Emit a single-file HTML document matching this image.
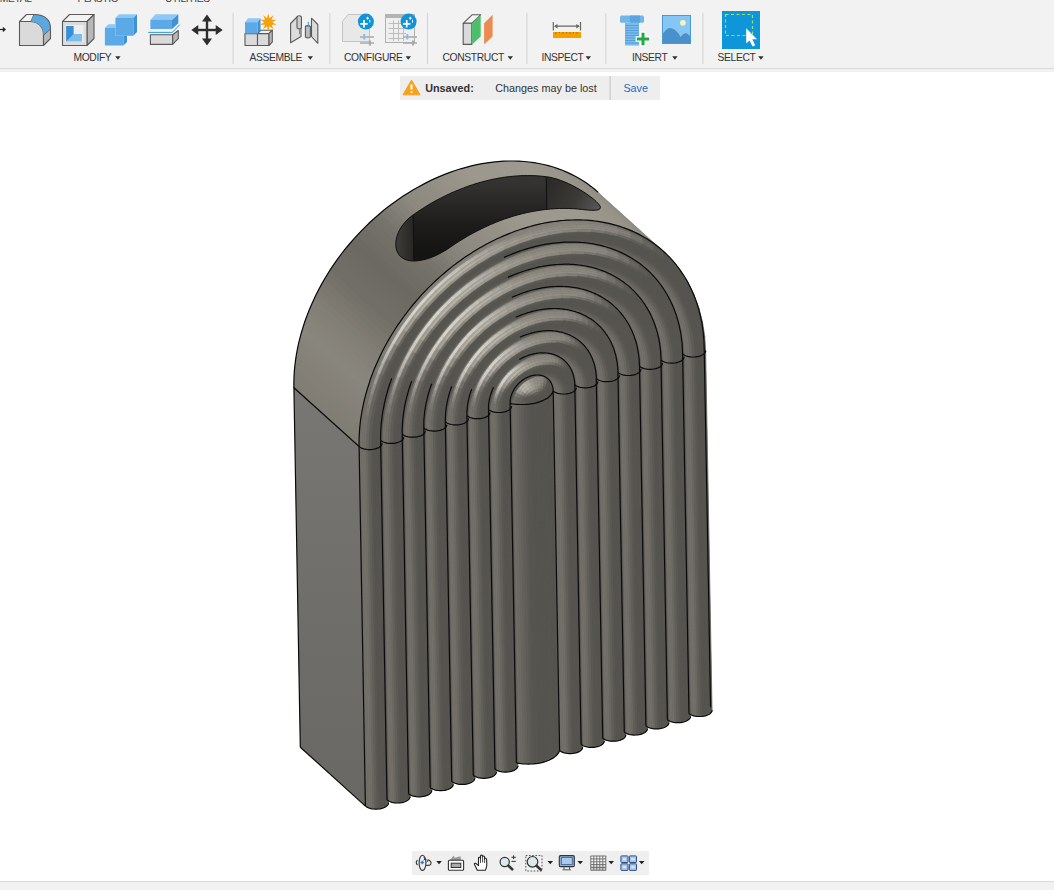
<!DOCTYPE html>
<html><head><meta charset="utf-8"><style>
html,body{margin:0;padding:0;width:1054px;height:890px;overflow:hidden;background:#fff;font-family:"Liberation Sans",sans-serif}
#tb{position:absolute;left:0;top:0;width:1054px;height:68px;background:#f2f2f2}
#tbl{position:absolute;left:0;top:68px;width:1054px;height:1px;background:#dadada}
#tbl2{position:absolute;left:0;top:69px;width:1054px;height:3px;background:#f1f1f1}
.lb{position:absolute;top:52.1px;font-size:10.3px;letter-spacing:-0.36px;color:#333;white-space:nowrap;line-height:12px}
.tl{position:absolute;top:-7.1px;font-size:10.3px;letter-spacing:-0.36px;color:#444;white-space:nowrap;line-height:12px}
#nb{position:absolute;left:400px;top:76px;width:260px;height:24px;background:#eeeeee}
.nt{position:absolute;top:81.6px;font-size:10.8px;line-height:13px;color:#333;white-space:nowrap}
#bb{position:absolute;left:412px;top:851px;width:237px;height:24px;background:#efefef}
#bl{position:absolute;left:0;top:881px;width:1054px;height:1px;background:#dadada}
#bg{position:absolute;left:0;top:882px;width:1054px;height:8px;background:#f1f1f1}
svg{position:absolute;left:0;top:0}
</style></head><body>
<div id="tb"></div><div id="tbl"></div><div id="tbl2"></div>
<div class="tl" style="left:-35px">SHEET METAL</div>
<div class="tl" style="left:77.4px">PLASTIC</div>
<div class="tl" style="left:165px">UTILITIES</div>
<div class="lb" style="left:73.5px">MODIFY</div>
<div class="lb" style="left:249.5px">ASSEMBLE</div>
<div class="lb" style="left:344px">CONFIGURE</div>
<div class="lb" style="left:442.5px">CONSTRUCT</div>
<div class="lb" style="left:541.4px">INSPECT</div>
<div class="lb" style="left:632px">INSERT</div>
<div class="lb" style="left:717.6px">SELECT</div>
<div id="nb"></div>
<div class="nt" style="left:425.2px;font-weight:bold">Unsaved:</div>
<div class="nt" style="left:495.3px">Changes may be lost</div>
<div class="nt" style="left:623.4px;color:#1a6fc0">Save</div>
<div id="bb"></div><div id="bl"></div><div id="bg"></div>
<svg width="1054" height="890" style="position:absolute;left:0;top:0"><defs><linearGradient id="lfg" gradientUnits="userSpaceOnUse" x1="0" y1="390" x2="0" y2="805"><stop offset="0" stop-color="#787773"/><stop offset="0.5" stop-color="#6f6e6a"/><stop offset="1" stop-color="#696864"/></linearGradient></defs><path d="M365.4 806.1l-6.3-359.6-65.2-58.8 6.4 359.5z" fill="url(#lfg)"/><path d="M293.9 387.7l0-4.8 .1-4.7 .2-4.8 .4-4.8 .5-4.8 .6-4.9 .8-4.9 .9-4.8 1-4.9 1.2-4.9 1.3-4.9 1.4-4.9 1.5-4.9 1.7-4.9 1.7-4.8 1.9-4.9 2.1-4.8 2.1-4.8 2.3-4.7 2.3-4.8 2.5-4.7 2.6-4.6 2.7-4.6 2.8-4.6 2.9-4.5 3.1-4.5 3.1-4.4 3.2-4.4 3.3-4.2 3.4-4.3 3.5-4.1 3.6-4.1 3.7-4 3.7-3.9 3.9-3.8 3.9-3.8 4-3.6 4-3.6 4.1-3.5 4.2-3.4 4.3-3.2 4.3-3.2 4.3-3.1 4.4-3 4.5-2.8 4.5-2.8 4.6-2.6 4.5-2.5 4.7-2.5 4.6-2.2 4.7-2.2 4.7-2.1 4.7-1.9 4.7-1.8 4.8-1.6 4.7-1.6 4.8-1.4 4.8-1.3 4.7-1.1 4.8-1.1 4.7-.9 4.8-.7 4.7-.6 4.7-.5 4.7-.4 4.6-.2 4.6-.1 4.6 .1 4.6 .1 4.5 .4 4.4 .4 4.4 .6 4.4 .7 4.3 .9 4.3 1 4.2 1.1 4.1 1.3 4 1.3 4 1.5 3.9 1.7 3.9 1.8 3.7 1.8 3.7 2.1 3.6 2.1 3.5 2.3 3.4 2.3 3.4 2.5 3.2 2.6 3.1 2.8 65.2 58.8-3.1-2.7-3.3-2.6-3.3-2.5-3.4-2.4-3.5-2.2-3.6-2.2-3.7-2-3.7-1.9-3.9-1.7-3.9-1.7-4-1.5-4-1.4-4.1-1.2-4.2-1.1-4.3-1-4.3-.9-4.4-.7-4.4-.6-4.4-.5-4.5-.3-4.6-.2-4.6 0-4.6 .1-4.6 .2-4.7 .4-4.7 .4-4.7 .7-4.8 .7-4.7 .9-4.8 1-4.7 1.2-4.8 1.3-4.8 1.4-4.7 1.5-4.8 1.7-4.7 1.8-4.7 1.9-4.7 2.1-4.7 2.1-4.6 2.3-4.7 2.4-4.5 2.6-4.6 2.6-4.5 2.7-4.5 2.9-4.4 3-4.3 3.1-4.3 3.1-4.3 3.3-4.2 3.4-4.1 3.5-4 3.5-4 3.7-3.9 3.8-3.9 3.8-3.7 3.9-3.7 4-3.6 4.1-3.5 4.1-3.4 4.2-3.3 4.3-3.2 4.4-3.1 4.4-3.1 4.5-2.9 4.5-2.8 4.5-2.7 4.7-2.6 4.6-2.5 4.7-2.3 4.7-2.3 4.8-2.1 4.8-2.1 4.8-1.9 4.9-1.7 4.8-1.7 4.9-1.5 4.9-1.4 4.9-1.3 4.9-1.2 4.9-1 4.8-.9 4.9-.8 4.9-.6 4.8-.5 4.9-.4 4.8-.2 4.8-.2 4.7 .1 4.7z" fill="#8e8b84"/><g fill="currentColor"><path d="M293.9 387.7l0-6.9 65.2 58.9 0 6.8z" color="#807d74"/><path d="M293.8 385.1l.3-9.1 65.2 58.9-.3 9.1z" color="#807d75"/><path d="M293.9 380.3l.5-9.1 65.2 58.9-.5 9.1z" color="#817e75"/><path d="M294.1 375.6l.7-9.2 65.2 58.9-.7 9.1z" color="#827e76"/><path d="M294.4 370.8l1-9.2 65.2 58.9-1 9.1z" color="#827f77"/><path d="M294.9 365.9l1.2-9.2 65.2 58.9-1.3 9.2z" color="#838077"/><path d="M295.4 361.1l1.5-9.2 65.2 58.8-1.5 9.3z" color="#848078"/><path d="M296.1 356.2l1.7-9.2 65.2 58.8-1.7 9.3z" color="#858179"/><path d="M297 351.4l1.9-9.3 65.2 58.9-1.9 9.2z" color="#86827a"/><path d="M297.9 346.5l2.2-9.3 65.2 58.9-2.2 9.3z" color="#87837a"/><path d="M299 341.6l2.5-9.3 65.2 58.9-2.5 9.3z" color="#87847b"/><path d="M300.3 336.7l2.6-9.3 65.2 58.9-2.6 9.3z" color="#88857c"/><path d="M301.6 331.8l2.9-9.3 65.2 58.9-2.9 9.3z" color="#89867d"/><path d="M303.1 326.9l3.1-9.2 65.2 58.8-3.1 9.3z" color="#88857c"/><path d="M304.7 322l3.4-9.2 65.2 58.9-3.4 9.2z" color="#87847b"/><path d="M306.4 317.2l3.6-9.2 65.2 58.9-3.6 9.2z" color="#86837a"/><path d="M308.3 312.3l3.8-9.1 65.2 58.8-3.8 9.2z" color="#858179"/><path d="M310.2 307.5l4.1-9.1 65.2 58.9-4.1 9.1z" color="#838077"/><path d="M312.3 302.7l4.3-9.1 65.2 58.9-4.3 9.1z" color="#827f76"/><path d="M314.5 297.9l4.5-9 65.2 58.9-4.5 9z" color="#807d75"/><path d="M316.8 293.2l4.8-9 65.2 58.9-4.8 8.9z" color="#7e7a72"/><path d="M319.3 288.4l4.9-8.8 65.2 58.9-4.9 8.8z" color="#7b7870"/><path d="M321.8 283.8l5.2-8.8 65.2 58.9-5.2 8.7z" color="#79766e"/><path d="M324.5 279.1l5.3-8.7 65.2 58.9-5.3 8.7z" color="#76736b"/><path d="M327.2 274.5l5.6-8.5 65.2 58.8-5.6 8.6z" color="#737169"/><path d="M330.1 270l5.8-8.5 65.1 58.9-5.7 8.5z" color="#716e67"/><path d="M333.1 265.5l5.9-8.4 65.2 58.9-5.9 8.4z" color="#706e66"/><path d="M336.2 261.1l6.1-8.3 65.2 58.9-6.1 8.3z" color="#6f6d65"/><path d="M339.3 256.7l6.3-8.1 65.2 58.8-6.3 8.2z" color="#6e6c64"/><path d="M342.6 252.4l6.5-8 65.2 58.9-6.5 8z" color="#6e6b64"/><path d="M346 248.1l6.6-7.8 65.2 58.8-6.6 7.9z" color="#6d6a63"/><path d="M349.4 244l6.8-7.8 65.2 58.9-6.8 7.7z" color="#6c6962"/><path d="M353 239.9l7-7.6 65.2 58.8-7 7.6z" color="#6d6a63"/><path d="M356.6 235.8l7.1-7.4 65.2 58.9-7.1 7.4z" color="#6e6c65"/><path d="M360.3 231.9l7.3-7.3 65.2 58.9-7.3 7.2z" color="#706d66"/><path d="M364.1 228l7.5-7.1 65.2 58.8-7.5 7.2z" color="#726f67"/><path d="M368 224.2l7.6-7 65.2 58.9-7.6 7z" color="#737069"/><path d="M372 220.5l7.7-6.8 65.2 58.9-7.7 6.8z" color="#75726a"/><path d="M376 216.9l7.8-6.6 65.2 58.9-7.8 6.6z" color="#77746d"/><path d="M380.1 213.4l7.9-6.5 65.2 58.9-7.9 6.5z" color="#7b7870"/><path d="M384.2 209.9l8.1-6.2 65.2 58.9-8.1 6.2z" color="#7e7b73"/><path d="M388.4 206.6l8.2-6 65.2 58.9-8.2 6z" color="#827f76"/><path d="M392.7 203.4l8.3-5.9 65.2 58.9-8.3 5.9z" color="#858279"/><path d="M397.1 200.3l8.3-5.7 65.2 58.9-8.3 5.6z" color="#89857d"/><path d="M401.5 197.3l8.4-5.5 65.2 58.9-8.4 5.4z" color="#8c887f"/><path d="M405.9 194.3l8.5-5.2 65.2 58.9-8.5 5.2z" color="#8d8a80"/><path d="M410.4 191.5l8.6-5 65.2 58.9-8.6 5z" color="#8e8b81"/><path d="M414.9 188.8l8.7-4.7 65.2 58.8-8.7 4.8z" color="#908c83"/><path d="M419.5 186.3l8.7-4.6 65.2 58.9-8.7 4.6z" color="#918d84"/><path d="M424.1 183.8l8.8-4.3 65.2 58.8-8.8 4.4z" color="#928e85"/><path d="M428.7 181.5l8.9-4.1 65.2 58.8-8.9 4.2z" color="#939086"/><path d="M433.4 179.2l8.9-3.8 65.2 58.8-8.9 3.9z" color="#959187"/><path d="M438.1 177.1l8.9-3.6 65.2 58.9-8.9 3.6z" color="#969288"/><path d="M442.8 175.2l9-3.4 65.2 58.8-9 3.5z" color="#97938a"/><path d="M447.5 173.3l9-3.2 65.2 58.9-9 3.2z" color="#98958b"/><path d="M452.2 171.6l9.1-2.9 65.2 58.8-9.1 3z" color="#9a968c"/><path d="M457 170l9-2.7 65.2 58.9-9 2.7z" color="#9b978d"/><path d="M461.8 168.5l9-2.4 65.2 58.9-9.1 2.4z" color="#9c988e"/><path d="M466.5 167.2l9.1-2.2 65.2 58.9-9.1 2.1z" color="#9c988e"/><path d="M471.3 166l9-2 65.2 58.9-9 1.9z" color="#9c988e"/><path d="M476 164.9l9.1-1.7 65.2 58.9-9.1 1.7z" color="#9c988e"/><path d="M480.8 163.9l9-1.4 65.2 58.9-9 1.4z" color="#9c988e"/><path d="M485.5 163.1l9-1.2 65.2 58.9-9 1.2z" color="#9c988e"/><path d="M490.3 162.4l8.9-.9 65.2 58.9-8.9 .9z" color="#9d998e"/><path d="M495 161.9l8.9-.7 65.2 58.9-8.9 .7z" color="#9d998f"/><path d="M499.7 161.5l8.8-.5 65.2 58.9-8.8 .4z" color="#9d998f"/><path d="M504.3 161.2l8.8-.2 65.2 58.9-8.8 .2z" color="#9d998f"/><path d="M509 161l8.7 .1 65.2 58.9-8.7-.1z" color="#9d998f"/><path d="M513.6 161l8.6 .4 65.2 58.9-8.6-.4z" color="#9d998f"/><path d="M518.1 161.1l8.6 .7 65.2 58.8-8.6-.6z" color="#9d9a8f"/><path d="M522.6 161.4l8.5 .9 65.2 58.9-8.5-.9z" color="#9d998f"/><path d="M527.1 161.8l8.4 1.1 65.2 58.9-8.4-1.1z" color="#9c988e"/><path d="M531.6 162.3l8.3 1.4 65.2 58.9-8.3-1.4z" color="#9c988e"/><path d="M536 163l8.1 1.6 65.2 58.9-8.2-1.6z" color="#9b978d"/><path d="M540.3 163.8l8.1 1.9 65.2 58.9-8.1-1.9z" color="#9a968c"/><path d="M544.6 164.7l7.9 2.2 65.2 58.8-7.9-2.1z" color="#9a968c"/><path d="M548.8 165.8l7.8 2.4 65.2 58.8-7.8-2.3z" color="#99958b"/><path d="M552.9 167l7.7 2.6 65.2 58.9-7.7-2.6z" color="#98958b"/><path d="M557 168.3l7.6 2.9 65.2 58.9-7.6-2.9z" color="#98948a"/><path d="M561 169.8l7.5 3.1 65.2 58.8-7.5-3.1z" color="#97938a"/><path d="M565 171.3l7.3 3.4 65.2 58.9-7.3-3.4z" color="#979389"/><path d="M568.9 173l7.1 3.6 65.2 58.9-7.1-3.6z" color="#969288"/><path d="M572.7 174.9l6.9 3.8 65.2 58.9-6.9-3.8z" color="#959188"/><path d="M576.4 176.8l6.8 4.1 65.2 58.9-6.8-4.1z" color="#949086"/><path d="M580 178.9l6.7 4.3 65.2 58.9-6.7-4.3z" color="#928f85"/><path d="M583.6 181.1l6.4 4.5 65.2 58.9-6.5-4.5z" color="#918d84"/><path d="M587 183.4l6.3 4.8 65.2 58.9-6.3-4.8z" color="#8f8c82"/><path d="M590.4 185.9l6.1 4.9 65.2 58.9-6.1-4.9z" color="#8e8a81"/><path d="M593.6 188.4l4.6 4 65.2 58.8-4.6-3.9z" color="#8c8980"/></g><defs><linearGradient id="bwg" gradientUnits="userSpaceOnUse" x1="0" y1="182.6" x2="0" y2="252.6"><stop offset="0" stop-color="#353331"/><stop offset="0.6" stop-color="#1d1c1b"/><stop offset="1" stop-color="#141413"/></linearGradient><linearGradient id="lcg" gradientUnits="userSpaceOnUse" x1="396" y1="0" x2="416" y2="0"><stop offset="0" stop-color="#3f3d3a"/><stop offset="1" stop-color="#242321"/></linearGradient><linearGradient id="rcg" gradientUnits="userSpaceOnUse" x1="548" y1="182" x2="598" y2="212"><stop offset="0" stop-color="#2b2a28"/><stop offset="0.55" stop-color="#3a3936"/><stop offset="1" stop-color="#5a5854"/></linearGradient></defs><clipPath id="slotclip"><path d="M413.1 214.9L417.7 211.7L422.2 208.8L426.8 205.9L431.3 203.2L435.9 200.6L440.5 198.2L445.1 195.9L449.6 193.7L454.2 191.7L458.8 189.8L463.4 188L467.9 186.3L472.5 184.7L477.1 183.3L481.7 182L486.3 180.8L490.9 179.7L495.5 178.7L500.1 177.9L504.7 177.2L509.3 176.6L513.9 176.2L518.5 175.8L523.1 175.6L527.7 175.6L532.3 175.6L536.9 175.8L541.6 176.2L546.2 176.7L546.2 176.7L549.7 177.2L553.3 178.1L557.1 179.1L560.9 180.5L564.8 182L568.7 183.7L572.6 185.6L576.3 187.6L579.9 189.7L583.4 191.8L586.6 193.9L589.5 196L592.2 198L594.5 199.9L596.4 201.7L598 203.3L599.2 204.8L600 206L600.4 207.2L600.3 208.1L599.9 208.8L599 209.4L597.7 209.9L596 210.1L593.9 210.3L591.5 210.3L588.8 210.1L585.8 209.9L582.6 209.5L582.6 209.5L577.9 209L573.3 208.7L568.7 208.5L564.1 208.4L559.5 208.5L554.9 208.7L550.3 209L545.7 209.5L541.1 210.1L536.5 210.8L531.9 211.6L527.3 212.5L522.7 213.6L518.1 214.8L513.5 216.1L508.9 217.6L504.3 219.1L499.7 220.8L495.2 222.6L490.6 224.5L486 226.6L481.4 228.8L476.9 231.1L472.3 233.5L467.7 236.1L463.2 238.8L458.6 241.6L454 244.6L449.5 247.7L449.5 247.7L446.1 250L442.5 252.1L438.8 254.1L434.9 255.9L431.1 257.5L427.3 258.8L423.5 259.8L419.8 260.5L416.2 260.9L412.8 261L409.6 260.7L406.7 260L404.1 259L401.8 257.5L399.8 255.8L398.2 253.6L397 251.2L396.2 248.5L395.8 245.6L395.8 242.5L396.2 239.3L397.1 236L398.3 232.6L399.9 229.3L401.9 226.1L404.3 223L406.9 220.1L409.9 217.3L413.1 214.9Z"/></clipPath><g clip-path="url(#slotclip)"><path d="M413.1 214.9L417.7 211.7L422.2 208.8L426.8 205.9L431.3 203.2L435.9 200.6L440.5 198.2L445.1 195.9L449.6 193.7L454.2 191.7L458.8 189.8L463.4 188L467.9 186.3L472.5 184.7L477.1 183.3L481.7 182L486.3 180.8L490.9 179.7L495.5 178.7L500.1 177.9L504.7 177.2L509.3 176.6L513.9 176.2L518.5 175.8L523.1 175.6L527.7 175.6L532.3 175.6L536.9 175.8L541.6 176.2L546.2 176.7L546.2 176.7L549.7 177.2L553.3 178.1L557.1 179.1L560.9 180.5L564.8 182L568.7 183.7L572.6 185.6L576.3 187.6L579.9 189.7L583.4 191.8L586.6 193.9L589.5 196L592.2 198L594.5 199.9L596.4 201.7L598 203.3L599.2 204.8L600 206L600.4 207.2L600.3 208.1L599.9 208.8L599 209.4L597.7 209.9L596 210.1L593.9 210.3L591.5 210.3L588.8 210.1L585.8 209.9L582.6 209.5L582.6 209.5L577.9 209L573.3 208.7L568.7 208.5L564.1 208.4L559.5 208.5L554.9 208.7L550.3 209L545.7 209.5L541.1 210.1L536.5 210.8L531.9 211.6L527.3 212.5L522.7 213.6L518.1 214.8L513.5 216.1L508.9 217.6L504.3 219.1L499.7 220.8L495.2 222.6L490.6 224.5L486 226.6L481.4 228.8L476.9 231.1L472.3 233.5L467.7 236.1L463.2 238.8L458.6 241.6L454 244.6L449.5 247.7L449.5 247.7L446.1 250L442.5 252.1L438.8 254.1L434.9 255.9L431.1 257.5L427.3 258.8L423.5 259.8L419.8 260.5L416.2 260.9L412.8 261L409.6 260.7L406.7 260L404.1 259L401.8 257.5L399.8 255.8L398.2 253.6L397 251.2L396.2 248.5L395.8 245.6L395.8 242.5L396.2 239.3L397.1 236L398.3 232.6L399.9 229.3L401.9 226.1L404.3 223L406.9 220.1L409.9 217.3L413.1 214.9Z" fill="#1f1e1c"/><path d="M398 253.4l-.5-1.1-.5-1.1-.4-1.1-.4-1.3-.2-1.2-.2-1.3-.1-1.4 0-1.3 .1-1.5 .2-1.4 .2-1.4 .3-1.5 .4-1.5 .5-1.5 .6-1.4 .6-1.5 .8-1.5 .7-1.5 .9-1.4 .9-1.4 1-1.4 1.1-1.4 1.1-1.3 1.2-1.3 1.3-1.3 1.3-1.2 1.3-1.1 1.5-1.2 1.4-1 3.8 212.8-1.5 1-1.4 1.1-1.3 1.2-1.3 1.2-1.3 1.3-1.2 1.3-1.1 1.3-1.1 1.4-1 1.4-.9 1.4-.9 1.4-.8 1.5-.7 1.5-.6 1.5-.6 1.4-.5 1.5-.4 1.5-.3 1.5-.3 1.4-.1 1.4-.1 1.4 0 1.4 .1 1.4 .2 1.3 .2 1.2 .3 1.2 .5 1.2 .4 1.1 .6 1.1z" fill="url(#lcg)"/><path d="M413.1 214.9L417.7 211.7L422.2 208.8L426.8 205.9L431.3 203.2L435.9 200.6L440.5 198.2L445.1 195.9L449.6 193.7L454.2 191.7L458.8 189.8L463.4 188L467.9 186.3L472.5 184.7L477.1 183.3L481.7 182L486.3 180.8L490.9 179.7L495.5 178.7L500.1 177.9L504.7 177.2L509.3 176.6L513.9 176.2L518.5 175.8L523.1 175.6L527.7 175.6L532.3 175.6L536.9 175.8L541.6 176.2L546.2 176.7L550 389.5L545.3 389L540.7 388.6L536.1 388.4L531.5 388.4L526.9 388.4L522.3 388.6L517.7 389L513.1 389.4L508.5 390L503.9 390.7L499.3 391.5L494.7 392.5L490.1 393.6L485.5 394.8L480.9 396.1L476.3 397.5L471.7 399.1L467.1 400.8L462.6 402.6L458 404.5L453.4 406.5L448.8 408.7L444.3 411L439.7 413.4L435.1 416L430.6 418.7L426 421.5L421.4 424.5L416.9 427.7Z" fill="url(#bwg)"/><path d="M546.2 176.7l2.3 .3 2.3 .5 2.5 .6 2.5 .7 2.5 .8 2.6 .9 2.6 1 2.6 1 2.6 1.2 2.6 1.2 2.5 1.3 2.5 1.4 2.4 1.4 2.4 1.4 2.3 1.4 2.1 1.4 2.1 1.4 1.9 1.4 1.8 1.3 1.7 1.3 1.5 1.3 1.3 1.2 1.2 1.1 1 1.1 .9 1 .6 .9 .5 .8 .3 .8 .1 .7 3.8 212.8-.1-.7-.3-.8-.5-.8-.6-.9-.9-1-1-1.1-1.2-1.1-1.3-1.2-1.6-1.3-1.6-1.3-1.8-1.3-1.9-1.4-2.1-1.4-2.2-1.4-2.2-1.4-2.4-1.4-2.4-1.4-2.5-1.4-2.5-1.3-2.6-1.2-2.6-1.2-2.6-1-2.6-1-2.6-.9-2.5-.8-2.5-.7-2.5-.6-2.3-.5-2.3-.3z" fill="url(#rcg)"/><path d="M413.1 214.9L416.9 427.7" stroke="#111" stroke-width="1" fill="none"/><path d="M546.2 176.7L550 389.5" stroke="#111" stroke-width="1" fill="none"/></g><path d="M413.1 214.9L417.7 211.7L422.2 208.8L426.8 205.9L431.3 203.2L435.9 200.6L440.5 198.2L445.1 195.9L449.6 193.7L454.2 191.7L458.8 189.8L463.4 188L467.9 186.3L472.5 184.7L477.1 183.3L481.7 182L486.3 180.8L490.9 179.7L495.5 178.7L500.1 177.9L504.7 177.2L509.3 176.6L513.9 176.2L518.5 175.8L523.1 175.6L527.7 175.6L532.3 175.6L536.9 175.8L541.6 176.2L546.2 176.7L546.2 176.7L549.7 177.2L553.3 178.1L557.1 179.1L560.9 180.5L564.8 182L568.7 183.7L572.6 185.6L576.3 187.6L579.9 189.7L583.4 191.8L586.6 193.9L589.5 196L592.2 198L594.5 199.9L596.4 201.7L598 203.3L599.2 204.8L600 206L600.4 207.2L600.3 208.1L599.9 208.8L599 209.4L597.7 209.9L596 210.1L593.9 210.3L591.5 210.3L588.8 210.1L585.8 209.9L582.6 209.5L582.6 209.5L577.9 209L573.3 208.7L568.7 208.5L564.1 208.4L559.5 208.5L554.9 208.7L550.3 209L545.7 209.5L541.1 210.1L536.5 210.8L531.9 211.6L527.3 212.5L522.7 213.6L518.1 214.8L513.5 216.1L508.9 217.6L504.3 219.1L499.7 220.8L495.2 222.6L490.6 224.5L486 226.6L481.4 228.8L476.9 231.1L472.3 233.5L467.7 236.1L463.2 238.8L458.6 241.6L454 244.6L449.5 247.7L449.5 247.7L446.1 250L442.5 252.1L438.8 254.1L434.9 255.9L431.1 257.5L427.3 258.8L423.5 259.8L419.8 260.5L416.2 260.9L412.8 261L409.6 260.7L406.7 260L404.1 259L401.8 257.5L399.8 255.8L398.2 253.6L397 251.2L396.2 248.5L395.8 245.6L395.8 242.5L396.2 239.3L397.1 236L398.3 232.6L399.9 229.3L401.9 226.1L404.3 223L406.9 220.1L409.9 217.3L413.1 214.9Z" fill="none" stroke="#111" stroke-width="1"/><path d="M359.1 446.5l0 0 .1-9.1 .5-9.2 1.1-9.4 1.5-9.4 2.1-9.4 2.5-9.4 2.9-9.4 3.4-9.4 3.9-9.3 4.3-9.2 4.8-9.1 5.1-8.9 5.6-8.8 5.9-8.5 6.3-8.4 6.6-8 7-7.9 7.3-7.5 7.5-7.2 7.9-6.8 8-6.5 8.3-6.2 8.5-5.7 8.7-5.4 8.8-4.9 9-4.5 9-4 9.1-3.6 9.2-3.1 9.2-2.6 9.2-2.2 9.1-1.6 9.1-1.2 9-.6 8.9-.2 8.8 .4 8.6 .8 8.5 1.4 8.2 1.8 8 2.3 7.7 2.9 7.5 3.2 7.2 3.8 6.8 4.2 6.6 4.7 6.1 5.1 5.8 5.5 5.5 5.9 5 6.3 4.6 6.6 4.1 7 3.7 7.4 3.3 7.6 2.8 7.9 2.3 8.2 1.9 8.4 1.4 8.6 .9 8.9 .4 9 0 0 6.4 359.5 1.1 2.3-.3 1-.5 .9-.6 .7-.8 .6-.8 .5-.9 .5-1 .4-1 .4-1 .3-1.1 .3-1.2 .2-1.2 .2-1.3 .2-1.3 .1-1.4 0-1.5-.1-1.6-.2-1.9-.5-3.3-1.6 1.1 2.3-.3 1-.5 .8-.6 .7-.8 .6-.8 .6-.9 .5-.9 .4-1 .4-1.1 .3-1.1 .3-1.1 .2-1.3 .2-1.2 .1-1.4 .1-1.4 0-1.5 0-1.6-.2-1.9-.5-3.3-1.6 1.1 2.2-.2 1.1-.5 .8-.7 .7-.7 .6-.9 .6-.9 .4-.9 .5-1 .3-1.1 .4-1.1 .2-1.1 .3-1.2 .2-1.3 .1-1.3 .1-1.4 0-1.5-.1-1.7-.2-1.9-.4-3.2-1.7 1.1 2.3-.3 1.1-.5 .8-.7 .7-.7 .6-.8 .5-.9 .5-1 .4-1 .4-1 .3-1.1 .3-1.2 .3-1.2 .2-1.3 .1-1.3 .1-1.4 0-1.5-.1-1.7-.2-1.9-.4-3.2-1.7 1.1 2.3-.3 1-.5 .9-.6 .7-.8 .6-.8 .5-.9 .5-.9 .4-1 .4-1.1 .3-1.1 .3-1.2 .2-1.2 .2-1.2 .2-1.4 0-1.4 .1-1.5-.1-1.6-.2-1.9-.5-3.3-1.6 1.1 2.3-.2 1-.5 .8-.7 .7-.7 .6-.9 .6-.9 .5-.9 .4-1 .4-1.1 .3-1.1 .3-1.1 .2-1.2 .2-1.3 .1-1.3 .1-1.4 0-1.5 0-1.7-.3-1.9-.4-3.3-1.6 1.1 2.2-.2 1.1-.5 .8-.7 .7-.7 .6-.8 .5-.9 .5-1 .5-1 .3-1 .4-1.1 .2-1.2 .3-1.2 .2-1.3 .1-1.3 .1-1.4 0-1.5-.1-1.7-.2-1.9-.4-3.2-1.7-.5 .9-.5 .8-.6 .8-.6 .7-.7 .6-.7 .7-.8 .6-.8 .5-.8 .6-.9 .5-.8 .5-.9 .5-.9 .4-1 .4-1 .4-.9 .4-1 .4-1.1 .4-1 .3-1.1 .3-1.1 .3-1.1 .3-1.1 .3-1.2 .2-1.1 .2-1.2 .2-1.2 .2-1.3 .2-1.2 .1-1.3 .2-1.3 .1-1.4 0-1.3 .1-1.4 0-1.5 0-1.4-.1-1.6 0-1.5-.2-1.7-.2-1.7-.2 1.1 2.3-.2 1-.5 .8-.7 .7-.7 .6-.9 .6-.8 .4-1 .5-1 .4-1 .3-1.2 .3-1.1 .2-1.2 .2-1.3 .1-1.3 .1-1.4 0-1.5 0-1.7-.3-1.9-.4-3.2-1.6 1.1 2.2-.3 1.1-.5 .8-.6 .7-.8 .6-.8 .5-.9 .5-1 .4-1 .4-1 .4-1.1 .2-1.2 .3-1.2 .2-1.2 .1-1.4 .1-1.4 0-1.5-.1-1.6-.2-1.9-.4-3.3-1.7 1.1 2.3-.3 1.1-.5 .8-.6 .7-.8 .6-.8 .5-.9 .5-.9 .4-1 .4-1.1 .3-1.1 .3-1.1 .3-1.3 .1-1.2 .2-1.3 .1-1.5 0-1.5-.1-1.6-.2-1.9-.4-3.3-1.7 1.1 2.3-.2 1-.5 .9-.7 .6-.7 .7-.9 .5-.9 .5-.9 .4-1 .4-1.1 .3-1.1 .3-1.1 .2-1.2 .2-1.3 .2-1.3 0-1.4 .1-1.5-.1-1.7-.2-1.9-.5-3.2-1.6 1.1 2.3-.3 1-.5 .8-.7 .7-.7 .6-.8 .6-.9 .4-1 .5-1 .3-1 .4-1.1 .3-1.2 .2-1.2 .2-1.3 .1-1.3 .1-1.4 0-1.5-.1-1.7-.2-1.9-.4-3.2-1.7 1.1 2.3-.3 1.1-.5 .8-.6 .7-.8 .6-.8 .5-.9 .5-.9 .4-1 .4-1.1 .4-1.1 .2-1.2 .3-1.2 .2-1.2 .1-1.4 .1-1.4 0-1.5-.1-1.6-.2-1.9-.4-3.3-1.7 1.1 2.3-.2 1-.5 .9-.7 .7-.7 .6-.9 .5-.9 .5-.9 .4-1 .4-1.1 .3-1.1 .3-1.1 .3-1.2 .1-1.3 .2-1.3 .1-1.4 0-1.5-.1-1.7-.2-1.9-.4-3.3-1.7z" fill="#5d5b56"/><g fill="currentColor" stroke="currentColor" stroke-width=".3"><path d="M712.1 710.1l-.1 .9-6.4-359.5 .1-1z" color="#686660"/><path d="M712 711l-.4 1-6.4-359.6 .4-.9z" color="#5f5d58"/><path d="M711.6 712l-.7 .9-6.4-359.6 .7-.9z" color="#585651"/><path d="M710.9 712.9l-1 .8-6.4-359.5 1-.9z" color="#56544f"/><path d="M690 714.3l-1-.8-6.4-359.6 1.1 .8z" color="#74716b"/><path d="M709.9 713.7l-1.2 .8-6.4-359.6 1.2-.7z" color="#56544f"/><path d="M691.3 715l-1.3-.7-6.3-359.6 1.3 .7z" color="#74716b"/><path d="M708.7 714.5l-1.4 .7-6.4-359.6 1.4-.7z" color="#56544f"/><path d="M692.8 715.6l-1.5-.6-6.3-359.6 1.5 .6z" color="#74716b"/><path d="M707.3 715.2l-1.6 .5-6.4-359.5 1.6-.6z" color="#56544f"/><path d="M694.5 716l-1.7-.4-6.3-359.6 1.6 .5z" color="#74716b"/><path d="M705.7 715.7l-1.8 .4-6.4-359.5 1.8-.4z" color="#56544f"/><path d="M696.3 716.3l-1.8-.3-6.4-359.5 1.8 .3z" color="#726f68"/><path d="M703.9 716.1l-1.9 .3-6.3-359.5 1.8-.3z" color="#56544f"/><path d="M698.2 716.5l-1.9-.2-6.4-359.5 1.9 .2z" color="#6b6862"/><path d="M702 716.4l-1.9 .1-6.4-359.5 2-.1z" color="#5a5853"/><path d="M700.1 716.5l-1.9 0-6.4-359.5 1.9 0z" color="#625f5a"/><path d="M690.5 716.2l-.1 1-6.4-359.6 .1-.9z" color="#686660"/><path d="M690.4 717.2l-.4 .9-6.4-359.5 .4-1z" color="#5f5d58"/><path d="M690 718.1l-.7 1-6.4-359.6 .7-.9z" color="#585651"/><path d="M689.3 719.1l-1 .8-6.3-359.5 .9-.9z" color="#56544f"/><path d="M668.5 720.5l-1.1-.8-6.4-359.6 1.1 .8z" color="#74716b"/><path d="M688.3 719.9l-1.2 .8-6.3-359.6 1.2-.7z" color="#56544f"/><path d="M669.8 721.1l-1.3-.6-6.4-359.6 1.3 .7z" color="#74716b"/><path d="M687.1 720.7l-1.4 .6-6.4-359.5 1.5-.7z" color="#56544f"/><path d="M671.3 721.7l-1.5-.6-6.4-359.5 1.5 .6z" color="#74716b"/><path d="M685.7 721.3l-1.6 .6-6.4-359.6 1.6-.5z" color="#56544f"/><path d="M672.9 722.2l-1.6-.5-6.4-359.5 1.7 .4z" color="#74716b"/><path d="M684.1 721.9l-1.8 .4-6.3-359.5 1.7-.5z" color="#56544f"/><path d="M674.7 722.5l-1.8-.3-6.3-359.6 1.8 .4z" color="#726f68"/><path d="M682.3 722.3l-1.8 .3-6.4-359.6 1.9-.2z" color="#56544f"/><path d="M676.6 722.7l-1.9-.2-6.3-359.5 1.9 .1z" color="#6b6862"/><path d="M680.5 722.6l-1.9 .1-6.4-359.5 1.9-.2z" color="#5a5853"/><path d="M678.6 722.7l-2 0-6.3-359.6 1.9 .1z" color="#625f5a"/><path d="M668.9 722.4l-.1 1-6.4-359.6 .1-.9z" color="#686660"/><path d="M668.8 723.4l-.4 .9-6.4-359.5 .4-1z" color="#5f5d58"/><path d="M668.4 724.3l-.7 .9-6.3-359.5 .6-.9z" color="#585651"/><path d="M667.7 725.2l-.9 .9-6.4-359.6 1-.8z" color="#56544f"/><path d="M646.9 726.6l-1-.8-6.4-359.5 1 .8z" color="#74716b"/><path d="M666.8 726.1l-1.2 .7-6.4-359.5 1.2-.8z" color="#56544f"/><path d="M648.2 727.3l-1.3-.7-6.4-359.5 1.3 .7z" color="#74716b"/><path d="M665.6 726.8l-1.5 .7-6.3-359.5 1.4-.7z" color="#56544f"/><path d="M649.7 727.9l-1.5-.6-6.4-359.5 1.5 .6z" color="#74716b"/><path d="M664.1 727.5l-1.6 .6-6.4-359.6 1.7-.5z" color="#56544f"/><path d="M651.4 728.4l-1.7-.5-6.4-359.5 1.7 .4z" color="#74716b"/><path d="M662.5 728.1l-1.7 .4-6.4-359.6 1.7-.4z" color="#56544f"/><path d="M653.2 728.7l-1.8-.3-6.4-359.6 1.8 .3z" color="#726f68"/><path d="M660.8 728.5l-1.9 .3-6.4-359.6 1.9-.3z" color="#56544f"/><path d="M655.1 728.9l-1.9-.2-6.4-359.6 1.9 .2z" color="#6b6862"/><path d="M658.9 728.8l-1.9 .1-6.4-359.6 1.9-.1z" color="#5a5853"/><path d="M657 728.9l-1.9 0-6.4-359.6 1.9 0z" color="#625f5a"/><path d="M647.3 728.6l0 .9-6.4-359.5 .1-1z" color="#686660"/><path d="M647.3 729.5l-.4 1-6.4-359.6 .4-.9z" color="#5f5d58"/><path d="M646.9 730.5l-.7 .9-6.4-359.5 .7-1z" color="#585651"/><path d="M646.2 731.4l-1 .9-6.4-359.6 1-.8z" color="#56544f"/><path d="M625.3 732.8l-1-.8-6.4-359.5 1.1 .7z" color="#74716b"/><path d="M645.2 732.3l-1.2 .7-6.4-359.5 1.2-.8z" color="#56544f"/><path d="M626.6 733.5l-1.3-.7-6.3-359.6 1.3 .7z" color="#74716b"/><path d="M644 733l-1.4 .7-6.4-359.6 1.4-.6z" color="#56544f"/><path d="M628.1 734.1l-1.5-.6-6.3-359.6 1.5 .6z" color="#74716b"/><path d="M642.6 733.7l-1.6 .5-6.4-359.5 1.6-.6z" color="#56544f"/><path d="M629.8 734.5l-1.7-.4-6.3-359.6 1.6 .5z" color="#74716b"/><path d="M641 734.2l-1.8 .5-6.4-359.6 1.8-.4z" color="#56544f"/><path d="M631.6 734.9l-1.8-.4-6.4-359.5 1.8 .3z" color="#726f68"/><path d="M639.2 734.7l-1.9 .2-6.3-359.5 1.8-.3z" color="#56544f"/><path d="M633.5 735l-1.9-.1-6.4-359.6 1.9 .2z" color="#6b6862"/><path d="M637.3 734.9l-1.9 .2-6.4-359.6 2-.1z" color="#5a5853"/><path d="M635.4 735.1l-1.9-.1-6.4-359.5 1.9 0z" color="#625f5a"/><path d="M625.8 734.8l-.1 .9-6.4-359.5 .1-1z" color="#686660"/><path d="M625.7 735.7l-.4 1-6.4-359.6 .4-.9z" color="#5f5d58"/><path d="M625.3 736.7l-.7 .9-6.4-359.6 .7-.9z" color="#585651"/><path d="M624.6 737.6l-1 .8-6.3-359.5 .9-.9z" color="#56544f"/><path d="M603.8 739l-1.1-.8-6.4-359.6 1.1 .8z" color="#74716b"/><path d="M623.6 738.4l-1.2 .8-6.4-359.6 1.3-.7z" color="#56544f"/><path d="M605.1 739.7l-1.3-.7-6.4-359.6 1.3 .7z" color="#74716b"/><path d="M622.4 739.2l-1.4 .7-6.4-359.6 1.4-.7z" color="#56544f"/><path d="M606.6 740.3l-1.5-.6-6.4-359.6 1.5 .6z" color="#74716b"/><path d="M621 739.9l-1.6 .5-6.4-359.5 1.6-.6z" color="#56544f"/><path d="M608.2 740.7l-1.6-.4-6.4-359.6 1.7 .5z" color="#74716b"/><path d="M619.4 740.4l-1.8 .4-6.4-359.5 1.8-.4z" color="#56544f"/><path d="M610 741l-1.8-.3-6.3-359.5 1.8 .3z" color="#726f68"/><path d="M617.6 740.8l-1.8 .3-6.4-359.6 1.8-.2z" color="#56544f"/><path d="M611.9 741.2l-1.9-.2-6.3-359.5 1.8 .2z" color="#6b6862"/><path d="M615.8 741.1l-2 .1-6.3-359.5 1.9-.2z" color="#5a5853"/><path d="M613.8 741.2l-1.9 0-6.4-359.5 2 0z" color="#625f5a"/><path d="M604.2 740.9l-.1 1-6.4-359.6 .1-.9z" color="#686660"/><path d="M604.1 741.9l-.4 .9-6.4-359.5 .4-1z" color="#5f5d58"/><path d="M603.7 742.8l-.7 1-6.3-359.6 .6-.9z" color="#585651"/><path d="M603 743.8l-.9 .8-6.4-359.6 1-.8z" color="#56544f"/><path d="M582.2 745.1l-1.1-.7-6.3-359.6 1 .8z" color="#74716b"/><path d="M602.1 744.6l-1.2 .8-6.4-359.6 1.2-.8z" color="#56544f"/><path d="M583.5 745.8l-1.3-.7-6.4-359.5 1.3 .7z" color="#74716b"/><path d="M600.9 745.4l-1.5 .6-6.4-359.5 1.5-.7z" color="#56544f"/><path d="M585 746.4l-1.5-.6-6.4-359.5 1.5 .6z" color="#74716b"/><path d="M599.4 746l-1.6 .6-6.4-359.6 1.6-.5z" color="#56544f"/><path d="M586.7 746.9l-1.7-.5-6.4-359.5 1.7 .4z" color="#74716b"/><path d="M597.8 746.6l-1.7 .4-6.4-359.6 1.7-.4z" color="#56544f"/><path d="M588.5 747.2l-1.8-.3-6.4-359.6 1.8 .4z" color="#726f68"/><path d="M596.1 747l-1.9 .3-6.4-359.6 1.9-.3z" color="#56544f"/><path d="M590.4 747.4l-1.9-.2-6.4-359.5 1.9 .1z" color="#6b6862"/><path d="M594.2 747.3l-1.9 .1-6.4-359.5 1.9-.2z" color="#5a5853"/><path d="M592.3 747.4l-1.9 0-6.4-359.6 1.9 .1z" color="#625f5a"/><path d="M582.6 747.1l-.1 1-6.3-359.6 .1-.9z" color="#686660"/><path d="M582.5 748.1l-.4 .9-6.3-359.5 .4-1z" color="#5f5d58"/><path d="M582.1 749l-.6 .9-6.4-359.5 .7-.9z" color="#585651"/><path d="M581.5 749.9l-1 .9-6.4-359.6 1-.8z" color="#56544f"/><path d="M560.6 751.3l-1-.8-6.4-359.5 1 .8z" color="#74716b"/><path d="M559.6 750.5l-.5 1.2-6.3-359.6 .4-1.1z" color="#615e59"/><path d="M580.5 750.8l-1.2 .7-6.4-359.5 1.2-.8z" color="#56544f"/><path d="M561.9 752l-1.3-.7-6.4-359.5 1.3 .7z" color="#74716b"/><path d="M579.3 751.5l-1.4 .7-6.4-359.5 1.4-.7z" color="#56544f"/><path d="M559.1 751.7l-.6 1.2-6.3-359.6 .6-1.2z" color="#5c5a55"/><path d="M563.4 752.6l-1.5-.6-6.4-359.5 1.5 .6z" color="#74716b"/><path d="M577.9 752.2l-1.7 .6-6.3-359.6 1.6-.5z" color="#56544f"/><path d="M565.1 753.1l-1.7-.5-6.4-359.5 1.7 .4z" color="#74716b"/><path d="M576.2 752.8l-1.7 .4-6.4-359.6 1.8-.4z" color="#56544f"/><path d="M566.9 753.4l-1.8-.3-6.4-359.6 1.8 .3z" color="#726f68"/><path d="M558.5 752.9l-.8 1.1-6.3-359.6 .8-1.1z" color="#595752"/><path d="M574.5 753.2l-1.9 .3-6.4-359.6 1.9-.3z" color="#56544f"/><path d="M568.8 753.6l-1.9-.2-6.4-359.6 1.9 .2z" color="#6b6862"/><path d="M572.6 753.5l-1.9 .1-6.4-359.6 1.9-.1z" color="#5a5853"/><path d="M570.7 753.6l-1.9 0-6.4-359.6 1.9 0z" color="#625f5a"/><path d="M557.7 754l-.9 1.1-6.4-359.6 1-1.1z" color="#575550"/><path d="M556.8 755.1l-1.1 1-6.4-359.5 1.1-1.1z" color="#56544f"/><path d="M555.7 756.1l-1.3 1.1-6.4-359.6 1.3-1z" color="#56544f"/><path d="M554.4 757.2l-1.4 .9-6.4-359.5 1.4-1z" color="#56544f"/><path d="M553 758.1l-1.6 .9-6.4-359.5 1.6-.9z" color="#56544f"/><path d="M551.4 759l-1.7 .9-6.4-359.6 1.7-.8z" color="#56544f"/><path d="M549.7 759.9l-1.8 .8-6.4-359.6 1.8-.8z" color="#56544f"/><path d="M547.9 760.7l-2 .7-6.4-359.6 2-.7z" color="#56544f"/><path d="M545.9 761.4l-2 .6-6.4-359.5 2-.7z" color="#56544f"/><path d="M543.9 762l-2.1 .6-6.4-359.6 2.1-.5z" color="#56544f"/><path d="M518.6 763.3l-2.2-.4-6.3-359.6 2.2 .4z" color="#726f69"/><path d="M541.8 762.6l-2.2 .4-6.4-359.5 2.2-.5z" color="#56544f"/><path d="M520.9 763.6l-2.3-.3-6.3-359.6 2.2 .4z" color="#706d67"/><path d="M539.6 763l-2.3 .4-6.4-359.5 2.3-.4z" color="#56544f"/><path d="M523.2 763.9l-2.3-.3-6.4-359.5 2.3 .2z" color="#6c6a64"/><path d="M537.3 763.4l-2.3 .3-6.4-359.5 2.3-.3z" color="#575550"/><path d="M525.5 764l-2.3-.1-6.4-359.6 2.4 .2z" color="#686560"/><path d="M535 763.7l-2.4 .2-6.3-359.5 2.3-.2z" color="#585651"/><path d="M527.9 764.1l-2.4-.1-6.3-359.5 2.3 0z" color="#64615c"/><path d="M532.6 763.9l-2.3 .2-6.4-359.6 2.4-.1z" color="#5b5954"/><path d="M530.3 764.1l-2.4 0-6.4-359.6 2.4 0z" color="#5f5d58"/><path d="M517.9 765.6l-.1 1-6.3-359.6 .1-.9z" color="#686660"/><path d="M517.8 766.6l-.4 .9-6.3-359.5 .4-1z" color="#5f5d58"/><path d="M517.4 767.5l-.6 .9-6.4-359.5 .7-.9z" color="#585651"/><path d="M516.8 768.4l-1 .9-6.4-359.6 1-.8z" color="#56544f"/><path d="M495.9 769.8l-1-.7-6.4-359.6 1 .8z" color="#74716b"/><path d="M515.8 769.3l-1.2 .8-6.4-359.6 1.2-.8z" color="#56544f"/><path d="M497.2 770.5l-1.3-.7-6.4-359.5 1.3 .7z" color="#74716b"/><path d="M514.6 770.1l-1.4 .6-6.4-359.5 1.4-.7z" color="#56544f"/><path d="M498.7 771.1l-1.5-.6-6.4-359.5 1.5 .6z" color="#74716b"/><path d="M513.2 770.7l-1.7 .6-6.3-359.6 1.6-.5z" color="#56544f"/><path d="M500.4 771.6l-1.7-.5-6.4-359.5 1.7 .4z" color="#74716b"/><path d="M511.5 771.3l-1.7 .4-6.4-359.6 1.8-.4z" color="#56544f"/><path d="M502.2 771.9l-1.8-.3-6.4-359.6 1.8 .4z" color="#726f68"/><path d="M509.8 771.7l-1.9 .3-6.4-359.6 1.9-.3z" color="#56544f"/><path d="M504.1 772.1l-1.9-.2-6.4-359.5 1.9 .1z" color="#6b6862"/><path d="M507.9 772l-1.9 .1-6.4-359.6 1.9-.1z" color="#5a5853"/><path d="M506 772.1l-1.9 0-6.4-359.6 1.9 0z" color="#625f5a"/><path d="M496.4 771.8l-.1 1-6.4-359.6 .1-1z" color="#686660"/><path d="M496.3 772.8l-.4 .9-6.4-359.5 .4-1z" color="#5f5d58"/><path d="M495.9 773.7l-.7 .9-6.4-359.5 .7-.9z" color="#585651"/><path d="M495.2 774.6l-1 .9-6.4-359.6 1-.8z" color="#56544f"/><path d="M474.3 776l-1-.8-6.4-359.5 1.1 .8z" color="#74716b"/><path d="M494.2 775.5l-1.2 .7-6.4-359.5 1.2-.8z" color="#56544f"/><path d="M475.6 776.7l-1.3-.7-6.3-359.5 1.3 .7z" color="#74716b"/><path d="M705.6 350l0 1.2-.9-14.5 0-1.3z" color="#6a6862"/><path d="M493 776.2l-1.4 .7-6.4-359.5 1.4-.7z" color="#56544f"/><path d="M477.1 777.3l-1.5-.6-6.3-359.5 1.5 .5z" color="#74716b"/><path d="M491.6 776.9l-1.6 .6-6.4-359.6 1.6-.5z" color="#56544f"/><path d="M478.8 777.8l-1.7-.5-6.3-359.6 1.6 .5z" color="#74716b"/><path d="M490 777.5l-1.8 .4-6.4-359.6 1.8-.4z" color="#56544f"/><path d="M480.6 778.1l-1.8-.3-6.4-359.6 1.8 .3z" color="#726f68"/><path d="M705.6 351.2l-.4 1.2-.9-14.4 .4-1.3z" color="#5f5d58"/><path d="M488.2 777.9l-1.9 .2-6.3-359.5 1.8-.3z" color="#56544f"/><path d="M482.5 778.3l-1.9-.2-6.4-359.6 1.9 .2z" color="#6b6862"/><path d="M486.3 778.1l-1.9 .2-6.4-359.6 2-.1z" color="#5a5853"/><path d="M484.4 778.3l-1.9 0-6.4-359.6 1.9 0z" color="#625f5a"/><path d="M474.8 778l-.1 .9-6.4-359.5 .1-1z" color="#686660"/><path d="M705.2 352.4l-.9 1.1-.9-14.2 .9-1.3z" color="#575550"/><path d="M474.7 778.9l-.4 1-6.4-359.6 .4-.9z" color="#5f5d58"/><path d="M684 354.9l-1.4-1-.8-12.8 1.4 1z" color="#74716b"/><path d="M704.3 353.5l-1.3 1.1-.9-14.1 1.3-1.2z" color="#56544f"/><path d="M474.3 779.9l-.7 .9-6.4-359.6 .7-.9z" color="#585651"/><path d="M685.7 355.7l-1.7-.8-.8-12.8 1.7 .7z" color="#74716b"/><path d="M703 354.6l-1.7 .9-.9-14 1.7-1z" color="#56544f"/><path d="M473.6 780.8l-.9 .8-6.4-359.5 .9-.9z" color="#56544f"/><path d="M452.8 782.2l-1.1-.8-6.4-359.6 1.1 .8z" color="#74716b"/><path d="M687.7 356.4l-2-.7-.8-12.9 2 .6z" color="#74716b"/><path d="M701.3 355.5l-2 .7-.9-13.8 2-.9z" color="#56544f"/><path d="M472.7 781.6l-1.3 .8-6.3-359.5 1.2-.8z" color="#56544f"/><path d="M704.7 335.4l0 1.3-2.2-14 0-1.3z" color="#68655f"/><path d="M454.1 782.9l-1.3-.7-6.4-359.6 1.3 .7z" color="#74716b"/><path d="M689.9 356.8l-2.2-.4-.8-13 2.2 .3z" color="#726f69"/><path d="M684 356.2l.1 1.2-.8-12.7-.1-1.2z" color="#6a6862"/><path d="M699.3 356.2l-2.2 .5-.9-13.6 2.2-.7z" color="#56544f"/><path d="M692.3 357l-2.4-.2-.8-13.1 2.4 .1z" color="#6a6761"/><path d="M471.4 782.4l-1.4 .7-6.4-359.6 1.5-.6z" color="#56544f"/><path d="M697.1 356.7l-2.4 .2-.8-13.3 2.3-.5z" color="#575550"/><path d="M694.7 356.9l-2.4 .1-.8-13.2 2.4-.2z" color="#5f5c57"/><path d="M455.6 783.5l-1.5-.6-6.4-359.6 1.5 .6z" color="#74716b"/><path d="M470 783.1l-1.6 .5-6.4-359.5 1.6-.6z" color="#56544f"/><path d="M704.7 336.7l-.4 1.3-2.2-13.9 .4-1.4z" color="#5d5b56"/><path d="M457.2 783.9l-1.6-.4-6.4-359.6 1.7 .5z" color="#74716b"/><path d="M684.1 357.4l-.5 1.2-.8-12.6 .5-1.3z" color="#5f5d58"/><path d="M468.4 783.6l-1.8 .4-6.3-359.5 1.7-.4z" color="#56544f"/><path d="M459 784.3l-1.8-.4-6.3-359.5 1.8 .3z" color="#726f68"/><path d="M466.6 784l-1.8 .3-6.4-359.5 1.9-.3z" color="#56544f"/><path d="M460.9 784.4l-1.9-.1-6.3-359.6 1.9 .2z" color="#6b6862"/><path d="M464.8 784.3l-1.9 .1-6.4-359.5 1.9-.1z" color="#5a5853"/><path d="M462.9 784.4l-2 0-6.3-359.5 1.9 0z" color="#625f5a"/><path d="M453.2 784.1l-.1 1-6.4-359.5 .1-1z" color="#686660"/><path d="M704.3 338l-.9 1.3-2.2-13.8 .9-1.4z" color="#575550"/><path d="M683.2 342.1l-1.4-1-1.9-12.4 1.3 1z" color="#74716b"/><path d="M683.6 358.6l-.9 1.1-.8-12.4 .9-1.3z" color="#575550"/><path d="M453.1 785.1l-.4 1-6.4-359.6 .4-.9z" color="#5f5d58"/><path d="M703.4 339.3l-1.3 1.2-2.2-13.6 1.3-1.4z" color="#56544f"/><path d="M662.4 361.1l-1.4-1-.6-11 1.3 1z" color="#74716b"/><path d="M684.9 342.8l-1.7-.7-2-12.4 1.7 .7z" color="#74716b"/><path d="M682.7 359.7l-1.3 1-.8-12.2 1.3-1.2z" color="#56544f"/><path d="M452.7 786.1l-.7 .9-6.3-359.6 .6-.9z" color="#585651"/><path d="M702.1 340.5l-1.7 1-2.1-13.4 1.6-1.2z" color="#56544f"/><path d="M686.9 343.4l-2-.6-2-12.4 2 .4z" color="#74716b"/><path d="M664.1 361.9l-1.7-.8-.7-11 1.7 .7z" color="#74716b"/><path d="M681.4 360.7l-1.7 .9-.8-12.1 1.7-1z" color="#56544f"/><path d="M700.4 341.5l-2 .9-2.1-13.3 2-1z" color="#56544f"/><path d="M683.2 343.5l.1 1.2-2-12.2 0-1.4z" color="#68655f"/><path d="M689.1 343.7l-2.2-.3-2-12.6 2.2 .2z" color="#726f69"/><path d="M452 787l-.9 .8-6.4-359.5 1-.9z" color="#56544f"/><path d="M666.1 362.5l-2-.6-.7-11.1 2 .6z" color="#74716b"/><path d="M431.2 788.4l-1-.8-6.4-359.6 1 .8z" color="#74716b"/><path d="M698.4 342.4l-2.2 .7-2-13.1 2.1-.9z" color="#56544f"/><path d="M679.7 361.6l-2 .7-.7-11.9 1.9-.9z" color="#56544f"/><path d="M691.5 343.8l-2.4-.1-2-12.7 2.4 0z" color="#6a6761"/><path d="M696.2 343.1l-2.3 .5-2.1-13 2.4-.6z" color="#575550"/><path d="M693.9 343.6l-2.4 .2-2-12.8 2.3-.4z" color="#5f5c57"/><path d="M702.5 321.4l0 1.3-3.5-13.4 0-1.5z" color="#65625d"/><path d="M668.4 363l-2.3-.5-.7-11.1 2.3 .3z" color="#726f69"/><path d="M451.1 787.8l-1.2 .8-6.4-359.6 1.2-.7z" color="#56544f"/><path d="M662.5 362.4l0 1.2-.7-10.9 0-1.2z" color="#6a6862"/><path d="M677.7 362.3l-2.2 .5-.7-11.7 2.2-.7z" color="#56544f"/><path d="M432.5 789.1l-1.3-.7-6.4-359.6 1.3 .7z" color="#74716b"/><path d="M683.3 344.7l-.5 1.3-1.9-12.1 .4-1.4z" color="#5d5b56"/><path d="M670.7 363.2l-2.3-.2-.7-11.3 2.3 .1z" color="#6a6761"/><path d="M675.5 362.8l-2.4 .3-.7-11.5 2.4-.5z" color="#575550"/><path d="M673.1 363.1l-2.4 .1-.7-11.4 2.4-.2z" color="#5f5c57"/><path d="M449.9 788.6l-1.5 .7-6.3-359.6 1.4-.7z" color="#56544f"/><path d="M434 789.6l-1.5-.5-6.4-359.6 1.5 .6z" color="#74716b"/><path d="M702.5 322.7l-.4 1.4-3.5-13.3 .4-1.5z" color="#5b5954"/><path d="M662.5 363.6l-.5 1.2-.6-10.8 .4-1.3z" color="#5f5d58"/><path d="M448.4 789.3l-1.6 .5-6.4-359.6 1.7-.5z" color="#56544f"/><path d="M682.8 346l-.9 1.3-1.9-12 .9-1.4z" color="#575550"/><path d="M435.7 790.1l-1.7-.5-6.4-359.5 1.7 .5z" color="#74716b"/><path d="M661.7 350.1l-1.3-1-1.7-10.6 1.3 .9z" color="#74716b"/><path d="M681.2 329.7l-1.3-1-3.1-11.9 1.3 1z" color="#74716b"/><path d="M446.8 789.8l-1.7 .4-6.4-359.5 1.7-.5z" color="#56544f"/><path d="M437.5 790.4l-1.8-.3-6.4-359.5 1.8 .3z" color="#726f68"/><path d="M702.1 324.1l-.9 1.4-3.4-13.2 .8-1.5z" color="#56544f"/><path d="M445.1 790.2l-1.9 .3-6.4-359.6 1.9-.2z" color="#56544f"/><path d="M439.4 790.6l-1.9-.2-6.4-359.5 1.9 .1z" color="#6b6862"/><path d="M443.2 790.5l-1.9 .1-6.4-359.5 1.9-.2z" color="#5a5853"/><path d="M441.3 790.6l-1.9 0-6.4-359.6 1.9 .1z" color="#625f5a"/><path d="M431.7 790.3l-.1 1-6.4-359.6 .1-.9z" color="#686660"/><path d="M662 364.8l-.9 1.1-.6-10.6 .9-1.3z" color="#575550"/><path d="M681.9 347.3l-1.3 1.2-1.8-11.9 1.2-1.3z" color="#56544f"/><path d="M663.4 350.8l-1.7-.7-1.7-10.7 1.7 .8z" color="#74716b"/><path d="M682.9 330.4l-1.7-.7-3.1-11.9 1.7 .6z" color="#74716b"/><path d="M701.2 325.5l-1.3 1.4-3.3-13.1 1.2-1.5z" color="#56544f"/><path d="M640.8 367.3l-1.3-1-.6-9.2 1.4 1z" color="#74716b"/><path d="M680.6 348.5l-1.7 1-1.8-11.6 1.7-1.3z" color="#56544f"/><path d="M431.6 791.3l-.4 .9-6.4-359.5 .4-1z" color="#5f5d58"/><path d="M665.4 351.4l-2-.6-1.7-10.6 2 .4z" color="#74716b"/><path d="M661.1 365.9l-1.3 1-.6-10.4 1.3-1.2z" color="#56544f"/><path d="M684.9 330.8l-2-.4-3.1-12 2 .4z" color="#74716b"/><path d="M699.9 326.9l-1.6 1.2-3.4-12.9 1.7-1.4z" color="#56544f"/><path d="M678.9 349.5l-1.9 .9-1.8-11.5 1.9-1z" color="#56544f"/><path d="M661.8 351.5l0 1.2-1.6-10.4-.1-1.4z" color="#68655f"/><path d="M681.3 331.1l0 1.4-3-11.7-.1-1.5z" color="#65625d"/><path d="M667.7 351.7l-2.3-.3-1.7-10.8 2.2 .2z" color="#726f69"/><path d="M642.5 368.1l-1.7-.8-.5-9.2 1.7 .8z" color="#74716b"/><path d="M431.2 792.2l-.7 .9-6.4-359.5 .7-.9z" color="#585651"/><path d="M687.1 331l-2.2-.2-3.1-12 2.2 .1z" color="#716e68"/><path d="M659.8 366.9l-1.7 .9-.6-10.2 1.7-1.1z" color="#56544f"/><path d="M698.3 328.1l-2 1-3.3-12.7 1.9-1.2z" color="#56544f"/><path d="M677 350.4l-2.2 .7-1.8-11.3 2.2-.9z" color="#56544f"/><path d="M670 351.8l-2.3-.1-1.8-10.9 2.4-.1z" color="#6a6761"/><path d="M674.8 351.1l-2.4 .5-1.7-11.2 2.3-.6z" color="#575550"/><path d="M689.5 331l-2.4 0-3.1-12.1 2.3-.2z" color="#696761"/><path d="M672.4 351.6l-2.4 .2-1.7-11.1 2.4-.3z" color="#5f5c57"/><path d="M696.3 329.1l-2.1 .9-3.3-12.6 2.1-1z" color="#56544f"/><path d="M644.6 368.7l-2.1-.6-.5-9.2 2 .5z" color="#74716b"/><path d="M691.8 330.6l-2.3 .4-3.2-12.3 2.3-.5z" color="#5f5d57"/><path d="M694.2 330l-2.4 .6-3.2-12.4 2.3-.8z" color="#575550"/><path d="M430.5 793.1l-1 .9-6.4-359.6 1-.8z" color="#56544f"/><path d="M658.1 367.8l-2 .7-.6-10.1 2-.8z" color="#56544f"/><path d="M681.3 332.5l-.4 1.4-3-11.6 .4-1.5z" color="#5b5954"/><path d="M661.8 352.7l-.4 1.3-1.7-10.3 .5-1.4z" color="#5d5b56"/><path d="M409.6 794.5l-1-.8-6.4-359.5 1.1 .8z" color="#74716b"/><path d="M646.8 369.1l-2.2-.4-.6-9.3 2.2 .3z" color="#726f69"/><path d="M640.9 368.5l0 1.3-.5-9-.1-1.3z" color="#6a6862"/><path d="M656.1 368.5l-2.2 .5-.6-9.9 2.2-.7z" color="#56544f"/><path d="M699 307.8l0 1.5-4.7-12.7-.1-1.6z" color="#62605a"/><path d="M429.5 794l-1.2 .8-6.4-359.6 1.2-.8z" color="#56544f"/><path d="M649.2 369.3l-2.4-.2-.6-9.4 2.4 .1z" color="#6a6761"/><path d="M660 339.4l-1.3-.9-2.7-10.2 1.4 .9z" color="#74716b"/><path d="M653.9 369l-2.3 .3-.6-9.7 2.3-.5z" color="#575550"/><path d="M651.6 369.3l-2.4 0-.6-9.5 2.4-.2z" color="#5f5c57"/><path d="M410.9 795.2l-1.3-.7-6.3-359.5 1.3 .7z" color="#74716b"/><path d="M680.9 333.9l-.9 1.4-2.9-11.5 .8-1.5z" color="#56544f"/><path d="M661.4 354l-.9 1.3-1.6-10.2 .8-1.4z" color="#575550"/><path d="M640.3 358.1l-1.4-1-1.4-8.8 1.4 .9z" color="#74716b"/><path d="M428.3 794.8l-1.4 .6-6.4-359.5 1.4-.7z" color="#56544f"/><path d="M412.4 795.8l-1.5-.6-6.3-359.5 1.5 .6z" color="#74716b"/><path d="M640.9 369.8l-.4 1.1-.6-8.8 .5-1.3z" color="#5f5d58"/><path d="M699 309.3l-.4 1.5-4.6-12.6 .3-1.6z" color="#595752"/><path d="M661.7 340.2l-1.7-.8-2.6-10.2 1.7 .7z" color="#74716b"/><path d="M678.1 317.8l-1.3-1-4.2-11.2 1.3 .9z" color="#74716b"/><path d="M680 335.3l-1.2 1.3-3-11.3 1.3-1.5z" color="#56544f"/><path d="M426.9 795.4l-1.6 .6-6.4-359.6 1.6-.5z" color="#56544f"/><path d="M660.5 355.3l-1.3 1.2-1.6-10.1 1.3-1.3z" color="#56544f"/><path d="M414.1 796.3l-1.7-.5-6.3-359.5 1.6 .4z" color="#74716b"/><path d="M642 358.9l-1.7-.8-1.4-8.9 1.7 .7z" color="#74716b"/><path d="M425.3 796l-1.8 .4-6.4-359.6 1.8-.4z" color="#56544f"/><path d="M663.7 340.6l-2-.4-2.6-10.3 2 .4z" color="#74716b"/><path d="M415.9 796.6l-1.8-.3-6.4-359.6 1.8 .3z" color="#726f68"/><path d="M698.6 310.8l-.8 1.5-4.6-12.5 .8-1.6z" color="#56544f"/><path d="M679.8 318.4l-1.7-.6-4.2-11.3 1.7 .6z" color="#74716b"/><path d="M640.5 370.9l-.9 1.2-.6-8.8 .9-1.2z" color="#575550"/><path d="M678.8 336.6l-1.7 1.3-2.9-11.2 1.6-1.4z" color="#56544f"/><path d="M423.5 796.4l-1.9 .3-6.3-359.6 1.8-.3z" color="#56544f"/><path d="M417.8 796.8l-1.9-.2-6.4-359.6 1.9 .2z" color="#6b6862"/><path d="M421.6 796.7l-1.9 .1-6.4-359.6 2-.1z" color="#5a5853"/><path d="M659.2 356.5l-1.7 1.1-1.6-10 1.7-1.2z" color="#56544f"/><path d="M419.7 796.8l-1.9 0-6.4-359.6 1.9 0z" color="#625f5a"/><path d="M410.1 796.5l-.1 1-6.4-359.6 .1-1z" color="#686660"/><path d="M660.1 340.9l.1 1.4-2.6-10.1-.1-1.4z" color="#65625d"/><path d="M644 359.4l-2-.5-1.4-9 2 .5z" color="#74716b"/><path d="M665.9 340.8l-2.2-.2-2.6-10.3 2.1 .1z" color="#716e68"/><path d="M677.1 337.9l-1.9 1-2.9-11 1.9-1.2z" color="#56544f"/><path d="M697.8 312.3l-1.2 1.5-4.6-12.3 1.2-1.7z" color="#56544f"/><path d="M619.3 373.4l-1.4-.9-.5-7.4 1.4 1z" color="#74716b"/><path d="M681.8 318.8l-2-.4-4.2-11.3 2 .3z" color="#74716a"/><path d="M657.5 357.6l-2 .8-1.5-9.7 1.9-1.1z" color="#56544f"/><path d="M668.3 340.7l-2.4 .1-2.7-10.4 2.3-.2z" color="#696761"/><path d="M640.3 359.5l.1 1.3-1.4-8.8 0-1.3z" color="#68655f"/><path d="M646.2 359.7l-2.2-.3-1.4-9 2.2 .2z" color="#726f69"/><path d="M675.2 338.9l-2.2 .9-2.8-10.9 2.1-1z" color="#56544f"/><path d="M639.6 372.1l-1.3 1-.6-8.6 1.3-1.2z" color="#56544f"/><path d="M670.7 340.4l-2.4 .3-2.8-10.5 2.4-.5z" color="#5f5d57"/><path d="M410 797.5l-.4 .9-6.4-359.5 .4-1z" color="#5f5d58"/><path d="M673 339.8l-2.3 .6-2.8-10.7 2.3-.8z" color="#575550"/><path d="M678.2 319.3l.1 1.5-4.1-11.2-.1-1.5z" color="#62605a"/><path d="M655.5 358.4l-2.2 .7-1.5-9.5 2.2-.9z" color="#56544f"/><path d="M660.2 342.3l-.5 1.4-2.5-9.9 .4-1.6z" color="#5b5954"/><path d="M648.6 359.8l-2.4-.1-1.4-9.1 2.3-.1z" color="#6a6761"/><path d="M696.6 313.8l-1.7 1.4-4.5-12.2 1.6-1.5z" color="#56544f"/><path d="M684 318.9l-2.2-.1-4.2-11.4 2.1 0z" color="#716e68"/><path d="M653.3 359.1l-2.3 .5-1.5-9.4 2.3-.6z" color="#575550"/><path d="M651 359.6l-2.4 .2-1.5-9.3 2.4-.3z" color="#5f5c57"/><path d="M621 374.3l-1.7-.9-.5-7.3 1.7 .8z" color="#74716b"/><path d="M638.3 373.1l-1.7 .9-.6-8.4 1.7-1.1z" color="#56544f"/><path d="M694.9 315.2l-1.9 1.2-4.4-12 1.8-1.4z" color="#56544f"/><path d="M686.3 318.7l-2.3 .2-4.3-11.5 2.3-.3z" color="#696661"/><path d="M640.4 360.8l-.5 1.3-1.3-8.6 .4-1.5z" color="#5d5b56"/><path d="M409.6 798.4l-.7 .9-6.4-359.5 .7-.9z" color="#585651"/><path d="M638.9 349.2l-1.4-.9-2.2-8.5 1.4 .9z" color="#74716b"/><path d="M678.3 320.8l-.4 1.5-4.1-11 .4-1.7z" color="#595752"/><path d="M693 316.4l-2.1 1-4.4-11.9 2.1-1.1z" color="#56544f"/><path d="M688.6 318.2l-2.3 .5-4.3-11.6 2.3-.6z" color="#5f5c57"/><path d="M657.4 329.2l-1.4-.9-3.5-9.6 1.3 .9z" color="#74716b"/><path d="M659.7 343.7l-.8 1.4-2.6-9.8 .9-1.5z" color="#56544f"/><path d="M690.9 317.4l-2.3 .8-4.3-11.7 2.2-1z" color="#585551"/><path d="M623 374.9l-2-.6-.5-7.4 2 .5z" color="#74716b"/><path d="M636.6 374l-2 .7-.5-8.3 1.9-.8z" color="#56544f"/><path d="M693.7 293.7l.5 1.3-5.9-12-.6-1.4z" color="#696661"/><path d="M408.9 799.3l-1 .9-6.3-359.6 .9-.8z" color="#56544f"/><path d="M640.6 349.9l-1.7-.7-2.2-8.5 1.7 .7z" color="#74716b"/><path d="M625.2 375.3l-2.2-.4-.5-7.5 2.2 .3z" color="#726f69"/><path d="M619.3 374.7l.1 1.2-.5-7.1 0-1.3z" color="#6a6862"/><path d="M388.1 800.7l-1.1-.8-6.4-359.5 1.1 .8z" color="#74716b"/><path d="M639.9 362.1l-.9 1.2-1.3-8.4 .9-1.4z" color="#575550"/><path d="M634.6 374.7l-2.2 .5-.5-8.1 2.2-.7z" color="#56544f"/><path d="M677.9 322.3l-.8 1.5-4.1-10.9 .8-1.6z" color="#56544f"/><path d="M658.9 345.1l-1.3 1.3-2.5-9.6 1.2-1.5z" color="#56544f"/><path d="M659.1 329.9l-1.7-.7-3.6-9.6 1.7 .6z" color="#74716b"/><path d="M618.8 366.1l-1.4-1-1.1-7.1 1.4 1z" color="#74716b"/><path d="M627.6 375.5l-2.4-.2-.5-7.6 2.4 .1z" color="#6a6761"/><path d="M632.4 375.2l-2.4 .3-.5-7.9 2.4-.5z" color="#575550"/><path d="M630 375.5l-2.4 0-.5-7.7 2.4-.2z" color="#5f5c57"/><path d="M407.9 800.2l-1.2 .7-6.3-359.5 1.2-.8z" color="#56544f"/><path d="M694.2 295l.1 1.6-5.9-12-.1-1.6z" color="#5f5d58"/><path d="M642.6 350.4l-2-.5-2.2-8.5 1.9 .4z" color="#74716b"/><path d="M389.4 801.4l-1.3-.7-6.4-359.5 1.3 .7z" color="#74716b"/><path d="M657.6 346.4l-1.7 1.2-2.4-9.4 1.6-1.4z" color="#56544f"/><path d="M677.1 323.8l-1.3 1.5-4-10.8 1.2-1.6z" color="#56544f"/><path d="M639 363.3l-1.3 1.2-1.3-8.3 1.3-1.3z" color="#56544f"/><path d="M661.1 330.3l-2-.4-3.6-9.7 1.9 .3z" color="#74716a"/><path d="M673.9 306.5l-1.3-.9-5.3-10.6 1.4 .9z" color="#73706a"/><path d="M619.4 375.9l-.5 1.2-.4-7 .4-1.3z" color="#5f5d58"/><path d="M620.5 366.9l-1.7-.8-1.1-7.1 1.7 .7z" color="#74716b"/><path d="M639 350.7l0 1.3-2.2-8.3 0-1.4z" color="#65625d"/><path d="M406.7 800.9l-1.4 .7-6.4-359.6 1.5-.6z" color="#56544f"/><path d="M644.8 350.6l-2.2-.2-2.3-8.6 2.2 .1z" color="#716e68"/><path d="M657.5 330.8l.1 1.4-3.6-9.5-.1-1.5z" color="#62605a"/><path d="M390.9 802l-1.5-.6-6.4-359.5 1.5 .5z" color="#74716b"/><path d="M655.9 347.6l-1.9 1.1-2.4-9.3 1.9-1.2z" color="#56544f"/><path d="M675.8 325.3l-1.6 1.4-3.9-10.6 1.5-1.6z" color="#56544f"/><path d="M694.3 296.6l-.3 1.6-5.9-11.9 .3-1.7z" color="#585651"/><path d="M663.2 330.4l-2.1-.1-3.7-9.8 2.2 0z" color="#716e68"/><path d="M637.7 364.5l-1.7 1.1-1.2-8.2 1.6-1.2z" color="#56544f"/><path d="M647.1 350.5l-2.3 .1-2.3-8.7 2.3-.2z" color="#696761"/><path d="M405.3 801.6l-1.6 .5-6.4-359.5 1.6-.6z" color="#56544f"/><path d="M654 348.7l-2.2 .9-2.4-9.2 2.2-1z" color="#56544f"/><path d="M392.5 802.5l-1.6-.5-6.4-359.6 1.7 .5z" color="#74716b"/><path d="M622.5 367.4l-2-.5-1.1-7.2 2 .5z" color="#74716b"/><path d="M675.6 307.1l-1.7-.6-5.2-10.6 1.6 .6z" color="#74716a"/><path d="M649.5 350.2l-2.4 .3-2.3-8.8 2.3-.5z" color="#5f5d57"/><path d="M651.8 349.6l-2.3 .6-2.4-9 2.3-.8z" color="#575550"/><path d="M674.2 326.7l-1.9 1.2-3.9-10.5 1.9-1.3z" color="#56544f"/><path d="M673.6 306.8l.5 1.3-5.2-10.5-.6-1.4z" color="#696661"/><path d="M665.5 330.2l-2.3 .2-3.6-9.9 2.2-.3z" color="#696661"/><path d="M618.9 377.1l-.9 1.1-.4-6.9 .9-1.2z" color="#575550"/><path d="M403.7 802.1l-1.8 .5-6.4-359.6 1.8-.4z" color="#56544f"/><path d="M639 352l-.4 1.5-2.2-8.3 .4-1.5z" color="#5b5954"/><path d="M394.3 802.8l-1.8-.3-6.3-359.6 1.8 .3z" color="#726f68"/><path d="M636 365.6l-1.9 .8-1.3-7.9 2-1.1z" color="#56544f"/><path d="M657.6 332.2l-.4 1.6-3.5-9.5 .3-1.6z" color="#595752"/><path d="M672.3 327.9l-2.1 1-3.9-10.3 2.1-1.2z" color="#56544f"/><path d="M667.9 329.7l-2.4 .5-3.7-10 2.3-.7z" color="#5f5c57"/><path d="M636.7 340.7l-1.4-.9-3-8.1 1.4 1z" color="#74716b"/><path d="M618.9 367.5l0 1.3-1.1-7 0-1.3z" color="#68655f"/><path d="M694 298.2l-.8 1.6-5.9-11.7 .8-1.8z" color="#56544f"/><path d="M624.7 367.7l-2.2-.3-1.1-7.2 2.2 .2z" color="#726f69"/><path d="M401.9 802.6l-1.8 .2-6.4-359.5 1.8-.3z" color="#56544f"/><path d="M670.2 328.9l-2.3 .8-3.8-10.2 2.2-.9z" color="#585551"/><path d="M396.2 802.9l-1.9-.1-6.3-359.6 1.8 .2z" color="#6b6862"/><path d="M400.1 802.8l-2 .2-6.3-359.6 1.9-.1z" color="#5a5853"/><path d="M398.1 803l-1.9-.1-6.4-359.5 2 0z" color="#625f5a"/><path d="M388.5 802.7l-.1 .9-6.4-359.5 .1-1z" color="#686660"/><path d="M634.1 366.4l-2.2 .7-1.3-7.8 2.2-.8z" color="#56544f"/><path d="M677.6 307.4l-2-.3-5.3-10.6 2 .3z" color="#73706a"/><path d="M627.1 367.8l-2.4-.1-1.1-7.3 2.3-.1z" color="#6a6761"/><path d="M617.7 359l-1.4-1-1.7-6.7 1.3 .9z" color="#74716b"/><path d="M597.7 379.6l-1.4-1-.3-5.5 1.3 1z" color="#74716b"/><path d="M631.9 367.1l-2.4 .5-1.2-7.7 2.3-.6z" color="#575550"/><path d="M629.5 367.6l-2.4 .2-1.2-7.5 2.4-.4z" color="#5f5c57"/><path d="M674.1 308.1l.1 1.5-5.2-10.4-.1-1.6z" color="#5f5d58"/><path d="M618 378.2l-1.3 1.1-.4-6.8 1.3-1.2z" color="#56544f"/><path d="M638.6 353.5l-.9 1.4-2.1-8.1 .8-1.6z" color="#56544f"/><path d="M693.2 299.8l-1.2 1.7-5.8-11.6 1.1-1.8z" color="#56544f"/><path d="M657.2 333.8l-.9 1.5-3.4-9.3 .8-1.7z" color="#56544f"/><path d="M638.4 341.4l-1.7-.7-3-8 1.6 .6z" color="#74716b"/><path d="M679.7 307.4l-2.1 0-5.3-10.6 2.1-.2z" color="#706d67"/><path d="M653.8 319.6l-1.3-.9-4.5-9.1 1.3 .9z" color="#73706a"/><path d="M618.9 368.8l-.4 1.3-1.1-6.9 .4-1.4z" color="#5d5b56"/><path d="M388.4 803.6l-.4 1-6.4-359.6 .4-.9z" color="#5f5d58"/><path d="M619.4 359.7l-1.7-.7-1.8-6.8 1.7 .7z" color="#74716b"/><path d="M599.4 380.4l-1.7-.8-.4-5.5 1.8 .8z" color="#74716b"/><path d="M692 301.5l-1.6 1.5-5.7-11.5 1.5-1.6z" color="#56544f"/><path d="M616.7 379.3l-1.7 .9-.4-6.6 1.7-1.1z" color="#56544f"/><path d="M682 307.1l-2.3 .3-5.3-10.8 2.2-.4z" color="#686660"/><path d="M637.7 354.9l-1.3 1.3-2.1-8 1.3-1.4z" color="#56544f"/><path d="M674.2 309.6l-.4 1.7-5.1-10.4 .3-1.7z" color="#585651"/><path d="M656.3 335.3l-1.2 1.5-3.4-9.2 1.2-1.6z" color="#56544f"/><path d="M640.3 341.8l-1.9-.4-3.1-8.1 2 .3z" color="#74716a"/><path d="M690.4 303l-1.8 1.4-5.7-11.4 1.8-1.5z" color="#56544f"/><path d="M684.3 306.5l-2.3 .6-5.4-10.9 2.2-.8z" color="#5f5c57"/><path d="M655.5 320.2l-1.7-.6-4.5-9.1 1.7 .6z" color="#74716a"/><path d="M388 804.6l-.7 .9-6.3-359.6 .6-.9z" color="#585651"/><path d="M688.6 304.4l-2.1 1.1-5.6-11.1 2-1.4z" color="#56544f"/><path d="M601.4 381.1l-2-.7-.3-5.5 2 .5z" color="#74716b"/><path d="M686.5 305.5l-2.2 1-5.5-11.1 2.1-1z" color="#585551"/><path d="M618.5 370.1l-.9 1.2-1.1-6.7 .9-1.4z" color="#575550"/><path d="M636.8 342.3l0 1.4-2.9-7.9-.1-1.5z" color="#62605a"/><path d="M653.4 319.8l.5 1.4-4.4-9-.6-1.4z" color="#696661"/><path d="M621.4 360.2l-2-.5-1.8-6.8 2 .4z" color="#74716b"/><path d="M615 380.2l-2 .7-.4-6.5 2-.8z" color="#56544f"/><path d="M655.1 336.8l-1.6 1.4-3.4-9.1 1.6-1.5z" color="#56544f"/><path d="M636.4 356.2l-1.6 1.2-2.1-7.8 1.6-1.4z" color="#56544f"/><path d="M597.3 374.1l-1.3-1-.8-5.3 1.3 1z" color="#74716b"/><path d="M642.5 341.9l-2.2-.1-3-8.2 2.1 0z" color="#716e68"/><path d="M673.8 311.3l-.8 1.6-5.1-10.2 .8-1.8z" color="#56544f"/><path d="M617.8 360.5l0 1.3-1.7-6.6-.1-1.5z" color="#65625d"/><path d="M603.7 381.5l-2.3-.4-.3-5.7 2.2 .3z" color="#726f69"/><path d="M597.8 380.9l0 1.2-.3-5.3-.1-1.3z" color="#6a6862"/><path d="M613 380.9l-2.2 .5-.4-6.3 2.2-.7z" color="#56544f"/><path d="M623.6 360.4l-2.2-.2-1.8-6.9 2.2 0z" color="#716e68"/><path d="M653.5 338.2l-1.9 1.2-3.3-8.9 1.8-1.4z" color="#56544f"/><path d="M657.4 320.5l-1.9-.3-4.5-9.1 1.9 .2z" color="#73706a"/><path d="M387.3 805.5l-.9 .8-6.4-359.5 1-.9z" color="#56544f"/><path d="M644.8 341.7l-2.3 .2-3.1-8.3 2.3-.3z" color="#696661"/><path d="M634.8 357.4l-2 1.1-2-7.7 1.9-1.2z" color="#56544f"/><path d="M687.7 281.6l.6 1.4-7.2-11.1-.6-1.5z" color="#66645e"/><path d="M606 381.7l-2.3-.2-.4-5.8 2.4 .1z" color="#6a6761"/><path d="M617.6 371.3l-1.3 1.2-1.1-6.5 1.3-1.4z" color="#56544f"/><path d="M366.5 806.9l-1.1-.8-6.3-359.6 1 .8z" color="#74716b"/><path d="M610.8 381.4l-2.4 .2-.4-6 2.4-.5z" color="#575550"/><path d="M636.8 343.7l-.4 1.5-2.9-7.8 .4-1.6z" color="#595752"/><path d="M608.4 381.6l-2.4 .1-.3-5.9 2.3-.2z" color="#5f5c57"/><path d="M651.6 339.4l-2.2 1-3.2-8.7 2.1-1.2z" color="#56544f"/><path d="M653.9 321.2l.1 1.5-4.4-8.9-.1-1.6z" color="#5f5d58"/><path d="M647.1 341.2l-2.3 .5-3.1-8.4 2.3-.7z" color="#5f5c57"/><path d="M625.9 360.3l-2.3 .1-1.8-7.1 2.3-.2z" color="#696761"/><path d="M615.9 352.2l-1.3-.9-2.4-6.5 1.3 .9z" color="#74716b"/><path d="M599.1 374.9l-1.8-.8-.8-5.3 1.7 .7z" color="#74716b"/><path d="M649.4 340.4l-2.3 .8-3.1-8.6 2.2-.9z" color="#585551"/><path d="M673 312.9l-1.2 1.6-5-10.1 1.1-1.7z" color="#56544f"/><path d="M632.8 358.5l-2.2 .8-1.9-7.4 2.1-1.1z" color="#56544f"/><path d="M628.3 359.9l-2.4 .4-1.8-7.2 2.3-.5z" color="#5f5d57"/><path d="M630.6 359.3l-2.3 .6-1.9-7.3 2.3-.7z" color="#575550"/><path d="M659.6 320.5l-2.2 0-4.5-9.2 2.1-.1z" color="#706d67"/><path d="M633.7 332.7l-1.4-1-3.7-7.5 1.3 .9z" color="#73706a"/><path d="M386.4 806.3l-1.2 .8-6.4-359.5 1.2-.8z" color="#56544f"/><path d="M617.8 361.8l-.4 1.4-1.7-6.5 .4-1.5z" color="#5b5954"/><path d="M668.7 295.9l-1.4-.9-6.2-9.8 1.3 .9z" color="#726f69"/><path d="M367.8 807.6l-1.3-.7-6.4-359.6 1.3 .7z" color="#74716b"/><path d="M616.3 372.5l-1.7 1.1-1-6.4 1.6-1.2z" color="#56544f"/><path d="M597.8 382.1l-.5 1.2-.3-5.2 .5-1.3z" color="#5f5d58"/><path d="M671.8 314.5l-1.5 1.6-5-10 1.5-1.7z" color="#56544f"/><path d="M688.3 283l.1 1.6-7.1-11-.2-1.7z" color="#5d5b56"/><path d="M601.1 375.4l-2-.5-.9-5.4 2 .5z" color="#74716b"/><path d="M636.4 345.2l-.8 1.6-2.9-7.7 .8-1.7z" color="#56544f"/><path d="M661.8 320.2l-2.2 .3-4.6-9.3 2.2-.4z" color="#686660"/><path d="M654 322.7l-.3 1.6-4.4-8.8 .3-1.7z" color="#585651"/><path d="M617.6 352.9l-1.7-.7-2.4-6.5 1.7 .7z" color="#74716b"/><path d="M385.2 807.1l-1.5 .7-6.3-359.6 1.4-.6z" color="#56544f"/><path d="M670.3 316.1l-1.9 1.3-4.9-9.8 1.8-1.5z" color="#56544f"/><path d="M596.5 368.8l-1.3-1-1.4-5.1 1.4 1z" color="#74716b"/><path d="M369.3 808.2l-1.5-.6-6.4-359.6 1.5 .6z" color="#74716b"/><path d="M664.1 319.5l-2.3 .7-4.6-9.4 2.2-.8z" color="#5f5c57"/><path d="M614.6 373.6l-2 .8-1-6.1 2-1.1z" color="#56544f"/><path d="M635.3 333.3l-1.6-.6-3.8-7.6 1.7 .6z" color="#74716a"/><path d="M668.4 317.4l-2.1 1.2-4.8-9.6 2-1.4z" color="#56544f"/><path d="M597.4 375.5l.1 1.3-.9-5.2 0-1.4z" color="#68655f"/><path d="M666.3 318.6l-2.2 .9-4.7-9.5 2.1-1z" color="#585551"/><path d="M603.3 375.7l-2.2-.3-.9-5.4 2.2 .1z" color="#726f69"/><path d="M633.3 332.9l.5 1.4-3.7-7.5-.6-1.4z" color="#696661"/><path d="M617.4 363.2l-.9 1.4-1.6-6.4 .8-1.5z" color="#56544f"/><path d="M670.3 296.5l-1.6-.6-6.3-9.8 1.6 .6z" color="#73706a"/><path d="M668.3 296.2l.6 1.4-6.3-9.7-.6-1.5z" color="#66645e"/><path d="M383.7 807.8l-1.6 .5-6.4-359.5 1.7-.6z" color="#56544f"/><path d="M635.6 346.8l-1.3 1.4-2.8-7.5 1.2-1.6z" color="#56544f"/><path d="M612.6 374.4l-2.2 .7-1-6 2.2-.8z" color="#56544f"/><path d="M597.3 383.3l-.9 1.1-.3-5.1 .9-1.2z" color="#575550"/><path d="M688.4 284.6l-.3 1.7-7.1-10.9 .3-1.8z" color="#575550"/><path d="M371 808.6l-1.7-.4-6.4-359.6 1.7 .5z" color="#74716b"/><path d="M619.6 353.3l-2-.4-2.4-6.5 2 .3z" color="#74716a"/><path d="M605.7 375.8l-2.4-.1-.9-5.6 2.4 0z" color="#6a6761"/><path d="M653.7 324.3l-.8 1.7-4.4-8.7 .8-1.8z" color="#56544f"/><path d="M610.4 375.1l-2.4 .5-.9-5.9 2.3-.6z" color="#575550"/><path d="M608 375.6l-2.3 .2-.9-5.7 2.3-.4z" color="#5f5c57"/><path d="M382.1 808.3l-1.7 .4-6.4-359.5 1.7-.4z" color="#56544f"/><path d="M598.2 369.5l-1.7-.7-1.3-5.1 1.7 .6z" color="#74716b"/><path d="M372.8 808.9l-1.8-.3-6.4-359.5 1.8 .3z" color="#726f68"/><path d="M616 353.7l.1 1.5-2.3-6.3-.1-1.5z" color="#62605a"/><path d="M637.3 333.6l-2-.3-3.7-7.6 1.9 .2z" color="#73706a"/><path d="M649.3 310.5l-1.3-.9-5.4-8.4 1.3 .9z" color="#726f69"/><path d="M616.5 364.6l-1.3 1.4-1.6-6.3 1.3-1.5z" color="#56544f"/><path d="M380.4 808.7l-1.9 .3-6.4-359.5 1.9-.3z" color="#56544f"/><path d="M672.3 296.8l-2-.3-6.3-9.8 1.9 .1z" color="#726f69"/><path d="M634.3 348.2l-1.6 1.4-2.7-7.4 1.5-1.5z" color="#56544f"/><path d="M374.7 809.1l-1.9-.2-6.4-359.5 1.9 .2z" color="#6b6862"/><path d="M621.8 353.3l-2.2 0-2.4-6.6 2.1 0z" color="#716e68"/><path d="M633.8 334.3l.1 1.5-3.7-7.4-.1-1.6z" color="#5f5d58"/><path d="M597.5 376.8l-.5 1.3-.8-5.1 .4-1.4z" color="#5d5b56"/><path d="M576.1 385.8l-1.3-1-.3-3.7 1.4 1z" color="#74716b"/><path d="M378.5 809l-1.9 .1-6.4-359.5 1.9-.1z" color="#5a5853"/><path d="M376.6 809.1l-1.9 0-6.4-359.5 1.9 0z" color="#625f5a"/><path d="M688.1 286.3l-.8 1.8-7-10.9 .7-1.8z" color="#56544f"/><path d="M668.9 297.6l.1 1.6-6.2-9.7-.2-1.6z" color="#5d5b56"/><path d="M652.9 326l-1.2 1.6-4.3-8.6 1.1-1.7z" color="#56544f"/><path d="M596.4 384.4l-1.3 1-.3-4.9 1.3-1.2z" color="#56544f"/><path d="M600.2 370l-2-.5-1.3-5.2 2 .4z" color="#74716b"/><path d="M639.4 333.6l-2.1 0-3.8-7.7 2.1-.1z" color="#706d67"/><path d="M632.7 349.6l-1.9 1.2-2.7-7.2 1.9-1.4z" color="#56544f"/><path d="M613.5 345.7l-1.3-.9-3-6 1.3 .9z" color="#73706a"/><path d="M624.1 353.1l-2.3 .2-2.5-6.6 2.3-.4z" color="#696661"/><path d="M615.2 366l-1.6 1.2-1.6-6.1 1.6-1.4z" color="#56544f"/><path d="M674.4 296.6l-2.1 .2-6.4-10 2-.1z" color="#6f6c66"/><path d="M616.1 355.2l-.4 1.5-2.3-6.2 .4-1.6z" color="#595752"/><path d="M630.8 350.8l-2.1 1.1-2.6-7.1 2-1.2z" color="#56544f"/><path d="M651.7 327.6l-1.6 1.5-4.2-8.4 1.5-1.7z" color="#56544f"/><path d="M626.4 352.6l-2.3 .5-2.5-6.8 2.2-.6z" color="#5f5c57"/><path d="M595.2 363.7l-1.4-1-1.8-4.8 1.4 .9z" color="#74716b"/><path d="M651 311.1l-1.7-.6-5.4-8.4 1.6 .6z" color="#73706a"/><path d="M687.3 288.1l-1.1 1.8-6.9-10.8 1-1.9z" color="#56544f"/><path d="M628.7 351.9l-2.3 .7-2.6-6.9 2.3-.9z" color="#585551"/><path d="M596.6 370.2l0 1.4-1.2-4.9-.1-1.5z" color="#65625d"/><path d="M648.9 310.8l.6 1.4-5.4-8.3-.6-1.5z" color="#66645e"/><path d="M577.8 386.6l-1.7-.8-.2-3.7 1.7 .8z" color="#74716b"/><path d="M641.7 333.3l-2.3 .3-3.8-7.8 2.2-.4z" color="#686660"/><path d="M633.9 335.8l-.4 1.6-3.6-7.3 .3-1.7z" color="#585651"/><path d="M602.4 370.1l-2.2-.1-1.3-5.3 2.1 .1z" color="#716e68"/><path d="M597 378.1l-.9 1.2-.8-4.9 .9-1.4z" color="#575550"/><path d="M669 299.2l-.3 1.7-6.2-9.6 .3-1.8z" color="#575550"/><path d="M595.1 385.4l-1.7 .9-.3-4.7 1.7-1.1z" color="#56544f"/><path d="M650.1 329.1l-1.8 1.4-4.1-8.3 1.7-1.5z" color="#56544f"/><path d="M613.6 367.2l-2 1.1-1.5-6 1.9-1.2z" color="#56544f"/><path d="M676.6 296.2l-2.2 .4-6.5-9.9 2.2-.6z" color="#68655f"/><path d="M575.9 382.1l-1.4-1-.5-3.5 1.3 .9z" color="#74716b"/><path d="M644 332.6l-2.3 .7-3.9-7.9 2.2-.8z" color="#5f5c57"/><path d="M686.2 289.9l-1.5 1.6-6.8-10.6 1.4-1.8z" color="#56544f"/><path d="M615.2 346.4l-1.7-.7-3-6 1.7 .6z" color="#74716a"/><path d="M648.3 330.5l-2.1 1.2-4.1-8.2 2.1-1.3z" color="#56544f"/><path d="M646.2 331.7l-2.2 .9-4-8 2.1-1.1z" color="#585551"/><path d="M604.8 370.1l-2.4 0-1.4-5.3 2.3-.2z" color="#696761"/><path d="M613.1 346l.6 1.4-3-6-.6-1.4z" color="#696661"/><path d="M611.6 368.3l-2.2 .8-1.4-5.8 2.1-1z" color="#56544f"/><path d="M629.9 325.1l-1.3-.9-4.5-7 1.3 .9z" color="#726f69"/><path d="M615.7 356.7l-.8 1.5-2.3-6 .8-1.7z" color="#56544f"/><path d="M678.8 295.4l-2.2 .8-6.5-10.1 2.1-.9z" color="#5f5c57"/><path d="M579.9 387.2l-2.1-.6-.2-3.7 2 .5z" color="#74716b"/><path d="M652.9 311.3l-1.9-.2-5.5-8.4 1.9 .1z" color="#726f69"/><path d="M607.1 369.7l-2.3 .4-1.5-5.5 2.4-.5z" color="#5f5d57"/><path d="M596.9 364.3l-1.7-.6-1.8-4.9 1.7 .6z" color="#74716b"/><path d="M684.7 291.5l-1.8 1.5-6.7-10.4 1.7-1.7z" color="#56544f"/><path d="M609.4 369.1l-2.3 .6-1.4-5.6 2.3-.8z" color="#575550"/><path d="M593.4 386.3l-2 .7-.3-4.5 2-.9z" color="#56544f"/><path d="M680.9 294.4l-2.1 1-6.6-10.2 2.1-1.2z" color="#585551"/><path d="M633.5 337.4l-.8 1.7-3.5-7.2 .7-1.8z" color="#56544f"/><path d="M668.7 300.9l-.8 1.8-6.1-9.5 .7-1.9z" color="#56544f"/><path d="M649.5 312.2l.1 1.6-5.3-8.3-.2-1.6z" color="#5d5b56"/><path d="M682.9 293l-2 1.4-6.6-10.4 1.9-1.4z" color="#56544f"/><path d="M596.6 371.6l-.4 1.4-1.2-4.8 .4-1.5z" color="#5b5954"/><path d="M596.1 379.3l-1.3 1.2-.7-4.7 1.2-1.4z" color="#56544f"/><path d="M577.6 382.9l-1.7-.8-.6-3.6 1.7 .8z" color="#74716b"/><path d="M582.1 387.7l-2.2-.5-.3-3.8 2.2 .3z" color="#726f69"/><path d="M617.2 346.7l-2-.3-3-6.1 1.9 .2z" color="#73706a"/><path d="M576.2 387.1l0 1.2-.2-3.5 0-1.3z" color="#6a6862"/><path d="M591.4 387l-2.2 .5-.3-4.4 2.2-.6z" color="#56544f"/><path d="M655 311.2l-2.1 .1-5.5-8.5 2-.2z" color="#6f6c66"/><path d="M614.9 358.2l-1.3 1.5-2.2-5.9 1.2-1.6z" color="#56544f"/><path d="M613.7 347.4l.1 1.5-3-5.9-.1-1.6z" color="#5f5d58"/><path d="M598.9 364.7l-2-.4-1.8-4.9 1.9 .4z" color="#74716a"/><path d="M584.5 387.8l-2.4-.1-.3-4 2.4 .1z" color="#6a6761"/><path d="M631.6 325.7l-1.7-.6-4.5-7 1.6 .5z" color="#73706a"/><path d="M667.9 302.7l-1.1 1.7-6-9.3 1-1.9z" color="#56544f"/><path d="M589.2 387.5l-2.3 .3-.3-4.2 2.3-.5z" color="#575550"/><path d="M575.3 378.5l-1.3-.9-.9-3.4 1.3 .9z" color="#74716b"/><path d="M632.7 339.1l-1.2 1.6-3.5-7.1 1.2-1.7z" color="#56544f"/><path d="M629.5 325.4l.6 1.4-4.5-6.9-.5-1.5z" color="#66645e"/><path d="M586.9 387.8l-2.4 0-.3-4 2.4-.2z" color="#5f5c57"/><path d="M594.8 380.5l-1.7 1.1-.7-4.6 1.7-1.2z" color="#56544f"/><path d="M649.6 313.8l-.3 1.7-5.3-8.2 .3-1.8z" color="#575550"/><path d="M596.2 373l-.9 1.4-1.2-4.7 .9-1.5z" color="#56544f"/><path d="M619.3 346.7l-2.1 0-3.1-6.2 2.1-.1z" color="#706d67"/><path d="M595.3 365.2l.1 1.5-1.8-4.7-.1-1.6z" color="#62605a"/><path d="M593.4 358.8l-1.4-.9-2.2-4.5 1.3 .9z" color="#73706a"/><path d="M579.6 383.4l-2-.5-.6-3.6 2 .4z" color="#74716b"/><path d="M657.2 310.8l-2.2 .4-5.6-8.6 2.2-.5z" color="#68655f"/><path d="M666.8 304.4l-1.5 1.7-5.9-9.2 1.4-1.8z" color="#56544f"/><path d="M613.6 359.7l-1.6 1.4-2.1-5.8 1.5-1.5z" color="#56544f"/><path d="M601 364.8l-2.1-.1-1.9-4.9 2.2 0z" color="#716e68"/><path d="M631.5 340.7l-1.5 1.5-3.5-6.9 1.5-1.7z" color="#56544f"/><path d="M680.5 270.4l.6 1.5-8.3-10.2-.6-1.5z" color="#64615c"/><path d="M662.4 286.1l-1.3-.9-7.3-8.9 1.3 .9z" color="#706d67"/><path d="M610.5 339.7l-1.3-.9-3.6-5.6 1.3 .9z" color="#726f69"/><path d="M593.1 381.6l-2 .9-.6-4.5 1.9-1z" color="#56544f"/><path d="M659.4 310l-2.2 .8-5.6-8.7 2.1-.9z" color="#5f5c57"/><path d="M576.2 388.3l-.4 1.2-.2-3.4 .4-1.3z" color="#5f5d58"/><path d="M633.5 325.9l-1.9-.2-4.6-7.1 1.9 .2z" color="#726f69"/><path d="M621.6 346.3l-2.3 .4-3.1-6.3 2.2-.4z" color="#686660"/><path d="M665.3 306.1l-1.8 1.5-5.8-9 1.7-1.7z" color="#56544f"/><path d="M613.8 348.9l-.4 1.6-2.9-5.8 .3-1.7z" color="#585651"/><path d="M576 383.5l0 1.3-.5-3.4-.1-1.4z" color="#68655f"/><path d="M577 379.3l-1.7-.8-.9-3.4 1.7 .7z" color="#74716b"/><path d="M581.8 383.7l-2.2-.3-.6-3.7 2.2 .2z" color="#726f69"/><path d="M661.5 309l-2.1 1-5.7-8.8 2.1-1.2z" color="#585551"/><path d="M612 361.1l-1.9 1.2-2.1-5.6 1.9-1.4z" color="#56544f"/><path d="M649.3 315.5l-.8 1.8-5.1-8.1 .6-1.9z" color="#56544f"/><path d="M630.1 326.8l.1 1.6-4.4-6.9-.2-1.6z" color="#5d5b56"/><path d="M663.5 307.6l-2 1.4-5.7-9 1.9-1.4z" color="#56544f"/><path d="M603.3 364.6l-2.3 .2-1.8-5 2.2-.4z" color="#696661"/><path d="M630 342.2l-1.9 1.4-3.3-6.8 1.7-1.5z" color="#56544f"/><path d="M595.3 374.4l-1.2 1.4-1.2-4.6 1.2-1.5z" color="#56544f"/><path d="M623.8 345.7l-2.2 .6-3.2-6.3 2.2-.8z" color="#5f5c57"/><path d="M591.1 382.5l-2.2 .6-.6-4.2 2.2-.9z" color="#56544f"/><path d="M595.1 359.4l-1.7-.6-2.3-4.5 1.7 .6z" color="#74716a"/><path d="M628.1 343.6l-2 1.2-3.3-6.7 2-1.3z" color="#56544f"/><path d="M595.4 366.7l-.4 1.5-1.7-4.6 .3-1.6z" color="#595752"/><path d="M584.2 383.8l-2.4-.1-.6-3.8 2.4-.1z" color="#6a6761"/><path d="M610.1 362.3l-2.1 1-2.1-5.4 2.1-1.2z" color="#56544f"/><path d="M626.1 344.8l-2.3 .9-3.2-6.5 2.2-1.1z" color="#585551"/><path d="M605.7 364.1l-2.4 .5-1.9-5.2 2.3-.6z" color="#5f5c57"/><path d="M593 359.1l.5 1.3-2.2-4.4-.5-1.4z" color="#696661"/><path d="M574.4 375.1l-1.3-.9-1.2-3.2 1.3 .9z" color="#74716b"/><path d="M608 363.3l-2.3 .8-2-5.3 2.2-.9z" color="#585551"/><path d="M588.9 383.1l-2.3 .5-.6-4.1 2.3-.6z" color="#575550"/><path d="M586.6 383.6l-2.4 .2-.6-4 2.4-.3z" color="#5f5c57"/><path d="M635.6 325.8l-2.1 .1-4.6-7.1 2.1-.2z" color="#6f6c66"/><path d="M681.1 271.9l.2 1.7-8.3-10.1-.2-1.8z" color="#5b5954"/><path d="M664 286.7l-1.6-.6-7.3-8.9 1.6 .5z" color="#726f69"/><path d="M579 379.7l-2-.4-.9-3.5 2 .4z" color="#74716b"/><path d="M612.2 340.3l-1.7-.6-3.6-5.6 1.6 .5z" color="#73706a"/><path d="M662 286.4l.6 1.5-7.2-8.9-.6-1.5z" color="#64615c"/><path d="M648.5 317.3l-1.1 1.7-5.1-7.9 1.1-1.9z" color="#56544f"/><path d="M643.9 302.1l-1.3-.9-6.3-7.6 1.4 .8z" color="#706d67"/><path d="M613.4 350.5l-.8 1.7-2.8-5.7 .7-1.8z" color="#56544f"/><path d="M610.1 340l.6 1.4-3.6-5.6-.5-1.4z" color="#66645e"/><path d="M575.8 389.5l-.9 1.1-.2-3.3 .9-1.2z" color="#575550"/><path d="M594.1 375.8l-1.7 1.2-1.1-4.4 1.6-1.4z" color="#56544f"/><path d="M630.2 328.4l-.3 1.7-4.4-6.8 .3-1.8z" color="#575550"/><path d="M576 384.8l-.4 1.3-.6-3.3 .5-1.4z" color="#5d5b56"/><path d="M597 359.8l-1.9-.4-2.3-4.5 1.9 .2z" color="#73706a"/><path d="M637.8 325.4l-2.2 .4-4.6-7.2 2.1-.5z" color="#68655f"/><path d="M575.4 380l.1 1.4-.9-3.3 0-1.4z" color="#65625d"/><path d="M595 368.2l-.9 1.5-1.6-4.5 .8-1.6z" color="#56544f"/><path d="M647.4 319l-1.5 1.7-5-7.8 1.4-1.8z" color="#56544f"/><path d="M576.1 375.8l-1.7-.7-1.2-3.2 1.7 .6z" color="#74716b"/><path d="M581.2 379.9l-2.2-.2-.9-3.5 2.2 .1z" color="#716e68"/><path d="M593.5 360.4l.1 1.6-2.2-4.4-.1-1.6z" color="#5f5d58"/><path d="M592.4 377l-1.9 1-1.1-4.2 1.9-1.2z" color="#56544f"/><path d="M612.6 352.2l-1.2 1.6-2.8-5.6 1.2-1.7z" color="#56544f"/><path d="M591.1 354.3l-1.3-.9-2.7-4.2 1.3 .9z" color="#726f69"/><path d="M640 324.6l-2.2 .8-4.7-7.3 2.1-.9z" color="#5f5c57"/><path d="M681.3 273.6l-.3 1.8-8.2-10.1 .2-1.8z" color="#56544f"/><path d="M665.9 286.8l-1.9-.1-7.3-9 1.8 .1z" color="#716e68"/><path d="M614.1 340.5l-1.9-.2-3.7-5.7 1.9 .2z" color="#726f69"/><path d="M554.6 392l-1.4-1-.1-1.9 1.3 1z" color="#74716b"/><path d="M645.9 320.7l-1.7 1.5-5-7.7 1.7-1.6z" color="#56544f"/><path d="M662.6 287.9l.2 1.6-7.2-8.8-.2-1.7z" color="#5b5954"/><path d="M645.5 302.7l-1.6-.6-6.2-7.7 1.6 .5z" color="#726f69"/><path d="M643.5 302.4l.6 1.5-6.2-7.6-.6-1.5z" color="#64615c"/><path d="M625.4 318.1l-1.3-.9-5.2-6.4 1.3 .9z" color="#706d67"/><path d="M583.6 379.8l-2.4 .1-.9-3.6 2.3-.2z" color="#696761"/><path d="M642.1 323.5l-2.1 1.1-4.8-7.4 2.1-1.2z" color="#585551"/><path d="M629.9 330.1l-.7 1.8-4.3-6.7 .6-1.9z" color="#56544f"/><path d="M599.2 359.8l-2.2 0-2.3-4.7 2.1-.1z" color="#706d67"/><path d="M610.7 341.4l.1 1.6-3.5-5.5-.2-1.7z" color="#5d5b56"/><path d="M644.2 322.2l-2.1 1.3-4.8-7.5 1.9-1.5z" color="#56544f"/><path d="M573.2 371.9l-1.3-.9-1.5-3 1.3 .9z" color="#73706a"/><path d="M574.9 390.6l-1.4 1-.2-3.1 1.4-1.2z" color="#56544f"/><path d="M590.5 378l-2.2 .9-1.1-4.1 2.2-1z" color="#56544f"/><path d="M575.6 386.1l-.9 1.2-.5-3.1 .8-1.4z" color="#575550"/><path d="M586 379.5l-2.4 .3-1-3.7 2.3-.5z" color="#5f5d57"/><path d="M588.3 378.9l-2.3 .6-1.1-3.9 2.3-.8z" color="#575550"/><path d="M594.1 369.7l-1.2 1.5-1.6-4.3 1.2-1.7z" color="#56544f"/><path d="M578.1 376.2l-2-.4-1.2-3.3 2 .3z" color="#74716a"/><path d="M611.4 353.8l-1.5 1.5-2.7-5.4 1.4-1.7z" color="#56544f"/><path d="M553.2 391l-.5 1.4-.5-3.8 .5-1.7z" color="#5e5b56"/><path d="M575.5 381.4l-.5 1.4-.8-3.2 .4-1.5z" color="#5b5954"/><path d="M554.4 390.1l-1.3-1-.3-1.7 1.4 .9z" color="#74716b"/><path d="M616.2 340.4l-2.1 .1-3.7-5.7 2.1-.2z" color="#6f6c66"/><path d="M601.4 359.4l-2.2 .4-2.4-4.8 2.2-.4z" color="#686660"/><path d="M681 275.4l-.7 1.8-8-9.9 .5-2z" color="#56544f"/><path d="M667.9 286.7l-2 .1-7.4-9 2-.3z" color="#6e6b65"/><path d="M593.6 362l-.3 1.6-2.2-4.3 .3-1.7z" color="#585651"/><path d="M592.8 354.9l-1.7-.6-2.7-4.2 1.7 .5z" color="#73706a"/><path d="M629.2 331.9l-1.2 1.7-4.2-6.5 1.1-1.9z" color="#56544f"/><path d="M556.3 392.8l-1.7-.8-.2-1.9 1.7 .8z" color="#74716b"/><path d="M574.6 376.7l0 1.4-1.1-3.1-.1-1.5z" color="#62605a"/><path d="M609.9 355.3l-1.9 1.4-2.6-5.3 1.8-1.5z" color="#56544f"/><path d="M590.8 354.6l.5 1.4-2.7-4.2-.5-1.4z" color="#66645e"/><path d="M662.8 289.5l-.3 1.8-7.1-8.7 .2-1.9z" color="#56544f"/><path d="M647.4 302.8l-1.9-.1-6.2-7.8 1.8 .2z" color="#716e68"/><path d="M603.7 358.8l-2.3 .6-2.4-4.8 2.2-.8z" color="#5f5c57"/><path d="M573.5 391.6l-1.6 .9-.2-2.9 1.6-1.1z" color="#56544f"/><path d="M644.1 303.9l.2 1.6-6.2-7.5-.2-1.7z" color="#5b5954"/><path d="M627 318.6l-1.6-.5-5.2-6.4 1.6 .5z" color="#726f69"/><path d="M610.8 343l-.3 1.7-3.5-5.4 .3-1.8z" color="#575550"/><path d="M592.9 371.2l-1.6 1.4-1.6-4.2 1.6-1.5z" color="#56544f"/><path d="M625.1 318.4l.5 1.5-5.1-6.4-.6-1.5z" color="#64615c"/><path d="M574.9 372.5l-1.7-.6-1.5-3 1.7 .6z" color="#74716a"/><path d="M606.9 334.1l-1.3-.9-4.2-5.1 1.4 .9z" color="#706d67"/><path d="M580.3 376.3l-2.2-.1-1.2-3.4 2.1 0z" color="#716e68"/><path d="M608 356.7l-2.1 1.2-2.5-5.2 2-1.3z" color="#56544f"/><path d="M605.9 357.9l-2.2 .9-2.5-5 2.2-1.1z" color="#585551"/><path d="M572.9 372.2l.5 1.3-1.5-2.9-.5-1.5z" color="#696661"/><path d="M618.4 340l-2.2 .4-3.7-5.8 2.1-.5z" color="#68655f"/><path d="M554.2 388.3l-1.4-.9-.4-1.7 1.3 .9z" color="#74716b"/><path d="M574.7 387.3l-1.4 1.2-.4-3 1.3-1.3z" color="#56544f"/><path d="M680.3 277.2l-1 1.9-8-9.8 1-2z" color="#56544f"/><path d="M670.1 286.1l-2.2 .6-7.4-9.2 2.1-.6z" color="#67645f"/><path d="M628 333.6l-1.5 1.7-4.1-6.4 1.4-1.8z" color="#56544f"/><path d="M556.1 390.9l-1.7-.8-.2-1.8 1.7 .7z" color="#74716b"/><path d="M575 382.8l-.8 1.4-.8-3 .8-1.6z" color="#56544f"/><path d="M591.3 372.6l-1.9 1.2-1.5-4 1.8-1.4z" color="#56544f"/><path d="M558.3 393.4l-2-.6-.2-1.9 2.1 .5z" color="#74716b"/><path d="M593.3 363.6l-.8 1.6-2.1-4.2 .7-1.7z" color="#56544f"/><path d="M582.6 376.1l-2.3 .2-1.3-3.5 2.3-.3z" color="#696661"/><path d="M571.7 368.9l-1.3-.9-1.8-2.8 1.3 .9z" color="#726f69"/><path d="M620.6 339.2l-2.2 .8-3.8-5.9 2.1-.9z" color="#5f5c57"/><path d="M594.7 355.1l-1.9-.2-2.7-4.3 1.8 .2z" color="#726f69"/><path d="M662.5 291.3l-.7 1.9-7-8.6 .6-2z" color="#56544f"/><path d="M649.4 302.6l-2 .2-6.3-7.7 2-.3z" color="#6e6b65"/><path d="M571.9 392.5l-2 .7-.2-2.7 2-.9z" color="#56544f"/><path d="M626.5 335.3l-1.7 1.5-4.1-6.3 1.7-1.6z" color="#56544f"/><path d="M552.7 392.4l-.8 1.4-.5-3.4 .8-1.8z" color="#5a5752"/><path d="M679.3 279.1l-1.4 1.8-7.9-9.7 1.3-1.9z" color="#56544f"/><path d="M672.2 285.2l-2.1 .9-7.5-9.2 2-1z" color="#5e5c57"/><path d="M574.6 378.1l-.4 1.5-1.1-2.9 .4-1.7z" color="#595752"/><path d="M622.8 338.1l-2.2 1.1-3.9-6 2.1-1.2z" color="#585551"/><path d="M589.4 373.8l-2.2 1-1.4-3.9 2.1-1.1z" color="#56544f"/><path d="M610.5 344.7l-.7 1.8-3.4-5.3 .6-1.9z" color="#56544f"/><path d="M591.3 356l.1 1.6-2.6-4.1-.2-1.7z" color="#5d5b56"/><path d="M584.9 375.6l-2.3 .5-1.3-3.6 2.3-.6z" color="#5f5c57"/><path d="M624.8 336.8l-2 1.3-4-6.1 1.9-1.5z" color="#56544f"/><path d="M576.9 372.8l-2-.3-1.5-3 1.9 .2z" color="#73706a"/><path d="M644.3 305.5l-.3 1.8-6.1-7.4 .2-1.9z" color="#56544f"/><path d="M628.9 318.8l-1.9-.2-5.2-6.4 1.8 .1z" color="#716e68"/><path d="M553.7 386.6l-1.3-.9-.6-1.6 1.3 .9z" color="#74716b"/><path d="M552.7 386.9l-.5 1.7-1.2-3.3 .4-2z" color="#595752"/><path d="M587.2 374.8l-2.3 .8-1.3-3.7 2.2-1z" color="#585551"/><path d="M573.3 388.5l-1.6 1.1-.5-2.9 1.7-1.2z" color="#56544f"/><path d="M625.6 319.9l.2 1.6-5.1-6.3-.2-1.7z" color="#5b5954"/><path d="M608.5 334.6l-1.6-.5-4.1-5.1 1.6 .5z" color="#726f69"/><path d="M677.9 280.9l-1.7 1.7-7.8-9.6 1.6-1.8z" color="#56544f"/><path d="M674.3 284l-2.1 1.2-7.6-9.3 2-1.3z" color="#585551"/><path d="M606.6 334.4l.5 1.4-4.1-5-.6-1.5z" color="#64615c"/><path d="M588.4 350.1l-1.3-.9-3.1-3.8 1.3 .8z" color="#706d67"/><path d="M560.5 393.8l-2.2-.4-.1-2 2.2 .3z" color="#726f69"/><path d="M555.9 389l-1.7-.7-.5-1.7 1.7 .7z" color="#74716b"/><path d="M676.2 282.6l-1.9 1.4-7.7-9.4 1.8-1.6z" color="#56544f"/><path d="M569.9 393.2l-2.3 .5-.1-2.6 2.2-.6z" color="#56544f"/><path d="M558.2 391.4l-2.1-.5-.2-1.9 2 .5z" color="#74716b"/><path d="M573.4 373.5l.1 1.5-1.5-2.8-.1-1.6z" color="#5f5d58"/><path d="M661.8 293.2l-1 1.9-7-8.6 1-1.9z" color="#56544f"/><path d="M651.6 302.1l-2.2 .5-6.3-7.8 2-.6z" color="#67645f"/><path d="M592.5 365.2l-1.2 1.7-2.1-4.1 1.2-1.8z" color="#56544f"/><path d="M574.2 384.2l-1.3 1.3-.8-2.8 1.3-1.5z" color="#56544f"/><path d="M596.8 355l-2.1 .1-2.8-4.3 2.1-.2z" color="#6f6c66"/><path d="M562.9 394l-2.4-.2-.1-2.1 2.3 .1z" color="#6a6761"/><path d="M567.6 393.7l-2.3 .3-.2-2.4 2.4-.5z" color="#575550"/><path d="M573.4 369.5l-1.7-.6-1.8-2.8 1.7 .5z" color="#73706a"/><path d="M609.8 346.5l-1.2 1.7-3.3-5.2 1.1-1.8z" color="#56544f"/><path d="M565.3 394l-2.4 0-.2-2.2 2.4-.2z" color="#5f5c57"/><path d="M579 372.8l-2.1 0-1.6-3.1 2.1-.1z" color="#706d67"/><path d="M553.1 385l-1.3-.9-.8-1.5 1.3 .9z" color="#73706a"/><path d="M571.4 369.1l.5 1.5-1.7-2.8-.6-1.4z" color="#66645e"/><path d="M571.7 389.6l-2 .9-.4-2.7 1.9-1.1z" color="#56544f"/><path d="M644 307.3l-.6 1.9-6-7.4 .5-1.9z" color="#56544f"/><path d="M631 318.6l-2.1 .2-5.3-6.5 2-.2z" color="#6e6b65"/><path d="M574.2 379.6l-.8 1.6-1.1-2.9 .8-1.6z" color="#56544f"/><path d="M660.8 295.1l-1.4 1.8-6.9-8.4 1.3-2z" color="#56544f"/><path d="M653.7 301.2l-2.1 .9-6.5-7.9 2.1-1z" color="#5e5c57"/><path d="M560.4 391.7l-2.2-.3-.3-1.9 2.2 .2z" color="#726f69"/><path d="M591.4 357.6l-.3 1.7-2.5-4 .2-1.8z" color="#575550"/><path d="M555.4 387.3l-1.7-.7-.6-1.6 1.7 .6z" color="#74716b"/><path d="M557.9 389.5l-2-.5-.5-1.7 2 .4z" color="#74716b"/><path d="M625.8 321.5l-.3 1.8-5-6.2 .2-1.9z" color="#56544f"/><path d="M610.4 334.8l-1.9-.2-4.1-5.1 1.8 .1z" color="#716e68"/><path d="M591.3 366.9l-1.6 1.5-1.9-3.9 1.4-1.7z" color="#56544f"/><path d="M551.9 393.8l-1.1 1.3-.4-3.1 1-1.6z" color="#575550"/><path d="M599 354.6l-2.2 .4-2.8-4.4 2.1-.5z" color="#68655f"/><path d="M607.1 335.8l.2 1.7-4.1-5-.2-1.7z" color="#5b5954"/><path d="M590.1 350.6l-1.7-.5-3.1-3.9 1.6 .5z" color="#726f69"/><path d="M671.2 259l1 1.2-9.3-9.1-1-1.2z" color="#696761"/><path d="M552.2 388.6l-.8 1.8-1-3.1 .6-2z" color="#575550"/><path d="M659.4 296.9l-1.7 1.7-6.7-8.3 1.5-1.8z" color="#56544f"/><path d="M655.8 300l-2.1 1.2-6.5-8 1.9-1.4z" color="#585551"/><path d="M588.1 350.4l.5 1.4-3-3.7-.6-1.5z" color="#64615c"/><path d="M569.9 366.1l-1.3-.9-2.1-2.6 1.3 .9z" color="#706d67"/><path d="M569.7 390.5l-2.2 .6-.4-2.4 2.2-.9z" color="#56544f"/><path d="M608.6 348.2l-1.4 1.7-3.3-5.1 1.4-1.8z" color="#56544f"/><path d="M572.9 385.5l-1.7 1.2-.7-2.7 1.6-1.3z" color="#56544f"/><path d="M581.3 372.5l-2.3 .3-1.6-3.2 2.2-.5z" color="#686660"/><path d="M657.7 298.6l-1.9 1.4-6.7-8.2 1.9-1.5z" color="#56544f"/><path d="M573.5 375l-.4 1.7-1.4-2.8 .3-1.7z" color="#585651"/><path d="M562.7 391.8l-2.3-.1-.3-2 2.3-.1z" color="#6a6761"/><path d="M655.1 277.2l-1.3-.9-8.2-8 1.3 .9z" color="#6e6c66"/><path d="M653.8 276.3l1 1.2-8.2-8-1-1.2z" color="#696761"/><path d="M643.4 309.2l-1.1 1.9-5.9-7.3 1-2z" color="#56544f"/><path d="M633.1 318.1l-2.1 .5-5.4-6.5 2.1-.7z" color="#67645f"/><path d="M567.5 391.1l-2.4 .5-.3-2.3 2.3-.6z" color="#575550"/><path d="M589.7 368.4l-1.8 1.4-1.9-3.8 1.8-1.5z" color="#56544f"/><path d="M552.3 383.5l-1.3-.9-.9-1.4 1.3 .8z" color="#726f69"/><path d="M565.1 391.6l-2.4 .2-.3-2.2 2.4-.3z" color="#5f5c57"/><path d="M601.2 353.8l-2.2 .8-2.9-4.5 2.1-.9z" color="#5f5c57"/><path d="M575.3 369.7l-1.9-.2-1.8-2.9 1.8 .2z" color="#726f69"/><path d="M607.2 349.9l-1.8 1.5-3.2-4.9 1.7-1.7z" color="#56544f"/><path d="M583.6 371.9l-2.3 .6-1.7-3.4 2.2-.7z" color="#5f5c57"/><path d="M551.4 383.3l-.4 2-1.9-2.9 .2-2.2z" color="#575550"/><path d="M560.1 389.7l-2.2-.2-.5-1.8 2.2 .1z" color="#716e68"/><path d="M554.8 385.6l-1.7-.6-.8-1.5 1.7 .5z" color="#74716a"/><path d="M637.7 294.4l-1.4-.8-7-6.9 1.3 .9z" color="#6e6c66"/><path d="M636.3 293.6l1 1.2-7-6.9-1-1.2z" color="#696761"/><path d="M573.4 381.2l-1.3 1.5-1-2.8 1.2-1.6z" color="#56544f"/><path d="M587.9 369.8l-2.1 1.1-1.8-3.6 2-1.3z" color="#56544f"/><path d="M603.4 352.7l-2.2 1.1-3-4.6 2.1-1.2z" color="#585551"/><path d="M591.1 359.3l-.7 1.7-2.5-3.8 .7-1.9z" color="#56544f"/><path d="M571.9 370.6l.1 1.6-1.7-2.7-.1-1.7z" color="#5d5b56"/><path d="M557.4 387.7l-2-.4-.6-1.7 1.9 .3z" color="#74716a"/><path d="M605.4 351.4l-2 1.3-3.1-4.7 1.9-1.5z" color="#56544f"/><path d="M585.8 370.9l-2.2 1-1.8-3.5 2.2-1.1z" color="#585551"/><path d="M571.2 386.7l-1.9 1.1-.7-2.5 1.9-1.3z" color="#56544f"/><path d="M625.5 323.3l-.6 1.9-5-6.1 .6-2z" color="#56544f"/><path d="M612.5 334.6l-2.1 .2-4.2-5.2 2-.3z" color="#6e6b65"/><path d="M642.3 311.1l-1.4 1.8-5.8-7.2 1.3-1.9z" color="#56544f"/><path d="M635.2 317.2l-2.1 .9-5.4-6.7 2-1z" color="#5e5c57"/><path d="M620.2 311.7l-1.3-.9-5.9-5.7 1.3 .9z" color="#6e6c66"/><path d="M618.9 310.8l1 1.2-5.9-5.7-1-1.2z" color="#696761"/><path d="M607.3 337.5l-.3 1.8-4-4.9 .2-1.9z" color="#56544f"/><path d="M591.9 350.8l-1.8-.2-3.2-3.9 1.8 .2z" color="#716e68"/><path d="M562.4 389.6l-2.3 .1-.5-1.9 2.3-.3z" color="#696761"/><path d="M672.2 260.2l.6 1.5-9.3-9.1-.6-1.5z" color="#615f59"/><path d="M573.1 376.7l-.8 1.6-1.3-2.7 .7-1.7z" color="#56544f"/><path d="M588.6 351.8l.2 1.7-3-3.7-.2-1.7z" color="#5b5954"/><path d="M569.3 387.8l-2.2 .9-.6-2.4 2.1-1z" color="#56544f"/><path d="M571.6 366.6l-1.7-.5-2.1-2.6 1.6 .5z" color="#726f69"/><path d="M640.9 312.9l-1.7 1.6-5.7-7 1.6-1.8z" color="#56544f"/><path d="M637.3 316l-2.1 1.2-5.5-6.8 2-1.3z" color="#585551"/><path d="M602.8 329l-1.4-.9-4.7-4.6 1.4 .9z" color="#6e6c66"/><path d="M601.4 328.1l1 1.2-4.7-4.6-1-1.2z" color="#696761"/><path d="M569.6 366.4l.6 1.4-2.1-2.5-.6-1.5z" color="#64615c"/><path d="M550.8 395.1l-1.3 1.3-.3-2.7 1.2-1.7z" color="#56544f"/><path d="M551.4 382l-1.3-.8-1-1.3 1.3 .9z" color="#706d67"/><path d="M551.4 390.4l-1 1.6-.9-2.7 .9-2z" color="#56544f"/><path d="M577.4 369.6l-2.1 .1-1.9-2.9 2.1-.2z" color="#6f6c66"/><path d="M639.2 314.5l-1.9 1.5-5.6-6.9 1.8-1.6z" color="#56544f"/><path d="M564.8 389.3l-2.4 .3-.5-2.1 2.3-.5z" color="#5f5d57"/><path d="M567.1 388.7l-2.3 .6-.6-2.3 2.3-.7z" color="#575550"/><path d="M572.1 382.7l-1.6 1.3-.9-2.5 1.5-1.6z" color="#56544f"/><path d="M656.7 277.7l-1.6-.5-8.2-8 1.6 .4z" color="#716e68"/><path d="M559.6 387.8l-2.2-.1-.7-1.8 2.2 0z" color="#716e68"/><path d="M654.8 277.5l.6 1.5-8.2-8-.6-1.5z" color="#615f59"/><path d="M554 384l-1.7-.5-.9-1.5 1.7 .6z" color="#73706a"/><path d="M590.4 361l-1.2 1.8-2.4-3.8 1.1-1.8z" color="#56544f"/><path d="M624.9 325.2l-1.1 1.9-4.9-6 1-2z" color="#56544f"/><path d="M614.6 334.1l-2.1 .5-4.3-5.3 2-.6z" color="#67645f"/><path d="M585.3 346.2l-1.3-.8-3.5-3.5 1.3 .9z" color="#6e6c66"/><path d="M584 345.4l1 1.2-3.5-3.5-1-1.2z" color="#696761"/><path d="M556.7 385.9l-1.9-.3-.8-1.6 1.9 .3z" color="#73706a"/><path d="M551 385.3l-.6 2-1.8-2.6 .5-2.3z" color="#56544f"/><path d="M639.3 294.9l-1.6-.5-7.1-6.8 1.6 .4z" color="#716e68"/><path d="M572 372.2l-.3 1.7-1.6-2.6 .2-1.8z" color="#575550"/><path d="M637.3 294.8l.6 1.5-7-6.9-.6-1.5z" color="#615f59"/><path d="M567.8 363.5l-1.3-.9-2.3-2.3 1.3 .9z" color="#6e6c66"/><path d="M566.5 362.6l1 1.2-2.3-2.3-1-1.2z" color="#696761"/><path d="M607 339.3l-.6 1.9-4-4.8 .6-2z" color="#56544f"/><path d="M594 350.6l-2.1 .2-3.2-3.9 2-.3z" color="#6e6b65"/><path d="M579.6 369.1l-2.2 .5-1.9-3 2.1-.6z" color="#68655f"/><path d="M570.5 384l-1.9 1.3-.9-2.5 1.9-1.3z" color="#56544f"/><path d="M561.9 387.5l-2.3 .3-.7-1.9 2.2-.3z" color="#696661"/><path d="M621.8 312.2l-1.6-.5-5.9-5.7 1.6 .4z" color="#716e68"/><path d="M623.8 327.1l-1.4 1.8-4.8-5.9 1.3-1.9z" color="#56544f"/><path d="M616.7 333.2l-2.1 .9-4.4-5.4 2.1-1z" color="#5e5c57"/><path d="M572.3 378.3l-1.2 1.6-1.2-2.5 1.1-1.8z" color="#56544f"/><path d="M619.9 312l.6 1.5-5.8-5.7-.7-1.5z" color="#615f59"/><path d="M589.2 362.8l-1.4 1.7-2.4-3.7 1.4-1.8z" color="#56544f"/><path d="M550.4 380.8l-1.3-.9-1.2-1.2 1.3 .9z" color="#6e6c66"/><path d="M588.8 353.5l-.2 1.8-3-3.7 .2-1.8z" color="#56544f"/><path d="M573.4 366.8l-1.8-.2-2.2-2.6 1.9 .1z" color="#716e68"/><path d="M672.8 261.7l.2 1.8-9.2-9.1-.3-1.8z" color="#595752"/><path d="M568.6 385.3l-2.1 1-.9-2.3 2.1-1.2z" color="#56544f"/><path d="M604.4 329.5l-1.6-.5-4.7-4.6 1.5 .5z" color="#716e68"/><path d="M570.2 367.8l.1 1.7-2-2.5-.2-1.7z" color="#5b5954"/><path d="M553.1 382.6l-1.7-.6-1-1.2 1.6 .5z" color="#726f69"/><path d="M564.2 387l-2.3 .5-.8-1.9 2.3-.7z" color="#5f5c57"/><path d="M602.4 329.3l.6 1.5-4.6-4.5-.7-1.6z" color="#615f59"/><path d="M558.9 385.9l-2.2 0-.8-1.6 2.1-.1z" color="#706d67"/><path d="M622.4 328.9l-1.7 1.6-4.7-5.7 1.6-1.8z" color="#56544f"/><path d="M618.8 332l-2.1 1.2-4.4-5.5 1.9-1.3z" color="#585551"/><path d="M549.3 380.2l-.2 2.2-2.5-2.3 0-2.4z" color="#595652"/><path d="M581.8 368.4l-2.2 .7-2-3.1 2.2-.8z" color="#5f5c57"/><path d="M550.4 392l-1.2 1.7-.8-2.4 1.1-2z" color="#56544f"/><path d="M555.9 384.3l-1.9-.3-.9-1.4 1.8 .2z" color="#726f69"/><path d="M566.5 386.3l-2.3 .7-.8-2.1 2.2-.9z" color="#585551"/><path d="M620.7 330.5l-1.9 1.5-4.6-5.6 1.8-1.6z" color="#56544f"/><path d="M658.5 277.8l-1.8-.1-8.2-8.1 1.7 .1z" color="#706d67"/><path d="M549.5 396.4l-1.5 1.2-.3-2.2 1.5-1.7z" color="#56544f"/><path d="M587.8 364.5l-1.8 1.5-2.3-3.5 1.7-1.7z" color="#56544f"/><path d="M655.4 279l.2 1.7-8.1-7.9-.3-1.8z" color="#595752"/><path d="M586.9 346.7l-1.6-.5-3.5-3.4 1.5 .5z" color="#716e68"/><path d="M585 346.6l.6 1.5-3.5-3.4-.6-1.6z" color="#615f59"/><path d="M606.4 341.2l-1.1 1.8-3.8-4.7 .9-1.9z" color="#56544f"/><path d="M596.1 350.1l-2.1 .5-3.3-4 2.1-.7z" color="#67645f"/><path d="M584 367.3l-2.2 1.1-2-3.2 2-1.2z" color="#585551"/><path d="M571.7 373.9l-.7 1.7-1.6-2.5 .7-1.8z" color="#56544f"/><path d="M586 366l-2 1.3-2.2-3.3 1.9-1.5z" color="#56544f"/><path d="M571.1 379.9l-1.5 1.6-1.2-2.4 1.5-1.7z" color="#56544f"/><path d="M550.4 387.3l-.9 2-1.6-2.4 .7-2.2z" color="#56544f"/><path d="M641.1 295.1l-1.8-.2-7.1-6.9 1.8 .1z" color="#706d67"/><path d="M637.9 296.3l.2 1.7-6.9-6.8-.3-1.8z" color="#595752"/><path d="M569.4 364l-1.6-.5-2.3-2.3 1.6 .5z" color="#716e68"/><path d="M567.5 363.8l.6 1.5-2.3-2.2-.6-1.6z" color="#615f59"/><path d="M561.1 385.6l-2.2 .3-.9-1.7 2.2-.5z" color="#686660"/><path d="M549.2 379.6l-1.3-.9-1.3-1 1.3 .9z" color="#6d6a64"/><path d="M623.6 312.3l-1.8-.1-5.9-5.8 1.8 .1z" color="#706d67"/><path d="M588.6 355.3l-.7 1.9-2.9-3.6 .6-2z" color="#56544f"/><path d="M575.5 366.6l-2.1 .2-2.1-2.7 1.9-.2z" color="#6e6b65"/><path d="M620.5 313.5l.2 1.7-5.8-5.6-.2-1.8z" color="#595752"/><path d="M673 263.5l-.2 1.8-9.2-9 .2-1.9z" color="#575550"/><path d="M605.3 343l-1.4 1.8-3.7-4.5 1.3-2z" color="#56544f"/><path d="M598.2 349.2l-2.1 .9-3.3-4.2 2-1z" color="#5e5c57"/><path d="M552 381.3l-1.6-.5-1.2-1.2 1.6 .5z" color="#716e68"/><path d="M569.6 381.5l-1.9 1.3-1.1-2.2 1.8-1.5z" color="#56544f"/><path d="M558 384.2l-2.1 .1-1-1.5 2.1-.2z" color="#6f6c66"/><path d="M570.3 369.5l-.2 1.8-2-2.4 .2-1.9z" color="#56544f"/><path d="M554.9 382.8l-1.8-.2-1.1-1.3 1.8 .1z" color="#716e68"/><path d="M563.4 384.9l-2.3 .7-.9-1.9 2.2-.7z" color="#5f5c57"/><path d="M606.2 329.6l-1.8-.1-4.8-4.6 1.8 0z" color="#706d67"/><path d="M549.1 382.4l-.5 2.3-2.3-2.1 .3-2.5z" color="#595752"/><path d="M603 330.8l.2 1.7-4.6-4.5-.2-1.7z" color="#595752"/><path d="M660.5 277.5l-2 .3-8.3-8.1 1.9-.3z" color="#6d6a64"/><path d="M655.6 280.7l-.2 1.9-8-7.9 .1-1.9z" color="#575550"/><path d="M571 375.6l-1.1 1.8-1.6-2.4 1.1-1.9z" color="#56544f"/><path d="M567.7 382.8l-2.1 1.2-1-2.1 2-1.3z" color="#56544f"/><path d="M603.9 344.8l-1.7 1.7-3.6-4.5 1.6-1.7z" color="#56544f"/><path d="M600.3 348l-2.1 1.2-3.4-4.3 2-1.3z" color="#585551"/><path d="M549.2 393.7l-1.5 1.7-.7-2.1 1.4-2z" color="#56544f"/><path d="M564.2 360.3l1 1.2-2.6-2-1-1.2z" color="#67645f"/><path d="M565.5 361.2l-1.3-.9-2.6-2 1.3 .9z" color="#6d6a64"/><path d="M565.6 384l-2.2 .9-1-1.9 2.2-1.1z" color="#585551"/><path d="M602.2 346.5l-1.9 1.5-3.5-4.4 1.8-1.6z" color="#56544f"/><path d="M548 397.6l-1.7 1.2-.2-1.9 1.6-1.5z" color="#56544f"/><path d="M588.7 346.9l-1.8-.2-3.6-3.4 1.8 0z" color="#706d67"/><path d="M585.6 348.1l.2 1.7-3.4-3.4-.3-1.7z" color="#595752"/><path d="M643.1 294.8l-2 .3-7.1-7 1.9-.3z" color="#6d6a64"/><path d="M549.5 389.3l-1.1 2-1.4-2 .9-2.4z" color="#56544f"/><path d="M638.1 298l-.2 1.9-6.8-6.7 .1-2z" color="#575550"/><path d="M587.9 357.2l-1.1 1.8-2.8-3.4 1-2z" color="#56544f"/><path d="M577.6 366l-2.1 .6-2.3-2.7 2.1-.7z" color="#67645f"/><path d="M560.2 383.7l-2.2 .5-1-1.6 2.1-.6z" color="#68655f"/><path d="M571.3 364.1l-1.9-.1-2.3-2.3 1.7 0z" color="#706d67"/><path d="M568.1 365.3l.2 1.7-2.2-2.2-.3-1.7z" color="#595752"/><path d="M625.6 312.1l-2 .2-5.9-5.8 1.9-.3z" color="#6d6a64"/><path d="M672.8 265.3l-.5 2-9.2-8.9 .5-2.1z" color="#575550"/><path d="M620.7 315.2l-.2 1.9-5.7-5.5 .1-2z" color="#575550"/><path d="M580.5 341.9l1 1.2-3.9-3-1-1.2z" color="#67645f"/><path d="M581.8 342.8l-1.3-.9-3.9-3 1.3 .9z" color="#6d6a64"/><path d="M550.8 380.1l-1.6-.5-1.3-1 1.5 .4z" color="#6f6c66"/><path d="M569.9 377.4l-1.5 1.7-1.5-2.3 1.4-1.8z" color="#56544f"/><path d="M662.6 276.9l-2.1 .6-8.4-8.1 2-.8z" color="#66645e"/><path d="M546.6 377.7l0 2.4-3.1-1.6-.2-2.5z" color="#73706a"/><path d="M570.1 371.3l-.7 1.8-1.9-2.2 .6-2z" color="#56544f"/><path d="M557 382.6l-2.1 .2-1.1-1.4 2-.3z" color="#6e6b65"/><path d="M553.8 381.4l-1.8-.1-1.2-1.2 1.7 0z" color="#706d67"/><path d="M548.6 384.7l-.7 2.2-2.1-1.8 .5-2.5z" color="#595752"/><path d="M608.2 329.3l-2 .3-4.8-4.7 1.9-.3z" color="#6d6a64"/><path d="M655.4 282.6l-.6 2-7.9-7.8 .5-2.1z" color="#575550"/><path d="M586.8 359l-1.4 1.8-2.7-3.3 1.3-1.9z" color="#56544f"/><path d="M579.8 365.2l-2.2 .8-2.3-2.8 2.1-1z" color="#5e5c57"/><path d="M603.2 332.5l-.2 1.9-4.5-4.4 .1-2z" color="#575550"/><path d="M562.4 383l-2.2 .7-1.1-1.7 2.2-.9z" color="#5f5c57"/><path d="M645.1 294.2l-2 .6-7.2-7 1.9-.8z" color="#66645e"/><path d="M568.4 379.1l-1.8 1.5-1.4-2.1 1.7-1.7z" color="#56544f"/><path d="M547.7 395.4l-1.6 1.5-.6-1.6 1.5-2z" color="#56544f"/><path d="M590.7 346.6l-2 .3-3.6-3.6 1.9-.3z" color="#6d6a64"/><path d="M637.9 299.9l-.5 1.9-6.8-6.6 .5-2z" color="#575550"/><path d="M565.2 361.5l.6 1.6-2.5-2-.7-1.6z" color="#5f5d58"/><path d="M548.4 391.3l-1.4 2-1.1-1.7 1.1-2.3z" color="#56544f"/><path d="M596.7 323.5l1 1.2-5.1-4-1-1.2z" color="#67645f"/><path d="M598.1 324.4l-1.4-.9-5.1-4 1.3 .8z" color="#6d6a64"/><path d="M567.1 361.7l-1.6-.5-2.6-2 1.5 .4z" color="#6f6c66"/><path d="M585.8 349.8l-.2 1.8-3.4-3.2 .2-2z" color="#575550"/><path d="M672.3 267.3l-1 2-9-8.8 .8-2.1z" color="#56544f"/><path d="M585.4 360.8l-1.7 1.7-2.6-3.2 1.6-1.8z" color="#56544f"/><path d="M581.8 364l-2 1.2-2.4-3 1.9-1.3z" color="#585551"/><path d="M564.6 381.9l-2.2 1.1-1.1-1.9 2-1.2z" color="#585551"/><path d="M566.6 380.6l-2 1.3-1.3-2 1.9-1.4z" color="#56544f"/><path d="M546.3 398.8l-2 1-.1-1.4 1.9-1.5z" color="#56544f"/><path d="M583.7 362.5l-1.9 1.5-2.5-3.1 1.8-1.6z" color="#56544f"/><path d="M627.7 311.4l-2.1 .7-6-5.9 1.9-.8z" color="#66645e"/><path d="M664.6 275.9l-2 1-8.5-8.3 2-1.1z" color="#5e5c56"/><path d="M573.2 363.9l-1.9 .2-2.5-2.4 1.9-.3z" color="#6d6a64"/><path d="M620.5 317.1l-.6 2-5.6-5.5 .5-2z" color="#575550"/><path d="M569.4 373.1l-1.1 1.9-1.7-2.1 .9-2z" color="#56544f"/><path d="M559.1 382l-2.1 .6-1.2-1.5 2-.6z" color="#67645f"/><path d="M568.3 367l-.2 1.9-2.1-2.1 .1-2z" color="#575550"/><path d="M654.8 284.6l-1 1.9-7.8-7.6 .9-2.1z" color="#56544f"/><path d="M549.4 379l-1.5-.4-1.4-.9 1.5 .4z" color="#6e6b65"/><path d="M546.6 380.1l-.3 2.5-2.8-1.5 0-2.6z" color="#73706a"/><path d="M610.2 328.7l-2 .6-4.9-4.7 2-.8z" color="#66645e"/><path d="M647.2 293.2l-2.1 1-7.3-7.2 2-1.1z" color="#5e5c56"/><path d="M547.9 386.9l-.9 2.4-1.8-1.7 .6-2.5z" color="#575550"/><path d="M671.3 269.3l-1.3 1.9-8.9-8.7 1.2-2z" color="#56544f"/><path d="M552.5 380.1l-1.7 0-1.4-1.1 1.7 .1z" color="#6f6c66"/><path d="M555.8 381.1l-2 .3-1.3-1.3 2-.3z" color="#6d6a64"/><path d="M603 334.4l-.6 2-4.4-4.4 .5-2z" color="#575550"/><path d="M581.5 343.1l.6 1.6-3.8-3-.7-1.6z" color="#5f5d58"/><path d="M666.6 274.6l-2 1.3-8.5-8.4 1.8-1.4z" color="#585551"/><path d="M613 305.1l1 1.2-6.4-5-1-1.2z" color="#67645f"/><path d="M614.3 306l-1.3-.9-6.4-5 1.2 .8z" color="#6d6a64"/><path d="M583.3 343.3l-1.5-.5-3.9-3 1.5 .4z" color="#6f6c66"/><path d="M561.6 358.3l1 1.2-2.8-1.7-1-1.2z" color="#65635d"/><path d="M637.4 301.8l-1 2-6.7-6.5 .9-2.1z" color="#56544f"/><path d="M670 271.2l-1.6 1.8-8.8-8.6 1.5-1.9z" color="#56544f"/><path d="M592.8 345.9l-2.1 .7-3.7-3.6 2-.7z" color="#66645e"/><path d="M629.7 310.4l-2 1-6.2-6 2-1.1z" color="#5e5c56"/><path d="M546.1 396.9l-1.9 1.5-.5-1.2 1.8-1.9z" color="#56544f"/><path d="M668.4 273l-1.8 1.6-8.7-8.5 1.7-1.7z" color="#56544f"/><path d="M653.8 286.5l-1.3 2-7.7-7.6 1.2-2z" color="#56544f"/><path d="M547 393.3l-1.5 2-1-1.4 1.4-2.3z" color="#56544f"/><path d="M585.6 351.6l-.6 2-3.3-3.2 .5-2z" color="#575550"/><path d="M568.3 375l-1.4 1.8-1.6-2 1.3-1.9z" color="#56544f"/><path d="M561.3 381.1l-2.2 .9-1.3-1.5 2.1-1z" color="#5e5c57"/><path d="M649.1 291.8l-1.9 1.4-7.4-7.3 1.8-1.4z" color="#585551"/><path d="M619.9 319.1l-1 2-5.5-5.4 .9-2.1z" color="#56544f"/><path d="M565.8 363.1l.3 1.7-2.5-1.9-.3-1.8z" color="#5a5853"/><path d="M652.5 288.5l-1.5 1.8-7.7-7.5 1.5-1.9z" color="#56544f"/><path d="M575.3 363.2l-2.1 .7-2.5-2.5 2-.7z" color="#66645e"/><path d="M612.3 327.7l-2.1 1-4.9-4.9 1.9-1.1z" color="#5e5c56"/><path d="M651 290.3l-1.9 1.5-7.5-7.3 1.7-1.7z" color="#56544f"/><path d="M544.3 399.8l-2.1 1-.1-.9 2.1-1.5z" color="#56544f"/><path d="M636.4 303.8l-1.3 1.9-6.6-6.4 1.2-2z" color="#56544f"/><path d="M568.8 361.7l-1.7 0-2.7-2.1 1.7 0z" color="#6f6c66"/><path d="M597.7 324.7l.7 1.6-5.2-4-.6-1.6z" color="#5f5d58"/><path d="M629.3 286.7l1 1.2-7.8-6-1-1.2z" color="#67645f"/><path d="M568.1 368.9l-.6 2-2-2.1 .5-2z" color="#575550"/><path d="M630.6 287.6l-1.3-.9-7.8-6 1.3 .8z" color="#6d6a64"/><path d="M599.6 324.9l-1.5-.5-5.2-4.1 1.5 .5z" color="#6f6c66"/><path d="M631.7 309.1l-2 1.3-6.2-6.1 1.9-1.4z" color="#585551"/><path d="M547 389.3l-1.1 2.3-1.6-1.4 .9-2.6z" color="#56544f"/><path d="M546.3 382.6l-.5 2.5-2.5-1.3 .2-2.7z" color="#6f6d66"/><path d="M566.9 376.8l-1.7 1.7-1.5-1.9 1.6-1.8z" color="#56544f"/><path d="M563.3 379.9l-2 1.2-1.4-1.6 2-1.3z" color="#585551"/><path d="M548 378.1l-1.5-.4-1.5-.7 1.4 .4z" color="#6d6a64"/><path d="M602.4 336.4l-.9 1.9-4.3-4.2 .8-2.1z" color="#56544f"/><path d="M565.2 378.5l-1.9 1.4-1.4-1.7 1.8-1.6z" color="#56544f"/><path d="M635.1 305.7l-1.6 1.8-6.4-6.3 1.4-1.9z" color="#56544f"/><path d="M557.8 380.5l-2 .6-1.3-1.3 1.9-.7z" color="#66645e"/><path d="M594.8 344.9l-2 1-3.8-3.6 1.9-1.1z" color="#5e5c56"/><path d="M543.3 376l.2 2.5-3.5-.8-.5-2.6z" color="#8b8780"/><path d="M633.5 307.5l-1.8 1.6-6.3-6.2 1.7-1.7z" color="#56544f"/><path d="M618.9 321.1l-1.3 1.9-5.4-5.3 1.2-2z" color="#56544f"/><path d="M551.1 379.1l-1.7-.1-1.4-.9 1.6 0z" color="#6e6b65"/><path d="M614.2 326.4l-1.9 1.3-5.1-5 1.9-1.4z" color="#585551"/><path d="M545.5 395.3l-1.8 1.9-.7-1.1 1.5-2.2z" color="#56544f"/><path d="M585 353.6l-1 2-3.1-3.1 .8-2.1z" color="#56544f"/><path d="M554.5 379.8l-2 .3-1.4-1 1.9-.4z" color="#6c6963"/><path d="M544.2 398.4l-2.1 1.5-.3-.9 1.9-1.8z" color="#56544f"/><path d="M582.1 344.7l.3 1.7-3.8-2.9-.3-1.8z" color="#5a5853"/><path d="M617.6 323l-1.6 1.8-5.2-5.2 1.4-1.9z" color="#56544f"/><path d="M577.4 362.2l-2.1 1-2.6-2.5 1.9-1.1z" color="#5e5c56"/><path d="M616 324.8l-1.8 1.6-5.1-5.1 1.7-1.7z" color="#56544f"/><path d="M585.1 343.3l-1.8 0-3.9-3.1 1.7 0z" color="#6f6c66"/><path d="M601.5 338.3l-1.3 2-4.2-4.2 1.2-2z" color="#56544f"/><path d="M562.6 359.5l.7 1.6-2.8-1.7-.7-1.6z" color="#5e5c57"/><path d="M614 306.3l.7 1.5-6.5-4.9-.6-1.6z" color="#5f5d58"/><path d="M645.6 268.3l1 1.2-9.1-7-1-1.2z" color="#67645f"/><path d="M646.9 269.2l-1.3-.9-9.1-7 1.3 .8z" color="#6d6a64"/><path d="M615.9 306.4l-1.6-.4-6.5-5.1 1.6 .5z" color="#6f6c66"/><path d="M564.4 359.6l-1.5-.4-2.8-1.7 1.4 .4z" color="#6e6b65"/><path d="M596.8 343.6l-2 1.3-3.9-3.7 1.9-1.5z" color="#585551"/><path d="M545.9 391.6l-1.4 2.3-1.2-1.1 1-2.6z" color="#56544f"/><path d="M567.5 370.9l-.9 2-2-2 .9-2.1z" color="#56544f"/><path d="M545.8 385.1l-.6 2.5-2.2-1.1 .3-2.7z" color="#696661"/><path d="M600.2 340.3l-1.6 1.7-4.1-4 1.5-1.9z" color="#56544f"/><path d="M542.2 400.8l-2.3 .9 0-.5 2.2-1.3z" color="#56544f"/><path d="M566.1 364.8l-.1 2-2.4-1.9 0-2z" color="#5e5b56"/><path d="M559.9 379.5l-2.1 1-1.4-1.4 2-1.1z" color="#5e5c56"/><path d="M598.6 342l-1.8 1.6-4-3.9 1.7-1.7z" color="#56544f"/><path d="M584 355.6l-1.3 1.9-3-3 1.2-2z" color="#56544f"/><path d="M576.6 338.9l1 1.2-4.2-2.5-1-1.3z" color="#65635d"/><path d="M546.4 377.4l-1.4-.4-1.7-.5 1.4 .3z" color="#6c6963"/><path d="M579.3 360.9l-1.9 1.3-2.8-2.6 1.9-1.5z" color="#585551"/><path d="M543.5 378.5l0 2.6-3.2-.7-.3-2.7z" color="#8b8780"/><path d="M570.7 361.4l-1.9 .3-2.7-2.1 1.9-.4z" color="#6c6963"/><path d="M543.7 397.2l-1.9 1.8-.5-.7 1.7-2.2z" color="#56544f"/><path d="M598.4 326.3l.2 1.7-5-3.9-.4-1.8z" color="#5a5853"/><path d="M582.7 357.5l-1.6 1.8-2.9-2.9 1.5-1.9z" color="#56544f"/><path d="M601.4 324.9l-1.8 0-5.2-4.1 1.7 0z" color="#6f6c66"/><path d="M542.1 399.9l-2.2 1.3-.2-.4 2.1-1.8z" color="#56544f"/><path d="M630.3 287.9l.6 1.5-7.7-6-.7-1.5z" color="#5f5d58"/><path d="M581.1 359.3l-1.8 1.6-2.8-2.8 1.7-1.7z" color="#56544f"/><path d="M544.5 393.9l-1.5 2.2-.9-.8 1.2-2.5z" color="#56544f"/><path d="M566.6 372.9l-1.3 1.9-1.9-1.8 1.2-2.1z" color="#56544f"/><path d="M661.9 249.9l1 1.2-10.4-8-1-1.3z" color="#67645f"/><path d="M632.2 288l-1.6-.4-7.8-6.1 1.6 .5z" color="#6f6c66"/><path d="M558.8 356.6l1 1.2-3-1.4-1-1.2z" color="#64615c"/><path d="M549.6 378.1l-1.6 0-1.6-.7 1.6 0z" color="#6d6a64"/><path d="M545.2 387.6l-.9 2.6-1.8-.9 .5-2.8z" color="#605e59"/><path d="M561.9 378.2l-2 1.3-1.5-1.5 1.8-1.5z" color="#585551"/><path d="M556.4 379.1l-1.9 .7-1.5-1.1 1.8-.9z" color="#66635d"/><path d="M553 378.7l-1.9 .4-1.5-1 1.8-.4z" color="#6b6862"/><path d="M582.4 346.4l-.2 2-3.7-2.9 .1-2z" color="#5e5b56"/><path d="M565.3 374.8l-1.6 1.8-1.8-1.7 1.5-1.9z" color="#56544f"/><path d="M563.7 376.6l-1.8 1.6-1.7-1.7 1.7-1.6z" color="#56544f"/><path d="M541.8 399l-2.1 1.8-.2-.4 1.8-2.1z" color="#56544f"/><path d="M543 396.1l-1.7 2.2-.6-.5 1.4-2.5z" color="#56544f"/><path d="M587 343l-1.9 .3-4-3.1 1.8-.4z" color="#6c6963"/><path d="M543.5 381.1l-.2 2.7-2.8-.7-.2-2.7z" color="#88857d"/><path d="M563.3 361.1l.3 1.8-2.7-1.6-.4-1.9z" color="#63605b"/><path d="M539.9 401.7l-2.4 .8 0 0 2.4-1.3z" color="#56544f"/><path d="M566 366.8l-.5 2-2.3-1.7 .4-2.2z" color="#5d5b56"/><path d="M614.7 307.8l.2 1.8-6.3-4.9-.4-1.8z" color="#5a5853"/><path d="M544.3 390.2l-1 2.6-1.5-.8 .7-2.7z" color="#595651"/><path d="M539.9 401.2l-2.4 1.3 0 0 2.2-1.7z" color="#56544f"/><path d="M617.7 306.5l-1.8-.1-6.5-5 1.7 0z" color="#6f6c66"/><path d="M646.6 269.5l.6 1.5-9-7-.7-1.5z" color="#5f5d58"/><path d="M648.5 269.6l-1.6-.4-9.1-7.1 1.5 .5z" color="#6f6c66"/><path d="M566.1 359.6l-1.7 0-2.9-1.7 1.7 0z" color="#6e6b65"/><path d="M541.3 398.3l-1.8 2.1-.3-.2 1.5-2.4z" color="#56544f"/><path d="M539.7 400.8l-2.2 1.7 0 0 2-2.1z" color="#56544f"/><path d="M572.7 360.7l-2 .7-2.7-2.2 1.8-.8z" color="#66635d"/><path d="M539.5 375.1l.5 2.6-3.8 0-.7-2.6z" color="#8c8981"/><path d="M539.5 400.4l-2 2.1 0 0 1.7-2.3z" color="#56544f"/><path d="M543.3 392.8l-1.2 2.5-1.1-.6 .8-2.7z" color="#56544f"/><path d="M558.4 378l-2 1.1-1.6-1.3 1.9-1.1z" color="#5e5b56"/><path d="M598.6 328l-.1 2-5-3.9 .1-2z" color="#5e5b56"/><path d="M577.6 340.1l.7 1.6-4.2-2.6-.7-1.5z" color="#5e5c57"/><path d="M539.2 400.2l-1.7 2.3 0 0 1.3-2.5z" color="#56544f"/><path d="M543.3 383.8l-.3 2.7-2.5-.6 0-2.8z" color="#817e76"/><path d="M579.4 340.2l-1.5-.4-4.3-2.6 1.5 .4z" color="#6e6b65"/><path d="M542.1 395.3l-1.4 2.5-.8-.4 1.1-2.7z" color="#56544f"/><path d="M603.3 324.6l-1.9 .3-5.3-4.1 1.8-.4z" color="#6c6963"/><path d="M540.7 397.8l-1.5 2.4-.4-.2 1.1-2.6z" color="#56544f"/><path d="M548 377.4l-1.6 0-1.7-.6 1.5 0z" color="#6c6963"/><path d="M538.8 400l-1.3 2.5 0 0 .9-2.6z" color="#56544f"/><path d="M582.2 348.4l-.5 2-3.6-2.8 .4-2.1z" color="#5d5b56"/><path d="M630.9 289.4l.3 1.8-7.7-5.9-.3-1.9z" color="#5a5853"/><path d="M565.5 368.8l-.9 2.1-2.2-1.7 .8-2.1z" color="#575550"/><path d="M538.4 399.9l-.9 2.6 0 0 .4-2.6z" color="#56544f"/><path d="M634 288.1l-1.8-.1-7.8-6 1.7 0z" color="#6f6c66"/><path d="M559.8 357.8l.7 1.6-3-1.4-.7-1.6z" color="#64615c"/><path d="M554.8 377.8l-1.8 .9-1.6-1 1.7-.9z" color="#65625d"/><path d="M662.9 251.1l.6 1.5-10.3-8-.7-1.5z" color="#5f5d58"/><path d="M535 402.6l2.5-.1 0 0-2.5 .6z" color="#56544f"/><path d="M537.9 399.9l-.4 2.6 0 0-.1-2.6z" color="#56544f"/><path d="M551.4 377.7l-1.8 .4-1.6-.7 1.6-.5z" color="#6a6762"/><path d="M591.6 319.5l1 1.2-5.7-3.4-1-1.2z" color="#65635d"/><path d="M561.5 357.9l-1.4-.4-3.1-1.5 1.5 .4z" color="#6d6a64"/><path d="M543 386.5l-.5 2.8-2.1-.5 .1-2.9z" color="#74716a"/><path d="M535.1 402.1l2.4 .4 0 0-2.5 .1z" color="#56544f"/><path d="M537.4 399.9l.1 2.6 0 0-.6-2.4z" color="#56544f"/><path d="M589 342.3l-2 .7-4.1-3.2 1.9-.8z" color="#66635d"/><path d="M560.2 376.5l-1.8 1.5-1.7-1.3 1.7-1.6z" color="#585551"/><path d="M535.3 401.6l2.2 .9 0 0-2.4-.4z" color="#56544f"/><path d="M536.9 400.1l.6 2.4 0 0-1-2.1z" color="#56544f"/><path d="M539.9 397.4l-1.1 2.6-.4-.1 .7-2.7z" color="#56544f"/><path d="M563.6 362.9l0 2-2.7-1.6 0-2z" color="#6a6762"/><path d="M535.7 401.2l1.8 1.3 0 0-2.2-.9z" color="#56544f"/><path d="M536.5 400.4l1 2.1 0 0-1.5-1.7z" color="#56544f"/><path d="M540 377.7l.3 2.7-3.4-.1-.7-2.6z" color="#8e8a82"/><path d="M536 400.8l1.5 1.7 0 0-1.8-1.3z" color="#56544f"/><path d="M574.6 359.6l-1.9 1.1-2.9-2.3 1.9-1.2z" color="#5e5b56"/><path d="M614.9 309.6l-.1 2-6.3-4.9 .1-2z" color="#5e5b56"/><path d="M542.5 389.3l-.7 2.7-1.7-.4 .3-2.8z" color="#64615c"/><path d="M564.6 370.9l-1.2 2.1-2.1-1.7 1.1-2.1z" color="#56544f"/><path d="M541 394.7l-1.1 2.7-.8-.2 .6-2.8z" color="#56544f"/><path d="M541.8 392l-.8 2.7-1.3-.3 .4-2.8z" color="#575550"/><path d="M619.6 306.2l-1.9 .3-6.6-5.1 1.8-.4z" color="#6c6963"/><path d="M561.9 374.9l-1.7 1.6-1.8-1.4 1.6-1.8z" color="#56544f"/><path d="M539.1 397.2l-.7 2.7-.5 0 .2-2.8z" color="#56544f"/><path d="M598.5 330l-.5 2-4.9-3.8 .4-2.1z" color="#5d5b56"/><path d="M647.2 271l.3 1.8-9-7-.3-1.8z" color="#5a5853"/><path d="M563.4 373l-1.5 1.9-1.9-1.6 1.3-2z" color="#56544f"/><path d="M581.7 350.4l-.8 2.1-3.5-2.7 .7-2.2z" color="#575550"/><path d="M568 359.2l-1.9 .4-2.9-1.7 1.7-.5z" color="#6b6862"/><path d="M650.2 269.7l-1.7-.1-9.2-7 1.8 0z" color="#6f6c66"/><path d="M555.8 355.2l1 1.2-3.2-1-1.1-1.3z" color="#64625c"/><path d="M540.3 380.4l.2 2.7-3.1 0-.5-2.8z" color="#8f8c84"/><path d="M605.3 323.8l-2 .8-5.4-4.2 1.9-.8z" color="#66635d"/><path d="M546.2 376.8l-1.5 0-1.7-.3 1.4-.1z" color="#6b6963"/><path d="M532.4 402.7l2.6-.1 0 .5-2.7 .6z" color="#56544f"/><path d="M538.1 397.1l-.2 2.8-.5 0-.2-2.6z" color="#56544f"/><path d="M576.5 358.1l-1.9 1.5-2.9-2.4 1.7-1.5z" color="#585551"/><path d="M578.3 341.7l.3 1.8-4.1-2.5-.4-1.9z" color="#63605b"/><path d="M556.7 376.7l-1.9 1.1-1.7-1 1.7-1.3z" color="#5d5b56"/><path d="M590.9 341.2l-1.9 1.1-4.2-3.3 1.8-1.2z" color="#5e5b56"/><path d="M539.7 394.4l-.6 2.8-1-.1 .2-2.7z" color="#56544f"/><path d="M631.2 291.2l-.1 2-7.6-5.9 0-2z" color="#5e5b56"/><path d="M580.9 352.5l-1.2 2-3.4-2.6 1.1-2.1z" color="#56544f"/><path d="M563.6 364.9l-.4 2.2-2.5-1.6 .2-2.2z" color="#67655f"/><path d="M581.1 340.2l-1.7 0-4.3-2.6 1.7 0z" color="#6e6b65"/><path d="M532.6 401.7l2.5 .4-.1 .5-2.6 .1z" color="#56544f"/><path d="M537.2 397.3l.2 2.6-.5 .2-.7-2.4z" color="#56544f"/><path d="M560.5 359.4l.4 1.9-2.9-1.4-.5-1.9z" color="#716e68"/><path d="M540.5 383.1l0 2.8-2.7 0-.4-2.8z" color="#8f8c84"/><path d="M635.9 287.8l-1.9 .3-7.9-6.1 1.8-.4z" color="#6c6963"/><path d="M549.6 376.9l-1.6 .5-1.8-.6 1.6-.6z" color="#696761"/><path d="M578.2 356.4l-1.7 1.7-3.1-2.4 1.6-1.8z" color="#56544f"/><path d="M553.1 376.8l-1.7 .9-1.8-.8 1.7-1z" color="#64625c"/><path d="M510.4 399.1l2.6 .8-.3 3.9-2.6-.5z" color="#726f69"/><path d="M614.8 311.6l-.5 2-6.2-4.8 .4-2.1z" color="#5d5b56"/><path d="M663.5 252.6l.3 1.8-10.3-8-.3-1.8z" color="#5a5853"/><path d="M579.7 354.5l-1.5 1.9-3.2-2.5 1.3-2z" color="#56544f"/><path d="M535.5 375.1l.7 2.6-3.9 .7-1.1-2.5z" color="#8e8b83"/><path d="M598 332l-.8 2.1-4.8-3.7 .7-2.2z" color="#575550"/><path d="M540.1 391.6l-.4 2.8-1.4 0-.1-2.8z" color="#5c5a55"/><path d="M533.1 400.7l2.2 .9-.2 .5-2.5-.4z" color="#56544f"/><path d="M536.2 397.7l.7 2.4-.4 .3-1.2-2.2z" color="#56544f"/><path d="M540.5 385.9l-.1 2.9-2.3-.1-.3-2.8z" color="#85827a"/><path d="M592.6 320.7l.6 1.6-5.5-3.4-.8-1.6z" color="#5e5c57"/><path d="M540.4 388.8l-.3 2.8-1.9 0-.1-2.9z" color="#716e68"/><path d="M533.7 399.8l2 1.4-.4 .4-2.2-.9z" color="#56544f"/><path d="M535.3 398.2l1.2 2.2-.5 .4-1.6-1.9z" color="#56544f"/><path d="M572.4 336.3l1 1.3-4.6-2.1-1-1.3z" color="#64615c"/><path d="M534.4 398.9l1.6 1.9-.3 .4-2-1.4z" color="#56544f"/><path d="M594.4 320.8l-1.5-.5-5.7-3.4 1.5 .4z" color="#6e6b65"/><path d="M563.2 357.9l-1.7 0-3-1.5 1.5 0z" color="#6d6a64"/><path d="M621.5 305.4l-1.9 .8-6.7-5.2 1.9-.8z" color="#66635d"/><path d="M529.7 402.6l2.7 .1-.1 1-2.8 .4z" color="#56544f"/><path d="M538.3 394.4l-.2 2.7-.9 .2-.4-2.7z" color="#56544f"/><path d="M592.8 339.7l-1.9 1.5-4.3-3.4 1.8-1.5z" color="#585551"/><path d="M558.4 375.1l-1.7 1.6-1.9-1.2 1.6-1.6z" color="#575550"/><path d="M607.2 322.7l-1.9 1.1-5.5-4.2 1.8-1.2z" color="#5e5b56"/><path d="M647.5 272.8l-.1 1.9-8.9-6.8 0-2.1z" color="#5e5b56"/><path d="M563.2 367.1l-.8 2.1-2.4-1.4 .7-2.3z" color="#5b5954"/><path d="M569.8 358.4l-1.8 .8-3.1-1.8 1.8-.9z" color="#65625d"/><path d="M597.2 334.1l-1.2 2-4.7-3.6 1.1-2.1z" color="#56544f"/><path d="M513 399.9l2.7 .7-.3 3.6-2.7-.4z" color="#6f6c66"/><path d="M606.6 300.1l1 1.2-7.1-4.3-1-1.2z" color="#65635d"/><path d="M536.2 377.7l.7 2.6-3.6 .7-1-2.6z" color="#918d85"/><path d="M544.4 376.4l-1.4 .1-1.8-.3 1.3-.1z" color="#6b6863"/><path d="M652.1 269.4l-1.9 .3-9.1-7.1 1.8-.4z" color="#6c6963"/><path d="M594.5 338l-1.7 1.7-4.4-3.4 1.6-1.8z" color="#56544f"/><path d="M530.1 401.1l2.5 .6-.2 1-2.7-.1z" color="#56544f"/><path d="M631.1 293.2l-.5 2-7.5-5.8 .4-2.1z" color="#5d5b56"/><path d="M536.8 394.6l.4 2.7-1 .4-.8-2.5z" color="#56544f"/><path d="M578.6 343.5l-.1 2-4-2.4 0-2.1z" color="#6a6762"/><path d="M596 336.1l-1.5 1.9-4.5-3.5 1.3-2z" color="#56544f"/><path d="M614.3 313.6l-.9 2.1-6-4.7 .7-2.2z" color="#575550"/><path d="M556.8 356.4l.7 1.6-3.1-1-.8-1.6z" color="#706d67"/><path d="M526.9 402.4l2.8 .2-.2 1.5-2.8 .3z" color="#585551"/><path d="M538.2 391.6l.1 2.8-1.5 .2-.5-2.7z" color="#625f5a"/><path d="M560 373.3l-1.6 1.8-2-1.2 1.5-1.8z" color="#56544f"/><path d="M562.4 369.2l-1.1 2.1-2.2-1.3 .9-2.2z" color="#56544f"/><path d="M558.5 356.4l-1.5-.4-3.2-1.1 1.4 .4z" color="#6c6963"/><path d="M560.9 361.3l0 2-2.8-1.3-.1-2.1z" color="#78756f"/><path d="M515.7 400.6l2.8 .6-.3 3.2-2.8-.2z" color="#6a6762"/><path d="M637.8 287l-1.9 .8-8-6.2 1.9-.8z" color="#66635d"/><path d="M561.3 371.3l-1.3 2-2.1-1.2 1.2-2.1z" color="#56544f"/><path d="M554.8 375.5l-1.7 1.3-1.8-.9 1.5-1.3z" color="#5d5b56"/><path d="M536.9 380.3l.5 2.8-3.2 .6-.9-2.7z" color="#938f87"/><path d="M609.1 321.3l-1.9 1.4-5.6-4.3 1.8-1.5z" color="#585551"/><path d="M547.8 376.2l-1.6 .6-1.8-.4 1.4-.6z" color="#696660"/><path d="M530.7 399.7l2.4 1-.5 1-2.5-.6z" color="#56544f"/><path d="M535.4 395.2l.8 2.5-.9 .5-1.3-2.2z" color="#56544f"/><path d="M524.1 402.1l2.8 .3-.2 2-2.8 .1z" color="#5b5853"/><path d="M623.5 304.3l-2 1.1-6.7-5.2 1.8-1.2z" color="#5e5b56"/><path d="M538.1 388.7l.1 2.9-1.9 .3-.6-2.7z" color="#7c7972"/><path d="M582.9 339.8l-1.8 .4-4.3-2.6 1.7-.5z" color="#6b6862"/><path d="M663.8 254.4l-.2 1.9-10.1-7.9 0-2z" color="#5e5b56"/><path d="M551.3 375.9l-1.7 1-1.8-.7 1.5-.9z" color="#64615c"/><path d="M518.5 401.2l2.8 .5-.2 2.8-2.9-.1z" color="#65625d"/><path d="M613.4 315.7l-1.2 2-5.9-4.6 1.1-2.1z" color="#56544f"/><path d="M537.4 383.1l.4 2.8-2.8 .5-.8-2.7z" color="#959189"/><path d="M521.3 401.7l2.8 .4-.2 2.4-2.8 0z" color="#5f5d58"/><path d="M531.6 398.3l2.1 1.5-.6 .9-2.4-1z" color="#56544f"/><path d="M534 396l1.3 2.2-.9 .7-1.7-1.8z" color="#56544f"/><path d="M537.8 385.9l.3 2.8-2.4 .5-.7-2.8z" color="#918d85"/><path d="M532.7 397.1l1.7 1.8-.7 .9-2.1-1.5z" color="#56544f"/><path d="M610.8 319.6l-1.7 1.7-5.7-4.4 1.5-1.8z" color="#56544f"/><path d="M527.4 400.5l2.7 .6-.4 1.5-2.8-.2z" color="#575550"/><path d="M536.3 391.9l.5 2.7-1.4 .6-1-2.6z" color="#64625c"/><path d="M593.2 322.3l.4 1.8-5.5-3.4-.4-1.8z" color="#63605b"/><path d="M647.4 274.7l-.5 2.1-8.8-6.8 .4-2.1z" color="#5d5b56"/><path d="M571.7 357.2l-1.9 1.2-3.1-1.9 1.7-1.2z" color="#5d5b56"/><path d="M552.5 354.1l1.1 1.3-3.4-.8-1-1.2z" color="#6b6862"/><path d="M612.2 317.7l-1.4 1.9-5.9-4.5 1.4-2z" color="#56544f"/><path d="M630.6 295.2l-.9 2.1-7.4-5.7 .8-2.2z" color="#575550"/><path d="M511.6 394.7l2.5 1.1-1.1 4.1-2.6-.8z" color="#726f69"/><path d="M531.2 375.9l1.1 2.5-3.9 1.5-1.4-2.4z" color="#959189"/><path d="M573.4 337.6l.7 1.5-4.5-2-.8-1.6z" color="#64615c"/><path d="M564.9 357.4l-1.7 .5-3.2-1.5 1.7-.5z" color="#6a6762"/><path d="M542.5 376.1l-1.3 .1-1.9 0 1.3-.1z" color="#6b6863"/><path d="M578.5 345.5l-.4 2.1-3.9-2.3 .3-2.2z" color="#67655f"/><path d="M596.1 320.8l-1.7 0-5.7-3.5 1.6 0z" color="#6e6b65"/><path d="M575.1 337.6l-1.5-.4-4.5-2.1 1.4 .4z" color="#6d6a64"/><path d="M654.1 268.6l-2 .8-9.2-7.2 1.8-.8z" color="#66635d"/><path d="M625.4 302.9l-1.9 1.4-6.9-5.3 1.8-1.5z" color="#585551"/><path d="M560.9 363.3l-.2 2.2-2.7-1.2 .1-2.3z" color="#74716a"/><path d="M556.4 373.9l-1.6 1.6-2-.9 1.5-1.7z" color="#575550"/><path d="M639.8 285.9l-2 1.1-8-6.2 1.8-1.2z" color="#5e5b56"/><path d="M528.3 398.5l2.4 1.2-.6 1.4-2.7-.6z" color="#565450"/><path d="M534.4 392.6l1 2.6-1.4 .8-1.4-2.3z" color="#63615b"/><path d="M524.7 399.7l2.7 .8-.5 1.9-2.8-.3z" color="#5a5752"/><path d="M535.7 389.2l.6 2.7-1.9 .7-1-2.5z" color="#827f78"/><path d="M557.5 358l.5 1.9-3.1-1-.5-1.9z" color="#7f7c75"/><path d="M514.1 395.8l2.6 1.1-1 3.7-2.7-.7z" color="#6e6b65"/><path d="M629.7 297.3l-1.2 2-7.2-5.6 1-2.1z" color="#56544f"/><path d="M607.6 301.3l.6 1.6-7-4.3-.7-1.6z" color="#5e5c57"/><path d="M532.3 378.4l1 2.6-3.5 1.4-1.4-2.5z" color="#9a968d"/><path d="M609.4 301.4l-1.6-.5-7-4.3 1.5 .5z" color="#6e6b65"/><path d="M627.1 301.2l-1.7 1.7-7-5.4 1.5-1.8z" color="#56544f"/><path d="M529.5 396.7l2.1 1.6-.9 1.4-2.4-1.2z" color="#56544f"/><path d="M545.8 375.8l-1.4 .6-1.9-.3 1.3-.5z" color="#686660"/><path d="M532.6 393.7l1.4 2.3-1.3 1.1-1.8-2z" color="#5e5c57"/><path d="M663.6 256.3l-.5 2.1-10-7.8 .4-2.2z" color="#5d5b56"/><path d="M573.4 355.7l-1.7 1.5-3.3-1.9 1.6-1.6z" color="#575550"/><path d="M628.5 299.3l-1.4 1.9-7.2-5.5 1.4-2z" color="#56544f"/><path d="M646.9 276.8l-.9 2.1-8.7-6.7 .8-2.2z" color="#575550"/><path d="M522 398.8l2.7 .9-.6 2.4-2.8-.4z" color="#5e5b56"/><path d="M535 386.4l.7 2.8-2.3 .9-1.1-2.6z" color="#9a968e"/><path d="M516.7 396.9l2.7 1-.9 3.3-2.8-.6z" color="#696660"/><path d="M530.9 395.1l1.8 2-1.1 1.2-2.1-1.6z" color="#585651"/><path d="M533.3 381l.9 2.7-3.1 1.2-1.3-2.5z" color="#9d9990"/><path d="M578.1 347.6l-.7 2.2-3.8-2.3 .6-2.2z" color="#5b5954"/><path d="M584.8 339l-1.9 .8-4.4-2.7 1.8-.8z" color="#65625d"/><path d="M519.4 397.9l2.6 .9-.7 2.9-2.8-.5z" color="#63615b"/><path d="M552.8 374.6l-1.5 1.3-2-.6 1.4-1.4z" color="#5d5a55"/><path d="M534.2 383.7l.8 2.7-2.7 1.1-1.2-2.6z" color="#9d9a91"/><path d="M560.7 365.5l-.7 2.3-2.5-1.2 .5-2.3z" color="#615f59"/><path d="M557.9 372.1l-1.5 1.8-2.1-1 1.3-1.9z" color="#56544f"/><path d="M621.5 280.7l1 1.2-8.4-5.1-1-1.3z" color="#65635d"/><path d="M549.3 375.3l-1.5 .9-2-.4 1.4-1z" color="#63615b"/><path d="M560 356.4l-1.5 0-3.3-1.1 1.5 0z" color="#6c6963"/><path d="M641.6 284.5l-1.8 1.4-8.2-6.3 1.7-1.5z" color="#585551"/><path d="M525.8 397.3l2.5 1.2-.9 2-2.7-.8z" color="#585651"/><path d="M533.4 390.1l1 2.5-1.8 1.1-1.5-2.3z" color="#848079"/><path d="M593.6 324.1l-.1 2-5.4-3.3 0-2.1z" color="#6a6762"/><path d="M540.6 376.1l-1.3 .1-1.9 .1 1.2-.1z" color="#6b6963"/><path d="M656.1 267.5l-2 1.1-9.4-7.2 1.9-1.2z" color="#5e5b56"/><path d="M513.5 390.5l2.4 1.4-1.8 3.9-2.5-1.1z" color="#838078"/><path d="M575 353.9l-1.6 1.8-3.4-2 1.4-1.9z" color="#56544f"/><path d="M527 377.5l1.4 2.4-3.7 2.2-1.7-2.2z" color="#a19d94"/><path d="M560 367.8l-.9 2.2-2.4-1.1 .8-2.3z" color="#56544f"/><path d="M559.1 370l-1.2 2.1-2.3-1.1 1.1-2.1z" color="#56544f"/><path d="M646 278.9l-1.2 2-8.5-6.6 1-2.1z" color="#56544f"/><path d="M577.4 349.8l-1.1 2.1-3.6-2.2 .9-2.2z" color="#56544f"/><path d="M553.6 355.4l.8 1.6-3.3-.8-.9-1.6z" color="#7d7a73"/><path d="M574.1 339.1l.4 1.9-4.4-2-.5-1.9z" color="#716e68"/><path d="M576.3 351.9l-1.3 2-3.6-2.1 1.3-2.1z" color="#56544f"/><path d="M643.3 282.8l-1.7 1.7-8.3-6.4 1.6-1.8z" color="#56544f"/><path d="M566.7 356.5l-1.8 .9-3.2-1.5 1.6-.9z" color="#64625c"/><path d="M527.3 395.1l2.2 1.6-1.2 1.8-2.5-1.2z" color="#5c5a55"/><path d="M531.1 391.4l1.5 2.3-1.7 1.4-1.8-2z" color="#7c7972"/><path d="M644.8 280.9l-1.5 1.9-8.4-6.5 1.4-2z" color="#56544f"/><path d="M663.1 258.4l-.8 2.1-10-7.8 .8-2.1z" color="#575550"/><path d="M523.3 396l2.5 1.3-1.1 2.4-2.7-.9z" color="#5d5b55"/><path d="M532.3 387.5l1.1 2.6-2.3 1.3-1.5-2.4z" color="#a29e95"/><path d="M558 359.9l.1 2.1-2.9-1-.3-2.1z" color="#85817a"/><path d="M597.9 320.4l-1.8 .4-5.8-3.5 1.8-.4z" color="#6b6862"/><path d="M529.1 393.1l1.8 2-1.4 1.6-2.2-1.6z" color="#6c6a64"/><path d="M515.9 391.9l2.4 1.4-1.6 3.6-2.6-1.1z" color="#7e7b74"/><path d="M528.4 379.9l1.4 2.5-3.4 2-1.7-2.3z" color="#a9a59b"/><path d="M585.9 316.1l1 1.2-6-2.8-1-1.2z" color="#64615c"/><path d="M520.8 394.7l2.5 1.3-1.3 2.8-2.6-.9z" color="#68655f"/><path d="M576.8 337.6l-1.7 0-4.6-2.1 1.6-.1z" color="#6d6a64"/><path d="M531.1 384.9l1.2 2.6-2.7 1.5-1.6-2.3z" color="#aaa69c"/><path d="M518.3 393.3l2.5 1.4-1.4 3.2-2.7-1z" color="#74716b"/><path d="M529.8 382.4l1.3 2.5-3.1 1.8-1.6-2.3z" color="#aca89f"/><path d="M657.9 266.1l-1.8 1.4-9.5-7.3 1.7-1.5z" color="#585551"/><path d="M543.8 375.6l-1.3 .5-1.9 0 1.2-.6z" color="#686660"/><path d="M608.2 302.9l.4 1.8-7-4.2-.4-1.9z" color="#63605b"/><path d="M554.3 372.9l-1.5 1.7-2.1-.7 1.4-1.7z" color="#575550"/><path d="M586.6 337.8l-1.8 1.2-4.5-2.7 1.7-1.3z" color="#5d5b56"/><path d="M516.1 386.5l2.2 1.7-2.4 3.7-2.4-1.4z" color="#9e9a91"/><path d="M523 379.9l1.7 2.2-3.4 2.8-2-2z" color="#aca79e"/><path d="M567.8 334.2l1 1.3-4.8-1.7-1-1.2z" color="#64625c"/><path d="M525 393.4l2.3 1.7-1.5 2.2-2.5-1.3z" color="#706d67"/><path d="M529.6 389l1.5 2.4-2 1.7-1.9-2.1z" color="#a19d94"/><path d="M662.3 260.5l-1.2 2-9.9-7.6 1.1-2.2z" color="#56544f"/><path d="M549.2 353.4l1 1.2-3.4-.4-1.1-1.3z" color="#75726b"/><path d="M593.5 326.1l-.4 2.1-5.3-3.2 .3-2.2z" color="#67655f"/><path d="M611.1 301.4l-1.7 0-7.1-4.3 1.6-.1z" color="#6e6b65"/><path d="M527.2 391l1.9 2.1-1.8 2-2.3-1.7z" color="#8e8b83"/><path d="M519.3 382.9l2 2-3 3.3-2.2-1.7z" color="#aaa69c"/><path d="M659.6 264.4l-1.7 1.7-9.6-7.4 1.6-1.8z" color="#56544f"/><path d="M547.2 374.8l-1.4 1-2-.2 1.3-1.1z" color="#63605b"/><path d="M661.1 262.5l-1.5 1.9-9.7-7.5 1.3-2z" color="#56544f"/><path d="M518.3 388.2l2.2 1.8-2.2 3.3-2.4-1.4z" color="#a39f96"/><path d="M550.7 373.9l-1.4 1.4-2.1-.5 1.3-1.4z" color="#5c5a55"/><path d="M524.7 382.1l1.7 2.3-3.1 2.5-2-2z" color="#b5b1a7"/><path d="M522.8 391.7l2.2 1.7-1.7 2.6-2.5-1.3z" color="#8a867f"/><path d="M528 386.7l1.6 2.3-2.4 2-2-2z" color="#b3afa5"/><path d="M558.1 362l-.1 2.3-2.9-1 .1-2.3z" color="#7f7c75"/><path d="M520.5 390l2.3 1.7-2 3-2.5-1.4z" color="#9d9990"/><path d="M526.4 384.4l1.6 2.3-2.8 2.3-1.9-2.1z" color="#b8b4a9"/><path d="M622.5 281.9l.7 1.5-8.4-5.1-.7-1.5z" color="#5e5c57"/><path d="M525.2 389l2 2-2.2 2.4-2.2-1.7z" color="#ada99f"/><path d="M521.3 384.9l2 2-2.8 3.1-2.2-1.8z" color="#b3afa5"/><path d="M574.5 341l0 2.1-4.3-2-.1-2.1z" color="#78756f"/><path d="M561.7 355.9l-1.7 .5-3.3-1.1 1.5-.6z" color="#696761"/><path d="M624.4 282l-1.6-.5-8.4-5.1 1.4 .4z" color="#6e6b65"/><path d="M568.4 355.3l-1.7 1.2-3.4-1.5 1.6-1.4z" color="#5d5b56"/><path d="M555.6 371l-1.3 1.9-2.2-.7 1.1-2z" color="#56544f"/><path d="M554.4 357l.5 1.9-3.2-.7-.6-2z" color="#87847c"/><path d="M523.3 386.9l1.9 2.1-2.4 2.7-2.3-1.7z" color="#b6b2a8"/><path d="M588.4 336.3l-1.8 1.5-4.6-2.8 1.6-1.6z" color="#575550"/><path d="M593.1 328.2l-.7 2.2-5.2-3.2 .6-2.2z" color="#5b5954"/><path d="M599.8 319.6l-1.9 .8-5.8-3.5 1.7-.9z" color="#65625d"/><path d="M558 364.3l-.5 2.3-2.7-.9 .3-2.4z" color="#696661"/><path d="M541.8 375.5l-1.2 .6-2 .1 1.1-.5z" color="#686660"/><path d="M636.5 261.3l1 1.2-9.8-6-1-1.2z" color="#65635d"/><path d="M556.7 368.9l-1.1 2.1-2.4-.8 .9-2.2z" color="#56544f"/><path d="M608.6 304.7l-.1 2-6.8-4.2-.1-2z" color="#6a6762"/><path d="M557.5 366.6l-.8 2.3-2.6-.9 .7-2.3z" color="#56544f"/><path d="M590 334.5l-1.6 1.8-4.8-2.9 1.4-1.9z" color="#56544f"/><path d="M586.9 317.3l.8 1.6-6-2.8-.8-1.6z" color="#64615c"/><path d="M592.4 330.4l-1.1 2.1-5.1-3.1 1-2.2z" color="#56544f"/><path d="M578.5 337.1l-1.7 .5-4.7-2.2 1.6-.5z" color="#6a6762"/><path d="M556.7 355.3l-1.5 0-3.4-.7 1.4-.1z" color="#6b6963"/><path d="M588.7 317.3l-1.5-.4-6.1-2.8 1.5 .4z" color="#6d6a64"/><path d="M591.3 332.5l-1.3 2-5-3 1.2-2.1z" color="#56544f"/><path d="M552.1 372.2l-1.4 1.7-2.2-.5 1.2-1.7z" color="#575550"/><path d="M574.5 343.1l-.3 2.2-4.2-2 .2-2.2z" color="#74716a"/><path d="M568.8 335.5l.8 1.6-4.7-1.6-.9-1.7z" color="#706d67"/><path d="M570 353.7l-1.6 1.6-3.5-1.7 1.5-1.6z" color="#575550"/><path d="M545.1 374.5l-1.3 1.1-2-.1 1.1-1z" color="#63605b"/><path d="M550.2 354.6l.9 1.6-3.4-.4-.9-1.6z" color="#85817a"/><path d="M612.9 301l-1.8 .4-7.2-4.4 1.8-.4z" color="#6b6862"/><path d="M511.1 405.8l.5-1-.1 2-.4 1.2z" color="#615f5a"/><path d="M554.9 358.9l.3 2.1-3.2-.7-.3-2.1z" color="#8b8780"/><path d="M548.5 373.4l-1.3 1.4-2.1-.3 1.2-1.4z" color="#5c5a55"/><path d="M570.5 335.5l-1.4-.4-4.9-1.7 1.4 .4z" color="#6c6963"/><path d="M623.2 283.4l.3 1.9-8.3-5.1-.4-1.9z" color="#63605b"/><path d="M601.6 318.4l-1.8 1.2-6-3.6 1.8-1.3z" color="#5d5b56"/><path d="M539.7 375.7l-1.1 .5-2.1 .3 1-.5z" color="#686660"/><path d="M563.3 355l-1.6 .9-3.5-1.2 1.6-.9z" color="#64615c"/><path d="M574.2 345.3l-.6 2.2-4.1-1.9 .5-2.3z" color="#615f59"/><path d="M608.5 306.7l-.4 2.1-6.7-4.1 .3-2.2z" color="#67655f"/><path d="M571.4 351.8l-1.4 1.9-3.6-1.7 1.3-2z" color="#56544f"/><path d="M626.1 282l-1.7 0-8.6-5.2 1.7 0z" color="#6e6b65"/><path d="M545.7 352.9l1.1 1.3-3.6-.1-1.1-1.3z" color="#7e7b74"/><path d="M553.2 370.2l-1.1 2-2.4-.5 1-2.1z" color="#56544f"/><path d="M573.6 347.5l-.9 2.2-4-1.8 .8-2.3z" color="#56544f"/><path d="M572.7 349.7l-1.3 2.1-3.7-1.8 1-2.1z" color="#56544f"/><path d="M555.2 361l-.1 2.3-3-.7-.1-2.3z" color="#89857e"/><path d="M637.5 262.5l.7 1.5-9.8-5.9-.7-1.6z" color="#5e5c57"/><path d="M639.3 262.6l-1.5-.5-9.9-6 1.5 .4z" color="#6e6b65"/><path d="M587.7 318.9l.4 1.8-6-2.7-.4-1.9z" color="#716e68"/><path d="M511.4 403.6l.4-.9-.2 2.1-.5 1z" color="#63615b"/><path d="M580.3 336.3l-1.8 .8-4.8-2.2 1.7-.9z" color="#64625c"/><path d="M542.9 374.5l-1.1 1-2.1 .2 .9-1.1z" color="#62605a"/><path d="M603.4 316.9l-1.8 1.5-6-3.7 1.6-1.6z" color="#575550"/><path d="M551.1 356.2l.6 2-3.4-.5-.6-1.9z" color="#88857d"/><path d="M554.1 368l-.9 2.2-2.5-.6 .7-2.2z" color="#56544f"/><path d="M569.6 337.1l.5 1.9-4.7-1.6-.5-1.9z" color="#7f7c75"/><path d="M608.1 308.8l-.7 2.2-6.6-4 .6-2.3z" color="#5b5954"/><path d="M614.8 300.2l-1.9 .8-7.2-4.4 1.7-.9z" color="#65625d"/><path d="M599.5 295.8l1 1.2-7.5-3.5-1.1-1.2z" color="#64615c"/><path d="M555.1 363.3l-.3 2.4-2.9-.7 .2-2.4z" color="#716f68"/><path d="M549.7 371.7l-1.2 1.7-2.2-.3 .9-1.7z" color="#575550"/><path d="M537.5 376l-1 .5-2 .5 .9-.5z" color="#696660"/><path d="M651.5 241.8l1 1.3-11.3-6.9-1-1.2z" color="#65635d"/><path d="M558.2 354.7l-1.5 .6-3.5-.8 1.4-.6z" color="#696660"/><path d="M590.3 317.3l-1.6 0-6.1-2.8 1.6-.1z" color="#6d6a64"/><path d="M554.8 365.7l-.7 2.3-2.7-.6 .5-2.4z" color="#56544f"/><path d="M546.3 373.1l-1.2 1.4-2.2 0 1-1.4z" color="#5c5a55"/><path d="M623.5 285.3l0 2-8.2-5-.1-2.1z" color="#6a6762"/><path d="M604.9 315.1l-1.5 1.8-6.2-3.8 1.4-1.8z" color="#56544f"/><path d="M564.9 353.6l-1.6 1.4-3.5-1.2 1.4-1.4z" color="#5d5a55"/><path d="M607.4 311l-1.1 2.1-6.5-3.9 1-2.2z" color="#56544f"/><path d="M572.1 335.4l-1.6 .1-4.9-1.7 1.5-.1z" color="#6c6963"/><path d="M563 332.6l1 1.2-5-1.1-1.1-1.2z" color="#6b6862"/><path d="M606.3 313.1l-1.4 2-6.3-3.8 1.2-2.1z" color="#56544f"/><path d="M510.2 406.8l.9-1 0 2.2-.9 1.1z" color="#585651"/><path d="M511.8 401.4l.4-.8-.4 2.1-.4 .9z" color="#65635d"/><path d="M553.2 354.5l-1.4 .1-3.6-.5 1.3-.1z" color="#6b6863"/><path d="M627.9 281.6l-1.8 .4-8.6-5.2 1.7-.5z" color="#6b6862"/><path d="M546.8 354.2l.9 1.6-3.6-.1-.9-1.6z" color="#86827b"/><path d="M588.1 320.7l0 2.1-5.8-2.7-.2-2.1z" color="#78756f"/><path d="M551.7 358.2l.3 2.1-3.2-.4-.5-2.2z" color="#8c8880"/><path d="M540.6 374.6l-.9 1.1-2.2 .3 .9-1z" color="#62605a"/><path d="M535.4 376.5l-.9 .5-2.1 .7 .8-.5z" color="#696661"/><path d="M582 335l-1.7 1.3-4.9-2.3 1.6-1.3z" color="#5d5b56"/><path d="M550.7 369.6l-1 2.1-2.5-.3 .8-2.1z" color="#56544f"/><path d="M638.2 264l.3 1.8-9.7-5.9-.4-1.8z" color="#63605b"/><path d="M616.6 299l-1.8 1.2-7.4-4.5 1.7-1.2z" color="#5d5b56"/><path d="M570.1 339l.1 2.1-4.6-1.6-.2-2.1z" color="#85817a"/><path d="M623.5 287.3l-.4 2.1-8.1-4.9 .3-2.2z" color="#67655f"/><path d="M542.1 352.8l1.1 1.3-3.7 .2-1.1-1.2z" color="#838079"/><path d="M641.1 262.6l-1.8 0-9.9-6.1 1.7 0z" color="#6e6b65"/><path d="M566.4 352l-1.5 1.6-3.7-1.2 1.3-1.7z" color="#575550"/><path d="M543.9 373.1l-1 1.4-2.3 .1 .9-1.4z" color="#5c5954"/><path d="M512.4 399.2l.4-.7-.6 2.1-.4 .8z" color="#67655f"/><path d="M547.2 371.4l-.9 1.7-2.4 0 .8-1.8z" color="#575550"/><path d="M579.9 313.3l1 1.2-6.4-2.2-1-1.2z" color="#64625c"/><path d="M600.5 297l.7 1.6-7.5-3.5-.7-1.6z" color="#64615c"/><path d="M552 360.3l.1 2.3-3.1-.3-.2-2.4z" color="#8e8b83"/><path d="M510.5 404.5l.9-.9-.3 2.2-.9 1z" color="#595752"/><path d="M559.8 353.8l-1.6 .9-3.6-.8 1.4-1z" color="#63615b"/><path d="M592.1 316.9l-1.8 .4-6.1-2.9 1.6-.5z" color="#6a6762"/><path d="M652.5 243.1l.7 1.5-11.2-6.8-.8-1.6z" color="#5e5c57"/><path d="M551.4 367.4l-.7 2.2-2.7-.3 .6-2.3z" color="#56544f"/><path d="M533.2 377.2l-.8 .5-2 .8 .7-.4z" color="#6a6761"/><path d="M602.3 297.1l-1.5-.5-7.6-3.5 1.4 .4z" color="#6d6a64"/><path d="M588.1 322.8l-.3 2.2-5.7-2.7 .2-2.2z" color="#74716a"/><path d="M583.6 333.4l-1.6 1.6-5-2.3 1.4-1.7z" color="#575550"/><path d="M618.4 297.5l-1.8 1.5-7.5-4.5 1.6-1.6z" color="#575550"/><path d="M570.2 341.1l-.2 2.2-4.4-1.5 0-2.3z" color="#7f7c75"/><path d="M538.4 375l-.9 1-2.1 .5 .7-.9z" color="#62605a"/><path d="M552.1 362.6l-.2 2.4-3-.3 .1-2.4z" color="#797670"/><path d="M547.7 355.8l.6 1.9-3.4 0-.8-2z" color="#89857e"/><path d="M551.9 365l-.5 2.4-2.8-.4 .3-2.3z" color="#575550"/><path d="M623.1 289.4l-.8 2.2-8-4.9 .7-2.2z" color="#5b5954"/><path d="M629.8 280.8l-1.9 .8-8.7-5.3 1.8-.9z" color="#65625d"/><path d="M564 333.8l.9 1.7-5-1.2-.9-1.6z" color="#7d7a73"/><path d="M573.7 334.9l-1.6 .5-5-1.7 1.6-.5z" color="#696761"/><path d="M567.7 350l-1.3 2-3.9-1.3 1.2-2z" color="#56544f"/><path d="M513.2 397l.3-.6-.7 2.1-.4 .7z" color="#696660"/><path d="M508.9 407.7l1.3-.9 0 2.3-1.4 1z" color="#56544f"/><path d="M638.5 265.8l0 2.1-9.7-5.9 0-2.1z" color="#6a6762"/><path d="M531.1 378.1l-.7 .4-2 1 .6-.3z" color="#6a6762"/><path d="M619.9 295.7l-1.5 1.8-7.7-4.6 1.5-1.9z" color="#56544f"/><path d="M554.6 353.9l-1.4 .6-3.7-.5 1.4-.5z" color="#686660"/><path d="M622.3 291.6l-1 2.1-7.9-4.8 .9-2.2z" color="#56544f"/><path d="M570 343.3l-.5 2.3-4.3-1.4 .4-2.4z" color="#696661"/><path d="M587.8 325l-.6 2.2-5.6-2.6 .5-2.3z" color="#615f59"/><path d="M585 331.5l-1.4 1.9-5.2-2.4 1.3-1.9z" color="#56544f"/><path d="M548 369.3l-.8 2.1-2.5-.1 .6-2.1z" color="#56544f"/><path d="M510.9 402.1l.9-.7-.4 2.2-.9 .9z" color="#5b5853"/><path d="M488.6 405.7l1.3 1-.1 3.8-1.3-1z" color="#74716b"/><path d="M621.3 293.7l-1.4 2-7.7-4.7 1.2-2.1z" color="#56544f"/><path d="M568.7 347.9l-1 2.1-4-1.3 .9-2.2z" color="#56544f"/><path d="M541.5 373.2l-.9 1.4-2.2 .4 .6-1.4z" color="#5b5954"/><path d="M569.5 345.6l-.8 2.3-4.1-1.4 .6-2.3z" color="#56544f"/><path d="M543.2 354.1l.9 1.6-3.6 .3-1-1.7z" color="#86837b"/><path d="M514.2 394.8l.2-.4-.9 2-.3 .6z" color="#6a6761"/><path d="M642.9 262.2l-1.8 .4-10-6.1 1.7-.4z" color="#6b6862"/><path d="M587.2 327.2l-1 2.2-5.4-2.5 .8-2.3z" color="#56544f"/><path d="M586.2 329.4l-1.2 2.1-5.3-2.4 1.1-2.2z" color="#56544f"/><path d="M544.7 371.3l-.8 1.8-2.4 .1 .6-1.7z" color="#575550"/><path d="M536.1 375.6l-.7 .9-2.2 .7 .6-.9z" color="#62605a"/><path d="M548.3 357.7l.5 2.2-3.3-.1-.6-2.1z" color="#8c8981"/><path d="M549.5 354l-1.3 .1-3.7-.1 1.3-.1z" color="#6b6863"/><path d="M529 379.2l-.6 .3-1.9 1.2 .4-.3z" color="#6b6862"/><path d="M601.2 298.6l.4 1.9-7.4-3.5-.5-1.9z" color="#716e68"/><path d="M561.2 352.4l-1.4 1.4-3.8-.9 1.3-1.4z" color="#5c5a55"/><path d="M593.8 316l-1.7 .9-6.3-3 1.6-.9z" color="#64625c"/><path d="M580.9 314.5l.8 1.6-6.4-2.2-.8-1.6z" color="#706d67"/><path d="M653.2 244.6l.3 1.8-11.1-6.7-.4-1.9z" color="#63605b"/><path d="M631.6 279.6l-1.8 1.2-8.8-5.4 1.7-1.2z" color="#5d5b56"/><path d="M538.4 353.1l1.1 1.2-3.7 .6-1.2-1.2z" color="#838079"/><path d="M515.3 392.7l.2-.3-1.1 2-.2 .4z" color="#6b6862"/><path d="M582.6 314.5l-1.5-.4-6.4-2.2 1.4 .4z" color="#6c6963"/><path d="M613.1 275.5l1 1.3-9.1-4.2-1-1.3z" color="#64615c"/><path d="M548.6 367l-.6 2.3-2.7-.1 .4-2.2z" color="#56544f"/><path d="M638.5 267.9l-.4 2.1-9.6-5.8 .3-2.2z" color="#67655f"/><path d="M564.9 335.5l.5 1.9-4.9-1.1-.6-2z" color="#87847c"/><path d="M603.9 297l-1.6 .1-7.7-3.6 1.6 0z" color="#6d6a64"/><path d="M509.2 405.2l1.3-.7-.3 2.3-1.3 .9z" color="#56544f"/><path d="M526.9 380.4l-.4 .3-1.9 1.3 .3-.2z" color="#6b6963"/><path d="M511.6 399.8l.8-.6-.6 2.2-.9 .7z" color="#5c5a55"/><path d="M548.8 359.9l.2 2.4-3.2-.1-.3-2.4z" color="#8f8c84"/><path d="M575.4 334l-1.7 .9-5-1.7 1.5-1z" color="#64615c"/><path d="M533.8 376.3l-.6 .9-2.1 .9 .4-.8z" color="#62605a"/><path d="M539 373.6l-.6 1.4-2.3 .6 .5-1.4z" color="#5b5954"/><path d="M507.2 408.4l1.7-.7-.1 2.4-1.7 .9z" color="#56544f"/><path d="M548.9 364.7l-.3 2.3-2.9 0 .2-2.4z" color="#585651"/><path d="M549 362.3l-.1 2.4-3-.1-.1-2.4z" color="#817d76"/><path d="M557.9 331.5l1.1 1.2-5.2-.6-1.1-1.3z" color="#75726b"/><path d="M544.1 355.7l.8 2-3.5 .2-.9-1.9z" color="#89867e"/><path d="M633.3 278.1l-1.7 1.5-8.9-5.4 1.6-1.6z" color="#575550"/><path d="M545.3 369.2l-.6 2.1-2.6 .2 .5-2.1z" color="#56544f"/><path d="M489.9 406.7l1.8 .9-.1 3.7-1.8-.8z" color="#74716b"/><path d="M567.1 333.7l-1.5 .1-5.1-1.1 1.5-.1z" color="#6b6963"/><path d="M638.1 270l-.8 2.2-9.4-5.8 .6-2.2z" color="#5b5954"/><path d="M644.7 261.4l-1.8 .8-10.1-6.1 1.8-.9z" color="#65625d"/><path d="M556 352.9l-1.4 1-3.7-.4 1.2-1.1z" color="#63605b"/><path d="M542.1 371.5l-.6 1.7-2.5 .4 .5-1.7z" color="#575550"/><path d="M562.5 350.7l-1.3 1.7-3.9-.9 1.2-1.7z" color="#575550"/><path d="M601.6 300.5l.1 2-7.4-3.4-.1-2.1z" color="#78756f"/><path d="M512.4 397.4l.8-.4-.8 2.2-.8 .6z" color="#5d5b56"/><path d="M595.6 314.7l-1.8 1.3-6.4-3 1.6-1.3z" color="#5d5b56"/><path d="M653.5 246.4l0 2-11.1-6.7 0-2z" color="#6a6762"/><path d="M489 401.9l1.4 1-.5 3.8-1.3-1z" color="#74716b"/><path d="M509.7 402.7l1.2-.6-.4 2.4-1.3 .7z" color="#56544f"/><path d="M581.7 316.1l.4 1.9-6.3-2.1-.5-2z" color="#7f7c75"/><path d="M531.5 377.3l-.4 .8-2.1 1.1 .2-.8z" color="#62605a"/><path d="M565.4 337.4l.2 2.1-4.8-1.1-.3-2.1z" color="#8b8780"/><path d="M634.9 276.3l-1.6 1.8-9-5.5 1.5-1.9z" color="#56544f"/><path d="M637.3 272.2l-1 2.1-9.3-5.7 .9-2.2z" color="#56544f"/><path d="M539.5 354.3l1 1.7-3.7 .5-1-1.6z" color="#86837b"/><path d="M636.3 274.3l-1.4 2-9.1-5.6 1.2-2.1z" color="#56544f"/><path d="M536.6 374.2l-.5 1.4-2.3 .7 .3-1.3z" color="#5b5954"/><path d="M550.9 353.5l-1.4 .5-3.7-.1 1.2-.5z" color="#686660"/><path d="M544.9 357.7l.6 2.1-3.5 .3-.6-2.2z" color="#8d8981"/><path d="M513.5 395.1l.7-.3-1 2.2-.8 .4z" color="#5e5c57"/><path d="M614.1 276.8l.7 1.5-9-4.2-.8-1.5z" color="#64615c"/><path d="M577 332.7l-1.6 1.3-5.2-1.8 1.5-1.3z" color="#5d5a55"/><path d="M545.7 367l-.4 2.2-2.7 .2 .2-2.2z" color="#56544f"/><path d="M534.6 353.7l1.2 1.2-3.8 .9-1.1-1.2z" color="#838079"/><path d="M605.7 296.6l-1.8 .4-7.7-3.5 1.7-.5z" color="#6a6762"/><path d="M507.5 405.7l1.7-.5-.3 2.5-1.7 .7z" color="#56544f"/><path d="M584.2 314.4l-1.6 .1-6.5-2.2 1.5-.1z" color="#6c6963"/><path d="M505.2 408.9l2-.5-.1 2.6-1.9 .7z" color="#56544f"/><path d="M545.8 353.9l-1.3 .1-3.7 .3 1.1-.1z" color="#6b6963"/><path d="M615.8 276.8l-1.4-.4-9.1-4.3 1.4 .4z" color="#6d6a64"/><path d="M563.7 348.7l-1.2 2-4-.9 .9-2.1z" color="#56544f"/><path d="M529.2 378.4l-.2 .8-2.1 1.2 .2-.7z" color="#62605a"/><path d="M601.7 302.5l-.3 2.2-7.2-3.3 .1-2.3z" color="#74716a"/><path d="M597.2 313.1l-1.6 1.6-6.6-3 1.5-1.7z" color="#575550"/><path d="M646.6 260.2l-1.9 1.2-10.1-6.2 1.7-1.3z" color="#5d5b56"/><path d="M491.7 407.6l2 .7-.1 3.6-2-.6z" color="#74716b"/><path d="M565.6 339.5l0 2.3-4.7-1.1-.1-2.3z" color="#89857e"/><path d="M539.5 371.9l-.5 1.7-2.4 .6 .3-1.7z" color="#575550"/><path d="M510.4 400.1l1.2-.3-.7 2.3-1.2 .6z" color="#56544f"/><path d="M514.7 392.8l.6-.1-1.1 2.1-.7 .3z" color="#5f5d58"/><path d="M545.5 359.8l.3 2.4-3.3 .2-.5-2.3z" color="#908d85"/><path d="M653.5 248.4l-.4 2.2-11-6.7 .3-2.2z" color="#67655f"/><path d="M559 332.7l.9 1.6-5.2-.6-.9-1.6z" color="#85817a"/><path d="M542.6 369.4l-.5 2.1-2.6 .4 .3-2z" color="#56544f"/><path d="M545.9 364.6l-.2 2.4-2.9 .2 0-2.4z" color="#595752"/><path d="M527.1 379.7l-.2 .7-2 1.4 .1-.6z" color="#62605a"/><path d="M582.1 318l.2 2.1-6.2-2.1-.3-2.1z" color="#85817a"/><path d="M557.3 351.5l-1.3 1.4-3.9-.5 1.2-1.4z" color="#5c5a55"/><path d="M564.6 346.5l-.9 2.2-4.3-1 .8-2.2z" color="#56544f"/><path d="M545.8 362.2l.1 2.4-3.1 .2-.3-2.4z" color="#87837c"/><path d="M534.1 375l-.3 1.3-2.3 1 .2-1.3z" color="#5b5954"/><path d="M565.6 341.8l-.4 2.4-4.5-1.1 .2-2.4z" color="#716f68"/><path d="M568.7 333.2l-1.6 .5-5.1-1.1 1.4-.6z" color="#696660"/><path d="M540.5 356l.9 1.9-3.6 .6-1-2z" color="#89867e"/><path d="M601.4 304.7l-.6 2.3-7.1-3.3 .5-2.3z" color="#615f59"/><path d="M516 390.6l.6 0-1.3 2.1-.6 .1z" color="#605e58"/><path d="M598.6 311.3l-1.4 1.8-6.7-3.1 1.3-1.9z" color="#56544f"/><path d="M565.2 344.2l-.6 2.3-4.4-1 .5-2.4z" color="#56544f"/><path d="M490.4 402.9l1.7 1-.4 3.7-1.8-.9z" color="#74716b"/><path d="M525 381.2l-.1 .6-1.9 1.5-.1-.5z" color="#62605a"/><path d="M578.4 331l-1.4 1.7-5.3-1.8 1.3-1.7z" color="#575550"/><path d="M503 409.2l2.2-.3 0 2.8-2.3 .5z" color="#56544f"/><path d="M648.3 258.7l-1.7 1.5-10.3-6.3 1.6-1.6z" color="#575550"/><path d="M489.8 398.1l1.3 1-.7 3.8-1.4-1z" color="#74716b"/><path d="M591.9 292.3l1.1 1.2-8-2.7-1.1-1.2z" color="#64625c"/><path d="M517.6 388.5l.4 .2-1.4 1.9-.6 0z" color="#615e59"/><path d="M493.7 408.3l2.2 .6-.1 3.5-2.2-.5z" color="#726f69"/><path d="M508 403l1.7-.3-.5 2.5-1.7 .5z" color="#56544f"/><path d="M600.8 307l-1 2.2-6.9-3.3 .8-2.2z" color="#56544f"/><path d="M599.8 309.2l-1.2 2.1-6.8-3.2 1.1-2.2z" color="#56544f"/><path d="M522.9 382.8l.1 .5-1.8 1.7-.2-.4z" color="#62605a"/><path d="M653.1 250.6l-.8 2.1-10.8-6.5 .6-2.3z" color="#5b5954"/><path d="M511.3 397.6l1.1-.2-.8 2.4-1.2 .3z" color="#575550"/><path d="M573.5 311.1l1 1.2-6.7-1.5-1.1-1.2z" color="#6b6862"/><path d="M519.2 386.5l.4 .3-1.6 1.9-.4-.2z" color="#615f5a"/><path d="M521 384.6l.2 .4-1.6 1.8-.4-.3z" color="#625f5a"/><path d="M614.8 278.3l.4 1.9-8.9-4.2-.5-1.9z" color="#716e68"/><path d="M505.5 406l2-.3-.3 2.7-2 .5z" color="#56544f"/><path d="M535.8 354.9l1 1.6-3.7 .9-1.1-1.6z" color="#86837c"/><path d="M607.4 295.7l-1.7 .9-7.8-3.6 1.6-1z" color="#64625c"/><path d="M542.8 367.2l-.2 2.2-2.8 .5 0-2.3z" color="#56544f"/><path d="M531.7 376l-.2 1.3-2.3 1.1 .1-1.1z" color="#5b5853"/><path d="M536.9 372.5l-.3 1.7-2.5 .8 .1-1.6z" color="#575450"/><path d="M582.3 320.1l-.2 2.2-6.1-2 .1-2.3z" color="#7f7c75"/><path d="M552.1 352.4l-1.2 1.1-3.9-.1 1.1-1.1z" color="#63605b"/><path d="M530.9 354.6l1.1 1.2-3.7 1.3-1.2-1.3z" color="#848079"/><path d="M500.7 409.3l2.3-.1-.1 3-2.3 .3z" color="#575550"/><path d="M649.9 256.9l-1.6 1.8-10.4-6.4 1.4-1.9z" color="#56544f"/><path d="M495.9 408.9l2.4 .3-.1 3.3-2.4-.1z" color="#6a6761"/><path d="M626.7 255.3l1 1.2-10.6-4.9-1-1.3z" color="#64615c"/><path d="M585.8 313.9l-1.6 .5-6.6-2.2 1.5-.5z" color="#696761"/><path d="M652.3 252.7l-1.1 2.2-10.7-6.5 1-2.2z" color="#56544f"/><path d="M541.4 357.9l.6 2.2-3.4 .5-.8-2.1z" color="#8e8a82"/><path d="M579.7 329.1l-1.3 1.9-5.4-1.8 1.1-2z" color="#56544f"/><path d="M539.8 369.9l-.3 2-2.6 .6 0-2z" color="#56544f"/><path d="M617.5 276.8l-1.7 0-9.1-4.3 1.6 0z" color="#6d6a64"/><path d="M559.9 334.3l.6 2-5.1-.7-.7-1.9z" color="#88857d"/><path d="M651.2 254.9l-1.3 2-10.6-6.5 1.2-2z" color="#56544f"/><path d="M498.3 409.2l2.4 .1-.1 3.2-2.4 0z" color="#5e5c57"/><path d="M558.5 349.8l-1.2 1.7-4-.5 1-1.8z" color="#575550"/><path d="M512.4 395.1l1.1 0-1.1 2.3-1.1 .2z" color="#575550"/><path d="M547 353.4l-1.2 .5-3.9 .3 1.1-.6z" color="#686660"/><path d="M492.1 403.9l2 .8-.4 3.6-2-.7z" color="#74716b"/><path d="M582.1 322.3l-.5 2.3-5.9-2 .3-2.3z" color="#696661"/><path d="M542.8 364.8l0 2.4-3 .4-.2-2.3z" color="#5b5954"/><path d="M529.3 377.3l-.1 1.1-2.1 1.3-.2-1z" color="#5a5853"/><path d="M508.8 400.3l1.6-.2-.7 2.6-1.7 .3z" color="#56544f"/><path d="M580.8 326.9l-1.1 2.2-5.6-1.9 .9-2.2z" color="#56544f"/><path d="M542 360.1l.5 2.3-3.3 .5-.6-2.3z" color="#928f87"/><path d="M552.7 330.8l1.1 1.3-5.4-.2-1.1-1.2z" color="#7e7b74"/><path d="M581.6 324.6l-.8 2.3-5.8-1.9 .7-2.4z" color="#56544f"/><path d="M542.5 362.4l.3 2.4-3.2 .5-.4-2.4z" color="#8c8981"/><path d="M570.2 332.2l-1.5 1-5.3-1.2 1.4-1z" color="#63615b"/><path d="M503.4 406.2l2.1-.2-.3 2.9-2.2 .3z" color="#56544f"/><path d="M534.2 373.4l-.1 1.6-2.4 1-.1-1.5z" color="#575450"/><path d="M513.7 392.7l1 .1-1.2 2.3-1.1 0z" color="#575550"/><path d="M491.1 399.1l1.7 1-.7 3.8-1.7-1z" color="#74716b"/><path d="M536.8 356.5l1 2-3.6 .8-1.1-1.9z" color="#8a867f"/><path d="M615.2 280.2l.1 2.1-8.9-4.2-.1-2.1z" color="#78756f"/><path d="M490.8 394.2l1.4 1-1.1 3.9-1.3-1z" color="#74716b"/><path d="M506.1 403.1l1.9-.1-.5 2.7-2 .3z" color="#56544f"/><path d="M562 332.6l-1.5 .1-5.3-.7 1.4-.1z" color="#6b6863"/><path d="M609.1 294.5l-1.7 1.2-7.9-3.7 1.6-1.3z" color="#5d5b56"/><path d="M526.9 378.7l.2 1-2.1 1.5-.3-1z" color="#5a5853"/><path d="M593 293.5l.7 1.6-7.9-2.7-.8-1.6z" color="#706d67"/><path d="M560.5 336.3l.3 2.1-5-.6-.4-2.2z" color="#8c8880"/><path d="M574.5 312.3l.8 1.6-6.7-1.5-.8-1.6z" color="#7d7a73"/><path d="M539.8 367.6l0 2.3-2.9 .6-.1-2.1z" color="#56544f"/><path d="M494.1 404.7l2.2 .6-.4 3.6-2.2-.6z" color="#726f69"/><path d="M594.6 293.5l-1.4-.4-8-2.7 1.4 .4z" color="#6c6963"/><path d="M559.4 347.7l-.9 2.1-4.2-.6 .8-2z" color="#56544f"/><path d="M536.9 370.5l0 2-2.7 .9-.1-1.9z" color="#56544f"/><path d="M515.1 390.3l.9 .3-1.3 2.2-1-.1z" color="#585651"/><path d="M527.1 355.8l1.2 1.3-3.7 1.5-1.2-1.2z" color="#848079"/><path d="M532 355.8l1.1 1.6-3.6 1.2-1.2-1.5z" color="#87837c"/><path d="M509.8 397.6l1.5 0-.9 2.5-1.6 .2z" color="#56544f"/><path d="M524.7 380.2l.3 1-2.1 1.6-.4-.8z" color="#5a5853"/><path d="M501 406.1l2.4 .1-.4 3-2.3 .1z" color="#575550"/><path d="M553.3 351l-1.2 1.4-4-.1 1-1.4z" color="#5c5a55"/><path d="M587.4 313l-1.6 .9-6.7-2.2 1.6-1z" color="#64615c"/><path d="M516.8 388.1l.8 .4-1.6 2.1-.9-.3z" color="#585651"/><path d="M627.7 256.5l.7 1.6-10.5-4.9-.8-1.6z" color="#64615c"/><path d="M531.6 374.5l.1 1.5-2.4 1.3-.2-1.5z" color="#56544f"/><path d="M522.5 382l.4 .8-1.9 1.8-.5-.7z" color="#5a5752"/><path d="M496.3 405.3l2.3 .5-.3 3.4-2.4-.3z" color="#696761"/><path d="M619.2 276.3l-1.7 .5-9.2-4.3 1.6-.5z" color="#6a6762"/><path d="M537.8 358.5l.8 2.1-3.5 .9-.9-2.2z" color="#8f8c84"/><path d="M489.6 410.1l.4-1-.1 3.9-.4 1.2z" color="#615f5a"/><path d="M498.6 405.8l2.4 .3-.3 3.2-2.4-.1z" color="#5e5c56"/><path d="M518.5 385.9l.7 .6-1.6 2-.8-.4z" color="#595752"/><path d="M629.4 256.5l-1.5-.4-10.6-4.9 1.5 .4z" color="#6d6a64"/><path d="M520.5 383.9l.5 .7-1.8 1.9-.7-.6z" color="#595752"/><path d="M560.8 338.4l.1 2.3-4.9-.5-.2-2.4z" color="#8e8b83"/><path d="M539.6 365.3l.2 2.3-3 .8-.4-2.3z" color="#5c5a55"/><path d="M615.3 282.3l-.3 2.2-8.8-4.1 .2-2.3z" color="#74716a"/><path d="M560.2 345.5l-.8 2.2-4.3-.5 .5-2.3z" color="#56544f"/><path d="M610.7 292.9l-1.6 1.6-8-3.8 1.5-1.6z" color="#575550"/><path d="M506.9 400.2l1.9 .1-.8 2.7-1.9 .1z" color="#56544f"/><path d="M492.8 400.1l2 .9-.7 3.7-2-.8z" color="#74716b"/><path d="M504 403.1l2.1 0-.6 2.9-2.1 .2z" color="#56544f"/><path d="M553.8 332.1l.9 1.6-5.4-.1-.9-1.7z" color="#86827b"/><path d="M548.1 352.3l-1.1 1.1-4 .2 1-1z" color="#62605a"/><path d="M510.9 394.9l1.5 .2-1.1 2.5-1.5 0z" color="#56544f"/><path d="M571.7 330.9l-1.5 1.3-5.4-1.2 1.3-1.4z" color="#5c5a55"/><path d="M538.6 360.6l.6 2.3-3.4 .8-.7-2.2z" color="#959289"/><path d="M539.2 362.9l.4 2.4-3.2 .8-.6-2.4z" color="#918d85"/><path d="M492.2 390.4l1.3 1-1.3 3.8-1.4-1z" color="#75726c"/><path d="M560.9 340.7l-.2 2.4-4.7-.5 0-2.4z" color="#797670"/><path d="M560.7 343.1l-.5 2.4-4.6-.6 .4-2.3z" color="#575550"/><path d="M534.1 371.5l.1 1.9-2.6 1.1-.3-1.9z" color="#56544f"/><path d="M492.2 395.2l1.7 1.1-1.1 3.8-1.7-1z" color="#74716b"/><path d="M529.1 375.8l.2 1.5-2.4 1.4-.3-1.4z" color="#56544f"/><path d="M543 353.6l-1.1 .6-3.9 .6 1-.5z" color="#686660"/><path d="M593.7 295.1l.5 1.9-7.9-2.7-.5-1.9z" color="#7f7c75"/><path d="M536.8 368.4l.1 2.1-2.8 1-.3-2.1z" color="#56544f"/><path d="M533.1 357.4l1.1 1.9-3.6 1.2-1.1-1.9z" color="#8b877f"/><path d="M575.3 313.9l.5 2-6.6-1.5-.6-2z" color="#87847c"/><path d="M615 284.5l-.7 2.2-8.6-4 .5-2.3z" color="#615f59"/><path d="M612.2 291l-1.5 1.9-8.1-3.8 1.3-2z" color="#56544f"/><path d="M523.4 357.4l1.2 1.2-3.7 1.9-1.2-1.3z" color="#848079"/><path d="M563.4 332l-1.4 .6-5.4-.7 1.3-.6z" color="#686660"/><path d="M512.3 392.3l1.4 .4-1.3 2.4-1.5-.2z" color="#56544f"/><path d="M528.3 357.1l1.2 1.5-3.7 1.6-1.2-1.6z" color="#87837c"/><path d="M494.8 401l2.2 .8-.7 3.5-2.2-.6z" color="#726f69"/><path d="M501.7 402.8l2.3 .3-.6 3.1-2.4-.1z" color="#575550"/><path d="M554.3 349.2l-1 1.8-4.2-.1 .8-1.8z" color="#575550"/><path d="M589 311.7l-1.6 1.3-6.7-2.3 1.4-1.3z" color="#5d5a55"/><path d="M614.3 286.7l-.9 2.2-8.5-3.9 .8-2.3z" color="#56544f"/><path d="M613.4 288.9l-1.2 2.1-8.3-3.9 1-2.1z" color="#56544f"/><path d="M526.6 377.3l.3 1.4-2.2 1.5-.6-1.2z" color="#56544f"/><path d="M507.9 397.4l1.9 .2-1 2.7-1.9-.1z" color="#56544f"/><path d="M596.2 293.5l-1.6 0-8-2.7 1.5-.1z" color="#6c6963"/><path d="M628.4 258.1l.4 1.8-10.5-4.8-.4-1.9z" color="#716e68"/><path d="M621 275.4l-1.8 .9-9.3-4.3 1.7-.9z" color="#64625c"/><path d="M497 401.8l2.3 .6-.7 3.4-2.3-.5z" color="#696661"/><path d="M504.8 400l2.1 .2-.8 2.9-2.1 0z" color="#56544f"/><path d="M499.3 402.4l2.4 .4-.7 3.3-2.4-.3z" color="#5d5b56"/><path d="M536.4 366.1l.4 2.3-3 1-.6-2.3z" color="#5d5a55"/><path d="M531.3 372.6l.3 1.9-2.5 1.3-.5-1.8z" color="#56544f"/><path d="M577.6 312.2l-1.5 .1-6.8-1.5 1.4-.1z" color="#6b6963"/><path d="M513.9 389.8l1.2 .5-1.4 2.4-1.4-.4z" color="#56544f"/><path d="M534.2 359.3l.9 2.2-3.5 1.1-1-2.1z" color="#928e86"/><path d="M573 329.2l-1.3 1.7-5.6-1.3 1.1-1.7z" color="#575550"/><path d="M554.7 333.7l.7 1.9-5.3-.1-.8-1.9z" color="#89857e"/><path d="M493.9 386.6l1.3 1.1-1.7 3.7-1.3-1z" color="#79766f"/><path d="M524.1 379l.6 1.2-2.2 1.8-.7-1.2z" color="#56544f"/><path d="M640.2 235l1 1.2-12-5.6-1.1-1.2z" color="#64615c"/><path d="M493.9 396.3l1.9 1-1 3.7-2-.9z" color="#74716b"/><path d="M631.1 256.5l-1.7 0-10.6-4.9 1.5-.1z" color="#6d6a64"/><path d="M533.8 369.4l.3 2.1-2.8 1.1-.5-2z" color="#56544f"/><path d="M515.6 387.4l1.2 .7-1.7 2.2-1.2-.5z" color="#56544f"/><path d="M594.2 297l.1 2.1-7.8-2.6-.2-2.2z" color="#85817a"/><path d="M575.8 315.9l.3 2.1-6.5-1.5-.4-2.1z" color="#8b8780"/><path d="M488.7 411.1l.9-1-.1 4.1-.9 1.1z" color="#585651"/><path d="M535.8 363.7l.6 2.4-3.2 1-.7-2.3z" color="#959189"/><path d="M521.8 380.8l.7 1.2-2 1.9-.9-1z" color="#56544f"/><path d="M535.1 361.5l.7 2.2-3.3 1.1-.9-2.2z" color="#9a968d"/><path d="M519.7 359.2l1.2 1.3-3.5 2.1-1.2-1.2z" color="#848079"/><path d="M493.5 391.4l1.7 1.1-1.3 3.8-1.7-1.1z" color="#78756e"/><path d="M547.3 330.7l1.1 1.2-5.5 .4-1.2-1.2z" color="#838079"/><path d="M490.1 406l.4-.9-.5 4-.4 1z" color="#63615b"/><path d="M517.5 385.1l1 .8-1.7 2.2-1.2-.7z" color="#56544f"/><path d="M519.6 382.9l.9 1-2 2-1-.8z" color="#56544f"/><path d="M509.2 394.5l1.7 .4-1.1 2.7-1.9-.2z" color="#56544f"/><path d="M549.1 350.9l-1 1.4-4.1 .3 .9-1.4z" color="#5c5954"/><path d="M529.5 358.6l1.1 1.9-3.6 1.5-1.2-1.8z" color="#8c8880"/><path d="M590.5 310l-1.5 1.7-6.9-2.3 1.3-1.8z" color="#575550"/><path d="M555.1 347.2l-.8 2-4.4-.1 .7-2z" color="#56544f"/><path d="M528.6 374l.5 1.8-2.5 1.5-.7-1.7z" color="#56544f"/><path d="M524.6 358.6l1.2 1.6-3.6 1.8-1.3-1.5z" color="#87847c"/><path d="M604 271.3l1 1.3-9.6-3.3-1-1.2z" color="#64625c"/><path d="M502.6 399.6l2.2 .4-.8 3.1-2.3-.3z" color="#575450"/><path d="M495.8 397.3l2.2 .9-1 3.6-2.2-.8z" color="#726f69"/><path d="M505.9 396.9l2 .5-1 2.8-2.1-.2z" color="#56544f"/><path d="M566.7 309.6l1.1 1.2-7-.8-1.1-1.3z" color="#75726b"/><path d="M574.1 327.2l-1.1 2-5.8-1.3 1-2.1z" color="#56544f"/><path d="M495.9 382.9l1.3 1.1-2 3.7-1.3-1.1z" color="#7e7b74"/><path d="M539 354.3l-1 .5-3.9 .9 .9-.5z" color="#696660"/><path d="M544 352.6l-1 1-4 .7 .9-1z" color="#62605a"/><path d="M628.8 259.9l0 2.1-10.3-4.8-.2-2.1z" color="#78756f"/><path d="M555.4 335.6l.4 2.2-5.1-.1-.6-2.2z" color="#8c8981"/><path d="M556.6 331.9l-1.4 .1-5.5-.1 1.3-.1z" color="#6b6863"/><path d="M622.7 274.2l-1.7 1.2-9.4-4.3 1.6-1.3z" color="#5d5b56"/><path d="M533.2 367.1l.6 2.3-3 1.2-.7-2.2z" color="#5d5b55"/><path d="M576.1 318l-.1 2.3-6.3-1.4-.1-2.4z" color="#89857e"/><path d="M564.8 331l-1.4 1-5.5-.7 1.2-1z" color="#63605b"/><path d="M510.7 391.7l1.6 .6-1.4 2.6-1.7-.4z" color="#56544f"/><path d="M594.3 299.1l-.1 2.3-7.7-2.6 0-2.3z" color="#7f7c75"/><path d="M516.2 361.4l1.2 1.2-3.5 2.4-1.2-1.2z" color="#848079"/><path d="M500.3 398.9l2.3 .7-.9 3.2-2.4-.4z" color="#5d5a55"/><path d="M530.8 370.6l.5 2-2.7 1.4-.7-1.9z" color="#56544f"/><path d="M498 398.2l2.3 .7-1 3.5-2.3-.6z" color="#686660"/><path d="M525.9 375.6l.7 1.7-2.5 1.7-.8-1.6z" color="#56544f"/><path d="M530.6 360.5l1 2.1-3.4 1.5-1.2-2.1z" color="#96928a"/><path d="M597.9 293l-1.7 .5-8.1-2.8 1.5-.5z" color="#696761"/><path d="M591.8 308.1l-1.3 1.9-7.1-2.4 1.2-2z" color="#56544f"/><path d="M555.6 344.9l-.5 2.3-4.5-.1 .4-2.3z" color="#56544f"/><path d="M495.2 392.5l1.9 1.1-1.3 3.7-1.9-1z" color="#7a7770"/><path d="M495.2 387.7l1.7 1.1-1.7 3.7-1.7-1.1z" color="#7f7b74"/><path d="M575 325l-.9 2.2-5.9-1.4 .8-2.2z" color="#56544f"/><path d="M532.5 364.8l.7 2.3-3.1 1.3-.9-2.2z" color="#98948c"/><path d="M576 320.3l-.3 2.3-6.3-1.4 .3-2.3z" color="#716f68"/><path d="M512.4 389l1.5 .8-1.6 2.5-1.6-.6z" color="#56544f"/><path d="M498.1 379.3l1.3 1.1-2.2 3.6-1.3-1.1z" color="#827f78"/><path d="M531.6 362.6l.9 2.2-3.3 1.4-1-2.1z" color="#9f9b93"/><path d="M579.1 311.7l-1.5 .5-6.9-1.5 1.5-.6z" color="#696660"/><path d="M555.8 337.8l.2 2.4-5-.2-.3-2.3z" color="#8f8c84"/><path d="M641.2 236.2l.8 1.6-12.1-5.6-.7-1.6z" color="#64615c"/><path d="M575.7 322.6l-.7 2.4-6-1.4 .4-2.4z" color="#56544f"/><path d="M594.2 301.4l-.5 2.3-7.6-2.6 .4-2.3z" color="#696661"/><path d="M520.9 360.5l1.3 1.5-3.5 2.1-1.3-1.5z" color="#87847c"/><path d="M523.3 377.4l.8 1.6-2.3 1.8-1-1.3z" color="#56544f"/><path d="M632.8 256.1l-1.7 .4-10.8-5 1.7-.5z" color="#6a6762"/><path d="M507.3 393.9l1.9 .6-1.3 2.9-2-.5z" color="#56544f"/><path d="M525.8 360.2l1.2 1.8-3.5 1.8-1.3-1.8z" color="#8d8a82"/><path d="M512.7 363.8l1.2 1.2-3.2 2.6-1.3-1.1z" color="#848079"/><path d="M503.7 396.3l2.2 .6-1.1 3.1-2.2-.4z" color="#56544f"/><path d="M592.9 305.9l-1.1 2.2-7.2-2.5 .9-2.2z" color="#56544f"/><path d="M548.4 331.9l.9 1.7-5.4 .3-1-1.6z" color="#86837b"/><path d="M556 342.6l-.4 2.3-4.6-.1 .1-2.4z" color="#585651"/><path d="M556 340.2l0 2.4-4.9-.2-.1-2.4z" color="#817d76"/><path d="M593.7 303.7l-.8 2.2-7.4-2.5 .6-2.3z" color="#56544f"/><path d="M628.8 262l-.3 2.2-10.2-4.8 .2-2.2z" color="#74716a"/><path d="M514.2 386.4l1.4 1-1.7 2.4-1.5-.8z" color="#56544f"/><path d="M549.9 349.1l-.8 1.8-4.2 .3 .6-1.8z" color="#575550"/><path d="M624.3 272.6l-1.6 1.6-9.5-4.4 1.4-1.7z" color="#575550"/><path d="M527.9 372.1l.7 1.9-2.7 1.6-.9-1.8z" color="#56544f"/><path d="M487.4 412l1.3-.9-.1 4.2-1.3 1z" color="#56544f"/><path d="M520.8 379.5l1 1.3-2.2 2.1-1.1-1.3z" color="#56544f"/><path d="M583.9 289.6l1.1 1.2-8.4-1.9-1.1-1.2z" color="#6b6862"/><path d="M500.6 375.8l1.3 1.1-2.5 3.5-1.3-1.1z" color="#848079"/><path d="M530.1 368.4l.7 2.2-2.9 1.5-.9-2.1z" color="#5d5a55"/><path d="M497.1 393.6l2.2 1-1.3 3.6-2.2-.9z" color="#77746d"/><path d="M490.9 401.9l.4-.8-.8 4-.4 .9z" color="#65635d"/><path d="M516.3 384l1.2 1.1-1.9 2.3-1.4-1z" color="#56544f"/><path d="M518.5 381.6l1.1 1.3-2.1 2.2-1.2-1.1z" color="#56544f"/><path d="M509.4 366.5l1.3 1.1-3.2 2.9-1.2-1.1z" color="#848079"/><path d="M605 272.6l.8 1.5-9.6-3.2-.8-1.6z" color="#706d67"/><path d="M489.2 406.9l.9-.9-.5 4.1-.9 1z" color="#595752"/><path d="M501.5 395.5l2.2 .8-1.1 3.3-2.3-.7z" color="#5c5a55"/><path d="M497.2 384l1.6 1.2-1.9 3.6-1.7-1.1z" color="#85817a"/><path d="M503.3 372.5l1.3 1.1-2.7 3.3-1.3-1.1z" color="#848079"/><path d="M467.1 410l1.3 1-.1 5.6-1.4-.9z" color="#74716b"/><path d="M506.3 369.4l1.2 1.1-2.9 3.1-1.3-1.1z" color="#848079"/><path d="M499.3 394.6l2.2 .9-1.2 3.4-2.3-.7z" color="#696661"/><path d="M567.8 310.8l.8 1.6-6.9-.8-.9-1.6z" color="#85817a"/><path d="M508.8 390.9l1.9 .8-1.5 2.8-1.9-.6z" color="#56544f"/><path d="M527 362l1.2 2.1-3.4 1.7-1.3-2z" color="#9b988f"/><path d="M496.9 388.8l1.8 1.2-1.6 3.6-1.9-1.1z" color="#827f78"/><path d="M606.7 272.5l-1.4-.4-9.7-3.2 1.4 .4z" color="#6c6963"/><path d="M517.4 362.6l1.3 1.5-3.4 2.4-1.4-1.5z" color="#87847c"/><path d="M628.5 264.2l-.6 2.2-10.1-4.7 .5-2.3z" color="#615f59"/><path d="M566.1 329.6l-1.3 1.4-5.7-.7 1.2-1.4z" color="#5c5a55"/><path d="M625.8 270.7l-1.5 1.9-9.7-4.5 1.3-2z" color="#56544f"/><path d="M529.2 366.2l.9 2.2-3.1 1.6-1.1-2.1z" color="#9b978f"/><path d="M535 355.2l-.9 .5-3.9 1.3 .7-.4z" color="#696661"/><path d="M525 373.8l.9 1.8-2.6 1.8-1-1.7z" color="#56544f"/><path d="M544.9 351.2l-.9 1.4-4.1 .7 .6-1.4z" color="#5b5954"/><path d="M505.1 393.1l2.2 .8-1.4 3-2.2-.6z" color="#56544f"/><path d="M528.2 364.1l1 2.1-3.3 1.7-1.1-2.1z" color="#a6a299"/><path d="M522.2 362l1.3 1.8-3.4 2-1.4-1.7z" color="#8f8b84"/><path d="M599.5 292l-1.6 1-8.3-2.8 1.5-1z" color="#64615c"/><path d="M557.9 331.3l-1.3 .6-5.6-.1 1.2-.6z" color="#686660"/><path d="M539.9 353.3l-.9 1-4 .9 .7-.9z" color="#62605a"/><path d="M627.9 266.4l-.9 2.2-10-4.6 .8-2.3z" color="#56544f"/><path d="M627 268.6l-1.2 2.1-9.9-4.6 1.1-2.1z" color="#56544f"/><path d="M527 370l.9 2.1-2.9 1.7-1-2z" color="#5c5954"/><path d="M510.6 388.1l1.8 .9-1.7 2.7-1.9-.8z" color="#56544f"/><path d="M499.4 380.4l1.6 1.2-2.2 3.6-1.6-1.2z" color="#87847c"/><path d="M549.3 333.6l.8 1.9-5.4 .4-.8-2z" color="#89867e"/><path d="M642 237.8l.4 1.9-12-5.6-.5-1.9z" color="#716e68"/><path d="M522.3 375.7l1 1.7-2.5 2.1-1.2-1.6z" color="#56544f"/><path d="M550.6 347.1l-.7 2-4.4 .3 .4-2z" color="#56544f"/><path d="M498.7 390l2.1 1.1-1.5 3.5-2.2-1z" color="#817e77"/><path d="M634.6 255.2l-1.8 .9-10.8-5.1 1.6-.9z" color="#64625c"/><path d="M513.9 365l1.4 1.5-3.2 2.6-1.4-1.5z" color="#87847d"/><path d="M580.7 310.7l-1.6 1-6.9-1.6 1.4-1z" color="#63615b"/><path d="M541.7 331.1l1.2 1.2-5.6 .9-1.2-1.3z" color="#838079"/><path d="M503 392.2l2.1 .9-1.4 3.2-2.2-.8z" color="#5b5954"/><path d="M498.8 385.2l1.8 1.2-1.9 3.6-1.8-1.2z" color="#8a877f"/><path d="M512.6 385.3l1.6 1.1-1.8 2.6-1.8-.9z" color="#56544f"/><path d="M500.8 391.1l2.2 1.1-1.5 3.3-2.2-.9z" color="#716f68"/><path d="M519.6 377.9l1.2 1.6-2.3 2.1-1.4-1.4z" color="#56544f"/><path d="M523.5 363.8l1.3 2-3.3 2-1.4-2z" color="#a19d95"/><path d="M506.8 390l2 .9-1.5 3-2.2-.8z" color="#56544f"/><path d="M501.9 376.9l1.5 1.3-2.4 3.4-1.6-1.2z" color="#87847c"/><path d="M525.9 367.9l1.1 2.1-3 1.8-1.2-2z" color="#9d9991"/><path d="M485.7 412.7l1.7-.7-.1 4.3-1.7 .9z" color="#56544f"/><path d="M514.8 382.7l1.5 1.3-2.1 2.4-1.6-1.1z" color="#56544f"/><path d="M510.7 367.6l1.4 1.5-3.1 2.8-1.5-1.4z" color="#88847d"/><path d="M517.1 380.2l1.4 1.4-2.2 2.4-1.5-1.3z" color="#56544f"/><path d="M518.7 364.1l1.4 1.7-3.3 2.4-1.5-1.7z" color="#918d85"/><path d="M585 290.8l.8 1.6-8.4-1.9-.8-1.6z" color="#7d7a73"/><path d="M524 371.8l1 2-2.7 1.9-1.2-1.8z" color="#5a5853"/><path d="M605.8 274.1l.5 1.9-9.5-3.2-.6-1.9z" color="#7f7c75"/><path d="M492 397.7l.4-.7-1.1 4.1-.4 .8z" color="#67655f"/><path d="M524.8 365.8l1.1 2.1-3.1 1.9-1.3-2z" color="#ada99f"/><path d="M568.6 312.4l.6 2-6.8-.9-.7-1.9z" color="#88857d"/><path d="M504.6 373.6l1.5 1.4-2.7 3.2-1.5-1.3z" color="#87847d"/><path d="M507.5 370.5l1.5 1.4-2.9 3.1-1.5-1.4z" color="#88847d"/><path d="M468.4 411l1.7 .9-.1 5.6-1.7-.9z" color="#74716b"/><path d="M567.2 327.9l-1.1 1.7-5.8-.7 1-1.8z" color="#575550"/><path d="M550.1 335.5l.6 2.2-5.3 .3-.7-2.1z" color="#8d8981"/><path d="M500.6 386.4l2 1.3-1.8 3.4-2.1-1.1z" color="#8f8b84"/><path d="M508.7 386.9l1.9 1.2-1.8 2.8-2-.9z" color="#56544f"/><path d="M501 381.6l1.8 1.4-2.2 3.4-1.8-1.2z" color="#8d8a82"/><path d="M551 344.8l-.4 2.3-4.7 .3 .3-2.3z" color="#56544f"/><path d="M504.7 388.9l2.1 1.1-1.7 3.1-2.1-.9z" color="#5f5c57"/><path d="M487.9 407.6l1.3-.7-.5 4.2-1.3 .9z" color="#56544f"/><path d="M490 402.6l.9-.7-.8 4.1-.9 .9z" color="#5b5853"/><path d="M601.1 290.7l-1.6 1.3-8.4-2.8 1.5-1.4z" color="#5d5a55"/><path d="M530.9 356.6l-.7 .4-3.9 1.7 .6-.5z" color="#6a6761"/><path d="M521.1 373.9l1.2 1.8-2.7 2.2-1.3-1.8z" color="#595752"/><path d="M551 331.8l-1.3 .1-5.6 .4 1.2-.1z" color="#6b6963"/><path d="M515.3 366.5l1.5 1.7-3.2 2.5-1.5-1.6z" color="#928f87"/><path d="M520.1 365.8l1.4 2-3.2 2.2-1.5-1.8z" color="#a7a39a"/><path d="M545.5 349.4l-.6 1.8-4.4 .7 .5-1.8z" color="#575550"/><path d="M608.3 272.5l-1.6 0-9.7-3.2 1.5-.1z" color="#6c6963"/><path d="M502.6 387.7l2.1 1.2-1.7 3.3-2.2-1.1z" color="#817e77"/><path d="M522.8 369.8l1.2 2-2.9 2.1-1.4-2z" color="#9d9991"/><path d="M642.4 239.7l0 2-11.9-5.5-.1-2.1z" color="#78756f"/><path d="M636.3 253.9l-1.7 1.3-11-5.1 1.6-1.3z" color="#5d5b56"/><path d="M510.8 384l1.8 1.3-2 2.8-1.9-1.2z" color="#56544f"/><path d="M521.5 367.8l1.3 2-3.1 2.1-1.4-1.9z" color="#b3afa5"/><path d="M503.4 378.2l1.8 1.4-2.4 3.4-1.8-1.4z" color="#8f8c84"/><path d="M518.3 376.1l1.3 1.8-2.5 2.3-1.5-1.6z" color="#575550"/><path d="M550.7 337.7l.3 2.3-5.1 .4-.5-2.4z" color="#908d85"/><path d="M570.7 310.7l-1.4 .1-7.1-.9 1.4-.1z" color="#6b6863"/><path d="M551.1 342.4l-.1 2.4-4.8 .3-.1-2.3z" color="#595752"/><path d="M559.1 330.3l-1.2 1-5.7-.1 1.1-1z" color="#63605b"/><path d="M512.1 369.1l1.5 1.6-3 2.8-1.6-1.6z" color="#938f87"/><path d="M582.1 309.4l-1.4 1.3-7.1-1.6 1.3-1.4z" color="#5c5a55"/><path d="M513.1 381.2l1.7 1.5-2.2 2.6-1.8-1.3z" color="#56544f"/><path d="M535.7 354.3l-.7 .9-4.1 1.4 .6-.9z" color="#62605a"/><path d="M515.6 378.6l1.5 1.6-2.3 2.5-1.7-1.5z" color="#56544f"/><path d="M506.7 385.7l2 1.2-1.9 3.1-2.1-1.1z" color="#67655f"/><path d="M502.8 383l1.9 1.3-2.1 3.4-2-1.3z" color="#9b978f"/><path d="M540.5 351.9l-.6 1.4-4.2 1 .5-1.4z" color="#5b5954"/><path d="M542.9 332.3l1 1.6-5.6 .9-1-1.6z" color="#86837b"/><path d="M506.1 375l1.7 1.5-2.6 3.1-1.8-1.4z" color="#918d85"/><path d="M551 340l.1 2.4-5 .4-.2-2.4z" color="#87837c"/><path d="M569.2 314.4l.4 2.1-6.8-.8-.4-2.2z" color="#8c8880"/><path d="M509 371.9l1.6 1.6-2.8 3-1.7-1.5z" color="#928f87"/><path d="M483.7 413.2l2-.5-.1 4.5-2 .7z" color="#56544f"/><path d="M519.7 371.9l1.4 2-2.8 2.2-1.5-1.8z" color="#9a978e"/><path d="M516.8 368.2l1.5 1.8-3.1 2.5-1.6-1.8z" color="#aba79d"/><path d="M606.3 276l.1 2.1-9.4-3.1-.2-2.2z" color="#85817a"/><path d="M568.2 325.8l-1 2.1-5.9-.8 .8-2z" color="#56544f"/><path d="M504.7 384.3l2 1.4-2 3.2-2.1-1.2z" color="#949188"/><path d="M585.8 292.4l.5 1.9-8.3-1.8-.6-2z" color="#87847c"/><path d="M518.3 370l1.4 1.9-2.9 2.4-1.6-1.8z" color="#b8b3a9"/><path d="M470.1 411.9l2 .7-.1 5.5-2-.6z" color="#74716b"/><path d="M508.9 382.6l1.9 1.4-2.1 2.9-2-1.2z" color="#73706a"/><path d="M493.5 393.6l.3-.6-1.4 4-.4 .7z" color="#696660"/><path d="M467.7 404.3l1.4 1-.7 5.7-1.3-1z" color="#74716b"/><path d="M505.2 379.6l1.8 1.5-2.3 3.2-1.9-1.3z" color="#a19d95"/><path d="M516.8 374.3l1.5 1.8-2.7 2.5-1.6-1.7z" color="#949189"/><path d="M602.6 289.1l-1.5 1.6-8.5-2.9 1.3-1.7z" color="#575550"/><path d="M513.6 370.7l1.6 1.8-2.9 2.7-1.7-1.7z" color="#aca89f"/><path d="M559.7 308.7l1.1 1.3-7.2-.2-1.1-1.3z" color="#7e7b74"/><path d="M642.4 241.7l-.3 2.2-11.8-5.5 .2-2.2z" color="#74716a"/><path d="M511.4 379.6l1.7 1.6-2.3 2.8-1.9-1.4z" color="#7f7c75"/><path d="M616.1 250.3l1 1.3-11.2-3.8-1.1-1.3z" color="#64625c"/><path d="M507 381.1l1.9 1.5-2.2 3.1-2-1.4z" color="#a7a39a"/><path d="M637.9 252.3l-1.6 1.6-11.1-5.1 1.5-1.7z" color="#575550"/><path d="M514 376.9l1.6 1.7-2.5 2.6-1.7-1.6z" color="#8b8880"/><path d="M507.8 376.5l1.8 1.5-2.6 3.1-1.8-1.5z" color="#a7a39a"/><path d="M510.6 373.5l1.7 1.7-2.7 2.8-1.8-1.5z" color="#aba79d"/><path d="M515.2 372.5l1.6 1.8-2.8 2.6-1.7-1.7z" color="#b9b4aa"/><path d="M526.9 358.2l-.6 .5-3.8 1.9 .5-.4z" color="#6a6762"/><path d="M569.6 316.5l.1 2.4-6.7-.9-.2-2.3z" color="#8e8b83"/><path d="M545.9 347.4l-.4 2-4.5 .7 .3-2z" color="#56544f"/><path d="M569 323.6l-.8 2.2-6.1-.7 .6-2.3z" color="#56544f"/><path d="M509.6 378l1.8 1.6-2.5 3-1.9-1.5z" color="#b3afa5"/><path d="M512.3 375.2l1.7 1.7-2.6 2.7-1.8-1.6z" color="#b8b3a9"/><path d="M588.1 290.7l-1.5 .1-8.5-1.9 1.4-.1z" color="#6b6963"/><path d="M486.2 408.1l1.7-.5-.5 4.4-1.7 .7z" color="#56544f"/><path d="M606.4 278.1l-.2 2.3-9.3-3.1 .1-2.3z" color="#7f7c75"/><path d="M491.2 398.3l.8-.6-1.1 4.2-.9 .7z" color="#5c5a55"/><path d="M481.5 413.5l2.2-.3-.1 4.7-2.2 .5z" color="#56544f"/><path d="M583.4 307.6l-1.3 1.8-7.2-1.7 1.1-1.7z" color="#575550"/><path d="M569.7 318.9l-.3 2.3-6.4-.7 0-2.5z" color="#797670"/><path d="M569.4 321.2l-.4 2.4-6.3-.8 .3-2.3z" color="#575550"/><path d="M609.9 272l-1.6 .5-9.8-3.3 1.6-.5z" color="#696761"/><path d="M543.9 333.9l.8 2-5.4 .8-1-1.9z" color="#89867e"/><path d="M536.1 331.9l1.2 1.3-5.7 1.4-1.1-1.3z" color="#838079"/><path d="M472.1 412.6l2.3 .6-.2 5.3-2.2-.4z" color="#726f69"/><path d="M603.9 287.1l-1.3 2-8.7-3 1.1-2z" color="#56544f"/><path d="M642.1 243.9l-.6 2.3-11.7-5.4 .5-2.4z" color="#615f59"/><path d="M639.3 250.4l-1.4 1.9-11.2-5.2 1.3-1.9z" color="#56544f"/><path d="M488.7 403.1l1.3-.5-.8 4.3-1.3 .7z" color="#56544f"/><path d="M552.2 331.2l-1.2 .6-5.7 .4 1.1-.6z" color="#686660"/><path d="M586.3 294.3l.2 2.2-8.1-1.9-.4-2.1z" color="#8b8780"/><path d="M560.3 328.9l-1.2 1.4-5.8-.1 1-1.4z" color="#5c5a55"/><path d="M531.5 355.7l-.6 .9-4 1.6 .5-.8z" color="#62605a"/><path d="M495.3 389.5l.3-.4-1.8 3.9-.3 .6z" color="#6a6761"/><path d="M606.2 280.4l-.5 2.3-9.1-3.1 .3-2.3z" color="#696661"/><path d="M641.5 246.2l-1 2.2-11.5-5.4 .8-2.2z" color="#56544f"/><path d="M640.5 248.4l-1.2 2-11.3-5.2 1-2.2z" color="#56544f"/><path d="M541 350.1l-.5 1.8-4.3 1 .3-1.7z" color="#575550"/><path d="M572.2 310.1l-1.5 .6-7.1-.9 1.3-.6z" color="#686660"/><path d="M479.1 413.6l2.4-.1-.1 4.9-2.4 .3z" color="#575550"/><path d="M604.9 285l-1 2.1-8.9-3 .9-2.2z" color="#56544f"/><path d="M474.4 413.2l2.3 .3-.1 5.2-2.4-.2z" color="#6a6761"/><path d="M546.2 345.1l-.3 2.3-4.6 .7 0-2.2z" color="#56544f"/><path d="M605.7 282.7l-.8 2.3-9-3.1 .7-2.3z" color="#56544f"/><path d="M536.2 352.9l-.5 1.4-4.2 1.4 .4-1.3z" color="#5b5954"/><path d="M469.1 405.3l1.7 .9-.7 5.7-1.7-.9z" color="#74716b"/><path d="M523 360.2l-.5 .4-3.7 2.2 .4-.3z" color="#6b6862"/><path d="M476.7 413.5l2.4 .1-.1 5.1-2.4 0z" color="#5e5c57"/><path d="M584.6 305.6l-1.2 2-7.4-1.6 1-2.1z" color="#56544f"/><path d="M544.7 335.9l.7 2.1-5.3 .9-.8-2.2z" color="#8e8a82"/><path d="M560.8 310l.9 1.6-7.1-.2-1-1.6z" color="#86827b"/><path d="M586.5 296.5l0 2.3-8.1-1.8 0-2.4z" color="#89857e"/><path d="M617.1 251.6l.8 1.6-11.2-3.8-.8-1.6z" color="#706d67"/><path d="M484.2 408.4l2-.3-.5 4.6-2 .5z" color="#56544f"/><path d="M618.8 251.6l-1.5-.4-11.2-3.8 1.4 .4z" color="#6c6963"/><path d="M546.1 342.8l.1 2.3-4.9 .8-.2-2.3z" color="#5b5954"/><path d="M492.7 394l.8-.4-1.5 4.1-.8 .6z" color="#5d5b56"/><path d="M497.4 385.6l.2-.4-2 3.9-.3 .4z" color="#6b6862"/><path d="M585.5 303.4l-.9 2.2-7.6-1.7 .7-2.2z" color="#56544f"/><path d="M545.4 338l.5 2.4-5.2 .8-.6-2.3z" color="#928f87"/><path d="M586.5 298.8l-.4 2.3-7.9-1.8 .2-2.3z" color="#716f68"/><path d="M537.3 333.2l1 1.6-5.5 1.4-1.2-1.6z" color="#86837c"/><path d="M545.9 340.4l.2 2.4-5 .8-.4-2.4z" color="#8c8981"/><path d="M611.6 271.1l-1.7 .9-9.8-3.3 1.5-1z" color="#64615c"/><path d="M589.6 290.2l-1.5 .5-8.6-1.9 1.4-.6z" color="#696660"/><path d="M586.1 301.1l-.6 2.3-7.8-1.7 .5-2.4z" color="#56544f"/><path d="M519.2 362.5l-.4 .3-3.6 2.5 .3-.2z" color="#6b6963"/><path d="M561.3 327.1l-1 1.8-6-.1 .9-1.8z" color="#575550"/><path d="M527.4 357.4l-.5 .8-3.9 2 .3-.8z" color="#62605a"/><path d="M468.8 398.5l1.4 1-1.1 5.8-1.4-1z" color="#74716b"/><path d="M487.1 403.5l1.6-.4-.8 4.5-1.7 .5z" color="#56544f"/><path d="M490 398.7l1.2-.4-1.2 4.3-1.3 .5z" color="#56544f"/><path d="M541.3 348.1l-.3 2-4.5 1.1 .1-1.9z" color="#56544f"/><path d="M470.8 406.2l2 .9-.7 5.5-2-.7z" color="#74716b"/><path d="M575.5 287.7l1.1 1.2-8.8-1-1.1-1.3z" color="#75726b"/><path d="M594.4 268.1l1 1.2-10.1-2.3-1-1.2z" color="#6b6862"/><path d="M553.3 330.2l-1.1 1-5.8 .4 1-1z" color="#62605a"/><path d="M573.6 309.1l-1.4 1-7.3-.9 1.3-1z" color="#63605b"/><path d="M561.7 311.6l.7 1.9-7.1-.1-.7-2z" color="#89857e"/><path d="M482.1 408.6l2.1-.2-.5 4.8-2.2 .3z" color="#56544f"/><path d="M531.9 354.4l-.4 1.3-4.1 1.7 .2-1.2z" color="#5b5954"/><path d="M468.1 414.4l.4-1-.1 5.7-.5 1.2z" color="#615f5a"/><path d="M536.5 351.2l-.3 1.7-4.3 1.5 .1-1.7z" color="#575450"/><path d="M617.9 253.2l.4 1.9-11.1-3.8-.5-1.9z" color="#7f7c75"/><path d="M530.5 333.3l1.1 1.3-5.6 1.8-1.1-1.2z" color="#848079"/><path d="M494.6 389.8l.7-.3-1.8 4.1-.8 .4z" color="#5e5c57"/><path d="M538.3 334.8l1 1.9-5.5 1.4-1-1.9z" color="#8a867f"/><path d="M472.8 407.1l2.2 .6-.6 5.5-2.3-.6z" color="#726f69"/><path d="M562.1 325.1l-.8 2-6.1-.1 .6-2.1z" color="#56544f"/><path d="M523.3 359.4l-.3 .8-3.8 2.3 .1-.7z" color="#62605a"/><path d="M613.2 269.8l-1.6 1.3-10-3.4 1.4-1.4z" color="#5d5a55"/><path d="M541.3 345.9l0 2.2-4.7 1.2-.2-2.2z" color="#56544f"/><path d="M479.7 408.5l2.4 .1-.6 4.9-2.4 .1z" color="#575550"/><path d="M620.3 251.5l-1.5 .1-11.3-3.8 1.5-.1z" color="#6c6963"/><path d="M591.1 289.2l-1.5 1-8.7-2 1.4-1z" color="#63615b"/><path d="M475 407.7l2.3 .5-.6 5.3-2.3-.3z" color="#696761"/><path d="M562.4 313.5l.4 2.2-6.9-.2-.6-2.1z" color="#8c8981"/><path d="M563.6 309.8l-1.4 .1-7.3-.2 1.3-.1z" color="#6b6863"/><path d="M470.2 399.5l1.7 1-1.1 5.7-1.7-.9z" color="#74716b"/><path d="M546.4 331.6l-1.1 .6-5.8 .9 1-.6z" color="#686660"/><path d="M477.3 408.2l2.4 .3-.6 5.1-2.4-.1z" color="#5e5c56"/><path d="M485.2 403.6l1.9-.1-.9 4.6-2 .3z" color="#56544f"/><path d="M491.6 394.2l1.1-.2-1.5 4.3-1.2 .4z" color="#575550"/><path d="M539.3 336.7l.8 2.2-5.4 1.3-.9-2.1z" color="#8f8c84"/><path d="M576.6 288.9l.8 1.6-8.7-1-.9-1.6z" color="#85817a"/><path d="M496.8 385.7l.6-.1-2.1 3.9-.7 .3z" color="#5f5d58"/><path d="M552.5 308.5l1.1 1.3-7.4 .5-1.1-1.3z" color="#838079"/><path d="M595.4 269.3l.8 1.6-10-2.3-.9-1.6z" color="#7d7a73"/><path d="M618.3 255.1l.2 2.1-11-3.8-.3-2.1z" color="#85817a"/><path d="M488.4 398.8l1.6-.1-1.3 4.4-1.6 .4z" color="#56544f"/><path d="M562.7 322.8l-.6 2.3-6.3-.2 .4-2.2z" color="#56544f"/><path d="M541.1 343.6l.2 2.3-4.9 1.2-.4-2.3z" color="#5c5a55"/><path d="M574.9 307.7l-1.3 1.4-7.4-.9 1.1-1.4z" color="#5c5a55"/><path d="M554.3 328.8l-1 1.4-5.9 .4 .8-1.4z" color="#5c5954"/><path d="M527.6 356.2l-.2 1.2-4.1 2 0-1.1z" color="#5b5853"/><path d="M519.3 361.8l-.1 .7-3.7 2.6 0-.6z" color="#62605a"/><path d="M562.8 315.7l.2 2.3-6.8-.1-.3-2.4z" color="#8f8c84"/><path d="M536.6 349.3l-.1 1.9-4.5 1.5-.1-1.9z" color="#56544f"/><path d="M531.6 334.6l1.2 1.6-5.6 1.8-1.2-1.6z" color="#87837c"/><path d="M540.1 338.9l.6 2.3-5.2 1.3-.8-2.3z" color="#959289"/><path d="M614.6 268.1l-1.4 1.7-10.2-3.5 1.4-1.7z" color="#575550"/><path d="M540.7 341.2l.4 2.4-5.1 1.2-.5-2.3z" color="#918d85"/><path d="M470.4 392.7l1.4 1.1-1.6 5.7-1.4-1z" color="#74716b"/><path d="M563 320.5l-.3 2.3-6.5-.1 .1-2.4z" color="#585651"/><path d="M628.1 229.4l1.1 1.2-12.9-4.3-1-1.3z" color="#64625c"/><path d="M532 352.7l-.1 1.7-4.3 1.8-.1-1.6z" color="#575450"/><path d="M563 318l0 2.5-6.7-.2-.1-2.4z" color="#817d76"/><path d="M467.2 415.4l.9-1-.2 5.9-.9 1.2z" color="#585651"/><path d="M499.3 381.7l.5 0-2.4 3.9-.6 .1z" color="#605e58"/><path d="M471.9 400.5l2 .9-1.1 5.7-2-.9z" color="#74716b"/><path d="M483 403.5l2.2 .1-1 4.8-2.1 .2z" color="#56544f"/><path d="M618.5 257.2l-.2 2.2-10.9-3.7 .1-2.3z" color="#7f7c75"/><path d="M515.5 364.5l0 .6-3.6 2.9-.1-.5z" color="#62605a"/><path d="M592.6 287.8l-1.5 1.4-8.8-2 1.3-1.4z" color="#5c5a55"/><path d="M493.5 389.8l1.1 0-1.9 4.2-1.1 .2z" color="#575550"/><path d="M524.9 335.2l1.1 1.2-5.5 2.3-1.2-1.2z" color="#848079"/><path d="M622 251l-1.7 .5-11.3-3.8 1.5-.6z" color="#696761"/><path d="M615.9 266.1l-1.3 2-10.2-3.5 1.1-2z" color="#56544f"/><path d="M502 377.8l.5 .2-2.7 3.7-.5 0z" color="#615e59"/><path d="M577.4 290.5l.6 2-8.6-1.1-.7-1.9z" color="#88857d"/><path d="M523.3 358.3l0 1.1-4 2.4-.1-1z" color="#5a5853"/><path d="M596.2 270.9l.6 1.9-10-2.2-.6-2z" color="#87847c"/><path d="M511.8 367.5l.1 .5-3.3 3.1-.3-.4z" color="#62605a"/><path d="M576 306l-1.1 1.7-7.6-.9 1-1.8z" color="#575550"/><path d="M536.4 347.1l.2 2.2-4.7 1.5-.4-2.1z" color="#56544f"/><path d="M564.9 309.2l-1.3 .6-7.4-.2 1.2-.5z" color="#686660"/><path d="M618.3 259.4l-.5 2.3-10.8-3.6 .4-2.4z" color="#696661"/><path d="M532.8 336.2l1 1.9-5.5 1.8-1.1-1.9z" color="#8b877f"/><path d="M553.6 309.8l1 1.6-7.4 .5-1-1.6z" color="#86837b"/><path d="M486.5 398.8l1.9 0-1.3 4.7-1.9 .1z" color="#56544f"/><path d="M505.1 374.2l.3 .2-2.9 3.6-.5-.2z" color="#615f5a"/><path d="M473.9 401.4l2.2 .8-1.1 5.5-2.2-.6z" color="#726f69"/><path d="M490 394.2l1.6 0-1.6 4.5-1.6 .1z" color="#56544f"/><path d="M547.4 330.6l-1 1-5.9 .9 .9-1z" color="#62605a"/><path d="M508.3 370.7l.3 .4-3.2 3.3-.3-.2z" color="#625f5a"/><path d="M480.7 403.3l2.3 .2-.9 5.1-2.4-.1z" color="#575550"/><path d="M617 264l-1.1 2.1-10.4-3.5 .9-2.2z" color="#56544f"/><path d="M468.7 408.4l.5-.9-.7 5.9-.4 1z" color="#63615b"/><path d="M555.2 327l-.9 1.8-6.1 .4 .7-1.8z" color="#575550"/><path d="M617.8 261.7l-.8 2.3-10.6-3.6 .6-2.3z" color="#56544f"/><path d="M471.8 393.8l1.7 1-1.6 5.7-1.7-1z" color="#74716b"/><path d="M476.1 402.2l2.3 .6-1.1 5.4-2.3-.5z" color="#696661"/><path d="M478.4 402.8l2.3 .5-1 5.2-2.4-.3z" color="#5d5b56"/><path d="M527.5 354.6l.1 1.6-4.3 2.1-.2-1.5z" color="#56544f"/><path d="M495.8 385.6l1 .1-2.2 4.1-1.1 0z" color="#575550"/><path d="M531.9 350.8l.1 1.9-4.5 1.9-.3-1.8z" color="#56544f"/><path d="M629.2 230.6l.7 1.6-12.8-4.3-.8-1.6z" color="#706d67"/><path d="M598.5 269.2l-1.5 .1-10.1-2.3 1.4-.1z" color="#6b6963"/><path d="M579.5 288.8l-1.4 .1-8.8-1.1 1.3-.1z" color="#6b6863"/><path d="M593.9 286.1l-1.3 1.7-9-2 1.2-1.7z" color="#575550"/><path d="M536 344.8l.4 2.3-4.9 1.6-.5-2.2z" color="#5d5a55"/><path d="M533.8 338.1l.9 2.1-5.4 1.8-1-2.1z" color="#928e86"/><path d="M578 292.5l.4 2.1-8.5-1-.5-2.2z" color="#8c8880"/><path d="M519.2 360.8l.1 1-3.8 2.7-.3-.9z" color="#5a5853"/><path d="M465.9 416.3l1.3-.9-.2 6.1-1.3 1z" color="#56544f"/><path d="M577 303.9l-1 2.1-7.7-1 .8-2z" color="#56544f"/><path d="M472.5 387l1.3 1-2 5.8-1.4-1.1z" color="#75726c"/><path d="M540.5 332.5l-1 .6-5.8 1.4 .9-.5z" color="#696660"/><path d="M596.8 272.8l.2 2.2-9.9-2.3-.3-2.1z" color="#8b8780"/><path d="M526 336.4l1.2 1.6-5.5 2.3-1.2-1.6z" color="#87837c"/><path d="M623.6 250.1l-1.6 .9-11.5-3.9 1.5-.9z" color="#64615c"/><path d="M535.5 342.5l.5 2.3-5 1.7-.7-2.3z" color="#959189"/><path d="M534.7 340.2l.8 2.3-5.2 1.7-1-2.2z" color="#9a968d"/><path d="M445.5 414.3l1.4 1-.2 7.5-1.4-1z" color="#74716b"/><path d="M484.4 398.5l2.1 .3-1.3 4.8-2.2-.1z" color="#56544f"/><path d="M554.6 311.4l.7 2-7.2 .4-.9-1.9z" color="#89867e"/><path d="M555.8 324.9l-.6 2.1-6.3 .4 .4-2z" color="#56544f"/><path d="M498.4 381.4l.9 .3-2.5 4-1-.1z" color="#585651"/><path d="M492.1 389.6l1.4 .2-1.9 4.4-1.6 0z" color="#56544f"/><path d="M519.3 337.5l1.2 1.2-5.5 2.8-1.2-1.2z" color="#848079"/><path d="M473.5 394.8l1.9 1-1.5 5.6-2-.9z" color="#74716b"/><path d="M578.4 294.6l0 2.4-8.3-1.1-.2-2.3z" color="#8e8b83"/><path d="M515.2 363.6l.3 .9-3.7 3-.4-.9z" color="#5a5853"/><path d="M595 284.1l-1.1 2-9.1-2 1-2.1z" color="#56544f"/><path d="M577.7 301.7l-.7 2.2-7.9-.9 .6-2.3z" color="#56544f"/><path d="M488.2 394l1.8 .2-1.6 4.6-1.9 0z" color="#56544f"/><path d="M566.2 308.2l-1.3 1-7.5-.1 1.2-1.1z" color="#63605b"/><path d="M523.1 356.8l.2 1.5-4.1 2.5-.4-1.4z" color="#56544f"/><path d="M597 275l-.1 2.3-9.7-2.2-.1-2.4z" color="#89857e"/><path d="M531.5 348.7l.4 2.1-4.7 2-.5-2.1z" color="#56544f"/><path d="M548.2 329.2l-.8 1.4-6 .9 .6-1.4z" color="#5b5954"/><path d="M501.2 377.4l.8 .4-2.7 3.9-.9-.3z" color="#585651"/><path d="M578.4 297l-.2 2.3-8.2-1 .1-2.4z" color="#797670"/><path d="M578.2 299.3l-.5 2.4-8-1 .3-2.4z" color="#575550"/><path d="M629.9 232.2l.5 1.9-12.7-4.3-.6-1.9z" color="#7f7c75"/><path d="M511.4 366.6l.4 .9-3.5 3.2-.5-.7z" color="#5a5752"/><path d="M467.9 409.3l.8-.9-.6 6-.9 1z" color="#595752"/><path d="M482.2 398.1l2.2 .4-1.4 5-2.3-.2z" color="#575450"/><path d="M527.2 352.8l.3 1.8-4.4 2.2-.5-1.7z" color="#56544f"/><path d="M527.2 338l1.1 1.9-5.4 2.2-1.2-1.8z" color="#8c8880"/><path d="M595.9 281.9l-.9 2.2-9.2-2.1 .7-2.2z" color="#56544f"/><path d="M555.3 313.4l.6 2.1-7.1 .5-.7-2.2z" color="#8d8981"/><path d="M504.4 373.6l.7 .6-3.1 3.6-.8-.4z" color="#595752"/><path d="M507.8 370l.5 .7-3.2 3.5-.7-.6z" color="#595752"/><path d="M556.2 322.7l-.4 2.2-6.5 .5 .2-2.3z" color="#56544f"/><path d="M475.4 395.8l2.2 .9-1.5 5.5-2.2-.8z" color="#726f69"/><path d="M596.9 277.3l-.3 2.3-9.6-2.2 .2-2.3z" color="#716f68"/><path d="M600.1 268.7l-1.6 .5-10.2-2.3 1.4-.6z" color="#696660"/><path d="M473.8 388l1.7 1.1-2 5.7-1.7-1z" color="#78756e"/><path d="M556.2 309.6l-1.3 .1-7.4 .5 1.2-.1z" color="#6b6963"/><path d="M596.6 279.6l-.7 2.3-9.4-2.1 .5-2.4z" color="#56544f"/><path d="M545.1 309l1.1 1.3-7.4 1.1-1.2-1.2z" color="#838079"/><path d="M464.2 417l1.7-.7-.2 6.2-1.7 .9z" color="#56544f"/><path d="M580.9 288.2l-1.4 .6-8.9-1.1 1.3-.6z" color="#686660"/><path d="M625.2 248.8l-1.6 1.3-11.6-3.9 1.5-1.4z" color="#5d5a55"/><path d="M566.7 286.6l1.1 1.3-9-.3-1.1-1.2z" color="#7e7b74"/><path d="M494.4 385.2l1.4 .4-2.3 4.2-1.4-.2z" color="#56544f"/><path d="M479.9 397.5l2.3 .6-1.5 5.2-2.3-.5z" color="#5d5a55"/><path d="M475 381.3l1.3 1.1-2.5 5.6-1.3-1z" color="#79766f"/><path d="M477.6 396.7l2.3 .8-1.5 5.3-2.3-.6z" color="#686660"/><path d="M531 346.5l.5 2.2-4.8 2-.7-2.2z" color="#5d5b55"/><path d="M446.9 415.3l1.7 .9-.2 7.4-1.7-.8z" color="#74716b"/><path d="M555.9 315.5l.3 2.4-6.9 .4-.5-2.3z" color="#908d85"/><path d="M469.9 402.3l.4-.8-1.1 6-.5 .9z" color="#65635d"/><path d="M518.8 359.4l.4 1.4-4 2.8-.5-1.3z" color="#56544f"/><path d="M556.3 320.3l-.1 2.4-6.7 .4 0-2.4z" color="#595752"/><path d="M604.8 246.5l1.1 1.3-11.8-2.7-1.1-1.2z" color="#6b6862"/><path d="M528.3 339.9l1 2.1-5.3 2.2-1.1-2.1z" color="#96928a"/><path d="M520.5 338.7l1.2 1.6-5.4 2.7-1.3-1.5z" color="#87847c"/><path d="M486.2 393.5l2 .5-1.7 4.8-2.1-.3z" color="#56544f"/><path d="M541.4 331.5l-.9 1-5.9 1.5 .7-1z" color="#62605a"/><path d="M556.2 317.9l.1 2.4-6.8 .4-.2-2.4z" color="#87837c"/><path d="M490.3 389.2l1.8 .4-2.1 4.6-1.8-.2z" color="#56544f"/><path d="M513.8 340.3l1.2 1.2-5.3 3.2-1.3-1.2z" color="#848079"/><path d="M530.3 344.2l.7 2.3-5 2-.9-2.2z" color="#98948c"/><path d="M630.4 234.1l.1 2.1-12.6-4.3-.2-2.1z" color="#85817a"/><path d="M529.3 342l1 2.2-5.2 2.1-1.1-2.1z" color="#9f9b93"/><path d="M497.1 380.9l1.3 .5-2.6 4.2-1.4-.4z" color="#56544f"/><path d="M567.3 306.8l-1.1 1.4-7.6-.2 .9-1.4z" color="#5c5a55"/><path d="M526.7 350.7l.5 2.1-4.6 2.3-.7-2z" color="#56544f"/><path d="M522.6 355.1l.5 1.7-4.3 2.6-.6-1.6z" color="#56544f"/><path d="M548.9 327.4l-.7 1.8-6.2 .9 .5-1.7z" color="#575550"/><path d="M475.5 389.1l1.9 1.1-2 5.6-1.9-1z" color="#7a7770"/><path d="M514.7 362.3l.5 1.3-3.8 3-.7-1.1z" color="#56544f"/><path d="M534.6 334l-.9 .5-5.8 1.9 .8-.5z" color="#696661"/><path d="M626.7 247.1l-1.5 1.7-11.7-4 1.3-1.7z" color="#575550"/><path d="M462.2 417.5l2-.5-.2 6.4-2 .7z" color="#56544f"/><path d="M484 392.9l2.2 .6-1.8 5-2.2-.4z" color="#56544f"/><path d="M500.1 376.7l1.1 .7-2.8 4-1.3-.5z" color="#56544f"/><path d="M546.2 310.3l1 1.6-7.4 1.2-1-1.7z" color="#86837b"/><path d="M466.6 410l1.3-.7-.7 6.1-1.3 .9z" color="#56544f"/><path d="M584.3 265.8l1 1.2-10.5-1.2-1-1.3z" color="#75726b"/><path d="M448.6 416.2l2 .7-.2 7.4-2-.7z" color="#74716b"/><path d="M601.6 267.7l-1.5 1-10.4-2.4 1.4-1z" color="#63615b"/><path d="M567.8 287.9l.9 1.6-8.9-.2-1-1.7z" color="#86827b"/><path d="M478 375.7l1.3 1.1-3 5.6-1.3-1.1z" color="#7e7b74"/><path d="M521.7 340.3l1.2 1.8-5.3 2.7-1.3-1.8z" color="#8d8a82"/><path d="M510.7 365.5l.7 1.1-3.6 3.4-.9-1z" color="#56544f"/><path d="M476.3 382.4l1.7 1.1-2.5 5.6-1.7-1.1z" color="#7f7b74"/><path d="M630.5 236.2l-.2 2.2-12.4-4.2 0-2.3z" color="#7f7c75"/><path d="M582.3 287.2l-1.4 1-9-1.1 1.3-1z" color="#63605b"/><path d="M492.8 384.6l1.6 .6-2.3 4.4-1.8-.4z" color="#56544f"/><path d="M477.4 390.2l2.1 1-1.9 5.5-2.2-.9z" color="#77746d"/><path d="M503.4 372.7l1 .9-3.2 3.8-1.1-.7z" color="#56544f"/><path d="M506.9 369l.9 1-3.4 3.6-1-.9z" color="#56544f"/><path d="M557.4 309.1l-1.2 .5-7.5 .5 1.1-.5z" color="#686660"/><path d="M628 245.2l-1.3 1.9-11.9-4 1.1-2z" color="#56544f"/><path d="M526 348.5l.7 2.2-4.8 2.4-.8-2.1z" color="#5d5a55"/><path d="M508.4 343.5l1.3 1.2-5.2 3.6-1.2-1.2z" color="#848079"/><path d="M488.4 388.6l1.9 .6-2.1 4.8-2-.5z" color="#56544f"/><path d="M481.8 392.1l2.2 .8-1.8 5.2-2.3-.6z" color="#5c5a55"/><path d="M605.9 247.8l.8 1.6-11.7-2.6-.9-1.7z" color="#7d7a73"/><path d="M518.2 357.8l.6 1.6-4.1 2.9-.8-1.5z" color="#56544f"/><path d="M479.5 391.2l2.3 .9-1.9 5.4-2.3-.8z" color="#696661"/><path d="M515 341.5l1.3 1.5-5.3 3.2-1.3-1.5z" color="#87847c"/><path d="M630.3 238.4l-.5 2.4-12.3-4.2 .4-2.4z" color="#696661"/><path d="M460 417.8l2.2-.3-.2 6.6-2.2 .5z" color="#56544f"/><path d="M522.9 342.1l1.1 2.1-5.2 2.6-1.2-2z" color="#9b988f"/><path d="M549.3 325.4l-.4 2-6.4 1 .3-2z" color="#56544f"/><path d="M568.3 305l-1 1.8-7.8-.2 .9-1.8z" color="#575550"/><path d="M629 243l-1 2.2-12.1-4.1 1-2.2z" color="#56544f"/><path d="M521.9 353.1l.7 2-4.4 2.7-.9-1.9z" color="#56544f"/><path d="M469.1 403l.8-.7-1.2 6.1-.8 .9z" color="#5b5853"/><path d="M542 330.1l-.6 1.4-6.1 1.5 .5-1.3z" color="#5b5954"/><path d="M450.6 416.9l2.3 .6-.2 7.2-2.3-.4z" color="#726f69"/><path d="M629.8 240.8l-.8 2.2-12.1-4.1 .6-2.3z" color="#56544f"/><path d="M525.1 346.3l.9 2.2-4.9 2.5-1.1-2.1z" color="#9b978f"/><path d="M446.4 406.7l1.3 1-.8 7.6-1.4-1z" color="#74716b"/><path d="M524 344.2l1.1 2.1-5.1 2.6-1.2-2.1z" color="#a6a299"/><path d="M495.6 380.1l1.5 .8-2.7 4.3-1.6-.6z" color="#56544f"/><path d="M481.3 370.3l1.3 1.1-3.3 5.4-1.3-1.1z" color="#827f78"/><path d="M478 383.5l1.9 1.2-2.5 5.5-1.9-1.1z" color="#827f78"/><path d="M547.2 311.9l.9 1.9-7.3 1.2-1-1.9z" color="#89867e"/><path d="M471.6 396.3l.4-.8-1.7 6-.4 .8z" color="#67655f"/><path d="M513.9 360.8l.8 1.5-4 3.2-1-1.4z" color="#56544f"/><path d="M568.7 289.5l.7 1.9-8.9-.2-.7-1.9z" color="#89857e"/><path d="M457.6 417.9l2.4-.1-.2 6.8-2.4 .3z" color="#575550"/><path d="M503.3 347.1l1.2 1.2-5 4-1.2-1.2z" color="#848079"/><path d="M486.3 387.8l2.1 .8-2.2 4.9-2.2-.6z" color="#56544f"/><path d="M452.9 417.5l2.3 .3-.2 7.1-2.3-.2z" color="#6a6761"/><path d="M603 266.3l-1.4 1.4-10.5-2.4 1.3-1.4z" color="#5c5a55"/><path d="M479.3 376.8l1.6 1.2-2.9 5.5-1.7-1.1z" color="#85817a"/><path d="M585.3 267l.9 1.6-10.5-1.2-.9-1.6z" color="#85817a"/><path d="M455.2 417.8l2.4 .1-.2 7-2.4 0z" color="#5e5c57"/><path d="M490.9 383.8l1.9 .8-2.5 4.6-1.9-.6z" color="#56544f"/><path d="M464.9 410.5l1.7-.5-.7 6.3-1.7 .7z" color="#56544f"/><path d="M516.3 343l1.3 1.8-5.2 3.2-1.4-1.8z" color="#8f8b84"/><path d="M535.3 333l-.7 1-5.9 1.9 .5-.9z" color="#62605a"/><path d="M498.7 375.8l1.4 .9-3 4.2-1.5-.8z" color="#56544f"/><path d="M583.6 285.8l-1.3 1.4-9.1-1.1 1.1-1.4z" color="#5c5a55"/><path d="M549.5 323.1l-.2 2.3-6.5 1 0-2.2z" color="#56544f"/><path d="M606.7 249.4l.5 1.9-11.6-2.6-.6-1.9z" color="#87847c"/><path d="M521.1 351l.8 2.1-4.6 2.8-1-2z" color="#5c5954"/><path d="M509.7 364.1l1 1.4-3.8 3.5-1.1-1.3z" color="#56544f"/><path d="M509.7 344.7l1.3 1.5-5.1 3.6-1.4-1.5z" color="#87847c"/><path d="M485.1 365.1l1.3 1.1-3.8 5.2-1.3-1.1z" color="#848079"/><path d="M479.9 384.7l2 1.1-2.4 5.4-2.1-1z" color="#817e77"/><path d="M528.7 335.9l-.8 .5-5.7 2.4 .6-.5z" color="#6a6761"/><path d="M517.3 355.9l.9 1.9-4.3 3-1.1-1.8z" color="#56544f"/><path d="M569.1 303l-.8 2-7.9-.2 .6-2z" color="#56544f"/><path d="M484.1 386.9l2.2 .9-2.3 5.1-2.2-.8z" color="#5b5954"/><path d="M498.3 351.1l1.2 1.2-4.6 4.3-1.3-1.1z" color="#848079"/><path d="M502.1 371.6l1.3 1.1-3.3 4-1.4-.9z" color="#56544f"/><path d="M505.8 367.7l1.1 1.3-3.5 3.7-1.3-1.1z" color="#56544f"/><path d="M548.1 313.8l.7 2.2-7.2 1.1-.8-2.1z" color="#8e8a82"/><path d="M537.6 310.2l1.2 1.2-7.5 1.9-1.2-1.3z" color="#838079"/><path d="M481.9 385.8l2.2 1.1-2.3 5.2-2.3-.9z" color="#716f68"/><path d="M558.6 308l-1.2 1.1-7.6 .5 1-1z" color="#62605a"/><path d="M489.2 360.2l1.2 1.1-4 4.9-1.3-1.1z" color="#848079"/><path d="M493.6 355.5l1.3 1.1-4.5 4.7-1.2-1.1z" color="#848079"/><path d="M517.6 344.8l1.2 2-5.1 3.1-1.3-1.9z" color="#a19d95"/><path d="M569.4 291.4l.5 2.2-8.8-.2-.6-2.2z" color="#8c8981"/><path d="M570.6 287.7l-1.3 .1-9.1-.2 1.2-.1z" color="#6b6863"/><path d="M520 348.9l1.1 2.1-4.8 2.9-1.3-2z" color="#9d9991"/><path d="M549.5 320.7l0 2.4-6.7 1.1-.2-2.4z" color="#5b5954"/><path d="M447.7 407.7l1.8 .9-.9 7.6-1.7-.9z" color="#74716b"/><path d="M493.8 379.1l1.8 1-2.8 4.5-1.9-.8z" color="#56544f"/><path d="M482.6 371.4l1.6 1.3-3.3 5.3-1.6-1.2z" color="#87847c"/><path d="M480.9 378l1.8 1.3-2.8 5.4-1.9-1.2z" color="#8a877f"/><path d="M609 247.7l-1.5 .1-11.9-2.7 1.4-.1z" color="#6b6963"/><path d="M542.5 328.4l-.5 1.7-6.2 1.6 .3-1.7z" color="#575550"/><path d="M518.8 346.8l1.2 2.1-5 3-1.3-2z" color="#ada99f"/><path d="M548.8 316l.5 2.3-7.1 1.2-.6-2.4z" color="#928f87"/><path d="M488.9 382.8l2 1-2.5 4.8-2.1-.8z" color="#56544f"/><path d="M604.4 264.6l-1.4 1.7-10.6-2.4 1.2-1.7z" color="#575550"/><path d="M549.3 318.3l.2 2.4-6.9 1.1-.4-2.3z" color="#8c8981"/><path d="M512.8 359l1.1 1.8-4.2 3.3-1.2-1.6z" color="#56544f"/><path d="M569.7 300.7l-.6 2.3-8.1-.2 .4-2.3z" color="#56544f"/><path d="M467.8 403.6l1.3-.6-1.2 6.3-1.3 .7z" color="#56544f"/><path d="M504.5 348.3l1.4 1.5-4.9 3.9-1.5-1.4z" color="#87847d"/><path d="M586.2 268.6l.6 2-10.4-1.3-.7-1.9z" color="#88857d"/><path d="M511 346.2l1.4 1.8-5.1 3.5-1.4-1.7z" color="#918d85"/><path d="M607.2 251.3l.3 2.1-11.6-2.6-.3-2.1z" color="#8b8780"/><path d="M516.3 353.9l1 2-4.5 3.1-1.2-1.8z" color="#5a5853"/><path d="M569.9 293.6l.2 2.3-8.7-.2-.3-2.3z" color="#8f8c84"/><path d="M462.9 410.8l2-.3-.7 6.5-2 .5z" color="#56544f"/><path d="M584.8 284.1l-1.2 1.7-9.3-1.1 1-1.8z" color="#575550"/><path d="M497.1 374.6l1.6 1.2-3.1 4.3-1.8-1z" color="#56544f"/><path d="M570 298.3l-.3 2.4-8.3-.2 .1-2.4z" color="#585651"/><path d="M446.6 418.7l.4-1.1-.2 7.7-.5 1.2z" color="#615f5a"/><path d="M482.7 379.3l2 1.2-2.8 5.3-2-1.1z" color="#8f8b84"/><path d="M486.4 366.2l1.5 1.3-3.7 5.2-1.6-1.3z" color="#87847c"/><path d="M486.8 381.7l2.1 1.1-2.6 5-2.2-.9z" color="#5f5c57"/><path d="M473.8 390.2l.3-.6-2.1 5.9-.4 .8z" color="#696660"/><path d="M470.8 396.8l.8-.5-1.7 6-.8 .7z" color="#5c5a55"/><path d="M570.1 295.9l-.1 2.4-8.5-.2-.1-2.4z" color="#817d76"/><path d="M508.5 362.5l1.2 1.6-3.9 3.6-1.3-1.4z" color="#56544f"/><path d="M499.5 352.3l1.5 1.4-4.7 4.3-1.4-1.4z" color="#88847d"/><path d="M484.7 380.5l2.1 1.2-2.7 5.2-2.2-1.1z" color="#817e77"/><path d="M500.6 370.3l1.5 1.3-3.4 4.2-1.6-1.2z" color="#56544f"/><path d="M504.5 366.3l1.3 1.4-3.7 3.9-1.5-1.3z" color="#56544f"/><path d="M605.5 262.6l-1.1 2-10.8-2.4 .9-2.1z" color="#56544f"/><path d="M512.4 348l1.3 1.9-4.9 3.4-1.5-1.8z" color="#a7a39a"/><path d="M535.8 331.7l-.5 1.3-6.1 2 .4-1.3z" color="#5b5954"/><path d="M491.9 378l1.9 1.1-2.9 4.7-2-1z" color="#56544f"/><path d="M484.2 372.7l1.8 1.3-3.3 5.3-1.8-1.3z" color="#8d8a82"/><path d="M515 351.9l1.3 2-4.7 3.3-1.4-2z" color="#9d9991"/><path d="M538.8 311.4l1 1.7-7.4 1.8-1.1-1.6z" color="#86837c"/><path d="M490.4 361.3l1.6 1.4-4.1 4.8-1.5-1.3z" color="#87847d"/><path d="M449.5 408.6l2 .8-.9 7.5-2-.7z" color="#74716b"/><path d="M494.9 356.6l1.4 1.4-4.3 4.7-1.6-1.4z" color="#88847d"/><path d="M607.5 253.4l-.1 2.3-11.4-2.5-.1-2.4z" color="#89857e"/><path d="M588.3 266.9l-1.4 .1-10.6-1.3 1.3-.1z" color="#6b6863"/><path d="M557.7 286.4l1.1 1.2-9.2 .7-1.1-1.3z" color="#838079"/><path d="M513.7 349.9l1.3 2-4.8 3.3-1.4-1.9z" color="#b3afa5"/><path d="M511.6 357.2l1.2 1.8-4.3 3.5-1.3-1.7z" color="#595752"/><path d="M505.9 349.8l1.4 1.7-4.8 3.9-1.5-1.7z" color="#928f87"/><path d="M522.8 338.3l-.6 .5-5.6 2.8 .5-.3z" color="#6a6762"/><path d="M586.8 270.6l.3 2.1-10.2-1.2-.5-2.2z" color="#8c8880"/><path d="M559.5 306.6l-.9 1.4-7.8 .6 .8-1.5z" color="#5c5954"/><path d="M542.8 326.4l-.3 2-6.4 1.6 .1-2z" color="#56544f"/><path d="M529.2 335l-.5 .9-5.9 2.4 .5-.8z" color="#62605a"/><path d="M585.8 282l-1 2.1-9.5-1.2 .8-2z" color="#56544f"/><path d="M460.7 410.9l2.2-.1-.7 6.7-2.2 .3z" color="#56544f"/><path d="M606.4 260.4l-.9 2.2-11-2.5 .8-2.2z" color="#56544f"/><path d="M571.9 287.1l-1.3 .6-9.2-.2 1.2-.6z" color="#686660"/><path d="M495.3 373.3l1.8 1.3-3.3 4.5-1.9-1.1z" color="#56544f"/><path d="M489.9 376.7l2 1.3-3 4.8-2.1-1.1z" color="#67655f"/><path d="M607.4 255.7l-.4 2.4-11.2-2.5 .2-2.4z" color="#716f68"/><path d="M486 374l1.9 1.4-3.2 5.1-2-1.2z" color="#9b978f"/><path d="M610.5 247.1l-1.5 .6-12-2.7 1.5-.6z" color="#696660"/><path d="M487.9 367.5l1.7 1.5-3.6 5-1.8-1.3z" color="#8f8c84"/><path d="M607 258.1l-.6 2.3-11.1-2.5 .5-2.3z" color="#56544f"/><path d="M507.2 360.8l1.3 1.7-4 3.8-1.6-1.6z" color="#575550"/><path d="M447.9 399l1.3 1-1.5 7.7-1.3-1z" color="#74716b"/><path d="M549.8 309.6l-1.1 .5-7.7 1.2 1-.5z" color="#686660"/><path d="M487.9 375.4l2 1.3-3.1 5-2.1-1.2z" color="#949188"/><path d="M501 353.7l1.5 1.7-4.6 4.2-1.6-1.6z" color="#938f87"/><path d="M510.2 355.2l1.4 2-4.4 3.6-1.5-1.8z" color="#9a978e"/><path d="M466.2 403.9l1.6-.3-1.2 6.4-1.7 .5z" color="#56544f"/><path d="M507.3 351.5l1.5 1.8-4.7 3.8-1.6-1.7z" color="#aba79d"/><path d="M451.5 409.4l2.2 .7-.8 7.4-2.3-.6z" color="#726f69"/><path d="M499 368.9l1.6 1.4-3.5 4.3-1.8-1.3z" color="#56544f"/><path d="M502.9 364.7l1.6 1.6-3.9 4-1.6-1.4z" color="#56544f"/><path d="M587.1 272.7l.1 2.4-10.1-1.3-.2-2.3z" color="#8e8b83"/><path d="M492 362.7l1.6 1.4-4 4.9-1.7-1.5z" color="#918d85"/><path d="M508.8 353.3l1.4 1.9-4.5 3.8-1.6-1.9z" color="#b8b3a9"/><path d="M496.3 358l1.6 1.6-4.3 4.5-1.6-1.4z" color="#928f87"/><path d="M586.5 279.8l-.7 2.2-9.7-1.1 .6-2.3z" color="#56544f"/><path d="M458.4 410.9l2.3 0-.7 6.9-2.4 .1z" color="#575550"/><path d="M615.3 225l1 1.3-13.4-3.1-1.1-1.2z" color="#6b6862"/><path d="M539.8 313.1l1 1.9-7.4 1.8-1-1.9z" color="#8a867f"/><path d="M493.4 371.9l1.9 1.4-3.4 4.7-2-1.3z" color="#73706a"/><path d="M489.6 369l1.9 1.4-3.6 5-1.9-1.4z" color="#a19d95"/><path d="M453.7 410.1l2.3 .5-.8 7.2-2.3-.3z" color="#696761"/><path d="M542.8 324.2l0 2.2-6.6 1.6-.2-2.2z" color="#56544f"/><path d="M505.7 359l1.5 1.8-4.3 3.9-1.6-1.7z" color="#949189"/><path d="M476.4 384.3l.3-.5-2.6 5.8-.3 .6z" color="#6a6761"/><path d="M587.2 275.1l-.2 2.3-10-1.2 .1-2.4z" color="#797670"/><path d="M587 277.4l-.5 2.4-9.8-1.2 .3-2.4z" color="#575550"/><path d="M456 410.6l2.4 .3-.8 7-2.4-.1z" color="#5e5c56"/><path d="M502.5 355.4l1.6 1.7-4.5 4.2-1.7-1.7z" color="#aca89f"/><path d="M445.7 419.7l.9-1-.3 7.8-.9 1.1z" color="#585651"/><path d="M491.5 370.4l1.9 1.5-3.5 4.8-2-1.3z" color="#a7a39a"/><path d="M469.6 397.2l1.2-.4-1.7 6.2-1.3 .6z" color="#56544f"/><path d="M497.2 367.3l1.8 1.6-3.7 4.4-1.9-1.4z" color="#7f7c75"/><path d="M504.1 357.1l1.6 1.9-4.4 4-1.7-1.7z" color="#b9b4aa"/><path d="M501.3 363l1.6 1.7-3.9 4.2-1.8-1.6z" color="#8b8880"/><path d="M536.1 330l-.3 1.7-6.2 2 .1-1.6z" color="#575450"/><path d="M558.8 287.6l1 1.7-9.2 .6-1-1.6z" color="#86837b"/><path d="M493.6 364.1l1.8 1.6-3.9 4.7-1.9-1.4z" color="#a7a39a"/><path d="M497.9 359.6l1.7 1.7-4.2 4.4-1.8-1.6z" color="#aba79d"/><path d="M473 390.6l.8-.4-2.2 6.1-.8 .5z" color="#5d5b56"/><path d="M530.1 312l1.2 1.3-7.5 2.4-1.2-1.2z" color="#848079"/><path d="M560.4 304.8l-.9 1.8-7.9 .5 .7-1.7z" color="#575550"/><path d="M495.4 365.7l1.8 1.6-3.8 4.6-1.9-1.5z" color="#b3afa5"/><path d="M517.1 341.3l-.5 .3-5.6 3.3 .5-.3z" color="#6b6862"/><path d="M499.6 361.3l1.7 1.7-4.1 4.3-1.8-1.6z" color="#b8b3a9"/><path d="M589.7 266.3l-1.4 .6-10.7-1.3 1.4-.6z" color="#686660"/><path d="M540.8 315l.8 2.1-7.3 1.8-.9-2.1z" color="#8f8c84"/><path d="M542.6 321.8l.2 2.4-6.8 1.6-.3-2.3z" color="#5c5a55"/><path d="M449.2 400l1.7 1-1.4 7.6-1.8-.9z" color="#74716b"/><path d="M612 246.2l-1.5 .9-12-2.7 1.4-1z" color="#63615b"/><path d="M464.2 404.1l2-.2-1.3 6.6-2 .3z" color="#56544f"/><path d="M529.6 333.7l-.4 1.3-5.9 2.5 .1-1.2z" color="#5b5954"/><path d="M523.3 337.5l-.5 .8-5.7 3 .3-.8z" color="#62605a"/><path d="M573.2 286.1l-1.3 1-9.3-.2 1.2-1z" color="#63605b"/><path d="M541.6 317.1l.6 2.4-7.1 1.7-.8-2.3z" color="#959289"/><path d="M542.2 319.5l.4 2.3-6.9 1.7-.6-2.3z" color="#918d85"/><path d="M616.3 226.3l.8 1.6-13.4-3-.8-1.7z" color="#7d7a73"/><path d="M550.8 308.6l-1 1-7.8 1.2 .9-1z" color="#62605a"/><path d="M479.5 378.4l.2-.3-3 5.7-.3 .5z" color="#6b6862"/><path d="M559.8 289.3l.7 1.9-9 .6-.9-1.9z" color="#89867e"/><path d="M561 302.8l-.6 2-8.1 .6 .4-2.1z" color="#56544f"/><path d="M573.8 264.5l1 1.3-10.8-.3-1.1-1.3z" color="#7e7b74"/><path d="M536.2 328l-.1 2-6.4 2.1-.1-1.9z" color="#56544f"/><path d="M511.5 344.6l-.5 .3-5.3 3.8 .3-.3z" color="#6b6963"/><path d="M531.3 313.3l1.1 1.6-7.5 2.4-1.1-1.6z" color="#87837c"/><path d="M444.3 420.6l1.4-.9-.3 7.9-1.3 1.1z" color="#56544f"/><path d="M468 397.3l1.6-.1-1.8 6.4-1.6 .3z" color="#56544f"/><path d="M450.9 401l2 .9-1.4 7.5-2-.8z" color="#74716b"/><path d="M447.4 410.8l.5-1-.9 7.8-.4 1.1z" color="#63615b"/><path d="M593 243.9l1.1 1.2-12.2-1.5-1.1-1.2z" color="#75726b"/><path d="M462.1 404l2.1 .1-1.3 6.7-2.2 .1z" color="#56544f"/><path d="M475.7 384.5l.7-.2-2.6 5.9-.8 .4z" color="#5e5c57"/><path d="M424 418.6l1.4 1-.3 9.4-1.3-1z" color="#74716b"/><path d="M591.1 265.3l-1.4 1-10.7-1.3 1.2-1z" color="#63605b"/><path d="M613.5 244.8l-1.5 1.4-12.1-2.8 1.3-1.4z" color="#5c5a55"/><path d="M471.9 390.8l1.1-.2-2.2 6.2-1.2 .4z" color="#575550"/><path d="M450 391.2l1.4 1.1-2.2 7.7-1.3-1z" color="#74716b"/><path d="M560.5 291.2l.6 2.2-8.9 .6-.7-2.2z" color="#8d8981"/><path d="M561.4 300.5l-.4 2.3-8.3 .5 .2-2.2z" color="#56544f"/><path d="M574.3 284.7l-1.1 1.4-9.4-.2 1-1.4z" color="#5c5a55"/><path d="M561.4 287.5l-1.2 .1-9.3 .6 1.1-.1z" color="#6b6963"/><path d="M517.4 340.5l-.3 .8-5.6 3.3 .1-.7z" color="#62605a"/><path d="M617.1 227.9l.6 1.9-13.4-3-.6-1.9z" color="#87847c"/><path d="M529.7 332.1l-.1 1.6-6.2 2.6 0-1.6z" color="#575450"/><path d="M452.9 401.9l2.2 .8-1.4 7.4-2.2-.7z" color="#726f69"/><path d="M459.8 403.7l2.3 .3-1.4 6.9-2.3 0z" color="#575550"/><path d="M536 325.8l.2 2.2-6.6 2.2-.3-2.2z" color="#56544f"/><path d="M532.4 314.9l1 1.9-7.3 2.4-1.2-1.9z" color="#8b877f"/><path d="M523.4 336.3l-.1 1.2-5.9 3 0-1.2z" color="#5b5853"/><path d="M561.1 293.4l.3 2.3-8.8 .6-.4-2.3z" color="#908d85"/><path d="M561.5 298.1l-.1 2.4-8.5 .6 0-2.4z" color="#595752"/><path d="M551.6 307.1l-.8 1.5-7.9 1.2 .6-1.4z" color="#5b5954"/><path d="M542 310.8l-1 .5-7.6 1.9 .8-.5z" color="#696660"/><path d="M574.8 265.8l.9 1.6-10.7-.3-1-1.6z" color="#86827b"/><path d="M455.1 402.7l2.3 .6-1.4 7.3-2.3-.5z" color="#696661"/><path d="M457.4 403.3l2.4 .4-1.4 7.2-2.4-.3z" color="#5d5b56"/><path d="M561.4 295.7l.1 2.4-8.6 .6-.3-2.4z" color="#87837c"/><path d="M522.6 314.5l1.2 1.2-7.5 3.1-1.1-1.2z" color="#848079"/><path d="M442.7 421.3l1.6-.7-.2 8.1-1.7 .8z" color="#56544f"/><path d="M614.8 243.1l-1.3 1.7-12.3-2.8 1.1-1.7z" color="#575550"/><path d="M466.1 397.3l1.9 0-1.8 6.6-2 .2z" color="#56544f"/><path d="M594.1 245.1l.9 1.7-12.2-1.5-.9-1.7z" color="#85817a"/><path d="M478.9 378.5l.6-.1-3.1 5.9-.7 .2z" color="#5f5d58"/><path d="M548.5 287l1.1 1.3-9.3 1.4-1.2-1.2z" color="#838079"/><path d="M425.4 419.6l1.7 .9-.3 9.3-1.7-.8z" color="#74716b"/><path d="M535.7 323.5l.3 2.3-6.7 2.2-.6-2.2z" color="#5d5a55"/><path d="M533.4 316.8l.9 2.1-7.2 2.4-1-2.1z" color="#928e86"/><path d="M592.4 263.9l-1.3 1.4-10.9-1.3 1.2-1.4z" color="#5c5a55"/><path d="M617.7 229.8l.2 2.1-13.2-2.9-.4-2.2z" color="#8b8780"/><path d="M451.4 392.3l1.7 1-2.2 7.7-1.7-1z" color="#74716b"/><path d="M446.6 411.6l.8-.8-.8 7.9-.9 1z" color="#595752"/><path d="M575.3 282.9l-1 1.8-9.5-.2 .8-1.8z" color="#575550"/><path d="M511.6 343.9l-.1 .7-5.5 3.8 0-.6z" color="#62605a"/><path d="M535.1 321.2l.6 2.3-7 2.3-.7-2.3z" color="#959189"/><path d="M534.3 318.9l.8 2.3-7.1 2.3-.9-2.2z" color="#9a968d"/><path d="M470.3 390.8l1.6 0-2.3 6.4-1.6 .1z" color="#56544f"/><path d="M474.6 384.5l1.1 0-2.7 6.1-1.1 .2z" color="#575550"/><path d="M529.6 330.2l.1 1.9-6.3 2.6-.3-1.8z" color="#56544f"/><path d="M615.9 241.1l-1.1 2-12.5-2.8 1-2z" color="#56544f"/><path d="M575.7 267.4l.7 1.9-10.6-.2-.8-2z" color="#89857e"/><path d="M562.6 286.9l-1.2 .6-9.4 .6 1.1-.6z" color="#686660"/><path d="M617.9 231.9l0 2.3-13.1-2.9-.1-2.3z" color="#89857e"/><path d="M440.7 421.8l2-.5-.3 8.2-2 .7z" color="#56544f"/><path d="M552.3 305.4l-.7 1.7-8.1 1.3 .5-1.7z" color="#575550"/><path d="M523.8 315.7l1.1 1.6-7.3 3.1-1.3-1.6z" color="#87837c"/><path d="M464 397.1l2.1 .2-1.9 6.8-2.1-.1z" color="#56544f"/><path d="M517.4 339.3l0 1.2-5.8 3.4-.1-1z" color="#5a5853"/><path d="M482.5 372.7l.5 .1-3.5 5.6-.6 .1z" color="#605e58"/><path d="M523.4 334.7l0 1.6-6 3-.2-1.4z" color="#56544f"/><path d="M427.1 420.5l2 .7-.2 9.3-2.1-.7z" color="#74716b"/><path d="M595 246.8l.6 1.9-12.1-1.5-.7-1.9z" color="#88857d"/><path d="M616.9 238.9l-1 2.2-12.6-2.8 .8-2.3z" color="#56544f"/><path d="M453.1 393.3l1.9 1-2.1 7.6-2-.9z" color="#74716b"/><path d="M506 347.8l0 .6-5.2 4.2-.1-.5z" color="#62605a"/><path d="M593.6 262.2l-1.2 1.7-11-1.3 1-1.8z" color="#575550"/><path d="M452.8 383.6l1.3 1-2.7 7.7-1.4-1.1z" color="#75726c"/><path d="M617.9 234.2l-.4 2.4-13-2.9 .3-2.4z" color="#716f68"/><path d="M576.1 280.9l-.8 2-9.7-.2 .6-2.1z" color="#56544f"/><path d="M542.9 309.8l-.9 1-7.8 1.9 .7-1z" color="#62605a"/><path d="M549.6 288.3l1 1.6-9.3 1.4-1-1.6z" color="#86837b"/><path d="M617.5 236.6l-.6 2.3-12.8-2.9 .4-2.3z" color="#56544f"/><path d="M576.4 269.3l.5 2.2-10.6-.3-.5-2.1z" color="#8c8981"/><path d="M577.6 265.6l-1.3 .1-10.9-.3 1.2-.1z" color="#6b6863"/><path d="M449 402.8l.4-.8-1.5 7.8-.5 1z" color="#65635d"/><path d="M529.3 328l.3 2.2-6.5 2.7-.5-2.1z" color="#56544f"/><path d="M486.5 367.2l.5 .1-4 5.5-.5-.1z" color="#615e59"/><path d="M461.8 396.6l2.2 .5-1.9 6.9-2.3-.3z" color="#575450"/><path d="M438.5 422.1l2.2-.3-.3 8.4-2.2 .5z" color="#56544f"/><path d="M500.7 352.1l.1 .5-4.9 4.6-.2-.4z" color="#62605a"/><path d="M477.9 378.4l1 .1-3.2 6-1.1 0z" color="#575550"/><path d="M455 394.3l2.2 .9-2.1 7.5-2.2-.8z" color="#726f69"/><path d="M597 245l-1.4 .1-12.3-1.5 1.3-.1z" color="#6b6863"/><path d="M429.1 421.2l2.2 .6-.2 9.1-2.2-.4z" color="#726f69"/><path d="M445.3 412.3l1.3-.7-.9 8.1-1.4 .9z" color="#56544f"/><path d="M468.5 390.6l1.8 .2-2.3 6.5-1.9 0z" color="#56544f"/><path d="M515.2 317.6l1.1 1.2-7.3 3.7-1.2-1.2z" color="#848079"/><path d="M524.9 317.3l1.2 1.9-7.3 3-1.2-1.8z" color="#8c8880"/><path d="M576.7 278.6l-.6 2.3-9.9-.3 .4-2.2z" color="#56544f"/><path d="M490.9 361.8l.4 .3-4.3 5.2-.5-.1z" color="#615f5a"/><path d="M595.6 248.7l.3 2.1-12-1.4-.4-2.2z" color="#8c8880"/><path d="M552.7 303.3l-.4 2.1-8.3 1.3 .3-2.1z" color="#56544f"/><path d="M495.7 356.8l.2 .4-4.6 4.9-.4-.3z" color="#625f5a"/><path d="M459.5 396l2.3 .6-2 7.1-2.4-.4z" color="#5d5a55"/><path d="M594.5 260.1l-.9 2.1-11.2-1.4 .8-2z" color="#56544f"/><path d="M457.2 395.2l2.3 .8-2.1 7.3-2.3-.6z" color="#686660"/><path d="M473.2 384.4l1.4 .1-2.7 6.3-1.6 0z" color="#56544f"/><path d="M576.9 271.5l.2 2.3-10.4-.2-.4-2.4z" color="#8f8c84"/><path d="M511.5 342.9l.1 1-5.6 3.9-.2-.9z" color="#5a5853"/><path d="M436.1 422.2l2.4-.1-.3 8.6-2.3 .3z" color="#575550"/><path d="M431.3 421.8l2.4 .3-.2 9-2.4-.2z" color="#6a6761"/><path d="M577 276.2l-.3 2.4-10.1-.2 .2-2.4z" color="#585651"/><path d="M550.6 289.9l.9 1.9-9.2 1.4-1-1.9z" color="#89867e"/><path d="M528.7 325.8l.6 2.2-6.7 2.8-.7-2.1z" color="#5d5b55"/><path d="M577.1 273.8l-.1 2.4-10.2-.2-.1-2.4z" color="#817d76"/><path d="M563.8 285.9l-1.2 1-9.5 .6 1-1z" color="#62605a"/><path d="M523.1 332.9l.3 1.8-6.2 3.2-.5-1.8z" color="#56544f"/><path d="M433.7 422.1l2.4 .1-.2 8.8-2.4 .1z" color="#5e5c57"/><path d="M534.2 312.7l-.8 .5-7.7 2.5 .7-.5z" color="#696661"/><path d="M454.1 384.6l1.7 1.1-2.7 7.6-1.7-1z" color="#78756e"/><path d="M526.1 319.2l1 2.1-7.2 3-1.1-2.1z" color="#96928a"/><path d="M517.2 337.9l.2 1.4-5.9 3.6-.4-1.4z" color="#56544f"/><path d="M595.9 250.8l.1 2.4-11.9-1.5-.2-2.3z" color="#8e8b83"/><path d="M595.3 257.9l-.8 2.2-11.3-1.3 .5-2.3z" color="#56544f"/><path d="M425.1 409.1l1.3 1-1 9.5-1.4-1z" color="#74716b"/><path d="M528 323.5l.7 2.3-6.8 2.9-.9-2.2z" color="#98948c"/><path d="M481.6 372.5l.9 .2-3.6 5.8-1-.1z" color="#585651"/><path d="M527.1 321.3l.9 2.2-7 3-1.1-2.2z" color="#9f9b93"/><path d="M543.5 308.4l-.6 1.4-8 1.9 .5-1.3z" color="#5b5954"/><path d="M552.9 301.1l-.2 2.2-8.4 1.3 0-2.2z" color="#56544f"/><path d="M596 253.2l-.2 2.4-11.7-1.5 0-2.4z" color="#797670"/><path d="M466.5 390.1l2 .5-2.4 6.7-2.1-.2z" color="#56544f"/><path d="M595.8 255.6l-.5 2.3-11.6-1.4 .4-2.4z" color="#575550"/><path d="M505.8 346.9l.2 .9-5.3 4.3-.4-.8z" color="#5a5853"/><path d="M551.5 291.8l.7 2.2-9.1 1.4-.8-2.2z" color="#8e8a82"/><path d="M516.3 318.8l1.3 1.6-7.3 3.7-1.3-1.6z" color="#87847c"/><path d="M456.2 376l1.3 1.1-3.4 7.5-1.3-1z" color="#79766f"/><path d="M579 265l-1.4 .6-11-.3 1.3-.6z" color="#686660"/><path d="M443.6 412.9l1.7-.6-1 8.3-1.6 .7z" color="#56544f"/><path d="M448.1 403.5l.9-.7-1.6 8-.8 .8z" color="#5b5853"/><path d="M598.5 244.4l-1.5 .6-12.4-1.5 1.4-.6z" color="#686660"/><path d="M455.8 385.7l1.9 1.1-2.7 7.5-1.9-1z" color="#7a7770"/><path d="M552.9 298.7l0 2.4-8.6 1.3-.2-2.3z" color="#5b5954"/><path d="M476.5 378l1.4 .4-3.3 6.1-1.4-.1z" color="#56544f"/><path d="M485.7 366.7l.8 .5-4 5.5-.9-.2z" color="#585651"/><path d="M522.6 330.8l.5 2.1-6.4 3.2-.7-1.9z" color="#56544f"/><path d="M471.5 383.9l1.7 .5-2.9 6.4-1.8-.2z" color="#56544f"/><path d="M552.2 294l.4 2.3-8.9 1.4-.6-2.3z" color="#928f87"/><path d="M500.3 351.3l.4 .8-5 4.7-.6-.7z" color="#5a5752"/><path d="M552.6 296.3l.3 2.4-8.8 1.4-.4-2.4z" color="#8c8981"/><path d="M507.8 321.3l1.2 1.2-7.1 4.3-1.2-1.2z" color="#848079"/><path d="M562.9 264.2l1.1 1.3-11 .7-1.1-1.2z" color="#838079"/><path d="M464.3 389.5l2.2 .6-2.5 7-2.2-.5z" color="#56544f"/><path d="M511.1 341.5l.4 1.4-5.7 4-.6-1.3z" color="#56544f"/><path d="M425 423l.5-1.1-.3 9.6-.4 1.2z" color="#615f5a"/><path d="M490.2 361.3l.7 .5-4.4 5.4-.8-.5z" color="#595752"/><path d="M564.8 284.5l-1 1.4-9.7 .6 .9-1.4z" color="#5c5954"/><path d="M495.1 356.1l.6 .7-4.8 5-.7-.5z" color="#595752"/><path d="M539.1 288.5l1.2 1.2-9.4 2.3-1.2-1.2z" color="#838079"/><path d="M516.7 336.1l.5 1.8-6.1 3.6-.7-1.6z" color="#56544f"/><path d="M426.4 410.1l1.8 .9-1.1 9.5-1.7-.9z" color="#74716b"/><path d="M457.7 386.8l2.1 1-2.6 7.4-2.2-.9z" color="#77746d"/><path d="M517.6 320.4l1.2 1.8-7.2 3.7-1.3-1.8z" color="#8d8a82"/><path d="M462.1 388.7l2.2 .8-2.5 7.1-2.3-.6z" color="#5c5a55"/><path d="M534.9 311.7l-.7 1-7.8 2.5 .6-.9z" color="#62605a"/><path d="M451.2 394.8l.4-.7-2.2 7.9-.4 .8z" color="#67655f"/><path d="M544 306.7l-.5 1.7-8.1 2 .3-1.7z" color="#575550"/><path d="M459.8 387.8l2.3 .9-2.6 7.3-2.3-.8z" color="#696661"/><path d="M521.9 328.7l.7 2.1-6.6 3.4-.9-2.1z" color="#5d5a55"/><path d="M457.5 377.1l1.6 1.1-3.3 7.5-1.7-1.1z" color="#7f7b74"/><path d="M441.6 413.2l2-.3-.9 8.4-2 .5z" color="#56544f"/><path d="M480.4 371.9l1.2 .6-3.7 5.9-1.4-.4z" color="#56544f"/><path d="M518.8 322.2l1.1 2.1-7 3.6-1.3-2z" color="#9b988f"/><path d="M601.8 222l1.1 1.2-14-1.7-1.1-1.2z" color="#75726b"/><path d="M469.5 383.3l2 .6-3 6.7-2-.5z" color="#56544f"/><path d="M580.2 264l-1.2 1-11.1-.3 1.1-1z" color="#63605b"/><path d="M505.2 345.6l.6 1.3-5.5 4.4-.7-1.1z" color="#56544f"/><path d="M460.1 368.6l1.3 1.1-3.9 7.4-1.3-1.1z" color="#7e7b74"/><path d="M521 326.5l.9 2.2-6.8 3.4-1-2.1z" color="#9b978f"/><path d="M599.9 243.4l-1.4 1-12.5-1.5 1.2-1z" color="#63605b"/><path d="M474.9 377.4l1.6 .6-3.3 6.4-1.7-.5z" color="#56544f"/><path d="M519.9 324.3l1.1 2.2-6.9 3.5-1.2-2.1z" color="#a6a299"/><path d="M509 322.5l1.3 1.6-7.1 4.2-1.3-1.5z" color="#87847c"/><path d="M446.9 404l1.2-.5-1.5 8.1-1.3 .7z" color="#56544f"/><path d="M564 265.5l1 1.6-11 .8-1-1.7z" color="#86837b"/><path d="M428.2 411l2 .8-1.1 9.4-2-.7z" color="#74716b"/><path d="M526.4 315.2l-.7 .5-7.6 3.2 .6-.4z" color="#6a6761"/><path d="M553.1 287.5l-1.1 .6-9.5 1.5 1-.6z" color="#686660"/><path d="M565.6 282.7l-.8 1.8-9.8 .6 .6-1.7z" color="#575550"/><path d="M516 334.2l.7 1.9-6.3 3.8-.8-1.9z" color="#56544f"/><path d="M500.7 325.6l1.2 1.2-6.9 4.8-1.2-1.2z" color="#848079"/><path d="M484.6 366l1.1 .7-4.1 5.8-1.2-.6z" color="#56544f"/><path d="M540.3 289.7l1 1.6-9.3 2.3-1.1-1.6z" color="#86837c"/><path d="M510.4 339.9l.7 1.6-5.9 4.1-.8-1.5z" color="#56544f"/><path d="M459.1 378.2l1.9 1.2-3.3 7.4-1.9-1.1z" color="#827f78"/><path d="M580.8 242.4l1.1 1.2-12.7-.3-1-1.2z" color="#7e7b74"/><path d="M499.6 350.2l.7 1.1-5.2 4.8-.8-1z" color="#56544f"/><path d="M439.4 413.3l2.2-.1-.9 8.6-2.2 .3z" color="#56544f"/><path d="M424.1 424l.9-1-.2 9.7-.9 1.1z" color="#585651"/><path d="M544.3 304.6l-.3 2.1-8.3 2 .1-2z" color="#56544f"/><path d="M467.4 382.5l2.1 .8-3 6.8-2.2-.6z" color="#56544f"/><path d="M489.2 360.4l1 .9-4.5 5.4-1.1-.7z" color="#56544f"/><path d="M494.3 355.1l.8 1-4.9 5.2-1-.9z" color="#56544f"/><path d="M430.2 411.8l2.2 .7-1.1 9.3-2.2-.6z" color="#726f69"/><path d="M510.3 324.1l1.3 1.8-7 4.2-1.4-1.8z" color="#8f8b84"/><path d="M535.4 310.4l-.5 1.3-7.9 2.6 .3-1.3z" color="#5b5954"/><path d="M461 379.4l2.1 1.1-3.3 7.3-2.1-1z" color="#817e77"/><path d="M437.1 413.2l2.3 .1-.9 8.8-2.4 .1z" color="#575550"/><path d="M478.8 371.1l1.6 .8-3.9 6.1-1.6-.6z" color="#56544f"/><path d="M464.6 361.4l1.3 1.1-4.5 7.2-1.3-1.1z" color="#827f78"/><path d="M461.4 369.7l1.6 1.2-3.9 7.3-1.6-1.1z" color="#85817a"/><path d="M515.1 332.1l.9 2.1-6.4 3.8-1.1-2z" color="#5c5954"/><path d="M602.9 223.2l.8 1.7-13.9-1.7-.9-1.7z" color="#85817a"/><path d="M465.2 381.6l2.2 .9-3.1 7-2.2-.8z" color="#5b5954"/><path d="M450.4 395.3l.8-.5-2.2 8-.9 .7z" color="#5c5a55"/><path d="M473.1 376.6l1.8 .8-3.4 6.5-2-.6z" color="#56544f"/><path d="M565 267.1l.8 2-10.9 .7-.9-1.9z" color="#89867e"/><path d="M581.4 262.6l-1.2 1.4-11.2-.3 1-1.4z" color="#5c5a55"/><path d="M463.1 380.5l2.1 1.1-3.1 7.1-2.3-.9z" color="#716f68"/><path d="M432.4 412.5l2.3 .5-1 9.1-2.4-.3z" color="#696761"/><path d="M601.2 242l-1.3 1.4-12.7-1.5 1.2-1.4z" color="#5c5a55"/><path d="M566.2 280.6l-.6 2.1-10 .7 .5-2.1z" color="#56544f"/><path d="M541.3 291.3l1 1.9-9.3 2.3-1-1.9z" color="#8a867f"/><path d="M504.4 344.1l.8 1.5-5.6 4.6-1-1.4z" color="#56544f"/><path d="M434.7 413l2.4 .2-1 9-2.4-.1z" color="#5e5c56"/><path d="M493.8 330.4l1.2 1.2-6.6 5.4-1.2-1.2z" color="#848079"/><path d="M427 399.4l1.3 1.1-1.9 9.6-1.3-1z" color="#74716b"/><path d="M501.9 326.8l1.3 1.5-6.8 4.8-1.4-1.5z" color="#87847c"/><path d="M544.3 302.4l0 2.2-8.5 2.1-.1-2.2z" color="#56544f"/><path d="M511.6 325.9l1.3 2-6.9 4.1-1.4-1.9z" color="#a19d95"/><path d="M445.2 404.4l1.7-.4-1.6 8.3-1.7 .6z" color="#56544f"/><path d="M509.6 338l.8 1.9-6 4.2-1-1.7z" color="#56544f"/><path d="M514.1 330l1 2.1-6.6 3.9-1.2-2z" color="#9d9991"/><path d="M454.1 386.8l.3-.6-2.8 7.9-.4 .7z" color="#696660"/><path d="M581.9 243.6l.9 1.7-12.6-.3-1-1.7z" color="#86827b"/><path d="M512.9 327.9l1.2 2.1-6.8 4-1.3-2z" color="#ada99f"/><path d="M483.2 365.1l1.4 .9-4.2 5.9-1.6-.8z" color="#56544f"/><path d="M554.1 286.5l-1 1-9.6 1.5 .9-.9z" color="#62605a"/><path d="M469.5 354.4l1.3 1.2-4.9 6.9-1.3-1.1z" color="#848079"/><path d="M498.6 348.8l1 1.4-5.3 4.9-1.2-1.3z" color="#56544f"/><path d="M527 314.3l-.6 .9-7.7 3.3 .4-.9z" color="#62605a"/><path d="M463 370.9l1.9 1.2-3.9 7.3-1.9-1.2z" color="#8a877f"/><path d="M565.8 269.1l.5 2.1-10.8 .8-.6-2.2z" color="#8d8981"/><path d="M542.3 293.2l.8 2.2-9.1 2.2-1-2.1z" color="#8f8c84"/><path d="M422.8 424.9l1.3-.9-.2 9.8-1.3 1z" color="#56544f"/><path d="M566.6 278.4l-.4 2.2-10.1 .7 .2-2.2z" color="#56544f"/><path d="M471 375.7l2.1 .9-3.6 6.7-2.1-.8z" color="#56544f"/><path d="M487.2 335.8l1.2 1.2-6.2 5.8-1.3-1.2z" color="#848079"/><path d="M544.1 300.1l.2 2.3-8.6 2.1-.4-2.3z" color="#5c5a55"/><path d="M488 359.3l1.2 1.1-4.6 5.6-1.4-.9z" color="#56544f"/><path d="M566.6 265.3l-1.2 .1-11.2 .8 1.2-.1z" color="#6b6963"/><path d="M493.1 353.8l1.2 1.3-5.1 5.3-1.2-1.1z" color="#56544f"/><path d="M603.7 224.9l.6 1.9-13.8-1.7-.7-1.9z" color="#88857d"/><path d="M477.1 370.2l1.7 .9-3.9 6.3-1.8-.8z" color="#56544f"/><path d="M465.9 362.5l1.6 1.2-4.5 7.2-1.6-1.2z" color="#87847c"/><path d="M475 347.8l1.3 1.2-5.5 6.6-1.3-1.2z" color="#848079"/><path d="M402.5 422.9l1.4 1-.3 11.3-1.4-1z" color="#74716b"/><path d="M602.3 240.3l-1.1 1.7-12.8-1.5 1-1.8z" color="#575550"/><path d="M518.7 318.5l-.6 .4-7.5 3.8 .5-.4z" color="#6a6762"/><path d="M543.1 295.4l.6 2.3-9 2.2-.7-2.3z" color="#959289"/><path d="M503.2 328.3l1.4 1.8-6.7 4.7-1.5-1.7z" color="#918d85"/><path d="M480.9 341.6l1.3 1.2-5.9 6.2-1.3-1.2z" color="#848079"/><path d="M582.4 260.8l-1 1.8-11.4-.3 .8-1.8z" color="#575550"/><path d="M543.7 297.7l.4 2.4-8.8 2.1-.6-2.3z" color="#918d85"/><path d="M508.5 336l1.1 2-6.2 4.4-1.2-1.9z" color="#5a5853"/><path d="M535.7 308.7l-.3 1.7-8.1 2.6 .2-1.6z" color="#575450"/><path d="M566.3 271.2l.4 2.4-10.7 .7-.5-2.3z" color="#908d85"/><path d="M566.8 276l-.2 2.4-10.3 .7 0-2.4z" color="#595752"/><path d="M503.4 342.4l1 1.7-5.8 4.7-1.2-1.6z" color="#56544f"/><path d="M529.7 290.8l1.2 1.2-9.4 3.1-1.2-1.3z" color="#848079"/><path d="M464.9 372.1l2 1.3-3.8 7.1-2.1-1.1z" color="#8f8b84"/><path d="M495 331.6l1.4 1.5-6.5 5.3-1.5-1.4z" color="#87847d"/><path d="M469 374.6l2 1.1-3.6 6.8-2.2-.9z" color="#5f5c57"/><path d="M566.7 273.6l.1 2.4-10.5 .7-.3-2.4z" color="#87837c"/><path d="M428.3 400.5l1.7 .9-1.8 9.6-1.8-.9z" color="#74716b"/><path d="M466.9 373.4l2.1 1.2-3.8 7-2.1-1.1z" color="#817e77"/><path d="M443.3 404.5l1.9-.1-1.6 8.5-2 .3z" color="#56544f"/><path d="M582.8 245.3l.7 1.9-12.5-.3-.8-1.9z" color="#89857e"/><path d="M449.2 395.7l1.2-.4-2.3 8.2-1.2 .5z" color="#56544f"/><path d="M504.6 330.1l1.4 1.9-6.7 4.6-1.4-1.8z" color="#a7a39a"/><path d="M507.3 334l1.2 2-6.3 4.5-1.4-1.9z" color="#9d9991"/><path d="M426.1 413.2l.5-1-1.1 9.7-.5 1.1z" color="#63615b"/><path d="M481.6 363.9l1.6 1.2-4.4 6-1.7-.9z" color="#56544f"/><path d="M470.8 355.6l1.6 1.3-4.9 6.8-1.6-1.2z" color="#87847c"/><path d="M604.3 226.8l.4 2.2-13.8-1.7-.4-2.2z" color="#8c8880"/><path d="M506 332l1.3 2-6.5 4.6-1.5-2z" color="#b3afa5"/><path d="M497.4 347.2l1.2 1.6-5.5 5-1.3-1.4z" color="#56544f"/><path d="M475.2 369l1.9 1.2-4 6.4-2.1-.9z" color="#56544f"/><path d="M467.5 363.7l1.7 1.4-4.3 7-1.9-1.2z" color="#8d8a82"/><path d="M603.3 238.3l-1 2-12.9-1.6 .8-2z" color="#56544f"/><path d="M488.4 337l1.5 1.4-6.3 5.8-1.4-1.4z" color="#88847d"/><path d="M583.2 258.8l-.8 2-11.6-.3 .6-2z" color="#56544f"/><path d="M421.1 425.6l1.7-.7-.2 9.9-1.7 .9z" color="#56544f"/><path d="M486.5 358l1.5 1.3-4.8 5.8-1.6-1.2z" color="#56544f"/><path d="M555 285.1l-.9 1.4-9.7 1.6 .6-1.4z" color="#5b5954"/><path d="M502.2 340.5l1.2 1.9-6 4.8-1.4-1.8z" color="#595752"/><path d="M491.8 352.4l1.3 1.4-5.1 5.5-1.5-1.3z" color="#56544f"/><path d="M496.4 333.1l1.5 1.7-6.5 5.2-1.5-1.6z" color="#928f87"/><path d="M453.3 387.2l.8-.4-2.9 8-.8 .5z" color="#5d5b56"/><path d="M476.3 349l1.5 1.3-5.4 6.6-1.6-1.3z" color="#87847d"/><path d="M482.2 342.8l1.4 1.4-5.8 6.1-1.5-1.3z" color="#88847d"/><path d="M527.3 313l-.3 1.3-7.9 3.3 .2-1.2z" color="#5b5954"/><path d="M403.9 423.9l1.7 .9-.3 11.2-1.7-.8z" color="#74716b"/><path d="M583.5 247.2l.4 2.2-12.4-.3-.5-2.2z" color="#8c8981"/><path d="M584.6 243.5l-1.3 .1-12.7-.3 1.3-.1z" color="#6b6863"/><path d="M457.5 379l.3-.5-3.4 7.7-.3 .6z" color="#6a6761"/><path d="M535.8 306.7l-.1 2-8.2 2.7-.1-1.9z" color="#56544f"/><path d="M473.2 367.8l2 1.2-4.2 6.7-2-1.1z" color="#67655f"/><path d="M469.2 365.1l2 1.3-4.3 7-2-1.3z" color="#9b978f"/><path d="M430 401.4l2 .9-1.8 9.5-2-.8z" color="#74716b"/><path d="M441.2 404.5l2.1 0-1.7 8.7-2.2 .1z" color="#56544f"/><path d="M604.7 229l.1 2.3-13.7-1.7-.2-2.3z" color="#8e8b83"/><path d="M530.9 292l1.1 1.6-9.3 3.1-1.2-1.6z" color="#87837c"/><path d="M567.9 264.7l-1.3 .6-11.2 .8 1.1-.6z" color="#686660"/><path d="M604.1 236l-.8 2.3-13.1-1.6 .6-2.3z" color="#56544f"/><path d="M551.9 265l1.1 1.2-11.2 1.8-1.2-1.3z" color="#838079"/><path d="M471.2 366.4l2 1.4-4.2 6.8-2.1-1.2z" color="#949188"/><path d="M479.8 362.6l1.8 1.3-4.5 6.3-1.9-1.2z" color="#56544f"/><path d="M472.4 356.9l1.7 1.4-4.9 6.8-1.7-1.4z" color="#8f8c84"/><path d="M500.8 338.6l1.4 1.9-6.2 4.9-1.5-1.8z" color="#9a978e"/><path d="M497.9 334.8l1.4 1.8-6.3 5.2-1.6-1.8z" color="#aba79d"/><path d="M583.7 256.5l-.5 2.3-11.8-.3 .4-2.3z" color="#56544f"/><path d="M496 345.4l1.4 1.8-5.6 5.2-1.5-1.6z" color="#575550"/><path d="M604.8 231.3l-.3 2.4-13.4-1.7 0-2.4z" color="#797670"/><path d="M604.5 233.7l-.4 2.3-13.3-1.6 .3-2.4z" color="#575550"/><path d="M489.9 338.4l1.5 1.6-6.2 5.7-1.6-1.5z" color="#938f87"/><path d="M499.3 336.6l1.5 2-6.3 5-1.5-1.8z" color="#b8b3a9"/><path d="M543.5 289l-1 .6-9.5 2.3 .8-.5z" color="#696660"/><path d="M519.1 317.6l-.4 .9-7.6 3.8 .3-.8z" color="#62605a"/><path d="M583.9 249.4l.2 2.3-12.2-.3-.4-2.3z" color="#8f8c84"/><path d="M511.1 322.3l-.5 .4-7.3 4.4 .4-.4z" color="#6b6862"/><path d="M484.8 356.5l1.7 1.5-4.9 5.9-1.8-1.3z" color="#56544f"/><path d="M447.6 395.9l1.6-.2-2.3 8.3-1.7 .4z" color="#56544f"/><path d="M490.3 350.8l1.5 1.6-5.3 5.6-1.7-1.5z" color="#56544f"/><path d="M432 402.3l2.2 .8-1.8 9.4-2.2-.7z" color="#726f69"/><path d="M438.9 404.2l2.3 .3-1.8 8.8-2.3-.1z" color="#575550"/><path d="M584.1 254.1l-.4 2.4-11.9-.3 .2-2.4z" color="#585651"/><path d="M477.8 350.3l1.7 1.5-5.4 6.5-1.7-1.4z" color="#918d85"/><path d="M419.1 426.1l2-.5-.2 10.1-2 .7z" color="#56544f"/><path d="M483.6 344.2l1.6 1.5-5.7 6.1-1.7-1.5z" color="#928f87"/><path d="M584.1 251.7l0 2.4-12.1-.3-.1-2.4z" color="#817d76"/><path d="M477.9 361.2l1.9 1.4-4.6 6.4-2-1.2z" color="#73706a"/><path d="M474.1 358.3l1.9 1.4-4.8 6.7-2-1.3z" color="#a19d95"/><path d="M494.5 343.6l1.5 1.8-5.7 5.4-1.7-1.7z" color="#949189"/><path d="M425.2 414l.9-.8-1.1 9.8-.9 1z" color="#595752"/><path d="M405.6 424.8l2 .7-.3 11.1-2-.6z" color="#74716b"/><path d="M476 359.7l1.9 1.5-4.7 6.6-2-1.4z" color="#a7a39a"/><path d="M491.4 340l1.6 1.8-6.1 5.6-1.7-1.7z" color="#aca89f"/><path d="M535.7 304.5l.1 2.2-8.4 2.8-.4-2.1z" color="#56544f"/><path d="M429.6 389.8l1.4 1-2.7 9.7-1.3-1.1z" color="#74716b"/><path d="M555.6 283.4l-.6 1.7-10 1.6 .5-1.8z" color="#575550"/><path d="M434.2 403.1l2.3 .6-1.8 9.3-2.3-.5z" color="#696661"/><path d="M436.5 403.7l2.4 .5-1.8 9-2.4-.2z" color="#5d5b56"/><path d="M532 293.6l1 1.9-9.2 3-1.1-1.8z" color="#8b877f"/><path d="M493 341.8l1.5 1.8-5.9 5.5-1.7-1.7z" color="#b9b4aa"/><path d="M483 355l1.8 1.5-5 6.1-1.9-1.4z" color="#7f7c75"/><path d="M479.5 351.8l1.7 1.6-5.2 6.3-1.9-1.4z" color="#a7a39a"/><path d="M488.6 349.1l1.7 1.7-5.5 5.7-1.8-1.5z" color="#8b8880"/><path d="M485.2 345.7l1.7 1.7-5.7 6-1.7-1.6z" color="#aba79d"/><path d="M481.2 353.4l1.8 1.6-5.1 6.2-1.9-1.5z" color="#b3afa5"/><path d="M553 266.2l1 1.7-11.2 1.7-1-1.6z" color="#86837b"/><path d="M527.5 311.4l-.2 1.6-8 3.4 0-1.6z" color="#575450"/><path d="M486.9 347.4l1.7 1.7-5.6 5.9-1.8-1.6z" color="#b8b3a9"/><path d="M452.1 387.4l1.2-.2-2.9 8.1-1.2 .4z" color="#575550"/><path d="M586 242.9l-1.4 .6-12.7-.3 1.2-.6z" color="#686660"/><path d="M416.9 426.4l2.2-.3-.2 10.3-2.2 .5z" color="#56544f"/><path d="M461.6 371.3l.2-.4-4 7.6-.3 .5z" color="#6b6862"/><path d="M569 263.7l-1.1 1-11.4 .8 1-1z" color="#62605a"/><path d="M535.3 302.2l.4 2.3-8.7 2.9-.5-2.3z" color="#5d5a55"/><path d="M533 295.5l1 2.1-9.2 3-1-2.1z" color="#928e86"/><path d="M407.6 425.5l2.2 .6-.3 10.9-2.2-.4z" color="#726f69"/><path d="M456.9 379.2l.6-.2-3.4 7.8-.8 .4z" color="#5e5c57"/><path d="M520.3 293.8l1.2 1.3-9.3 3.9-1.2-1.3z" color="#848079"/><path d="M445.7 395.8l1.9 .1-2.4 8.5-1.9 .1z" color="#56544f"/><path d="M534.7 299.9l.6 2.3-8.8 2.9-.8-2.2z" color="#959189"/><path d="M503.7 326.7l-.4 .4-7 4.9 .3-.2z" color="#6b6963"/><path d="M534 297.6l.7 2.3-9 3-.9-2.3z" color="#9a968d"/><path d="M414.6 426.5l2.3-.1-.2 10.5-2.4 .3z" color="#575550"/><path d="M556.1 281.3l-.5 2.1-10.1 1.5 .3-2z" color="#56544f"/><path d="M544.4 288.1l-.9 .9-9.7 2.4 .7-1z" color="#62605a"/><path d="M409.8 426.1l2.4 .3-.3 10.8-2.4-.2z" color="#6a6761"/><path d="M519.3 316.4l-.2 1.2-7.7 3.9 0-1.1z" color="#5b5853"/><path d="M431 390.8l1.7 1.1-2.7 9.5-1.7-.9z" color="#74716b"/><path d="M412.2 426.4l2.4 .1-.3 10.7-2.4 0z" color="#5e5c57"/><path d="M511.4 321.5l-.3 .8-7.4 4.4 .2-.6z" color="#62605a"/><path d="M554 267.9l.9 1.9-11.1 1.7-1-1.9z" color="#89867e"/><path d="M423.9 414.7l1.3-.7-1.1 10-1.3 .9z" color="#56544f"/><path d="M527.4 309.5l.1 1.9-8.2 3.4-.3-1.8z" color="#56544f"/><path d="M443.6 395.6l2.1 .2-2.4 8.7-2.1 0z" color="#56544f"/><path d="M428.1 403.3l.4-.9-1.9 9.8-.5 1z" color="#65635d"/><path d="M556.3 279.1l-.2 2.2-10.3 1.6 0-2.2z" color="#56544f"/><path d="M568.2 242.1l1 1.2-12.8 .9-1.2-1.3z" color="#838079"/><path d="M587.2 241.9l-1.2 1-12.9-.3 1.1-1z" color="#63605b"/><path d="M450.6 387.4l1.5 0-2.9 8.3-1.6 .2z" color="#56544f"/><path d="M570 262.3l-1 1.4-11.5 .8 .8-1.4z" color="#5c5954"/><path d="M521.5 295.1l1.2 1.6-9.3 3.8-1.2-1.5z" color="#87837c"/><path d="M432.7 391.9l1.9 .9-2.6 9.5-2-.9z" color="#74716b"/><path d="M554.9 269.8l.6 2.2-10.9 1.7-.8-2.2z" color="#8e8a82"/><path d="M403.8 411.5l1.3 1-1.2 11.4-1.4-1z" color="#74716b"/><path d="M461 371.4l.6-.1-4.1 7.7-.6 .2z" color="#5f5d58"/><path d="M556.3 276.7l0 2.4-10.5 1.6-.2-2.4z" color="#5b5954"/><path d="M455.8 379.3l1.1-.1-3.6 8-1.2 .2z" color="#575550"/><path d="M555.5 272l.5 2.3-10.8 1.7-.6-2.3z" color="#928f87"/><path d="M403.5 427.3l.5-1.1-.3 11.5-.5 1.2z" color="#615f5a"/><path d="M587.8 220.3l1.1 1.2-14.4-.3-1.1-1.3z" color="#7e7b74"/><path d="M441.4 395.1l2.2 .5-2.4 8.9-2.3-.3z" color="#575450"/><path d="M545 286.7l-.6 1.4-9.9 2.3 .6-1.3z" color="#5b5954"/><path d="M556 274.3l.3 2.4-10.7 1.6-.4-2.3z" color="#8c8981"/><path d="M519.3 314.8l0 1.6-7.9 4-.2-1.5z" color="#56544f"/><path d="M527 307.4l.4 2.1-8.4 3.5-.5-2.1z" color="#56544f"/><path d="M433.1 380.2l1.3 1-3.4 9.6-1.4-1z" color="#75726c"/><path d="M434.6 392.8l2.2 .9-2.6 9.4-2.2-.8z" color="#726f69"/><path d="M422.3 415.2l1.6-.5-1.1 10.2-1.7 .7z" color="#56544f"/><path d="M503.9 326.1l-.2 .6-7.1 5.1 0-.6z" color="#62605a"/><path d="M533.8 291.4l-.8 .5-9.6 3.2 .8-.5z" color="#696661"/><path d="M439.1 394.5l2.3 .6-2.5 9.1-2.4-.5z" color="#5d5a55"/><path d="M522.7 296.7l1.1 1.8-9.1 3.9-1.3-1.9z" color="#8c8880"/><path d="M436.8 393.7l2.3 .8-2.6 9.2-2.3-.6z" color="#686660"/><path d="M511.4 320.4l0 1.1-7.5 4.6-.2-1.1z" color="#5a5853"/><path d="M569.2 243.3l1 1.7-12.8 .8-1-1.6z" color="#86837b"/><path d="M570.8 260.5l-.8 1.8-11.7 .8 .7-1.8z" color="#575550"/><path d="M588.4 240.5l-1.2 1.4-13-.3 1-1.4z" color="#5c5a55"/><path d="M448.8 387.2l1.8 .2-3 8.5-1.9-.1z" color="#56544f"/><path d="M526.5 305.1l.5 2.3-8.5 3.5-.8-2.1z" color="#5d5b55"/><path d="M511 297.7l1.2 1.3-9.1 4.6-1.2-1.2z" color="#848079"/><path d="M405.1 412.5l1.7 .9-1.2 11.4-1.7-.9z" color="#74716b"/><path d="M427.2 404l.9-.7-2 9.9-.9 .8z" color="#5b5853"/><path d="M465.7 363.8l.6 0-4.7 7.5-.6 .1z" color="#605e58"/><path d="M523.8 298.5l1 2.1-9 3.8-1.1-2z" color="#96928a"/><path d="M540.6 266.7l1.2 1.3-11.3 2.7-1.1-1.2z" color="#838079"/><path d="M525.7 302.9l.8 2.2-8.8 3.7-.9-2.2z" color="#98948c"/><path d="M588.9 221.5l.9 1.7-14.4-.4-.9-1.6z" color="#86827b"/><path d="M524.8 300.6l.9 2.3-8.9 3.7-1-2.2z" color="#9f9b93"/><path d="M496.6 331.2l0 .6-6.9 5.5-.1-.5z" color="#62605a"/><path d="M434.4 381.2l1.7 1.1-3.4 9.6-1.7-1.1z" color="#78756e"/><path d="M420.3 415.6l2-.4-1.2 10.4-2 .5z" color="#56544f"/><path d="M545.5 284.9l-.5 1.8-9.9 2.4 .3-1.7z" color="#575550"/><path d="M519 313l.3 1.8-8.1 4.1-.5-1.7z" color="#56544f"/><path d="M454.3 379.1l1.5 .2-3.7 8.1-1.5 0z" color="#56544f"/><path d="M556.5 265.5l-1.1 .6-11.4 1.7 1-.5z" color="#686660"/><path d="M460 371.3l1 .1-4.1 7.8-1.1 .1z" color="#575550"/><path d="M402.6 428.3l.9-1-.3 11.6-.9 1.1z" color="#585651"/><path d="M570.2 245l.8 1.9-12.8 .9-.8-2z" color="#89867e"/><path d="M571.4 258.5l-.6 2-11.8 .8 .4-2z" color="#56544f"/><path d="M446.8 386.7l2 .5-3.1 8.6-2.1-.2z" color="#56544f"/><path d="M471 356.5l.4 .1-5.1 7.2-.6 0z" color="#615e59"/><path d="M589.4 238.7l-1 1.8-13.2-.3 .8-1.8z" color="#575550"/><path d="M406.8 413.4l2 .8-1.2 11.3-2-.7z" color="#74716b"/><path d="M503.7 325l.2 1.1-7.3 5.1-.3-1z" color="#5a5853"/><path d="M511.2 318.9l.2 1.5-7.7 4.6-.3-1.4z" color="#56544f"/><path d="M534.5 290.4l-.7 1-9.6 3.2 .5-.9z" color="#62605a"/><path d="M489.6 336.8l.1 .5-6.5 6-.2-.4z" color="#62605a"/><path d="M512.2 299l1.2 1.5-9 4.6-1.3-1.5z" color="#87847c"/><path d="M418.1 415.7l2.2-.1-1.2 10.5-2.2 .3z" color="#56544f"/><path d="M436.1 382.3l1.9 1.1-3.4 9.4-1.9-.9z" color="#7a7770"/><path d="M541.8 268l1 1.6-11.2 2.7-1.1-1.6z" color="#86837c"/><path d="M476.8 349.5l.3 .3-5.7 6.8-.4-.1z" color="#615f5a"/><path d="M589.8 223.2l.7 1.9-14.3-.4-.8-1.9z" color="#89857e"/><path d="M483 342.9l.2 .4-6.1 6.5-.3-.3z" color="#625f5a"/><path d="M571 246.9l.5 2.2-12.6 .8-.7-2.1z" color="#8d8981"/><path d="M571.8 256.2l-.4 2.3-12 .8 .3-2.3z" color="#56544f"/><path d="M437.3 370.7l1.3 1.1-4.2 9.4-1.3-1z" color="#79766f"/><path d="M518.5 310.9l.5 2.1-8.3 4.2-.6-2z" color="#56544f"/><path d="M430.8 393.3l.4-.7-2.7 9.8-.4 .9z" color="#67655f"/><path d="M571.9 243.2l-1.3 .1-13 .8 1.2-.1z" color="#6b6963"/><path d="M425.9 404.5l1.3-.5-2 10-1.3 .7z" color="#56544f"/><path d="M444.6 386.1l2.2 .6-3.2 8.9-2.2-.5z" color="#56544f"/><path d="M545.8 282.9l-.3 2-10.1 2.5 0-2z" color="#56544f"/><path d="M408.8 414.2l2.3 .7-1.3 11.2-2.2-.6z" color="#726f69"/><path d="M464.8 363.5l.9 .3-4.7 7.6-1-.1z" color="#585651"/><path d="M415.8 415.6l2.3 .1-1.2 10.7-2.3 .1z" color="#575550"/><path d="M590.2 236.7l-.8 2-13.4-.3 .6-2.1z" color="#56544f"/><path d="M452.6 378.6l1.7 .5-3.7 8.3-1.8-.2z" color="#56544f"/><path d="M438 383.4l2.1 1-3.3 9.3-2.2-.9z" color="#77746d"/><path d="M571.5 249.1l.4 2.3-12.5 .9-.5-2.4z" color="#908d85"/><path d="M572 253.8l-.2 2.4-12.1 .8-.1-2.3z" color="#595752"/><path d="M513.4 300.5l1.3 1.9-9 4.5-1.3-1.8z" color="#8d8a82"/><path d="M442.4 385.3l2.2 .8-3.2 9-2.3-.6z" color="#5c5a55"/><path d="M401.3 429.2l1.3-.9-.3 11.7-1.3 1z" color="#56544f"/><path d="M411.1 414.9l2.3 .4-1.2 11.1-2.4-.3z" color="#696761"/><path d="M571.9 251.4l.1 2.4-12.4 .9-.2-2.4z" color="#87837c"/><path d="M413.4 415.3l2.4 .3-1.2 10.9-2.4-.1z" color="#5e5c56"/><path d="M557.5 264.5l-1 1-11.5 1.8 .9-1z" color="#62605a"/><path d="M496.3 330.2l.3 1-7 5.6-.4-.8z" color="#5a5853"/><path d="M440.1 384.4l2.3 .9-3.3 9.2-2.3-.8z" color="#696661"/><path d="M501.9 302.4l1.2 1.2-8.9 5.3-1.2-1.2z" color="#848079"/><path d="M458.7 370.9l1.3 .4-4.2 8-1.5-.2z" color="#56544f"/><path d="M590.5 225.1l.4 2.2-14.1-.4-.6-2.2z" color="#8c8981"/><path d="M542.8 269.6l1 1.9-11.1 2.7-1.1-1.9z" color="#8a867f"/><path d="M517.7 308.8l.8 2.1-8.4 4.3-.9-2.1z" color="#5d5a55"/><path d="M381 427.2l1.3 1-.3 13.1-1.4-.9z" color="#74716b"/><path d="M510.7 317.2l.5 1.7-7.8 4.7-.7-1.6z" color="#56544f"/><path d="M524.2 294.6l-.8 .5-9.4 3.9 .6-.4z" color="#6a6761"/><path d="M545.8 280.7l0 2.2-10.4 2.5-.1-2.2z" color="#56544f"/><path d="M590.8 234.4l-.6 2.3-13.6-.4 .4-2.2z" color="#56544f"/><path d="M503.4 323.6l.3 1.4-7.4 5.2-.5-1.3z" color="#56544f"/><path d="M514.7 302.4l1.1 2-8.9 4.5-1.2-2z" color="#9b988f"/><path d="M535.1 289.1l-.6 1.3-9.8 3.3 .4-1.3z" color="#5b5954"/><path d="M470.2 356l.8 .5-5.3 7.3-.9-.3z" color="#585651"/><path d="M438.6 371.8l1.7 1.1-4.2 9.4-1.7-1.1z" color="#7f7b74"/><path d="M590.9 227.3l.2 2.3-14-.3-.3-2.4z" color="#8f8c84"/><path d="M516.8 306.6l.9 2.2-8.5 4.3-1.1-2.1z" color="#9b978f"/><path d="M489.2 336l.4 .8-6.6 6.1-.6-.7z" color="#5a5752"/><path d="M515.8 304.4l1 2.2-8.7 4.4-1.2-2.1z" color="#a6a299"/><path d="M591.1 232l-.3 2.4-13.8-.3 .2-2.4z" color="#585651"/><path d="M591.1 229.6l0 2.4-13.9-.3-.1-2.4z" color="#817d76"/><path d="M406 399.9l1.4 1-2.3 11.6-1.3-1z" color="#74716b"/><path d="M450.6 378l2 .6-3.8 8.6-2-.5z" color="#56544f"/><path d="M543.8 271.5l.8 2.2-11 2.6-.9-2.1z" color="#8f8c84"/><path d="M424.3 404.8l1.6-.3-2 10.2-1.6 .5z" color="#56544f"/><path d="M545.6 278.3l.2 2.4-10.5 2.5-.4-2.2z" color="#5c5a55"/><path d="M476.1 348.9l.7 .6-5.8 7-.8-.5z" color="#595752"/><path d="M573.1 242.6l-1.2 .6-13.1 .8 1.1-.5z" color="#686660"/><path d="M482.4 342.2l.6 .7-6.2 6.6-.7-.6z" color="#595752"/><path d="M430 393.9l.8-.6-2.7 10-.9 .7z" color="#5c5a55"/><path d="M399.6 429.9l1.7-.7-.3 11.8-1.7 .9z" color="#56544f"/><path d="M503.1 303.6l1.3 1.5-8.9 5.3-1.3-1.5z" color="#87847c"/><path d="M544.6 273.7l.6 2.3-10.9 2.6-.7-2.3z" color="#959289"/><path d="M545.2 276l.4 2.3-10.7 2.7-.6-2.4z" color="#918d85"/><path d="M442.2 361.4l1.3 1.1-4.9 9.3-1.3-1.1z" color="#7e7b74"/><path d="M463.6 363l1.2 .5-4.8 7.8-1.3-.4z" color="#56544f"/><path d="M510.1 315.2l.6 2-8 4.8-.9-1.9z" color="#56544f"/><path d="M457 370.3l1.7 .6-4.4 8.2-1.7-.5z" color="#56544f"/><path d="M382.3 428.2l1.8 .9-.4 13.1-1.7-.9z" color="#74716b"/><path d="M440.3 372.9l1.8 1.2-4.1 9.3-1.9-1.1z" color="#827f78"/><path d="M558.3 263.1l-.8 1.4-11.6 1.8 .6-1.4z" color="#5b5954"/><path d="M404.8 415.6l.5-1-1.3 11.6-.5 1.1z" color="#63615b"/><path d="M495.8 328.9l.5 1.3-7.1 5.8-.7-1.2z" color="#56544f"/><path d="M448.5 377.2l2.1 .8-3.8 8.7-2.2-.6z" color="#56544f"/><path d="M493 307.7l1.2 1.2-8.6 6.1-1.3-1.2z" color="#848079"/><path d="M502.7 322l.7 1.6-7.6 5.3-.9-1.5z" color="#56544f"/><path d="M555.2 242.9l1.2 1.3-13.1 2-1.1-1.2z" color="#838079"/><path d="M535.4 287.4l-.3 1.7-10 3.3 .1-1.7z" color="#575450"/><path d="M442.1 374.1l2.1 1.1-4.1 9.2-2.1-1z" color="#817e77"/><path d="M407.4 400.9l1.7 1-2.3 11.5-1.7-.9z" color="#74716b"/><path d="M529.4 269.5l1.1 1.2-11.2 3.7-1.2-1.2z" color="#848079"/><path d="M524.7 293.7l-.5 .9-9.6 4 .4-.9z" color="#62605a"/><path d="M422.4 405l1.9-.2-2 10.4-2 .4z" color="#56544f"/><path d="M504.4 305.1l1.3 1.8-8.8 5.3-1.4-1.8z" color="#8f8b84"/><path d="M446.4 376.3l2.1 .9-3.9 8.9-2.2-.8z" color="#5b5954"/><path d="M469.1 355.3l1.1 .7-5.4 7.5-1.2-.5z" color="#56544f"/><path d="M509.2 313.1l.9 2.1-8.3 4.9-1-1.9z" color="#5c5954"/><path d="M434.4 383.4l.3-.6-3.5 9.8-.4 .7z" color="#696660"/><path d="M444.2 375.2l2.2 1.1-4 9-2.3-.9z" color="#716f68"/><path d="M397.6 430.4l2-.5-.3 12-2 .7z" color="#56544f"/><path d="M488.5 334.8l.7 1.2-6.8 6.2-.8-1z" color="#56544f"/><path d="M384.1 429.1l2 .7-.4 13-2-.6z" color="#74716b"/><path d="M443.5 362.5l1.6 1.2-4.8 9.2-1.7-1.1z" color="#85817a"/><path d="M455.2 369.5l1.8 .8-4.4 8.3-2-.6z" color="#56544f"/><path d="M574.2 241.6l-1.1 1-13.2 .9 1-1z" color="#62605a"/><path d="M505.7 306.9l1.2 2-8.6 5.2-1.4-1.9z" color="#a19d95"/><path d="M475.1 348.1l1 .8-5.9 7.1-1.1-.7z" color="#56544f"/><path d="M481.6 341.2l.8 1-6.3 6.7-1-.8z" color="#56544f"/><path d="M508.1 311l1.1 2.1-8.4 5.1-1.2-2.1z" color="#9d9991"/><path d="M462.1 362.2l1.5 .8-4.9 7.9-1.7-.6z" color="#56544f"/><path d="M447.8 352.4l1.3 1.1-5.6 9-1.3-1.1z" color="#827f78"/><path d="M559 261.3l-.7 1.8-11.8 1.8 .5-1.7z" color="#575550"/><path d="M428.8 394.2l1.2-.3-2.8 10.1-1.3 .5z" color="#56544f"/><path d="M506.9 308.9l1.2 2.1-8.5 5.1-1.3-2z" color="#ada99f"/><path d="M494.2 308.9l1.3 1.5-8.6 6-1.3-1.4z" color="#87847c"/><path d="M545 267.3l-1 .5-11.4 2.8 .9-.5z" color="#696660"/><path d="M409.1 401.9l2 .9-2.3 11.4-2-.8z" color="#74716b"/><path d="M420.2 404.9l2.2 .1-2.1 10.6-2.2 .1z" color="#56544f"/><path d="M514.6 298.6l-.6 .4-9.3 4.7 .5-.4z" color="#6a6762"/><path d="M501.8 320.1l.9 1.9-7.8 5.4-1-1.7z" color="#56544f"/><path d="M395.4 430.7l2.2-.3-.3 12.2-2.2 .5z" color="#56544f"/><path d="M494.9 327.4l.9 1.5-7.3 5.9-1-1.4z" color="#56544f"/><path d="M484.3 313.8l1.3 1.2-8.3 6.6-1.2-1.2z" color="#848079"/><path d="M556.4 244.2l1 1.6-13.1 2.1-1-1.7z" color="#86837b"/><path d="M386.1 429.8l2.2 .5-.3 12.9-2.3-.4z" color="#726f69"/><path d="M535.4 285.4l0 2-10.2 3.3-.1-1.9z" color="#56544f"/><path d="M403.9 416.4l.9-.8-1.3 11.7-.9 1z" color="#595752"/><path d="M530.5 270.7l1.1 1.6-11.2 3.7-1.1-1.6z" color="#87837c"/><path d="M445.1 363.7l1.9 1.3-4.9 9.1-1.8-1.2z" color="#8a877f"/><path d="M453.2 368.5l2 1-4.6 8.5-2.1-.8z" color="#56544f"/><path d="M393.1 430.8l2.3-.1-.3 12.4-2.4 .3z" color="#575550"/><path d="M467.7 354.4l1.4 .9-5.5 7.7-1.5-.8z" color="#56544f"/><path d="M388.3 430.3l2.4 .4-.4 12.7-2.3-.2z" color="#6a6761"/><path d="M411.1 402.8l2.2 .8-2.2 11.3-2.3-.7z" color="#726f69"/><path d="M417.9 404.7l2.3 .2-2.1 10.8-2.3-.1z" color="#575550"/><path d="M525.1 292.4l-.4 1.3-9.7 4 .2-1.2z" color="#5b5954"/><path d="M454 343.7l1.3 1.2-6.2 8.6-1.3-1.1z" color="#848079"/><path d="M390.7 430.7l2.4 .1-.4 12.6-2.4 0z" color="#5e5c57"/><path d="M487.5 333.4l1 1.4-6.9 6.4-1.2-1.2z" color="#56544f"/><path d="M495.5 310.4l1.4 1.8-8.5 5.9-1.5-1.7z" color="#918d85"/><path d="M559.4 259.3l-.4 2-12 1.9 .3-2z" color="#56544f"/><path d="M573.4 219.9l1.1 1.3-14.8 1-1.1-1.3z" color="#838079"/><path d="M447 365l2 1.2-4.8 9-2.1-1.1z" color="#8f8b84"/><path d="M500.8 318.2l1 1.9-7.9 5.6-1.2-1.9z" color="#5a5853"/><path d="M460.3 361.2l1.8 1-5.1 8.1-1.8-.8z" color="#56544f"/><path d="M449.1 353.5l1.6 1.3-5.6 8.9-1.6-1.2z" color="#87847c"/><path d="M451.1 367.4l2.1 1.1-4.7 8.7-2.1-.9z" color="#5f5c57"/><path d="M476.1 320.4l1.2 1.2-7.8 7.3-1.3-1.2z" color="#848079"/><path d="M575.2 240.2l-1 1.4-13.3 .9 .8-1.4z" color="#5c5954"/><path d="M413.3 403.6l2.3 .6-2.2 11.1-2.3-.4z" color="#696661"/><path d="M433.6 383.8l.8-.4-3.6 9.9-.8 .6z" color="#5d5b56"/><path d="M415.6 404.2l2.3 .5-2.1 10.9-2.4-.3z" color="#5d5b56"/><path d="M449 366.2l2.1 1.2-4.7 8.9-2.2-1.1z" color="#817e77"/><path d="M473.8 347l1.3 1.1-6 7.2-1.4-.9z" color="#56544f"/><path d="M535.3 283.2l.1 2.2-10.3 3.4-.3-2.1z" color="#56544f"/><path d="M557.4 245.8l.8 2-12.9 2-1-1.9z" color="#89867e"/><path d="M480.4 340l1.2 1.2-6.5 6.9-1.3-1.1z" color="#56544f"/><path d="M531.6 272.3l1.1 1.9-11.2 3.7-1.1-1.9z" color="#8b877f"/><path d="M493.9 325.7l1 1.7-7.4 6-1.2-1.6z" color="#56544f"/><path d="M427.2 394.4l1.6-.2-2.9 10.3-1.6 .3z" color="#56544f"/><path d="M485.6 315l1.3 1.4-8.2 6.7-1.4-1.5z" color="#87847d"/><path d="M460.9 335.5l1.2 1.1-6.8 8.3-1.3-1.2z" color="#848079"/><path d="M468.2 327.7l1.3 1.2-7.4 7.7-1.2-1.1z" color="#848079"/><path d="M496.9 312.2l1.4 1.9-8.4 5.9-1.5-1.9z" color="#a7a39a"/><path d="M499.6 316.1l1.2 2.1-8.1 5.6-1.4-1.9z" color="#9d9991"/><path d="M498.3 314.1l1.3 2-8.3 5.8-1.4-1.9z" color="#b3afa5"/><path d="M409.2 388.3l1.4 1-3.2 11.6-1.4-1z" color="#74716b"/><path d="M545.9 266.3l-.9 1-11.5 2.8 .7-.9z" color="#62605a"/><path d="M438.7 373.7l.3-.5-4.3 9.6-.3 .6z" color="#6a6761"/><path d="M559.7 257l-.3 2.3-12.1 1.9 0-2.2z" color="#56544f"/><path d="M402.6 417.1l1.3-.7-1.3 11.9-1.3 .9z" color="#56544f"/><path d="M458.4 360.1l1.9 1.1-5.1 8.3-2-1z" color="#56544f"/><path d="M450.7 354.8l1.8 1.3-5.5 8.9-1.9-1.3z" color="#8d8a82"/><path d="M515 297.7l-.4 .9-9.4 4.7 .3-.7z" color="#62605a"/><path d="M466 353.3l1.7 1.1-5.6 7.8-1.8-1z" color="#56544f"/><path d="M534.9 281l.4 2.2-10.5 3.5-.6-2.2z" color="#5d5a55"/><path d="M532.7 274.2l.9 2.1-11 3.7-1.1-2.1z" color="#928e86"/><path d="M558.2 247.8l.7 2.1-12.8 2-.8-2.1z" color="#8e8a82"/><path d="M455.3 344.9l1.6 1.3-6.2 8.6-1.6-1.3z" color="#87847c"/><path d="M486.3 331.8l1.2 1.6-7.1 6.6-1.3-1.5z" color="#56544f"/><path d="M382 431.6l.4-1.1-.3 13.3-.5 1.2z" color="#615f5a"/><path d="M492.7 323.8l1.2 1.9-7.6 6.1-1.4-1.7z" color="#595752"/><path d="M574.5 221.2l.9 1.6-14.7 1-1-1.6z" color="#86837b"/><path d="M477.3 321.6l1.4 1.5-7.7 7.2-1.5-1.4z" color="#88847d"/><path d="M486.9 316.4l1.5 1.7-8.1 6.6-1.6-1.6z" color="#928f87"/><path d="M534.3 278.6l.6 2.4-10.7 3.5-.7-2.3z" color="#959189"/><path d="M533.6 276.3l.7 2.3-10.8 3.6-.9-2.2z" color="#9a968d"/><path d="M559.6 254.7l.1 2.3-12.4 2-.2-2.4z" color="#5b5954"/><path d="M525.2 290.7l-.1 1.7-9.9 4.1 0-1.6z" color="#575450"/><path d="M576 238.4l-.8 1.8-13.5 .9 .7-1.8z" color="#575550"/><path d="M505.2 303.3l-.5 .4-9.1 5.5 .4-.3z" color="#6b6862"/><path d="M456.4 358.8l2 1.3-5.2 8.4-2.1-1.1z" color="#67655f"/><path d="M472.3 345.7l1.5 1.3-6.1 7.4-1.7-1.1z" color="#56544f"/><path d="M452.5 356.1l1.9 1.4-5.4 8.7-2-1.2z" color="#9b978f"/><path d="M558.9 249.9l.5 2.4-12.7 1.9-.6-2.3z" color="#928f87"/><path d="M479.1 338.5l1.3 1.5-6.6 7-1.5-1.3z" color="#56544f"/><path d="M559.4 252.3l.2 2.4-12.5 1.9-.4-2.4z" color="#8c8981"/><path d="M462.1 336.6l1.5 1.4-6.7 8.2-1.6-1.3z" color="#87847d"/><path d="M454.4 357.5l2 1.3-5.3 8.6-2.1-1.2z" color="#949188"/><path d="M425.3 394.3l1.9 .1-2.9 10.4-1.9 .2z" color="#56544f"/><path d="M469.5 328.9l1.5 1.4-7.4 7.7-1.5-1.4z" color="#88847d"/><path d="M382.5 413.8l1.3 1.1-1.5 13.3-1.3-1z" color="#74716b"/><path d="M491.3 321.9l1.4 1.9-7.8 6.3-1.5-1.8z" color="#9a978e"/><path d="M488.4 318.1l1.5 1.9-8 6.4-1.6-1.7z" color="#aba79d"/><path d="M432.4 384l1.2-.2-3.6 10.1-1.2 .3z" color="#575550"/><path d="M518.1 273.2l1.2 1.2-11.2 4.7-1.2-1.3z" color="#848079"/><path d="M464.3 352l1.7 1.3-5.7 7.9-1.9-1.1z" color="#56544f"/><path d="M456.9 346.2l1.7 1.4-6.1 8.5-1.8-1.3z" color="#8f8c84"/><path d="M410.6 389.3l1.7 1.1-3.2 11.5-1.7-1z" color="#74716b"/><path d="M489.9 320l1.4 1.9-7.9 6.4-1.5-1.9z" color="#b8b3a9"/><path d="M407.1 403.7l.4-.8-2.2 11.7-.5 1z" color="#65635d"/><path d="M484.9 330.1l1.4 1.7-7.2 6.7-1.5-1.6z" color="#575550"/><path d="M478.7 323.1l1.6 1.6-7.7 7.1-1.6-1.5z" color="#938f87"/><path d="M401 417.6l1.6-.5-1.3 12.1-1.7 .7z" color="#56544f"/><path d="M575.4 222.8l.8 1.9-14.6 1-.9-1.9z" color="#89867e"/><path d="M546.5 264.9l-.6 1.4-11.7 2.9 .5-1.4z" color="#5b5954"/><path d="M470.7 344.2l1.6 1.5-6.3 7.6-1.7-1.3z" color="#56544f"/><path d="M576.6 236.3l-.6 2.1-13.6 .9 .4-2z" color="#56544f"/><path d="M462.4 350.5l1.9 1.5-5.9 8.1-2-1.3z" color="#73706a"/><path d="M477.6 336.9l1.5 1.6-6.8 7.2-1.6-1.5z" color="#56544f"/><path d="M458.6 347.6l1.9 1.5-6.1 8.4-1.9-1.4z" color="#a19d95"/><path d="M463.6 338l1.7 1.5-6.7 8.1-1.7-1.4z" color="#918d85"/><path d="M471 330.3l1.6 1.5-7.3 7.7-1.7-1.5z" color="#928f87"/><path d="M438 373.9l.7-.2-4.3 9.7-.8 .4z" color="#5e5c57"/><path d="M460.5 349.1l1.9 1.4-6 8.3-2-1.3z" color="#a7a39a"/><path d="M483.4 328.3l1.5 1.8-7.3 6.8-1.7-1.7z" color="#949189"/><path d="M515.2 296.5l-.2 1.2-9.5 4.9 0-1.2z" color="#5b5853"/><path d="M525.1 288.8l.1 1.9-10 4.2-.3-1.8z" color="#56544f"/><path d="M480.3 324.7l1.6 1.7-7.7 7.1-1.6-1.7z" color="#aca89f"/><path d="M423.2 394.1l2.1 .2-2.9 10.7-2.2-.1z" color="#56544f"/><path d="M443.7 364.1l.3-.3-5 9.4-.3 .5z" color="#6b6862"/><path d="M381.1 432.6l.9-1-.4 13.4-.9 1.2z" color="#585651"/><path d="M481.9 326.4l1.5 1.9-7.5 6.9-1.7-1.7z" color="#b9b4aa"/><path d="M412.3 390.4l1.9 1-3.1 11.4-2-.9z" color="#74716b"/><path d="M468.9 342.6l1.8 1.6-6.4 7.8-1.9-1.5z" color="#7f7c75"/><path d="M383.8 414.9l1.7 .9-1.4 13.3-1.8-.9z" color="#74716b"/><path d="M465.3 339.5l1.8 1.6-6.6 8-1.9-1.5z" color="#a7a39a"/><path d="M559.9 243.5l-1.1 .5-13.3 2.1 1-.5z" color="#686660"/><path d="M475.9 335.2l1.7 1.7-6.9 7.3-1.8-1.6z" color="#8b8880"/><path d="M519.3 274.4l1.1 1.6-11.1 4.6-1.2-1.5z" color="#87837c"/><path d="M472.6 331.8l1.6 1.7-7.1 7.6-1.8-1.6z" color="#aba79d"/><path d="M576.2 224.7l.6 2.2-14.5 1-.7-2.2z" color="#8d8981"/><path d="M577 234.1l-.4 2.2-13.8 1 .2-2.3z" color="#56544f"/><path d="M467.1 341.1l1.8 1.5-6.5 7.9-1.9-1.4z" color="#b3afa5"/><path d="M474.2 333.5l1.7 1.7-7 7.4-1.8-1.5z" color="#b8b3a9"/><path d="M505.5 302.6l-.3 .7-9.2 5.6 .1-.7z" color="#62605a"/><path d="M496 308.9l-.4 .3-8.8 6.1 .3-.2z" color="#6b6963"/><path d="M533.5 270.1l-.9 .5-11.4 3.8 .7-.5z" color="#696661"/><path d="M542.2 245l1.1 1.2-13.2 3.2-1.1-1.2z" color="#838079"/><path d="M430.9 384l1.5 0-3.6 10.2-1.6 .2z" color="#56544f"/><path d="M421 393.7l2.2 .4-3 10.8-2.3-.2z" color="#575450"/><path d="M399 418l2-.4-1.4 12.3-2 .5z" color="#56544f"/><path d="M414.2 391.4l2.2 .9-3.1 11.3-2.2-.8z" color="#726f69"/><path d="M576.8 226.9l.3 2.4-14.3 .9-.5-2.3z" color="#908d85"/><path d="M577.2 231.7l-.2 2.4-14 .9 0-2.4z" color="#595752"/><path d="M524.8 286.7l.3 2.1-10.2 4.3-.5-2z" color="#56544f"/><path d="M547 263.2l-.5 1.7-11.8 2.9 .3-1.7z" color="#575550"/><path d="M406.3 404.4l.8-.7-2.3 11.9-.9 .8z" color="#5b5853"/><path d="M577.1 229.3l.1 2.4-14.2 .9-.2-2.4z" color="#87837c"/><path d="M418.7 393l2.3 .7-3.1 11-2.3-.5z" color="#5d5a55"/><path d="M416.4 392.3l2.3 .7-3.1 11.2-2.3-.6z" color="#686660"/><path d="M385.5 415.8l2 .8-1.4 13.2-2-.7z" color="#74716b"/><path d="M520.4 276l1.1 1.9-11 4.6-1.2-1.9z" color="#8c8880"/><path d="M413.4 376.8l1.3 1-4.1 11.5-1.4-1z" color="#75726c"/><path d="M515.2 294.9l0 1.6-9.7 4.9-.2-1.4z" color="#56544f"/><path d="M396.8 418.1l2.2-.1-1.4 12.4-2.2 .3z" color="#56544f"/><path d="M379.8 433.5l1.3-.9-.4 13.6-1.3 1z" color="#56544f"/><path d="M436.9 374l1.1-.1-4.4 9.9-1.2 .2z" color="#575550"/><path d="M524.2 284.5l.6 2.2-10.4 4.4-.8-2.2z" color="#5d5b55"/><path d="M543.3 246.2l1 1.7-13.1 3.1-1.1-1.6z" color="#86837c"/><path d="M443.1 364.2l.6-.1-5 9.6-.7 .2z" color="#5f5d58"/><path d="M359.5 431.5l1.3 1-.4 15-1.3-1z" color="#74716b"/><path d="M521.5 277.9l1.1 2.1-10.9 4.5-1.2-2z" color="#96928a"/><path d="M560.9 242.5l-1 1-13.4 2.1 .9-1z" color="#62605a"/><path d="M387.5 416.6l2.3 .7-1.5 13-2.2-.5z" color="#726f69"/><path d="M429.1 383.8l1.8 .2-3.7 10.4-1.9-.1z" color="#56544f"/><path d="M523.5 282.2l.7 2.3-10.6 4.4-.9-2.2z" color="#98948c"/><path d="M394.5 418l2.3 .1-1.4 12.6-2.3 .1z" color="#575550"/><path d="M547.3 261.2l-.3 2-12 2.9 .1-2z" color="#56544f"/><path d="M522.6 280l.9 2.2-10.8 4.5-1-2.2z" color="#9f9b93"/><path d="M505.5 301.4l0 1.2-9.4 5.6-.1-1.1z" color="#5a5853"/><path d="M506.9 277.8l1.2 1.3-11 5.5-1.2-1.2z" color="#848079"/><path d="M534.2 269.2l-.7 .9-11.6 3.8 .6-.9z" color="#62605a"/><path d="M389.8 417.3l2.3 .4-1.4 13-2.4-.4z" color="#696761"/><path d="M496.1 308.2l-.1 .7-8.9 6.2 0-.6z" color="#62605a"/><path d="M392.1 417.7l2.4 .3-1.4 12.8-2.4-.1z" color="#5e5c56"/><path d="M414.7 377.8l1.7 1.1-4.1 11.5-1.7-1.1z" color="#78756e"/><path d="M405 404.9l1.3-.5-2.4 12-1.3 .7z" color="#56544f"/><path d="M514.9 293.1l.3 1.8-9.9 5.1-.5-1.8z" color="#56544f"/><path d="M544.3 247.9l1 1.9-13 3.1-1.1-1.9z" color="#8a867f"/><path d="M378.1 434.2l1.7-.7-.4 13.7-1.7 .9z" color="#56544f"/><path d="M427.1 383.3l2 .5-3.8 10.5-2.1-.2z" color="#56544f"/><path d="M547.3 259l0 2.2-12.2 2.9-.2-2.1z" color="#56544f"/><path d="M360.8 432.5l1.7 .9-.4 14.9-1.7-.8z" color="#74716b"/><path d="M435.5 373.8l1.4 .2-4.5 10-1.5 0z" color="#56544f"/><path d="M410.4 391.8l.4-.7-3.3 11.8-.4 .8z" color="#67655f"/><path d="M561.7 241.1l-.8 1.4-13.5 2.1 .7-1.4z" color="#5b5954"/><path d="M449 354.8l.5 .1-5.8 9.2-.6 .1z" color="#605e58"/><path d="M416.4 378.9l1.9 1.1-4.1 11.4-1.9-1z" color="#7a7770"/><path d="M508.1 279.1l1.2 1.5-10.9 5.6-1.3-1.6z" color="#87847c"/><path d="M545.3 249.8l.8 2.1-12.9 3.2-.9-2.2z" color="#8f8c84"/><path d="M442.1 364.1l1 .1-5.1 9.7-1.1 .1z" color="#575550"/><path d="M547.1 256.6l.2 2.4-12.4 3-.4-2.3z" color="#5c5a55"/><path d="M487.1 314.5l0 .6-8.5 6.9-.1-.5z" color="#62605a"/><path d="M424.9 382.7l2.2 .6-3.9 10.8-2.2-.4z" color="#56544f"/><path d="M558.6 220.9l1.1 1.3-14.9 2.3-1.1-1.2z" color="#838079"/><path d="M505.3 300l.2 1.4-9.5 5.7-.4-1.4z" color="#56544f"/><path d="M534.7 267.8l-.5 1.4-11.7 3.8 .3-1.3z" color="#5b5954"/><path d="M514.4 291.1l.5 2-10.1 5.1-.7-1.9z" color="#56544f"/><path d="M546.1 251.9l.6 2.3-12.7 3.1-.8-2.2z" color="#959289"/><path d="M376.1 434.7l2-.5-.4 13.9-2 .7z" color="#56544f"/><path d="M546.7 254.2l.4 2.4-12.6 3.1-.5-2.4z" color="#918d85"/><path d="M385.1 400.3l1.3 1.1-2.6 13.5-1.3-1.1z" color="#74716b"/><path d="M403.4 405.3l1.6-.4-2.4 12.2-1.6 .5z" color="#56544f"/><path d="M383.5 418l.4-1-1.5 13.5-.4 1.1z" color="#63615b"/><path d="M418.3 380l2.1 1-4 11.3-2.2-.9z" color="#77746d"/><path d="M362.5 433.4l2 .7-.3 14.9-2.1-.7z" color="#74716b"/><path d="M496 307.1l.1 1.1-9 6.3-.2-1z" color="#5a5853"/><path d="M418.4 365.4l1.3 1.1-5 11.3-1.3-1z" color="#79766f"/><path d="M422.6 381.9l2.3 .8-3.9 11-2.3-.7z" color="#5c5a55"/><path d="M521.9 273.9l-.7 .5-11.4 4.7 .7-.4z" color="#6a6761"/><path d="M420.4 381l2.2 .9-3.9 11.1-2.3-.7z" color="#696661"/><path d="M509.3 280.6l1.2 1.9-10.8 5.5-1.3-1.8z" color="#8d8a82"/><path d="M455.5 345.8l.4 .1-6.4 9-.5-.1z" color="#615e59"/><path d="M433.7 373.4l1.8 .4-4.6 10.2-1.8-.2z" color="#56544f"/><path d="M478.5 321.5l.1 .5-8.1 7.4-.2-.4z" color="#62605a"/><path d="M513.6 288.9l.8 2.2-10.3 5.2-.9-2.1z" color="#5d5a55"/><path d="M562.4 239.3l-.7 1.8-13.6 2.1 .4-1.7z" color="#575550"/><path d="M373.9 435l2.2-.3-.4 14.1-2.2 .5z" color="#56544f"/><path d="M364.5 434.1l2.3 .5-.4 14.8-2.2-.4z" color="#726f69"/><path d="M409.6 392.4l.8-.6-3.3 11.9-.8 .7z" color="#5c5a55"/><path d="M495.9 283.4l1.2 1.2-10.6 6.4-1.3-1.2z" color="#848079"/><path d="M510.5 282.5l1.2 2-10.7 5.4-1.3-1.9z" color="#9b988f"/><path d="M462.6 337.2l.3 .2-7 8.5-.4-.1z" color="#615f5a"/><path d="M470.3 329l.2 .4-7.6 8-.3-.2z" color="#625f5a"/><path d="M559.7 222.2l1 1.6-14.8 2.3-1.1-1.6z" color="#86837b"/><path d="M512.7 286.7l.9 2.2-10.4 5.3-1-2.2z" color="#9b978f"/><path d="M448.1 354.6l.9 .2-5.9 9.4-1-.1z" color="#585651"/><path d="M386.4 401.4l1.7 1-2.6 13.4-1.7-.9z" color="#74716b"/><path d="M440.8 363.7l1.3 .4-5.2 9.9-1.4-.2z" color="#56544f"/><path d="M511.7 284.5l1 2.2-10.5 5.3-1.2-2.1z" color="#a6a299"/><path d="M504.8 298.2l.5 1.8-9.7 5.7-.6-1.6z" color="#56544f"/><path d="M401.4 405.4l2-.1-2.4 12.3-2 .4z" color="#56544f"/><path d="M371.5 435.1l2.4-.1-.4 14.3-2.3 .2z" color="#575550"/><path d="M366.8 434.6l2.3 .4-.3 14.6-2.4-.2z" color="#6a6761"/><path d="M535 266.1l-.3 1.7-11.9 3.9 .2-1.6z" color="#575450"/><path d="M419.7 366.5l1.7 1.1-5 11.3-1.7-1.1z" color="#7f7b74"/><path d="M529 248.2l1.1 1.2-13.1 4.4-1.2-1.3z" color="#848079"/><path d="M369.1 435l2.4 .1-.3 14.4-2.4 .1z" color="#5e5c57"/><path d="M486.9 313.5l.2 1-8.6 7-.4-.9z" color="#5a5853"/><path d="M431.8 372.7l1.9 .7-4.6 10.4-2-.5z" color="#56544f"/><path d="M546.5 245.6l-1 .5-13.3 3.3 .9-.6z" color="#696660"/><path d="M382.6 418.8l.9-.8-1.5 13.6-.9 1z" color="#595752"/><path d="M495.6 305.7l.4 1.4-9.1 6.4-.6-1.2z" color="#56544f"/><path d="M562.8 237.3l-.4 2-13.9 2.2 .3-2.1z" color="#56544f"/><path d="M522.5 273l-.6 .9-11.4 4.8 .4-.9z" color="#62605a"/><path d="M560.7 223.8l.9 1.9-14.8 2.3-.9-1.9z" color="#89867e"/><path d="M497.1 284.6l1.3 1.6-10.6 6.4-1.3-1.6z" color="#87847c"/><path d="M388.1 402.4l2 .9-2.6 13.3-2-.8z" color="#74716b"/><path d="M399.3 405.4l2.1 0-2.4 12.6-2.2 .1z" color="#56544f"/><path d="M454.7 345.4l.8 .4-6.5 9-.9-.2z" color="#585651"/><path d="M421.4 367.6l1.9 1.2-5 11.2-1.9-1.1z" color="#827f78"/><path d="M504.1 296.3l.7 1.9-9.8 5.9-.9-1.8z" color="#56544f"/><path d="M429.7 371.9l2.1 .8-4.7 10.6-2.2-.6z" color="#56544f"/><path d="M478.1 320.6l.4 .9-8.2 7.5-.6-.7z" color="#5a5752"/><path d="M424.3 354.3l1.3 1.1-5.9 11.1-1.3-1.1z" color="#7e7b74"/><path d="M535.1 264.1l-.1 2-12 4-.2-1.9z" color="#56544f"/><path d="M408.4 392.7l1.2-.3-3.3 12-1.3 .5z" color="#56544f"/><path d="M414.7 380l.3-.6-4.2 11.7-.4 .7z" color="#696660"/><path d="M563 235l-.2 2.3-14 2.1 0-2.2z" color="#56544f"/><path d="M439.1 363.2l1.7 .5-5.3 10.1-1.8-.4z" color="#56544f"/><path d="M530.1 249.4l1.1 1.6-13 4.3-1.2-1.5z" color="#87837c"/><path d="M446.8 354l1.3 .6-6 9.5-1.3-.4z" color="#56544f"/><path d="M461.9 336.6l.7 .6-7.1 8.6-.8-.4z" color="#595752"/><path d="M390.1 403.3l2.2 .7-2.5 13.3-2.3-.7z" color="#726f69"/><path d="M561.6 225.7l.7 2.2-14.7 2.3-.8-2.2z" color="#8e8a82"/><path d="M423.3 368.8l2 1.1-4.9 11.1-2.1-1z" color="#817e77"/><path d="M397 405.1l2.3 .3-2.5 12.7-2.3-.1z" color="#575550"/><path d="M469.7 328.3l.6 .7-7.7 8.2-.7-.6z" color="#595752"/><path d="M427.5 371l2.2 .9-4.8 10.8-2.3-.8z" color="#5b5954"/><path d="M498.4 286.2l1.3 1.8-10.5 6.3-1.4-1.7z" color="#8f8b84"/><path d="M425.3 369.9l2.2 1.1-4.9 10.9-2.2-.9z" color="#716f68"/><path d="M485.2 289.8l1.3 1.2-10.4 7.3-1.2-1.2z" color="#848079"/><path d="M563 232.6l0 2.4-14.2 2.2-.2-2.3z" color="#5b5954"/><path d="M392.3 404l2.3 .7-2.5 13-2.3-.4z" color="#696661"/><path d="M394.6 404.7l2.4 .4-2.5 12.9-2.4-.3z" color="#5d5b56"/><path d="M495 304.1l.6 1.6-9.3 6.6-.8-1.6z" color="#56544f"/><path d="M503.2 294.2l.9 2.1-10 6-1-2z" color="#5c5954"/><path d="M486.3 312.3l.6 1.2-8.8 7.1-.7-1.1z" color="#56544f"/><path d="M381.3 419.5l1.3-.7-1.5 13.8-1.3 .9z" color="#56544f"/><path d="M562.3 227.9l.5 2.3-14.6 2.3-.6-2.3z" color="#928f87"/><path d="M547.4 244.6l-.9 1-13.4 3.2 .7-.9z" color="#62605a"/><path d="M562.8 230.2l.2 2.4-14.4 2.3-.4-2.4z" color="#8c8981"/><path d="M534.9 262l.2 2.1-12.3 4.1-.3-2.1z" color="#56544f"/><path d="M510.5 278.7l-.7 .4-11.1 5.7 .5-.4z" color="#6a6762"/><path d="M531.2 251l1.1 1.9-13 4.3-1.1-1.9z" color="#8b877f"/><path d="M499.7 288l1.3 1.9-10.5 6.3-1.3-1.9z" color="#a19d95"/><path d="M425.6 355.4l1.6 1.2-5.8 11-1.7-1.1z" color="#85817a"/><path d="M502.2 292l1 2.2-10.1 6.1-1.3-2.1z" color="#9d9991"/><path d="M522.8 271.7l-.3 1.3-11.6 4.8 .2-1.2z" color="#5b5954"/><path d="M437.3 362.4l1.8 .8-5.4 10.2-1.9-.7z" color="#56544f"/><path d="M501 289.9l1.2 2.1-10.4 6.2-1.3-2z" color="#ada99f"/><path d="M453.6 344.7l1.1 .7-6.6 9.2-1.3-.6z" color="#56544f"/><path d="M406.8 392.9l1.6-.2-3.4 12.2-1.6 .4z" color="#56544f"/><path d="M361.2 416.2l1.3 1-1.7 15.3-1.3-1z" color="#74716b"/><path d="M477.4 319.5l.7 1.1-8.4 7.7-.8-1z" color="#56544f"/><path d="M534.5 259.7l.4 2.3-12.4 4.1-.5-2.3z" color="#5d5a55"/><path d="M445.3 353.2l1.5 .8-6 9.7-1.7-.5z" color="#56544f"/><path d="M532.3 252.9l.9 2.2-12.9 4.2-1-2.1z" color="#928e86"/><path d="M431 343.5l1.3 1.1-6.7 10.8-1.3-1.1z" color="#827f78"/><path d="M486.5 291l1.3 1.6-10.3 7.2-1.4-1.5z" color="#87847c"/><path d="M494.1 302.3l.9 1.8-9.5 6.6-1-1.7z" color="#56544f"/><path d="M413.9 380.4l.8-.4-4.3 11.8-.8 .6z" color="#5d5b56"/><path d="M388.8 386.8l1.4 1.1-3.8 13.5-1.3-1.1z" color="#74716b"/><path d="M460.9 335.7l1 .9-7.2 8.8-1.1-.7z" color="#56544f"/><path d="M427.2 356.6l1.9 1.2-5.8 11-1.9-1.2z" color="#8a877f"/><path d="M468.9 327.3l.8 1-7.8 8.3-1-.9z" color="#56544f"/><path d="M534 257.3l.5 2.4-12.5 4.1-.8-2.3z" color="#959189"/><path d="M533.2 255.1l.8 2.2-12.8 4.2-.9-2.2z" color="#9a968d"/><path d="M379.7 420l1.6-.5-1.5 14-1.7 .7z" color="#56544f"/><path d="M435.3 361.4l2 1-5.5 10.3-2.1-.8z" color="#56544f"/><path d="M485.5 310.7l.8 1.6-8.9 7.2-1-1.4z" color="#56544f"/><path d="M474.9 297.1l1.2 1.2-9.9 8-1.2-1.2z" color="#848079"/><path d="M548.1 243.2l-.7 1.4-13.6 3.3 .5-1.4z" color="#5b5954"/><path d="M386.2 404.2l.4-.9-2.7 13.7-.4 1z" color="#65635d"/><path d="M429.1 357.8l2 1.3-5.8 10.8-2-1.1z" color="#8f8b84"/><path d="M433.2 360.3l2.1 1.1-5.6 10.5-2.2-.9z" color="#5f5c57"/><path d="M487.8 292.6l1.4 1.7-10.3 7.1-1.4-1.6z" color="#918d85"/><path d="M493.1 300.3l1 2-9.6 6.7-1.3-1.9z" color="#5a5853"/><path d="M523 270.1l-.2 1.6-11.7 4.9-.1-1.5z" color="#575450"/><path d="M431.1 359.1l2.1 1.2-5.7 10.7-2.2-1.1z" color="#817e77"/><path d="M362.5 417.2l1.7 1-1.7 15.2-1.7-.9z" color="#74716b"/><path d="M510.9 277.8l-.4 .9-11.3 5.7 .3-.8z" color="#62605a"/><path d="M404.9 392.9l1.9 0-3.4 12.4-2 .1z" color="#56544f"/><path d="M452.2 343.7l1.4 1-6.8 9.3-1.5-.8z" color="#56544f"/><path d="M443.5 352.3l1.8 .9-6.2 10-1.8-.8z" color="#56544f"/><path d="M432.3 344.6l1.6 1.2-6.7 10.8-1.6-1.2z" color="#87847c"/><path d="M438.5 333.1l1.3 1.1-7.5 10.4-1.3-1.1z" color="#848079"/><path d="M419.8 368.4l.3-.5-5.1 11.5-.3 .6z" color="#6a6761"/><path d="M476.4 318.1l1 1.4-8.5 7.8-1.1-1.2z" color="#56544f"/><path d="M390.2 387.9l1.7 1-3.8 13.5-1.7-1z" color="#74716b"/><path d="M515.8 252.5l1.2 1.3-13 5.4-1.2-1.2z" color="#848079"/><path d="M489.2 294.3l1.3 1.9-10.1 7.1-1.5-1.9z" color="#a7a39a"/><path d="M377.7 420.4l2-.4-1.6 14.2-2 .5z" color="#56544f"/><path d="M465 305.1l1.2 1.2-9.4 8.7-1.3-1.2z" color="#848079"/><path d="M491.8 298.2l1.3 2.1-9.9 6.8-1.3-1.9z" color="#9d9991"/><path d="M484.5 309l1 1.7-9.1 7.4-1.2-1.6z" color="#56544f"/><path d="M476.1 298.3l1.4 1.5-9.9 7.9-1.4-1.4z" color="#87847d"/><path d="M543.7 223.3l1.1 1.2-15 3.7-1.2-1.3z" color="#838079"/><path d="M490.5 296.2l1.3 2-9.9 7-1.5-1.9z" color="#b3afa5"/><path d="M459.7 334.6l1.2 1.1-7.3 9-1.4-1z" color="#56544f"/><path d="M467.8 326.1l1.1 1.2-8 8.4-1.2-1.1z" color="#56544f"/><path d="M412.7 380.6l1.2-.2-4.3 12-1.2 .3z" color="#575550"/><path d="M446.7 323.2l1.3 1.1-8.2 9.9-1.3-1.1z" color="#848079"/><path d="M455.5 313.8l1.3 1.2-8.8 9.3-1.3-1.1z" color="#848079"/><path d="M548.5 241.5l-.4 1.7-13.8 3.3 .3-1.7z" color="#575550"/><path d="M499.2 284.4l-.5 .4-10.8 6.5 .4-.3z" color="#6b6862"/><path d="M364.2 418.2l2 .8-1.7 15.1-2-.7z" color="#74716b"/><path d="M441.6 351.1l1.9 1.2-6.2 10.1-2-1z" color="#56544f"/><path d="M433.9 345.8l1.8 1.4-6.6 10.6-1.9-1.2z" color="#8d8a82"/><path d="M402.8 392.6l2.1 .3-3.5 12.5-2.1 0z" color="#56544f"/><path d="M522.8 268.2l.2 1.9-12 5-.3-1.9z" color="#56544f"/><path d="M533.1 248.8l-.9 .6-13.3 4.3 .8-.4z" color="#696661"/><path d="M450.5 342.6l1.7 1.1-6.9 9.5-1.8-.9z" color="#56544f"/><path d="M391.9 388.9l1.9 1-3.7 13.4-2-.9z" color="#74716b"/><path d="M375.5 420.5l2.2-.1-1.6 14.3-2.2 .3z" color="#56544f"/><path d="M439.8 334.2l1.6 1.3-7.5 10.3-1.6-1.2z" color="#87847c"/><path d="M483.2 307.1l1.3 1.9-9.3 7.5-1.4-1.8z" color="#595752"/><path d="M477.5 299.8l1.4 1.6-9.7 7.9-1.6-1.6z" color="#928f87"/><path d="M385.3 404.9l.9-.7-2.7 13.8-.9 .8z" color="#5b5853"/><path d="M475.2 316.5l1.2 1.6-8.6 8-1.4-1.5z" color="#56544f"/><path d="M439.6 349.9l2 1.2-6.3 10.3-2.1-1.1z" color="#67655f"/><path d="M435.7 347.2l1.9 1.3-6.5 10.6-2-1.3z" color="#9b978f"/><path d="M517 253.8l1.2 1.5-13 5.5-1.2-1.6z" color="#87837c"/><path d="M466.2 306.3l1.4 1.4-9.3 8.7-1.5-1.4z" color="#88847d"/><path d="M366.2 419l2.2 .6-1.6 15-2.3-.5z" color="#726f69"/><path d="M437.6 348.5l2 1.4-6.4 10.4-2.1-1.2z" color="#949188"/><path d="M511.1 276.6l-.2 1.2-11.4 5.8 0-1.1z" color="#5b5853"/><path d="M400.6 392.2l2.2 .4-3.5 12.8-2.3-.3z" color="#575450"/><path d="M544.8 224.5l1.1 1.6-15 3.7-1.1-1.6z" color="#86837c"/><path d="M458.2 333.3l1.5 1.3-7.5 9.1-1.7-1.1z" color="#56544f"/><path d="M373.2 420.4l2.3 .1-1.6 14.5-2.4 .1z" color="#575550"/><path d="M393.8 389.9l2.2 .9-3.7 13.2-2.2-.7z" color="#726f69"/><path d="M466.4 324.6l1.4 1.5-8.1 8.5-1.5-1.3z" color="#56544f"/><path d="M481.9 305.2l1.3 1.9-9.4 7.6-1.5-1.8z" color="#9a978e"/><path d="M478.9 301.4l1.5 1.9-9.7 7.8-1.5-1.8z" color="#aba79d"/><path d="M419.1 368.6l.7-.2-5.1 11.6-.8 .4z" color="#5e5c57"/><path d="M448 324.3l1.5 1.4-8.1 9.8-1.6-1.3z" color="#87847d"/><path d="M456.8 315l1.5 1.4-8.8 9.3-1.5-1.4z" color="#88847d"/><path d="M368.4 419.6l2.4 .5-1.7 14.9-2.3-.4z" color="#696761"/><path d="M548.8 239.4l-.3 2.1-13.9 3.3 .1-1.9z" color="#56544f"/><path d="M448.7 341.3l1.8 1.3-7 9.7-1.9-1.2z" color="#56544f"/><path d="M398.3 391.6l2.3 .6-3.6 12.9-2.4-.4z" color="#5d5a55"/><path d="M480.4 303.3l1.5 1.9-9.6 7.7-1.6-1.8z" color="#b8b3a9"/><path d="M370.8 420.1l2.4 .3-1.7 14.7-2.4-.1z" color="#5e5c56"/><path d="M396 390.8l2.3 .8-3.7 13.1-2.3-.7z" color="#686660"/><path d="M441.4 335.5l1.7 1.4-7.4 10.3-1.8-1.4z" color="#8f8c84"/><path d="M522.5 266.1l.3 2.1-12.1 5-.5-2z" color="#56544f"/><path d="M411.2 380.6l1.5 0-4.3 12.1-1.6 .2z" color="#56544f"/><path d="M473.8 314.7l1.4 1.8-8.8 8.1-1.5-1.6z" color="#575550"/><path d="M467.6 307.7l1.6 1.6-9.3 8.6-1.6-1.5z" color="#938f87"/><path d="M518.2 255.3l1.1 1.9-12.9 5.4-1.2-1.8z" color="#8c8880"/><path d="M425.9 357l.2-.4-6 11.3-.3 .5z" color="#6b6862"/><path d="M446.9 339.9l1.8 1.4-7.1 9.8-2-1.2z" color="#73706a"/><path d="M443.1 336.9l1.8 1.5-7.3 10.1-1.9-1.3z" color="#a19d95"/><path d="M456.5 331.9l1.7 1.4-7.7 9.3-1.8-1.3z" color="#56544f"/><path d="M499.5 283.6l-.3 .8-10.9 6.6 .1-.7z" color="#62605a"/><path d="M545.9 226.1l.9 1.9-14.9 3.7-1-1.9z" color="#8a867f"/><path d="M464.9 323l1.5 1.6-8.2 8.7-1.7-1.4z" color="#56544f"/><path d="M449.5 325.7l1.7 1.4-8.1 9.8-1.7-1.4z" color="#918d85"/><path d="M444.9 338.4l2 1.5-7.3 10-2-1.4z" color="#a7a39a"/><path d="M458.3 316.4l1.6 1.5-8.7 9.2-1.7-1.4z" color="#928f87"/><path d="M533.8 247.9l-.7 .9-13.4 4.5 .5-.9z" color="#62605a"/><path d="M472.3 312.9l1.5 1.8-8.9 8.3-1.7-1.7z" color="#949189"/><path d="M522 263.8l.5 2.3-12.3 5.1-.7-2.2z" color="#5d5b55"/><path d="M393.7 373.4l1.3 1-4.8 13.5-1.4-1.1z" color="#75726c"/><path d="M469.2 309.3l1.5 1.8-9.1 8.5-1.7-1.7z" color="#aca89f"/><path d="M548.8 237.2l0 2.2-14.1 3.5-.2-2.2z" color="#56544f"/><path d="M384.1 405.4l1.2-.5-2.7 13.9-1.3 .7z" color="#56544f"/><path d="M519.3 257.2l1 2.1-12.7 5.3-1.2-2z" color="#96928a"/><path d="M488.3 291l-.4 .3-10.5 7.3 .3-.2z" color="#6b6963"/><path d="M470.7 311.1l1.6 1.8-9.1 8.4-1.6-1.7z" color="#b9b4aa"/><path d="M511 275.1l.1 1.5-11.6 5.9-.2-1.5z" color="#56544f"/><path d="M454.7 330.3l1.8 1.6-7.8 9.4-1.8-1.4z" color="#7f7c75"/><path d="M521.2 261.5l.8 2.3-12.5 5.2-.9-2.2z" color="#98948c"/><path d="M451.2 327.1l1.7 1.6-8 9.7-1.8-1.5z" color="#a7a39a"/><path d="M463.2 321.3l1.7 1.7-8.4 8.9-1.8-1.6z" color="#8b8880"/><path d="M520.3 259.3l.9 2.2-12.6 5.3-1-2.2z" color="#9f9b93"/><path d="M459.9 317.9l1.7 1.7-8.7 9.1-1.7-1.6z" color="#aba79d"/><path d="M546.8 228l.8 2.2-14.8 3.6-.9-2.1z" color="#8f8c84"/><path d="M452.9 328.7l1.8 1.6-7.8 9.6-2-1.5z" color="#b3afa5"/><path d="M409.4 380.4l1.8 .2-4.4 12.3-1.9 0z" color="#56544f"/><path d="M461.6 319.6l1.6 1.7-8.5 9-1.8-1.6z" color="#b8b3a9"/><path d="M548.6 234.9l.2 2.3-14.3 3.5-.3-2.3z" color="#5c5a55"/><path d="M418 368.7l1.1-.1-5.2 11.8-1.2 .2z" color="#575550"/><path d="M547.6 230.2l.6 2.3-14.6 3.6-.8-2.3z" color="#959289"/><path d="M548.2 232.5l.4 2.4-14.4 3.5-.6-2.3z" color="#918d85"/><path d="M502.8 258l1.2 1.2-12.8 6.5-1.2-1.2z" color="#848079"/><path d="M395 374.4l1.7 1.1-4.8 13.4-1.7-1z" color="#78756e"/><path d="M390 390.4l.4-.8-3.8 13.7-.4 .9z" color="#67655f"/><path d="M425.2 357.1l.7-.1-6.1 11.4-.7 .2z" color="#5f5d58"/><path d="M364.2 400.8l1.3 1-3 15.4-1.3-1z" color="#74716b"/><path d="M382.4 405.7l1.7-.3-2.8 14.1-1.6 .5z" color="#56544f"/><path d="M499.5 282.5l0 1.1-11.1 6.7-.1-1.1z" color="#5a5853"/><path d="M534.3 246.5l-.5 1.4-13.6 4.5 .4-1.3z" color="#5b5954"/><path d="M510.7 273.2l.3 1.9-11.7 5.9-.4-1.8z" color="#56544f"/><path d="M407.4 379.9l2 .5-4.5 12.5-2.1-.3z" color="#56544f"/><path d="M488.4 290.3l-.1 .7-10.6 7.4 0-.6z" color="#62605a"/><path d="M396.7 375.5l1.9 1.1-4.8 13.3-1.9-1z" color="#7a7770"/><path d="M416.6 368.5l1.4 .2-5.3 11.9-1.5 0z" color="#56544f"/><path d="M504 259.2l1.2 1.6-12.7 6.4-1.3-1.5z" color="#87847c"/><path d="M405.2 379.3l2.2 .6-4.6 12.7-2.2-.4z" color="#56544f"/><path d="M519.7 253.3l-.8 .4-13.2 5.5 .7-.4z" color="#6a6761"/><path d="M365.5 401.8l1.7 1-3 15.4-1.7-1z" color="#74716b"/><path d="M380.5 405.9l1.9-.2-2.7 14.3-2 .4z" color="#56544f"/><path d="M510.2 271.2l.5 2-11.8 6-.7-1.9z" color="#56544f"/><path d="M398.6 376.6l2.1 1-4.7 13.2-2.2-.9z" color="#77746d"/><path d="M402.9 378.5l2.3 .8-4.6 12.9-2.3-.6z" color="#5c5a55"/><path d="M400.7 377.6l2.2 .9-4.6 13.1-2.3-.8z" color="#696661"/><path d="M534.6 244.8l-.3 1.7-13.7 4.6 .1-1.7z" color="#575450"/><path d="M389.2 390.9l.8-.5-3.8 13.8-.9 .7z" color="#5c5a55"/><path d="M528.6 226.9l1.2 1.3-15.1 4.9-1.1-1.2z" color="#848079"/><path d="M499.3 281l.2 1.5-11.2 6.7-.4-1.3z" color="#56544f"/><path d="M424.2 357l1 .1-6.1 11.5-1.1 .1z" color="#575550"/><path d="M432.2 345.9l.5 0-6.8 11.1-.7 .1z" color="#605e58"/><path d="M505.2 260.8l1.2 1.8-12.6 6.4-1.3-1.8z" color="#8d8a82"/><path d="M399.5 360.1l1.4 1.1-5.9 13.2-1.3-1z" color="#79766f"/><path d="M509.5 269l.7 2.2-12 6.1-.9-2.1z" color="#5d5a55"/><path d="M367.2 402.8l2 .9-3 15.3-2-.8z" color="#74716b"/><path d="M477.7 297.8l0 .6-10.2 8.2-.1-.5z" color="#62605a"/><path d="M378.4 405.8l2.1 .1-2.8 14.5-2.2 .1z" color="#56544f"/><path d="M414.9 368.1l1.7 .4-5.4 12.1-1.8-.2z" color="#56544f"/><path d="M488.3 289.2l.1 1.1-10.7 7.5-.3-.9z" color="#5a5853"/><path d="M506.4 262.6l1.2 2-12.6 6.4-1.2-2z" color="#9b988f"/><path d="M508.6 266.8l.9 2.2-12.2 6.2-1.1-2.1z" color="#9b978f"/><path d="M507.6 264.6l1 2.2-12.4 6.3-1.2-2.1z" color="#a6a299"/><path d="M490 264.5l1.2 1.2-12.5 7.5-1.2-1.2z" color="#848079"/><path d="M534.7 242.9l-.1 1.9-13.9 4.6-.1-1.9z" color="#56544f"/><path d="M369.2 403.7l2.2 .8-3 15.1-2.2-.6z" color="#726f69"/><path d="M529.8 228.2l1.1 1.6-15 4.9-1.2-1.6z" color="#87837c"/><path d="M376.1 405.6l2.3 .2-2.9 14.7-2.3-.1z" color="#575550"/><path d="M520.2 252.4l-.5 .9-13.3 5.5 .4-.8z" color="#62605a"/><path d="M440 335.1l.4 .2-7.7 10.6-.5 0z" color="#615e59"/><path d="M400.9 361.2l1.6 1.1-5.8 13.2-1.7-1.1z" color="#7f7b74"/><path d="M498.9 279.2l.4 1.8-11.4 6.9-.6-1.7z" color="#56544f"/><path d="M371.4 404.5l2.3 .6-2.9 15-2.4-.5z" color="#696661"/><path d="M373.7 405.1l2.4 .5-2.9 14.8-2.4-.3z" color="#5d5b56"/><path d="M388 391.3l1.2-.4-3.9 14-1.2 .5z" color="#56544f"/><path d="M467.4 306.1l.1 .5-9.7 8.9-.2-.4z" color="#62605a"/><path d="M422.9 356.6l1.3 .4-6.2 11.7-1.4-.2z" color="#56544f"/><path d="M412.9 367.4l2 .7-5.5 12.3-2-.5z" color="#56544f"/><path d="M431.3 345.6l.9 .3-7 11.2-1-.1z" color="#585651"/><path d="M448.4 324.8l.4 .3-8.4 10.2-.4-.2z" color="#615f5a"/><path d="M457.6 315.1l.2 .4-9 9.6-.4-.3z" color="#625f5a"/><path d="M534.5 240.7l.2 2.2-14.1 4.6-.3-2.1z" color="#56544f"/><path d="M394.9 376.6l.4-.6-4.9 13.6-.4 .8z" color="#696660"/><path d="M530.9 229.8l1 1.9-14.9 4.9-1.1-1.9z" color="#8b877f"/><path d="M487.9 287.9l.4 1.3-10.9 7.7-.6-1.3z" color="#56544f"/><path d="M402.5 362.3l1.9 1.2-5.8 13.1-1.9-1.1z" color="#827f78"/><path d="M491.2 265.7l1.3 1.5-12.5 7.5-1.3-1.5z" color="#87847c"/><path d="M477.4 296.9l.3 .9-10.3 8.3-.4-.8z" color="#5a5853"/><path d="M410.8 366.6l2.1 .8-5.5 12.5-2.2-.6z" color="#56544f"/><path d="M498.2 277.3l.7 1.9-11.6 7-.9-1.8z" color="#56544f"/><path d="M534.2 238.4l.3 2.3-14.2 4.7-.6-2.2z" color="#5d5a55"/><path d="M531.9 231.7l.9 2.1-14.7 4.8-1.1-2z" color="#928e86"/><path d="M404.4 363.5l2.1 1.1-5.8 13-2.1-1z" color="#817e77"/><path d="M406.4 347.1l1.3 1.1-6.8 13-1.4-1.1z" color="#7e7b74"/><path d="M520.6 251.1l-.4 1.3-13.4 5.6 .2-1.3z" color="#5b5954"/><path d="M408.6 365.7l2.2 .9-5.6 12.7-2.3-.8z" color="#5b5954"/><path d="M421.3 356l1.6 .6-6.3 11.9-1.7-.4z" color="#56544f"/><path d="M386.4 391.4l1.6-.1-3.9 14.1-1.7 .3z" color="#56544f"/><path d="M406.5 364.6l2.1 1.1-5.7 12.8-2.2-.9z" color="#716f68"/><path d="M533.6 236.1l.6 2.3-14.5 4.8-.7-2.3z" color="#959189"/><path d="M439.2 334.7l.8 .4-7.8 10.8-.9-.3z" color="#585651"/><path d="M532.8 233.8l.8 2.3-14.6 4.8-.9-2.3z" color="#9a968d"/><path d="M492.5 267.2l1.3 1.8-12.4 7.4-1.4-1.7z" color="#8f8b84"/><path d="M506.4 258.8l-.7 .4-12.9 6.6 .5-.4z" color="#6a6762"/><path d="M497.3 275.2l.9 2.1-11.8 7.1-1.1-2z" color="#5c5954"/><path d="M368.4 385.3l1.4 1.1-4.3 15.4-1.3-1z" color="#74716b"/><path d="M467 305.3l.4 .8-9.8 9-.5-.7z" color="#5a5752"/><path d="M430.1 345.1l1.2 .5-7.1 11.4-1.3-.4z" color="#56544f"/><path d="M477.5 272l1.2 1.2-12 8.4-1.3-1.2z" color="#848079"/><path d="M487.3 286.2l.6 1.7-11.1 7.7-.8-1.5z" color="#56544f"/><path d="M493.8 269l1.2 2-12.2 7.3-1.4-1.9z" color="#a19d95"/><path d="M447.8 324.3l.6 .5-8.4 10.3-.8-.4z" color="#595752"/><path d="M496.2 273.1l1.1 2.1-12 7.2-1.2-2z" color="#9d9991"/><path d="M457.1 314.4l.5 .7-9.2 9.7-.6-.5z" color="#595752"/><path d="M394.2 377l.7-.4-4.9 13.8-.8 .5z" color="#5d5b56"/><path d="M476.8 295.6l.6 1.3-10.4 8.4-.7-1.2z" color="#56544f"/><path d="M495 271l1.2 2.1-12.1 7.3-1.3-2.1z" color="#ada99f"/><path d="M407.7 348.2l1.7 1.2-6.9 12.9-1.6-1.1z" color="#85817a"/><path d="M419.4 355.2l1.9 .8-6.4 12.1-2-.7z" color="#56544f"/><path d="M384.5 391.4l1.9 0-4 14.3-1.9 .2z" color="#56544f"/><path d="M520.7 249.4l-.1 1.7-13.6 5.6-.1-1.5z" color="#575450"/><path d="M369.8 386.4l1.7 1-4.3 15.4-1.7-1z" color="#74716b"/><path d="M478.7 273.2l1.3 1.5-12 8.4-1.3-1.5z" color="#87847c"/><path d="M438 334l1.2 .7-7.9 10.9-1.2-.5z" color="#56544f"/><path d="M486.4 284.4l.9 1.8-11.3 7.9-1-1.8z" color="#56544f"/><path d="M513.6 231.9l1.1 1.2-14.8 6.2-1.2-1.2z" color="#848079"/><path d="M428.5 344.3l1.6 .8-7.2 11.5-1.6-.6z" color="#56544f"/><path d="M414.3 334.5l1.3 1.1-7.9 12.6-1.3-1.1z" color="#827f78"/><path d="M409.4 349.4l1.8 1.3-6.8 12.8-1.9-1.2z" color="#8a877f"/><path d="M506.8 258l-.4 .8-13.1 6.6 .3-.7z" color="#62605a"/><path d="M417.4 354.2l2 1-6.5 12.2-2.1-.8z" color="#56544f"/><path d="M466.3 304.1l.7 1.2-9.9 9.1-.9-1z" color="#56544f"/><path d="M382.4 391.1l2.1 .3-4 14.5-2.1-.1z" color="#56544f"/><path d="M476 294.1l.8 1.5-10.5 8.5-1-1.4z" color="#56544f"/><path d="M465.4 280.4l1.3 1.2-11.6 9.3-1.3-1.1z" color="#848079"/><path d="M446.8 323.4l1 .9-8.6 10.4-1.2-.7z" color="#56544f"/><path d="M400.9 363.1l.3-.5-5.9 13.4-.4 .6z" color="#6a6761"/><path d="M411.2 350.7l2 1.2-6.7 12.7-2.1-1.1z" color="#8f8b84"/><path d="M415.3 353.1l2.1 1.1-6.6 12.4-2.2-.9z" color="#5f5c57"/><path d="M371.5 387.4l1.9 1-4.2 15.3-2-.9z" color="#74716b"/><path d="M456.2 313.4l.9 1-9.3 9.9-1-.9z" color="#56544f"/><path d="M393 377.2l1.2-.2-5 13.9-1.2 .4z" color="#575550"/><path d="M480 274.7l1.4 1.7-11.9 8.4-1.5-1.7z" color="#918d85"/><path d="M520.6 247.5l.1 1.9-13.8 5.8-.3-1.9z" color="#56544f"/><path d="M413.2 351.9l2.1 1.2-6.7 12.6-2.1-1.1z" color="#817e77"/><path d="M485.3 282.4l1.1 2-11.4 7.9-1.2-1.8z" color="#5a5853"/><path d="M380.2 390.7l2.2 .4-4 14.7-2.3-.2z" color="#575450"/><path d="M514.7 233.1l1.2 1.6-14.8 6.2-1.2-1.6z" color="#87837c"/><path d="M426.8 343.3l1.7 1-7.2 11.7-1.9-.8z" color="#56544f"/><path d="M415.6 335.6l1.6 1.3-7.8 12.5-1.7-1.2z" color="#87847c"/><path d="M373.4 388.4l2.2 .9-4.2 15.2-2.2-.8z" color="#726f69"/><path d="M481.4 276.4l1.4 1.9-11.8 8.3-1.5-1.8z" color="#a7a39a"/><path d="M484.1 280.4l1.2 2-11.5 8.1-1.4-2z" color="#9d9991"/><path d="M436.6 333l1.4 1-7.9 11.1-1.6-.8z" color="#56544f"/><path d="M423 322.4l1.3 1.1-8.7 12.1-1.3-1.1z" color="#848079"/><path d="M482.8 278.3l1.3 2.1-11.7 8.1-1.4-1.9z" color="#b3afa5"/><path d="M493.3 265.4l-.5 .4-12.7 7.6 .4-.3z" color="#6b6862"/><path d="M377.9 390.1l2.3 .6-4.1 14.9-2.4-.5z" color="#5d5a55"/><path d="M375.6 389.3l2.3 .8-4.2 15-2.3-.6z" color="#686660"/><path d="M465.3 302.7l1 1.4-10.1 9.3-1.1-1.2z" color="#56544f"/><path d="M475 292.3l1 1.8-10.7 8.6-1.2-1.6z" color="#56544f"/><path d="M466.7 281.6l1.3 1.5-11.5 9.3-1.4-1.5z" color="#87847d"/><path d="M453.8 289.8l1.3 1.1-11 10.2-1.2-1.2z" color="#848079"/><path d="M520.3 245.4l.3 2.1-14 5.8-.5-2z" color="#56544f"/><path d="M507 256.7l-.2 1.3-13.2 6.7 0-1.2z" color="#5b5853"/><path d="M445.5 322.3l1.3 1.1-8.8 10.6-1.4-1z" color="#56544f"/><path d="M515.9 234.7l1.1 1.9-14.7 6.1-1.2-1.8z" color="#8c8880"/><path d="M424.9 342.2l1.9 1.1-7.4 11.9-2-1z" color="#56544f"/><path d="M417.2 336.9l1.7 1.3-7.7 12.5-1.8-1.3z" color="#8d8a82"/><path d="M455.1 312.2l1.1 1.2-9.4 10-1.3-1.1z" color="#56544f"/><path d="M432.5 310.8l1.3 1.2-9.5 11.5-1.3-1.1z" color="#848079"/><path d="M391.5 377.2l1.5 0-5 14.1-1.6 .1z" color="#56544f"/><path d="M442.9 299.9l1.2 1.2-10.3 10.9-1.3-1.2z" color="#848079"/><path d="M400.2 363.3l.7-.2-6 13.5-.7 .4z" color="#5e5c57"/><path d="M519.7 243.2l.6 2.2-14.2 5.9-.7-2.2z" color="#5d5b55"/><path d="M435 331.9l1.6 1.1-8.1 11.3-1.7-1z" color="#56544f"/><path d="M473.8 290.5l1.2 1.8-10.9 8.8-1.4-1.7z" color="#595752"/><path d="M468 283.1l1.5 1.7-11.5 9.2-1.5-1.6z" color="#928f87"/><path d="M422.9 340.9l2 1.3-7.5 12-2.1-1.1z" color="#67655f"/><path d="M418.9 338.2l2 1.4-7.7 12.3-2-1.2z" color="#9b978f"/><path d="M424.3 323.5l1.5 1.3-8.6 12.1-1.6-1.3z" color="#87847c"/><path d="M517 236.6l1.1 2-14.6 6.1-1.2-2z" color="#96928a"/><path d="M420.9 339.6l2 1.3-7.6 12.2-2.1-1.2z" color="#949188"/><path d="M464.1 301.1l1.2 1.6-10.2 9.5-1.4-1.5z" color="#56544f"/><path d="M374 370l1.3 1-5.5 15.4-1.4-1.1z" color="#75726c"/><path d="M519 240.9l.7 2.3-14.3 5.9-.9-2.2z" color="#98948c"/><path d="M455.1 290.9l1.4 1.5-10.9 10.1-1.5-1.4z" color="#88847d"/><path d="M518.1 238.6l.9 2.3-14.5 6-1-2.2z" color="#9f9b93"/><path d="M472.4 288.5l1.4 2-11.1 8.9-1.5-1.8z" color="#9a978e"/><path d="M469.5 284.8l1.5 1.8-11.4 9.2-1.6-1.8z" color="#aba79d"/><path d="M444 321l1.5 1.3-8.9 10.7-1.6-1.1z" color="#56544f"/><path d="M471 286.6l1.4 1.9-11.2 9.1-1.6-1.8z" color="#b8b3a9"/><path d="M493.6 264.7l-.3 .7-12.8 7.7 .2-.7z" color="#62605a"/><path d="M408 349.8l.2-.3-7 13.1-.3 .5z" color="#6b6862"/><path d="M453.7 310.7l1.4 1.5-9.6 10.1-1.5-1.3z" color="#56544f"/><path d="M506.9 255.2l.1 1.5-13.4 6.8-.2-1.5z" color="#56544f"/><path d="M433.8 312l1.5 1.3-9.5 11.5-1.5-1.3z" color="#87847d"/><path d="M433.2 330.6l1.8 1.3-8.2 11.4-1.9-1.1z" color="#56544f"/><path d="M444.1 301.1l1.5 1.4-10.3 10.8-1.5-1.3z" color="#88847d"/><path d="M425.8 324.8l1.8 1.4-8.7 12-1.7-1.3z" color="#8f8c84"/><path d="M389.7 377l1.8 .2-5.1 14.2-1.9 0z" color="#56544f"/><path d="M462.7 299.4l1.4 1.7-10.4 9.6-1.5-1.6z" color="#575550"/><path d="M456.5 292.4l1.5 1.6-10.8 10-1.6-1.5z" color="#938f87"/><path d="M431.3 329.2l1.9 1.4-8.3 11.6-2-1.3z" color="#73706a"/><path d="M427.6 326.2l1.8 1.5-8.5 11.9-2-1.4z" color="#a19d95"/><path d="M480.5 273.1l-.4 .3-12.2 8.6 .3-.3z" color="#6b6963"/><path d="M399.2 363.4l1-.1-6 13.7-1.2 .2z" color="#575550"/><path d="M375.3 371l1.7 1.1-5.5 15.3-1.7-1z" color="#78756e"/><path d="M442.4 319.5l1.6 1.5-9 10.9-1.8-1.3z" color="#56544f"/><path d="M498.7 238.1l1.2 1.2-14.6 7.4-1.3-1.2z" color="#848079"/><path d="M429.4 327.7l1.9 1.5-8.4 11.7-2-1.3z" color="#a7a39a"/><path d="M435.3 313.3l1.7 1.5-9.4 11.4-1.8-1.4z" color="#918d85"/><path d="M452.2 309.1l1.5 1.6-9.7 10.3-1.6-1.5z" color="#56544f"/><path d="M461.2 297.6l1.5 1.8-10.5 9.7-1.6-1.7z" color="#949189"/><path d="M458 294l1.6 1.8-10.7 9.9-1.7-1.7z" color="#aca89f"/><path d="M445.6 302.5l1.6 1.5-10.2 10.8-1.7-1.5z" color="#928f87"/><path d="M459.6 295.8l1.6 1.8-10.6 9.8-1.7-1.7z" color="#b9b4aa"/><path d="M387.7 376.5l2 .5-5.2 14.4-2.1-.3z" color="#56544f"/><path d="M506.6 253.3l.3 1.9-13.5 6.8-.5-1.7z" color="#56544f"/><path d="M440.6 318l1.8 1.5-9.2 11.1-1.9-1.4z" color="#7f7c75"/><path d="M437 314.8l1.8 1.6-9.4 11.3-1.8-1.5z" color="#a7a39a"/><path d="M450.6 307.4l1.6 1.7-9.8 10.4-1.8-1.5z" color="#8b8880"/><path d="M447.2 304l1.7 1.7-10.1 10.7-1.8-1.6z" color="#aba79d"/><path d="M438.8 316.4l1.8 1.6-9.3 11.2-1.9-1.5z" color="#b3afa5"/><path d="M448.9 305.7l1.7 1.7-10 10.6-1.8-1.6z" color="#b8b3a9"/><path d="M377 372.1l1.9 1.1-5.5 15.2-1.9-1z" color="#7a7770"/><path d="M493.6 263.5l0 1.2-12.9 7.7-.1-1.1z" color="#5a5853"/><path d="M407.3 349.9l.7-.1-7.1 13.3-.7 .2z" color="#5f5d58"/><path d="M499.9 239.3l1.2 1.6-14.6 7.4-1.2-1.6z" color="#87847c"/><path d="M385.5 375.9l2.2 .6-5.3 14.6-2.2-.4z" color="#56544f"/><path d="M378.9 373.2l2.1 1-5.4 15.1-2.2-.9z" color="#77746d"/><path d="M397.7 363.2l1.5 .2-6.2 13.8-1.5 0z" color="#56544f"/><path d="M506.1 251.3l.5 2-13.7 7-.7-2z" color="#56544f"/><path d="M383.2 375.1l2.3 .8-5.3 14.8-2.3-.6z" color="#5c5a55"/><path d="M480.7 272.4l-.2 .7-12.3 8.6 0-.6z" color="#62605a"/><path d="M381 374.2l2.2 .9-5.3 15-2.3-.8z" color="#696661"/><path d="M501.1 240.9l1.2 1.8-14.5 7.3-1.3-1.7z" color="#8d8a82"/><path d="M505.4 249.1l.7 2.2-13.9 7-.9-2z" color="#5d5a55"/><path d="M493.4 262l.2 1.5-13 7.8-.4-1.3z" color="#56544f"/><path d="M380.7 354.8l1.3 1.1-6.7 15.1-1.3-1z" color="#79766f"/><path d="M502.3 242.7l1.2 2-14.4 7.3-1.3-2z" color="#9b988f"/><path d="M406.3 349.8l1 .1-7.1 13.4-1 .1z" color="#575550"/><path d="M504.5 246.9l.9 2.2-14.1 7.2-1-2.2z" color="#9b978f"/><path d="M396 362.8l1.7 .4-6.2 14-1.8-.2z" color="#56544f"/><path d="M503.5 244.7l1 2.2-14.2 7.2-1.2-2.1z" color="#a6a299"/><path d="M415.4 336.9l.6 .1-8 12.8-.7 .1z" color="#605e58"/><path d="M480.6 271.3l.1 1.1-12.5 8.7-.3-.9z" color="#5a5853"/><path d="M484 245.5l1.3 1.2-14.3 8.6-1.2-1.2z" color="#848079"/><path d="M468.2 281.1l0 .6-11.8 9.6-.1-.5z" color="#62605a"/><path d="M382 355.9l1.6 1.1-6.6 15.1-1.7-1.1z" color="#7f7b74"/><path d="M492.9 260.3l.5 1.7-13.2 8-.7-1.7z" color="#56544f"/><path d="M394 362.1l2 .7-6.3 14.2-2-.5z" color="#56544f"/><path d="M405 349.4l1.3 .4-7.1 13.6-1.5-.2z" color="#56544f"/><path d="M424.4 324.4l.5 .2-8.9 12.4-.6-.1z" color="#615e59"/><path d="M383.6 357l1.9 1.2-6.6 15-1.9-1.1z" color="#827f78"/><path d="M485.3 246.7l1.2 1.6-14.2 8.5-1.3-1.5z" color="#87847c"/><path d="M391.9 361.4l2.1 .7-6.3 14.4-2.2-.6z" color="#56544f"/><path d="M456.3 290.8l.1 .5-11.2 10.3-.3-.3z" color="#62605a"/><path d="M414.5 336.7l.9 .2-8.1 13-1-.1z" color="#585651"/><path d="M492.2 258.3l.7 2-13.4 8-.8-1.8z" color="#56544f"/><path d="M480.2 270l.4 1.3-12.7 8.9-.5-1.3z" color="#56544f"/><path d="M385.5 358.2l2.1 1.1-6.6 14.9-2.1-1z" color="#817e77"/><path d="M389.8 360.4l2.1 1-6.4 14.5-2.3-.8z" color="#5b5954"/><path d="M434.3 312.5l.3 .3-9.7 11.8-.5-.2z" color="#615f5a"/><path d="M467.9 280.2l.3 .9-11.9 9.7-.5-.9z" color="#5a5853"/><path d="M387.6 359.3l2.2 1.1-6.6 14.7-2.2-.9z" color="#716f68"/><path d="M444.9 301.3l.3 .3-10.6 11.2-.3-.3z" color="#625f5a"/><path d="M388.5 340l1.4 1.1-7.9 14.8-1.3-1.1z" color="#7e7b74"/><path d="M486.5 248.3l1.3 1.7-14.1 8.5-1.4-1.7z" color="#8f8b84"/><path d="M403.4 348.9l1.6 .5-7.3 13.8-1.7-.4z" color="#56544f"/><path d="M491.3 256.3l.9 2-13.5 8.2-1.1-2z" color="#5c5954"/><path d="M487.8 250l1.3 2-14 8.4-1.4-1.9z" color="#a19d95"/><path d="M490.3 254.1l1 2.2-13.7 8.2-1.2-2z" color="#9d9991"/><path d="M423.6 324l.8 .4-9 12.5-.9-.2z" color="#585651"/><path d="M469.8 254.1l1.2 1.2-13.8 9.6-1.2-1.2z" color="#848079"/><path d="M489.1 252l1.2 2.1-13.9 8.4-1.3-2.1z" color="#ada99f"/><path d="M479.5 268.3l.7 1.7-12.8 8.9-.8-1.5z" color="#56544f"/><path d="M413.3 336.1l1.2 .6-8.2 13.1-1.3-.4z" color="#56544f"/><path d="M455.8 289.9l.5 .9-11.4 10.5-.5-.8z" color="#5a5752"/><path d="M389.9 341.1l1.6 1.2-7.9 14.7-1.6-1.1z" color="#85817a"/><path d="M401.5 348.1l1.9 .8-7.4 13.9-2-.7z" color="#56544f"/><path d="M467.4 278.9l.5 1.3-12.1 9.7-.7-1.1z" color="#56544f"/><path d="M433.6 311.9l.7 .6-9.9 11.9-.8-.4z" color="#595752"/><path d="M444.4 300.5l.5 .8-10.6 11.2-.7-.6z" color="#595752"/><path d="M471 255.3l1.3 1.5-13.7 9.6-1.4-1.5z" color="#87847c"/><path d="M391.5 342.3l1.8 1.2-7.8 14.7-1.9-1.2z" color="#8a877f"/><path d="M478.7 266.5l.8 1.8-12.9 9.1-1.1-1.7z" color="#56544f"/><path d="M399.5 347.1l2 1-7.5 14-2.1-.7z" color="#56544f"/><path d="M411.8 335.3l1.5 .8-8.3 13.3-1.6-.5z" color="#56544f"/><path d="M397.5 325.6l1.3 1.1-8.9 14.4-1.4-1.1z" color="#827f78"/><path d="M422.5 323.3l1.1 .7-9.1 12.7-1.2-.6z" color="#56544f"/><path d="M393.3 343.5l2 1.3-7.7 14.5-2.1-1.1z" color="#8f8b84"/><path d="M397.4 346l2.1 1.1-7.6 14.3-2.1-1z" color="#5f5c57"/><path d="M455.1 288.8l.7 1.1-11.4 10.6-.9-1z" color="#56544f"/><path d="M395.3 344.8l2.1 1.2-7.6 14.4-2.2-1.1z" color="#817e77"/><path d="M472.3 256.8l1.4 1.7-13.7 9.6-1.4-1.7z" color="#918d85"/><path d="M466.6 277.4l.8 1.5-12.3 9.9-.9-1.4z" color="#56544f"/><path d="M477.6 264.5l1.1 2-13.2 9.2-1.2-1.9z" color="#5a5853"/><path d="M456 263.7l1.2 1.2-13.2 10.7-1.3-1.2z" color="#848079"/><path d="M432.6 311.1l1 .8-10 12.1-1.1-.7z" color="#56544f"/><path d="M443.5 299.5l.9 1-10.8 11.4-1-.8z" color="#56544f"/><path d="M473.7 258.5l1.4 1.9-13.6 9.5-1.5-1.8z" color="#a7a39a"/><path d="M476.4 262.5l1.2 2-13.3 9.3-1.3-1.9z" color="#9d9991"/><path d="M410 334.4l1.8 .9-8.4 13.6-1.9-.8z" color="#56544f"/><path d="M398.8 326.7l1.6 1.2-8.9 14.4-1.6-1.2z" color="#87847c"/><path d="M475.1 260.4l1.3 2.1-13.4 9.4-1.5-2z" color="#b3afa5"/><path d="M421.1 322.4l1.4 .9-9.2 12.8-1.5-.8z" color="#56544f"/><path d="M407.5 311.7l1.3 1.1-10 13.9-1.3-1.1z" color="#848079"/><path d="M465.5 275.7l1.1 1.7-12.4 10-1.2-1.6z" color="#56544f"/><path d="M457.2 264.9l1.4 1.5-13.2 10.6-1.4-1.4z" color="#87847d"/><path d="M454.2 287.4l.9 1.4-11.6 10.7-1.1-1.2z" color="#56544f"/><path d="M442.7 274.4l1.3 1.2-12.6 11.6-1.2-1.2z" color="#848079"/><path d="M408.1 333.2l1.9 1.2-8.5 13.7-2-1z" color="#56544f"/><path d="M400.4 327.9l1.8 1.4-8.9 14.2-1.8-1.2z" color="#8d8a82"/><path d="M431.4 310l1.2 1.1-10.1 12.2-1.4-.9z" color="#56544f"/><path d="M442.4 298.3l1.1 1.2-10.9 11.6-1.2-1.1z" color="#56544f"/><path d="M418.4 298.5l1.3 1.1-10.9 13.2-1.3-1.1z" color="#848079"/><path d="M406.1 332l2 1.2-8.6 13.9-2.1-1.1z" color="#67655f"/><path d="M402.2 329.3l1.9 1.3-8.8 14.2-2-1.3z" color="#9b978f"/><path d="M464.3 273.8l1.2 1.9-12.5 10.1-1.4-1.7z" color="#595752"/><path d="M430.2 286l1.2 1.2-11.7 12.4-1.3-1.1z" color="#848079"/><path d="M458.6 266.4l1.4 1.7-13.1 10.6-1.5-1.7z" color="#928f87"/><path d="M419.5 321.2l1.6 1.2-9.3 12.9-1.8-.9z" color="#56544f"/><path d="M404.1 330.6l2 1.4-8.7 14-2.1-1.2z" color="#949188"/><path d="M408.8 312.8l1.5 1.3-9.9 13.8-1.6-1.2z" color="#87847c"/><path d="M453 285.8l1.2 1.6-11.8 10.9-1.3-1.5z" color="#56544f"/><path d="M444 275.6l1.4 1.4-12.5 11.6-1.5-1.4z" color="#88847d"/><path d="M463 271.9l1.3 1.9-12.7 10.3-1.5-1.9z" color="#9a978e"/><path d="M460 268.1l1.5 1.8-13 10.5-1.6-1.7z" color="#aba79d"/><path d="M461.5 269.9l1.5 2-12.9 10.3-1.6-1.8z" color="#b8b3a9"/><path d="M429.9 308.7l1.5 1.3-10.3 12.4-1.6-1.2z" color="#56544f"/><path d="M417.7 319.9l1.8 1.3-9.5 13.2-1.9-1.2z" color="#56544f"/><path d="M441.1 296.8l1.3 1.5-11 11.7-1.5-1.3z" color="#56544f"/><path d="M410.3 314.1l1.7 1.5-9.8 13.7-1.8-1.4z" color="#8f8c84"/><path d="M419.7 299.6l1.5 1.4-10.9 13.1-1.5-1.3z" color="#87847d"/><path d="M431.4 287.2l1.5 1.4-11.7 12.4-1.5-1.4z" color="#88847d"/><path d="M451.6 284.1l1.4 1.7-11.9 11-1.6-1.6z" color="#575550"/><path d="M445.4 277l1.5 1.7-12.4 11.5-1.6-1.6z" color="#938f87"/><path d="M415.8 318.5l1.9 1.4-9.6 13.3-2-1.2z" color="#73706a"/><path d="M412 315.6l1.9 1.4-9.8 13.6-1.9-1.3z" color="#a19d95"/><path d="M413.9 317l1.9 1.5-9.7 13.5-2-1.4z" color="#a7a39a"/><path d="M428.2 307.2l1.7 1.5-10.4 12.5-1.8-1.3z" color="#56544f"/><path d="M450.1 282.2l1.5 1.9-12.1 11.1-1.6-1.7z" color="#949189"/><path d="M421.2 301l1.7 1.5-10.9 13.1-1.7-1.5z" color="#918d85"/><path d="M446.9 278.7l1.6 1.7-12.3 11.4-1.7-1.6z" color="#aca89f"/><path d="M439.5 295.2l1.6 1.6-11.2 11.9-1.7-1.5z" color="#56544f"/><path d="M432.9 288.6l1.6 1.6-11.6 12.3-1.7-1.5z" color="#928f87"/><path d="M448.5 280.4l1.6 1.8-12.2 11.3-1.7-1.7z" color="#b9b4aa"/><path d="M426.4 305.6l1.8 1.6-10.5 12.7-1.9-1.4z" color="#7f7c75"/><path d="M422.9 302.5l1.7 1.6-10.7 12.9-1.9-1.4z" color="#a7a39a"/><path d="M437.9 293.5l1.6 1.7-11.3 12-1.8-1.6z" color="#8b8880"/><path d="M434.5 290.2l1.7 1.6-11.6 12.3-1.7-1.6z" color="#aba79d"/><path d="M424.6 304.1l1.8 1.5-10.6 12.9-1.9-1.5z" color="#b3afa5"/><path d="M436.2 291.8l1.7 1.7-11.5 12.1-1.8-1.5z" color="#b8b3a9"/></g><g stroke="#ecebe4" stroke-width="2.8" stroke-linecap="butt" fill="none"><path d="M530.5 360.5L528.1 361.4" stroke-opacity="0.01"/><path d="M528.1 361.4L525.7 362.4" stroke-opacity="0.07"/><path d="M525.7 362.4L523.3 363.5" stroke-opacity="0.15"/><path d="M523.3 363.5L521.0 364.9" stroke-opacity="0.23"/><path d="M521.0 364.9L518.6 366.3" stroke-opacity="0.33"/><path d="M518.6 366.3L516.4 367.8" stroke-opacity="0.42"/><path d="M516.4 367.8L514.2 369.5" stroke-opacity="0.51"/><path d="M514.2 369.5L512.1 371.3" stroke-opacity="0.59"/><path d="M512.1 371.3L510.1 373.1" stroke-opacity="0.66"/><path d="M510.1 373.1L508.1 375.1" stroke-opacity="0.71"/><path d="M508.1 375.1L506.3 377.2" stroke-opacity="0.74"/><path d="M506.3 377.2L504.6 379.4" stroke-opacity="0.75"/><path d="M504.6 379.4L503.0 381.6" stroke-opacity="0.74"/><path d="M503.0 381.6L501.5 383.9" stroke-opacity="0.71"/><path d="M501.5 383.9L500.2 386.3" stroke-opacity="0.66"/><path d="M500.2 386.3L498.9 388.7" stroke-opacity="0.59"/><path d="M498.9 388.7L497.8 391.2" stroke-opacity="0.51"/><path d="M497.8 391.2L496.8 393.7" stroke-opacity="0.42"/><path d="M496.8 393.7L496.0 396.2" stroke-opacity="0.33"/><path d="M496.0 396.2L495.3 398.7" stroke-opacity="0.23"/><path d="M495.3 398.7L494.8 401.2" stroke-opacity="0.15"/><path d="M494.8 401.2L494.5 403.8" stroke-opacity="0.07"/><path d="M494.5 403.8L494.2 406.2" stroke-opacity="0.01"/><path d="M528.3 339.8L524.6 341.2" stroke-opacity="0.01"/><path d="M524.6 341.2L520.9 342.8" stroke-opacity="0.07"/><path d="M520.9 342.8L517.3 344.6" stroke-opacity="0.15"/><path d="M517.3 344.6L513.8 346.6" stroke-opacity="0.23"/><path d="M513.8 346.6L510.3 348.8" stroke-opacity="0.33"/><path d="M510.3 348.8L506.9 351.1" stroke-opacity="0.42"/><path d="M506.9 351.1L503.6 353.7" stroke-opacity="0.51"/><path d="M503.6 353.7L500.4 356.4" stroke-opacity="0.59"/><path d="M500.4 356.4L497.3 359.3" stroke-opacity="0.66"/><path d="M497.3 359.3L494.4 362.3" stroke-opacity="0.71"/><path d="M494.4 362.3L491.6 365.4" stroke-opacity="0.74"/><path d="M491.6 365.4L489.1 368.8" stroke-opacity="0.75"/><path d="M489.1 368.8L486.6 372.2" stroke-opacity="0.74"/><path d="M486.6 372.2L484.3 375.6" stroke-opacity="0.71"/><path d="M484.3 375.6L482.2 379.2" stroke-opacity="0.66"/><path d="M482.2 379.2L480.3 382.9" stroke-opacity="0.59"/><path d="M480.3 382.9L478.6 386.6" stroke-opacity="0.51"/><path d="M478.6 386.6L477.1 390.4" stroke-opacity="0.42"/><path d="M477.1 390.4L475.8 394.2" stroke-opacity="0.33"/><path d="M475.8 394.2L474.7 398.0" stroke-opacity="0.23"/><path d="M474.7 398.0L473.8 401.8" stroke-opacity="0.15"/><path d="M473.8 401.8L473.3 405.6" stroke-opacity="0.07"/><path d="M473.3 405.6L472.8 409.4" stroke-opacity="0.01"/><path d="M526.0 319.2L521.1 321.0" stroke-opacity="0.01"/><path d="M521.1 321.0L516.2 323.2" stroke-opacity="0.07"/><path d="M516.2 323.2L511.3 325.6" stroke-opacity="0.15"/><path d="M511.3 325.6L506.6 328.4" stroke-opacity="0.23"/><path d="M506.6 328.4L502.0 331.3" stroke-opacity="0.33"/><path d="M502.0 331.3L497.4 334.5" stroke-opacity="0.42"/><path d="M497.4 334.5L493.0 337.9" stroke-opacity="0.51"/><path d="M493.0 337.9L488.8 341.6" stroke-opacity="0.59"/><path d="M488.8 341.6L484.6 345.4" stroke-opacity="0.66"/><path d="M484.6 345.4L480.7 349.5" stroke-opacity="0.71"/><path d="M480.7 349.5L477.0 353.7" stroke-opacity="0.74"/><path d="M477.0 353.7L473.5 358.2" stroke-opacity="0.75"/><path d="M473.5 358.2L470.2 362.7" stroke-opacity="0.74"/><path d="M470.2 362.7L467.1 367.3" stroke-opacity="0.71"/><path d="M467.1 367.3L464.3 372.2" stroke-opacity="0.66"/><path d="M464.3 372.2L461.7 377.0" stroke-opacity="0.59"/><path d="M461.7 377.0L459.4 382.0" stroke-opacity="0.51"/><path d="M459.4 382.0L457.3 387.1" stroke-opacity="0.42"/><path d="M457.3 387.1L455.6 392.2" stroke-opacity="0.33"/><path d="M455.6 392.2L454.1 397.3" stroke-opacity="0.23"/><path d="M454.1 397.3L452.9 402.4" stroke-opacity="0.15"/><path d="M452.9 402.4L452.0 407.5" stroke-opacity="0.07"/><path d="M452.0 407.5L451.4 412.6" stroke-opacity="0.01"/><path d="M523.8 298.5L517.6 300.9" stroke-opacity="0.01"/><path d="M517.6 300.9L511.4 303.6" stroke-opacity="0.07"/><path d="M511.4 303.6L505.4 306.7" stroke-opacity="0.15"/><path d="M505.4 306.7L499.5 310.1" stroke-opacity="0.23"/><path d="M499.5 310.1L493.6 313.8" stroke-opacity="0.33"/><path d="M493.6 313.8L487.9 317.8" stroke-opacity="0.42"/><path d="M487.9 317.8L482.4 322.1" stroke-opacity="0.51"/><path d="M482.4 322.1L477.1 326.8" stroke-opacity="0.59"/><path d="M477.1 326.8L471.9 331.6" stroke-opacity="0.66"/><path d="M471.9 331.6L467.0 336.6" stroke-opacity="0.71"/><path d="M467.0 336.6L462.3 342.0" stroke-opacity="0.74"/><path d="M462.3 342.0L457.9 347.5" stroke-opacity="0.75"/><path d="M457.9 347.5L453.8 353.2" stroke-opacity="0.74"/><path d="M453.8 353.2L449.9 359.1" stroke-opacity="0.71"/><path d="M449.9 359.1L446.4 365.1" stroke-opacity="0.66"/><path d="M446.4 365.1L443.1 371.2" stroke-opacity="0.59"/><path d="M443.1 371.2L440.2 377.5" stroke-opacity="0.51"/><path d="M440.2 377.5L437.6 383.8" stroke-opacity="0.42"/><path d="M437.6 383.8L435.4 390.1" stroke-opacity="0.33"/><path d="M435.4 390.1L433.5 396.5" stroke-opacity="0.23"/><path d="M433.5 396.5L431.9 402.9" stroke-opacity="0.15"/><path d="M431.9 402.9L430.8 409.4" stroke-opacity="0.07"/><path d="M430.8 409.4L430.0 415.7" stroke-opacity="0.01"/><path d="M521.5 277.8L514.1 280.7" stroke-opacity="0.01"/><path d="M514.1 280.7L506.7 284.0" stroke-opacity="0.07"/><path d="M506.7 284.0L499.4 287.7" stroke-opacity="0.15"/><path d="M499.4 287.7L492.3 291.9" stroke-opacity="0.23"/><path d="M492.3 291.9L485.3 296.3" stroke-opacity="0.33"/><path d="M485.3 296.3L478.4 301.1" stroke-opacity="0.42"/><path d="M478.4 301.1L471.8 306.4" stroke-opacity="0.51"/><path d="M471.8 306.4L465.4 311.9" stroke-opacity="0.59"/><path d="M465.4 311.9L459.2 317.7" stroke-opacity="0.66"/><path d="M459.2 317.7L453.3 323.8" stroke-opacity="0.71"/><path d="M453.3 323.8L447.6 330.2" stroke-opacity="0.74"/><path d="M447.6 330.2L442.4 336.9" stroke-opacity="0.75"/><path d="M442.4 336.9L437.4 343.8" stroke-opacity="0.74"/><path d="M437.4 343.8L432.7 350.8" stroke-opacity="0.71"/><path d="M432.7 350.8L428.4 358.0" stroke-opacity="0.66"/><path d="M428.4 358.0L424.5 365.4" stroke-opacity="0.59"/><path d="M424.5 365.4L421.0 372.9" stroke-opacity="0.51"/><path d="M421.0 372.9L417.8 380.5" stroke-opacity="0.42"/><path d="M417.8 380.5L415.1 388.1" stroke-opacity="0.33"/><path d="M415.1 388.1L412.8 395.8" stroke-opacity="0.23"/><path d="M412.8 395.8L410.9 403.5" stroke-opacity="0.15"/><path d="M410.9 403.5L409.6 411.2" stroke-opacity="0.07"/><path d="M409.6 411.2L408.6 418.9" stroke-opacity="0.01"/><path d="M519.3 257.2L510.6 260.6" stroke-opacity="0.01"/><path d="M510.6 260.6L502.0 264.4" stroke-opacity="0.07"/><path d="M502.0 264.4L493.5 268.8" stroke-opacity="0.15"/><path d="M493.5 268.8L485.1 273.6" stroke-opacity="0.23"/><path d="M485.1 273.6L476.9 278.9" stroke-opacity="0.33"/><path d="M476.9 278.9L468.9 284.5" stroke-opacity="0.42"/><path d="M468.9 284.5L461.2 290.6" stroke-opacity="0.51"/><path d="M461.2 290.6L453.7 297.1" stroke-opacity="0.59"/><path d="M453.7 297.1L446.4 303.9" stroke-opacity="0.66"/><path d="M446.4 303.9L439.5 311.0" stroke-opacity="0.71"/><path d="M439.5 311.0L433.0 318.5" stroke-opacity="0.74"/><path d="M433.0 318.5L426.8 326.3" stroke-opacity="0.75"/><path d="M426.8 326.3L421.0 334.3" stroke-opacity="0.74"/><path d="M421.0 334.3L415.5 342.5" stroke-opacity="0.71"/><path d="M415.5 342.5L410.5 351.0" stroke-opacity="0.66"/><path d="M410.5 351.0L405.9 359.5" stroke-opacity="0.59"/><path d="M405.9 359.5L401.8 368.3" stroke-opacity="0.51"/><path d="M401.8 368.3L398.1 377.2" stroke-opacity="0.42"/><path d="M398.1 377.2L394.9 386.1" stroke-opacity="0.33"/><path d="M394.9 386.1L392.2 395.1" stroke-opacity="0.23"/><path d="M392.2 395.1L390.0 404.1" stroke-opacity="0.15"/><path d="M390.0 404.1L388.4 413.1" stroke-opacity="0.07"/><path d="M388.4 413.1L387.1 422.0" stroke-opacity="0.01"/><path d="M517.0 236.5L507.1 240.4" stroke-opacity="0.01"/><path d="M507.1 240.4L497.2 244.8" stroke-opacity="0.07"/><path d="M497.2 244.8L487.5 249.8" stroke-opacity="0.15"/><path d="M487.5 249.8L478.0 255.4" stroke-opacity="0.23"/><path d="M478.0 255.4L468.6 261.4" stroke-opacity="0.33"/><path d="M468.6 261.4L459.4 267.8" stroke-opacity="0.42"/><path d="M459.4 267.8L450.6 274.8" stroke-opacity="0.51"/><path d="M450.6 274.8L442.0 282.3" stroke-opacity="0.59"/><path d="M442.0 282.3L433.7 290.0" stroke-opacity="0.66"/><path d="M433.7 290.0L425.8 298.2" stroke-opacity="0.71"/><path d="M425.8 298.2L418.3 306.7" stroke-opacity="0.74"/><path d="M418.3 306.7L411.3 315.7" stroke-opacity="0.75"/><path d="M411.3 315.7L404.5 324.8" stroke-opacity="0.74"/><path d="M404.5 324.8L398.3 334.2" stroke-opacity="0.71"/><path d="M398.3 334.2L392.6 343.9" stroke-opacity="0.66"/><path d="M392.6 343.9L387.3 353.7" stroke-opacity="0.59"/><path d="M387.3 353.7L382.5 363.7" stroke-opacity="0.51"/><path d="M382.5 363.7L378.3 373.9" stroke-opacity="0.42"/><path d="M378.3 373.9L374.7 384.1" stroke-opacity="0.33"/><path d="M374.7 384.1L371.6 394.4" stroke-opacity="0.23"/><path d="M371.6 394.4L369.0 404.7" stroke-opacity="0.15"/><path d="M369.0 404.7L367.1 415.0" stroke-opacity="0.07"/><path d="M367.1 415.0L365.7 425.2" stroke-opacity="0.01"/></g><polyline fill="none" stroke="#0a0a0a" stroke-width="1.2" points="300.3,747.2 365.4,806.1"/><polyline fill="none" stroke="#0a0a0a" stroke-width="1.2" points="359.1,446.5 293.9,387.7 300.3,747.2"/><polyline fill="none" stroke="#0a0a0a" stroke-width="1.2" points="293.9,387.7 293.9,382.3 294,377 294.3,371.6 294.8,366.2 295.5,360.7 296.3,355.2 297.3,349.7 298.4,344.2 299.8,338.7 301.2,333.2 302.9,327.7 304.6,322.2 306.6,316.7 308.7,311.2 311,305.8 313.4,300.4 315.9,295 318.6,289.7 321.5,284.4 324.4,279.2 327.6,274 330.8,268.9 334.2,263.9 337.7,258.9 341.3,254 345.1,249.2 349,244.5 353,239.9 357.1,235.3 361.3,230.9 365.6,226.6 370,222.3 374.5,218.2 379.1,214.2 383.7,210.3 388.5,206.6 393.3,203 398.2,199.5 403.2,196.1 408.2,192.9 413.3,189.8 418.4,186.9 423.6,184.1 428.8,181.4 434.1,178.9 439.3,176.6 444.7,174.4 450,172.4 455.3,170.5 460.7,168.8 466.1,167.3 471.4,165.9 476.8,164.7 482.1,163.7 487.5,162.8 492.8,162.1 498.1,161.6 503.4,161.2 508.6,161 513.8,161 518.9,161.2 524,161.5 529,162 534,162.7 538.9,163.5 543.7,164.5 548.5,165.7 553.2,167 557.8,168.6 562.3,170.2 566.7,172.1 571,174.1 575.2,176.2 579.3,178.5 583.4,181 587.2,183.6 591,186.4 594.7,189.3 598.2,192.4"/><polyline fill="none" stroke="#0a0a0a" stroke-width="1.2" points="359.1,446.5 359,443.5 359.1,440.5 359.1,437.5 359.3,434.5 359.5,431.4 359.7,428.4 360,425.3 360.3,422.2 360.7,419.1 361.2,416.1 361.7,413 362.2,409.9 362.9,406.8 363.5,403.6 364.2,400.5 365,397.4 365.8,394.3 366.7,391.2 367.6,388.1 368.6,385 369.6,381.9 370.6,378.8 371.7,375.7 372.9,372.6 374.1,369.5 375.4,366.5 376.7,363.4 378.1,360.4 379.5,357.3 380.9,354.3 382.4,351.3 384,348.3 385.6,345.3 387.2,342.3 388.9,339.4 390.6,336.5 392.4,333.5 394.2,330.7 396,327.8 397.9,324.9 399.9,322.1 401.8,319.3 403.8,316.5 405.9,313.8 408,311 410.1,308.3 412.3,305.6 414.5,303 416.8,300.4 419,297.8 421.3,295.2 423.7,292.7 426.1,290.2 428.5,287.7 430.9,285.3 433.4,282.9 435.9,280.5 438.4,278.2 441,275.9 443.6,273.7 446.2,271.5 448.9,269.3 451.5,267.1 454.2,265.1 456.9,263 459.7,261 462.5,259 465.2,257.1 468,255.2 470.9,253.4 473.7,251.6 476.6,249.8 479.5,248.1 482.4,246.4 485.3,244.8 488.2,243.3 491.1,241.7 494.1,240.3 497,238.8 500,237.5 503,236.1 506,234.9 509,233.6 512,232.5 515,231.3 518,230.3 521,229.2 524.1,228.3 527.1,227.4 530.1,226.5 533.1,225.7 536.2,224.9 539.2,224.2 542.2,223.5 545.2,222.9 548.3,222.4 551.3,221.9 554.3,221.5 557.3,221.1 560.3,220.7 563.3,220.5 566.2,220.2 569.2,220.1 572.1,220 575.1,219.9 578,219.9 580.9,219.9 583.8,220 586.7,220.2 589.6,220.4 592.4,220.7 595.2,221 598,221.4 600.8,221.8 603.6,222.3 606.3,222.8 609,223.4 611.7,224.1 614.4,224.8 617,225.5 619.7,226.3 622.3,227.2 624.8,228.1 627.4,229.1 629.9,230.1 632.3,231.1 634.8,232.3 637.2,233.4 639.6,234.6 641.9,235.9 644.2,237.2 646.5,238.6 648.8,240 651,241.5 653.1,243 655.3,244.5 657.4,246.2 659.4,247.8 661.4,249.5 663.4,251.2 665.3,253 667.2,254.9 669.1,256.7 670.9,258.7 672.7,260.6 674.4,262.6 676.1,264.7 677.7,266.8 679.3,268.9 680.8,271.1 682.3,273.3 683.8,275.5 685.2,277.8 686.6,280.1 687.9,282.5 689.1,284.9 690.3,287.3 691.5,289.7 692.6,292.2 693.7,294.8 694.7,297.3 695.7,299.9 696.6,302.5 697.5,305.2 698.3,307.8 699,310.5 699.7,313.3 700.4,316 701,318.8 701.6,321.6 702.1,324.4 702.5,327.3 702.9,330.1 703.3,333 703.5,335.9 703.8,338.9 704,341.8 704.1,344.8 704.2,347.8"/><polyline fill="none" stroke="#0a0a0a" stroke-width="1.2" points="510.1,403.3 510.1,402.9 510.1,402.6 510.1,402.2 510.1,401.8 510.1,401.4 510.1,401.1 510.2,400.7 510.2,400.3 510.3,399.9 510.3,399.5 510.4,399.1 510.5,398.7 510.5,398.3 510.6,398 510.7,397.6 510.8,397.2 510.9,396.8 511,396.4 511.1,396 511.2,395.6 511.4,395.2 511.5,394.9 511.6,394.5 511.8,394.1 511.9,393.7 512.1,393.3 512.3,392.9 512.4,392.6 512.6,392.2 512.8,391.8 513,391.4 513.2,391 513.4,390.7 513.6,390.3 513.8,389.9 514,389.6 514.2,389.2 514.4,388.8 514.7,388.5 514.9,388.1 515.2,387.8 515.4,387.4 515.7,387.1 515.9,386.7 516.2,386.4 516.4,386 516.7,385.7 517,385.4 517.3,385.1 517.6,384.7 517.8,384.4 518.1,384.1 518.4,383.8 518.7,383.5 519,383.2 519.3,382.9 519.7,382.6 520,382.3 520.3,382 520.6,381.7 520.9,381.4 521.3,381.2 521.6,380.9 522,380.6 522.3,380.4 522.6,380.1 523,379.9 523.3,379.6 523.7,379.4 524,379.2 524.4,379 524.7,378.7 525.1,378.5 525.5,378.3 525.8,378.1 526.2,377.9 526.6,377.7 526.9,377.5 527.3,377.4 527.7,377.2 528,377 528.4,376.9 528.8,376.7 529.2,376.6 529.5,376.4 529.9,376.3 530.3,376.2 530.7,376 531.1,375.9 531.4,375.8 531.8,375.7 532.2,375.6 532.6,375.5 533,375.4 533.3,375.4 533.7,375.3 534.1,375.2 534.5,375.2 534.8,375.1 535.2,375.1 535.6,375.1 536,375 536.3,375 536.7,375 537.1,375 537.4,375 537.8,375 538.1,375 538.5,375 538.9,375.1 539.2,375.1 539.6,375.1 539.9,375.2 540.3,375.2 540.6,375.3 541,375.4 541.3,375.4 541.6,375.5 542,375.6 542.3,375.7 542.6,375.8 543,375.9 543.3,376 543.6,376.1 543.9,376.3 544.2,376.4 544.5,376.5 544.8,376.7 545.1,376.8 545.4,377 545.7,377.2 546,377.3 546.3,377.5 546.5,377.7 546.8,377.9 547.1,378.1 547.3,378.3 547.6,378.5 547.9,378.7 548.1,378.9 548.3,379.1 548.6,379.4 548.8,379.6 549,379.8 549.3,380.1 549.5,380.3 549.7,380.6 549.9,380.9 550.1,381.1 550.3,381.4 550.5,381.7 550.6,381.9 550.8,382.2 551,382.5 551.2,382.8 551.3,383.1 551.5,383.4 551.6,383.7 551.7,384 551.9,384.3 552,384.7 552.1,385 552.2,385.3 552.4,385.6 552.5,386 552.6,386.3 552.6,386.7 552.7,387 552.8,387.4 552.9,387.7 552.9,388.1 553,388.4 553,388.8 553.1,389.1 553.1,389.5 553.1,389.9 553.2,390.2 553.2,390.6 553.2,391"/><polyline fill="none" stroke="#0a0a0a" stroke-width="1.2" points="488.5,409.5 488.5,408.7 488.5,408 488.5,407.2 488.5,406.5 488.6,405.7 488.6,405 488.7,404.2 488.8,403.4 488.9,402.6 489,401.9 489.1,401.1 489.3,400.3 489.4,399.6 489.6,398.8 489.8,398 490,397.2 490.2,396.4 490.4,395.7 490.6,394.9 490.9,394.1 491.1,393.3 491.4,392.6 491.7,391.8 491.9,391 492.3,390.2 492.6,389.5 492.9,388.7 493.2,388 493.6,387.2"/><polyline fill="none" stroke="#0a0a0a" stroke-width="1.2" points="519.3,359.5 520,359.1 520.8,358.7 521.5,358.3 522.2,357.9 523,357.6 523.7,357.2 524.5,356.9 525.2,356.6 526,356.3 526.7,356 527.5,355.7 528.2,355.4 529,355.2 529.7,354.9 530.5,354.7 531.2,354.5 532,354.3 532.8,354.1 533.5,353.9 534.3,353.7 535,353.6 535.8,353.5 536.5,353.3 537.3,353.2 538,353.1 538.8,353 539.5,353 540.3,352.9 541,352.9 541.8,352.9 542.5,352.8 543.2,352.8 543.9,352.8 544.7,352.9 545.4,352.9 546.1,353 546.8,353 547.5,353.1 548.2,353.2 548.9,353.3 549.6,353.4 550.3,353.6 551,353.7 551.7,353.9 552.3,354.1 553,354.2 553.6,354.4 554.3,354.7 554.9,354.9 555.6,355.1 556.2,355.4 556.8,355.6 557.4,355.9 558,356.2 558.6,356.5 559.2,356.8 559.8,357.2 560.3,357.5 560.9,357.9 561.5,358.2 562,358.6 562.5,359 563.1,359.4 563.6,359.8 564.1,360.2 564.6,360.7 565.1,361.1 565.5,361.6 566,362 566.4,362.5 566.9,363 567.3,363.5 567.7,364 568.1,364.6 568.5,365.1 568.9,365.6 569.3,366.2 569.7,366.7 570,367.3 570.4,367.9 570.7,368.5 571,369.1 571.3,369.7 571.6,370.3 571.9,370.9 572.1,371.6 572.4,372.2 572.6,372.8 572.9,373.5 573.1,374.2 573.3,374.8 573.5,375.5 573.7,376.2 573.8,376.9 574,377.6 574.1,378.3 574.2,379 574.3,379.7 574.4,380.4 574.5,381.1 574.6,381.8 574.7,382.6 574.7,383.3 574.7,384.1 574.8,384.8"/><polyline fill="none" stroke="#0a0a0a" stroke-width="1.2" points="466.9,415.7 466.9,414.5 466.9,413.4 466.9,412.3 467,411.1 467.1,410 467.2,408.9 467.3,407.7 467.4,406.6 467.5,405.4 467.7,404.2 467.9,403.1 468.1,401.9 468.3,400.8 468.6,399.6 468.9,398.4 469.1,397.3 469.4,396.1 469.8,394.9 470.1,393.8 470.5,392.6 470.9,391.4 471.3,390.3 471.7,389.1"/><polyline fill="none" stroke="#0a0a0a" stroke-width="1.2" points="519.8,337.3 520.9,336.8 522,336.3 523.1,335.8 524.3,335.4 525.4,335 526.5,334.6 527.7,334.2 528.8,333.8 529.9,333.5 531.1,333.1 532.2,332.8 533.3,332.6 534.5,332.3 535.6,332 536.7,331.8 537.9,331.6 539,331.4 540.1,331.3 541.2,331.1 542.4,331 543.5,330.9 544.6,330.8 545.7,330.7 546.8,330.7 547.9,330.7 549,330.7 550.1,330.7 551.2,330.7 552.3,330.8 553.3,330.9 554.4,331 555.5,331.1 556.5,331.2 557.6,331.4 558.6,331.6 559.6,331.8 560.7,332 561.7,332.2 562.7,332.5 563.7,332.8 564.6,333.1 565.6,333.4 566.6,333.8 567.5,334.1 568.5,334.5 569.4,334.9 570.3,335.3 571.2,335.8 572.1,336.2 573,336.7 573.9,337.2 574.7,337.7 575.5,338.2 576.4,338.8 577.2,339.3 578,339.9 578.8,340.5 579.5,341.1 580.3,341.8 581,342.4 581.8,343.1 582.5,343.8 583.2,344.5 583.9,345.2 584.5,346 585.2,346.7 585.8,347.5 586.4,348.3 587,349.1 587.6,349.9 588.1,350.7 588.7,351.5 589.2,352.4 589.7,353.3 590.2,354.1 590.7,355 591.1,355.9 591.6,356.9 592,357.8 592.4,358.8 592.8,359.7 593.1,360.7 593.5,361.7 593.8,362.7 594.1,363.7 594.4,364.7 594.7,365.7 594.9,366.7 595.1,367.8 595.4,368.8 595.5,369.9 595.7,370.9 595.9,372 596,373.1 596.1,374.2 596.2,375.3 596.3,376.4 596.3,377.5 596.3,378.6"/><polyline fill="none" stroke="#0a0a0a" stroke-width="1.2" points="445.3,421.8 445.3,420.3 445.3,418.8 445.4,417.3 445.5,415.8 445.5,414.3 445.7,412.8 445.8,411.2 446,409.7 446.2,408.1 446.4,406.6 446.7,405.1 446.9,403.5 447.2,402 447.6,400.4 447.9,398.8 448.3,397.3 448.7,395.7 449.1,394.2 449.6,392.6 450.1,391.1 450.6,389.5 451.1,388 451.7,386.4"/><polyline fill="none" stroke="#0a0a0a" stroke-width="1.2" points="515.8,317.3 517.3,316.6 518.8,316 520.3,315.4 521.8,314.8 523.3,314.2 524.8,313.7 526.3,313.2 527.8,312.7 529.4,312.3 530.9,311.8 532.4,311.4 533.9,311 535.4,310.7 536.9,310.3 538.4,310 539.9,309.8 541.5,309.5 543,309.3 544.5,309.1 546,308.9 547.4,308.8 548.9,308.7 550.4,308.6 551.9,308.6 553.4,308.5 554.8,308.5 556.3,308.5 557.7,308.6 559.2,308.7 560.6,308.8 562,308.9 563.4,309.1 564.8,309.3 566.2,309.5 567.6,309.7 569,310 570.3,310.3 571.7,310.6 573,311 574.3,311.3 575.6,311.7 576.9,312.2 578.2,312.6 579.5,313.1 580.7,313.6 582,314.1 583.2,314.7 584.4,315.3 585.6,315.9 586.8,316.5 587.9,317.2 589.1,317.9 590.2,318.6 591.3,319.3 592.4,320.1 593.4,320.8 594.5,321.6 595.5,322.5 596.5,323.3 597.5,324.2 598.5,325.1 599.4,326 600.4,326.9 601.3,327.9 602.1,328.9 603,329.9 603.8,330.9 604.7,332 605.5,333 606.2,334.1 607,335.2 607.7,336.3 608.4,337.5 609.1,338.6 609.7,339.8 610.4,341 611,342.2 611.6,343.4 612.1,344.7 612.7,346 613.2,347.2 613.6,348.5 614.1,349.8 614.5,351.2 614.9,352.5 615.3,353.8 615.7,355.2 616,356.6 616.3,358 616.6,359.4 616.8,360.8 617.1,362.2 617.3,363.6 617.4,365.1 617.6,366.5 617.7,368 617.8,369.5 617.9,371 617.9,372.5"/><polyline fill="none" stroke="#0a0a0a" stroke-width="1.2" points="423.8,428 423.8,426.1 423.8,424.3 423.8,422.4 423.9,420.5 424,418.6 424.2,416.7 424.4,414.7 424.6,412.8 424.8,410.9 425.1,409 425.4,407 425.8,405.1 426.1,403.2 426.6,401.2 427,399.3 427.5,397.3 428,395.4 428.5,393.4 429.1,391.5 429.7,389.6 430.3,387.6 431,385.7 431.7,383.7"/><polyline fill="none" stroke="#0a0a0a" stroke-width="1.2" points="511.9,297.3 513.7,296.5 515.6,295.7 517.5,295 519.4,294.2 521.2,293.5 523.1,292.8 525,292.2 526.9,291.6 528.8,291 530.7,290.5 532.6,290 534.5,289.5 536.4,289.1 538.3,288.6 540.1,288.3 542,287.9 543.9,287.6 545.8,287.3 547.7,287.1 549.5,286.9 551.4,286.7 553.3,286.6 555.1,286.5 556.9,286.4 558.8,286.4 560.6,286.4 562.4,286.4 564.2,286.5 566,286.6 567.8,286.7 569.6,286.9 571.4,287.1 573.1,287.3 574.9,287.6 576.6,287.9 578.3,288.2 580,288.6 581.7,289 583.4,289.4 585,289.9 586.7,290.4 588.3,290.9 589.9,291.5 591.5,292.1 593,292.7 594.6,293.4 596.1,294.1 597.6,294.8 599.1,295.6 600.6,296.4 602,297.2 603.4,298.1 604.8,298.9 606.2,299.9 607.6,300.8 608.9,301.8 610.2,302.8 611.5,303.8 612.8,304.9 614,306 615.2,307.1 616.4,308.2 617.5,309.4 618.7,310.6 619.8,311.8 620.9,313.1 621.9,314.4 622.9,315.7 623.9,317 624.9,318.3 625.8,319.7 626.7,321.1 627.6,322.6 628.5,324 629.3,325.5 630.1,327 630.8,328.5 631.6,330 632.2,331.6 632.9,333.2 633.6,334.7 634.2,336.4 634.7,338 635.3,339.7 635.8,341.3 636.3,343 636.7,344.7 637.1,346.4 637.5,348.2 637.8,349.9 638.1,351.7 638.4,353.5 638.7,355.3 638.9,357.1 639.1,358.9 639.2,360.7 639.3,362.6 639.4,364.4 639.5,366.3"/><polyline fill="none" stroke="#0a0a0a" stroke-width="1.2" points="402.2,434.2 402.2,431.9 402.2,429.7 402.3,427.4 402.4,425.1 402.5,422.9 402.7,420.6 402.9,418.3 403.2,416 403.5,413.6 403.8,411.3 404.2,409 404.6,406.7 405,404.4 405.5,402 406.1,399.7 406.6,397.4 407.3,395 407.9,392.7 408.6,390.4 409.3,388 410.1,385.7 410.9,383.4 411.7,381.1"/><polyline fill="none" stroke="#0a0a0a" stroke-width="1.2" points="507.9,277.4 510.1,276.4 512.4,275.4 514.6,274.5 516.9,273.6 519.2,272.8 521.4,272 523.7,271.2 526,270.5 528.2,269.8 530.5,269.2 532.8,268.5 535,268 537.3,267.4 539.6,266.9 541.8,266.5 544.1,266.1 546.4,265.7 548.6,265.4 550.9,265.1 553.1,264.8 555.3,264.6 557.6,264.5 559.8,264.3 562,264.3 564.2,264.2 566.4,264.2 568.6,264.2 570.8,264.3 572.9,264.4 575.1,264.6 577.2,264.8 579.3,265 581.4,265.3 583.5,265.7 585.6,266 587.6,266.4 589.7,266.9 591.7,267.3 593.7,267.9 595.7,268.4 597.7,269 599.6,269.7 601.5,270.4 603.4,271.1 605.3,271.8 607.2,272.6 609,273.5 610.8,274.4 612.6,275.3 614.3,276.2 616.1,277.2 617.8,278.2 619.5,279.3 621.1,280.4 622.8,281.5 624.4,282.7 625.9,283.9 627.5,285.1 629,286.4 630.5,287.7 631.9,289.1 633.3,290.4 634.7,291.8 636.1,293.3 637.4,294.8 638.7,296.3 640,297.8 641.2,299.4 642.4,301 643.5,302.6 644.7,304.2 645.7,305.9 646.8,307.6 647.8,309.4 648.8,311.1 649.8,312.9 650.7,314.7 651.5,316.6 652.4,318.5 653.2,320.4 653.9,322.3 654.7,324.2 655.3,326.2 656,328.2 656.6,330.2 657.2,332.2 657.7,334.2 658.2,336.3 658.7,338.4 659.1,340.5 659.5,342.6 659.8,344.7 660.1,346.9 660.3,349.1 660.6,351.2 660.7,353.4 660.9,355.6 661,357.9 661,360.1"/><polyline fill="none" stroke="#0a0a0a" stroke-width="1.2" points="380.6,440.4 380.6,437.7 380.6,435.1 380.7,432.5 380.8,429.8 381,427.1 381.2,424.5 381.5,421.8 381.8,419.1 382.1,416.4 382.5,413.7 382.9,411 383.4,408.3 384,405.6 384.5,402.8 385.2,400.1 385.8,397.4 386.5,394.7 387.3,391.9 388.1,389.2 388.9,386.5 389.8,383.8 390.8,381.1 391.7,378.4"/><polyline fill="none" stroke="#0a0a0a" stroke-width="1.2" points="504,257.4 506.6,256.3 509.2,255.2 511.8,254.1 514.4,253.1 517.1,252.1 519.7,251.1 522.4,250.2 525,249.4 527.7,248.6 530.3,247.8 533,247.1 535.6,246.4 538.3,245.8 540.9,245.2 543.5,244.7 546.2,244.2 548.8,243.8 551.5,243.4 554.1,243.1 556.7,242.8 559.3,242.6 561.9,242.4 564.5,242.2 567.1,242.1 569.6,242.1 572.2,242.1 574.8,242.1 577.3,242.2 579.8,242.3 582.3,242.5 584.8,242.7 587.3,243 589.7,243.4 592.2,243.7 594.6,244.2 597,244.6 599.4,245.1 601.7,245.7 604.1,246.3 606.4,247 608.7,247.7 610.9,248.4 613.2,249.2 615.4,250.1 617.6,251 619.7,251.9 621.9,252.9 624,253.9 626.1,255 628.1,256.1 630.2,257.2 632.2,258.4 634.1,259.7 636,260.9 637.9,262.3 639.8,263.6 641.6,265 643.4,266.5 645.2,268 646.9,269.5 648.6,271 650.3,272.7 651.9,274.3 653.5,276 655,277.7 656.5,279.4 658,281.2 659.4,283.1 660.8,284.9 662.2,286.8 663.5,288.8 664.8,290.7 666,292.7 667.2,294.7 668.3,296.8 669.4,298.9 670.5,301 671.5,303.2 672.5,305.3 673.4,307.6 674.3,309.8 675.2,312.1 676,314.3 676.7,316.7 677.4,319 678.1,321.4 678.7,323.7 679.3,326.2 679.8,328.6 680.3,331 680.8,333.5 681.2,336 681.5,338.5 681.8,341 682.1,343.6 682.3,346.2 682.4,348.7 682.5,351.3 682.6,353.9"/><polyline fill="none" stroke="#0a0a0a" stroke-width="1.2" points="365.4,806.1 359.1,446.5"/><polyline fill="none" stroke="#0a0a0a" stroke-width="1.2" points="387,799.9 380.6,440.4"/><polyline fill="none" stroke="#0a0a0a" stroke-width="1.2" points="408.6,793.7 402.2,434.2"/><polyline fill="none" stroke="#0a0a0a" stroke-width="1.2" points="430.2,787.6 423.8,428"/><polyline fill="none" stroke="#0a0a0a" stroke-width="1.2" points="451.7,781.4 445.3,421.8"/><polyline fill="none" stroke="#0a0a0a" stroke-width="1.2" points="473.3,775.2 466.9,415.7"/><polyline fill="none" stroke="#0a0a0a" stroke-width="1.2" points="494.9,769.1 488.5,409.5"/><polyline fill="none" stroke="#0a0a0a" stroke-width="1.2" points="516.4,762.9 510.1,403.3"/><polyline fill="none" stroke="#0a0a0a" stroke-width="1.2" points="559.6,750.5 553.2,391"/><polyline fill="none" stroke="#0a0a0a" stroke-width="1.2" points="581.1,744.4 574.8,384.8"/><polyline fill="none" stroke="#0a0a0a" stroke-width="1.2" points="602.7,738.2 596.3,378.6"/><polyline fill="none" stroke="#0a0a0a" stroke-width="1.2" points="624.3,732 617.9,372.5"/><polyline fill="none" stroke="#0a0a0a" stroke-width="1.2" points="645.9,725.8 639.5,366.3"/><polyline fill="none" stroke="#0a0a0a" stroke-width="1.2" points="667.4,719.7 661,360.1"/><polyline fill="none" stroke="#0a0a0a" stroke-width="1.2" points="689,713.5 682.6,353.9"/><polyline fill="none" stroke="#0a0a0a" stroke-width="1.2" points="710.6,707.3 704.2,347.8"/><polyline fill="none" stroke="#0a0a0a" stroke-width="1.2" points="388.5,802.8 388.4,803.6 388.1,804.5 387.5,805.3 386.7,806.1 385.7,806.8 384.5,807.4 383.2,808 381.7,808.4 380.1,808.8 378.5,809 376.8,809.1 375.1,809.1 373.4,809 371.7,808.8 370.2,808.4 368.8,808 367.5,807.4 366.4,806.8 365.4,806.1"/><polyline fill="none" stroke="#0a0a0a" stroke-width="1.2" points="382.1,443.2 382,444.1 381.7,444.9 381.1,445.8 380.3,446.5 379.3,447.2 378.2,447.9 376.8,448.4 375.3,448.9 373.8,449.2 372.1,449.5 370.4,449.6 368.7,449.6 367,449.5 365.4,449.2 363.8,448.9 362.4,448.4 361.1,447.9 360,447.3 359.1,446.5"/><polyline fill="none" stroke="#0a0a0a" stroke-width="1.2" points="410.1,796.6 410,797.5 409.6,798.3 409.1,799.1 408.3,799.9 407.3,800.6 406.1,801.3 404.8,801.8 403.3,802.3 401.7,802.6 400.1,802.8 398.4,803 396.6,803 395,802.8 393.3,802.6 391.8,802.3 390.3,801.8 389.1,801.3 387.9,800.6 387,799.9"/><polyline fill="none" stroke="#0a0a0a" stroke-width="1.2" points="403.7,437.1 403.6,437.9 403.3,438.8 402.7,439.6 401.9,440.3 400.9,441.1 399.7,441.7 398.4,442.2 396.9,442.7 395.3,443.1 393.7,443.3 392,443.4 390.3,443.4 388.6,443.3 386.9,443.1 385.4,442.7 384,442.3 382.7,441.7 381.6,441.1 380.6,440.4"/><polyline fill="none" stroke="#0a0a0a" stroke-width="1.2" points="431.7,790.4 431.6,791.3 431.2,792.1 430.6,793 429.9,793.7 428.9,794.4 427.7,795.1 426.3,795.6 424.9,796.1 423.3,796.4 421.6,796.7 419.9,796.8 418.2,796.8 416.5,796.7 414.9,796.4 413.3,796.1 411.9,795.6 410.6,795.1 409.5,794.5 408.6,793.7"/><polyline fill="none" stroke="#0a0a0a" stroke-width="1.2" points="425.3,430.9 425.2,431.7 424.8,432.6 424.3,433.4 423.5,434.2 422.5,434.9 421.3,435.5 420,436.1 418.5,436.5 416.9,436.9 415.2,437.1 413.5,437.2 411.8,437.2 410.1,437.1 408.5,436.9 407,436.5 405.5,436.1 404.2,435.5 403.1,434.9 402.2,434.2"/><polyline fill="none" stroke="#0a0a0a" stroke-width="1.2" points="453.2,784.3 453.1,785.1 452.8,786 452.2,786.8 451.4,787.6 450.4,788.3 449.2,788.9 447.9,789.5 446.4,789.9 444.9,790.3 443.2,790.5 441.5,790.6 439.8,790.6 438.1,790.5 436.5,790.3 434.9,789.9 433.5,789.5 432.2,788.9 431.1,788.3 430.2,787.6"/><polyline fill="none" stroke="#0a0a0a" stroke-width="1.2" points="446.8,424.7 446.7,425.6 446.4,426.4 445.8,427.2 445,428 444,428.7 442.9,429.3 441.5,429.9 440.1,430.4 438.5,430.7 436.8,430.9 435.1,431.1 433.4,431.1 431.7,430.9 430.1,430.7 428.5,430.4 427.1,429.9 425.8,429.4 424.7,428.7 423.8,428"/><polyline fill="none" stroke="#0a0a0a" stroke-width="1.2" points="474.8,778.1 474.7,778.9 474.4,779.8 473.8,780.6 473,781.4 472,782.1 470.8,782.7 469.5,783.3 468,783.7 466.4,784.1 464.8,784.3 463.1,784.4 461.4,784.4 459.7,784.3 458,784.1 456.5,783.7 455,783.3 453.8,782.7 452.6,782.1 451.7,781.4"/><polyline fill="none" stroke="#0a0a0a" stroke-width="1.2" points="468.4,418.5 468.3,419.4 468,420.2 467.4,421.1 466.6,421.8 465.6,422.5 464.4,423.2 463.1,423.7 461.6,424.2 460,424.5 458.4,424.8 456.7,424.9 455,424.9 453.3,424.8 451.6,424.5 450.1,424.2 448.7,423.7 447.4,423.2 446.3,422.6 445.3,421.8"/><polyline fill="none" stroke="#0a0a0a" stroke-width="1.2" points="496.4,771.9 496.3,772.8 495.9,773.6 495.3,774.4 494.6,775.2 493.6,775.9 492.4,776.6 491,777.1 489.6,777.6 488,777.9 486.3,778.1 484.6,778.3 482.9,778.3 481.2,778.2 479.6,777.9 478,777.6 476.6,777.1 475.3,776.6 474.2,775.9 473.3,775.2"/><polyline fill="none" stroke="#0a0a0a" stroke-width="1.2" points="490,412.4 489.9,413.2 489.5,414.1 489,414.9 488.2,415.7 487.2,416.4 486,417 484.7,417.6 483.2,418 481.6,418.4 480,418.6 478.3,418.7 476.5,418.7 474.9,418.6 473.2,418.4 471.7,418 470.2,417.6 469,417 467.8,416.4 466.9,415.7"/><polyline fill="none" stroke="#0a0a0a" stroke-width="1.2" points="517.9,765.7 517.8,766.6 517.5,767.4 516.9,768.3 516.1,769 515.1,769.7 514,770.4 512.6,770.9 511.1,771.4 509.6,771.7 507.9,772 506.2,772.1 504.5,772.1 502.8,772 501.2,771.7 499.6,771.4 498.2,770.9 496.9,770.4 495.8,769.8 494.9,769.1"/><polyline fill="none" stroke="#0a0a0a" stroke-width="1.2" points="511.6,406.2 511.5,407 511.1,407.9 510.5,408.7 509.7,409.5 508.8,410.2 507.6,410.8 506.2,411.4 504.8,411.8 503.2,412.2 501.5,412.4 499.8,412.5 498.1,412.5 496.4,412.4 494.8,412.2 493.2,411.8 491.8,411.4 490.5,410.8 489.4,410.2 488.5,409.5"/><polyline fill="none" stroke="#0a0a0a" stroke-width="1.2" points="582.6,747.2 582.5,748.1 582.2,748.9 581.6,749.7 580.8,750.5 579.8,751.2 578.7,751.9 577.3,752.4 575.9,752.9 574.3,753.2 572.6,753.5 570.9,753.6 569.2,753.6 567.5,753.5 565.9,753.2 564.3,752.9 562.9,752.4 561.6,751.9 560.5,751.2 559.6,750.5"/><polyline fill="none" stroke="#0a0a0a" stroke-width="1.2" points="576.3,387.7 576.2,388.5 575.8,389.4 575.2,390.2 574.5,391 573.5,391.7 572.3,392.3 570.9,392.9 569.5,393.3 567.9,393.7 566.2,393.9 564.5,394 562.8,394 561.1,393.9 559.5,393.7 557.9,393.3 556.5,392.9 555.2,392.3 554.1,391.7 553.2,391"/><polyline fill="none" stroke="#0a0a0a" stroke-width="1.2" points="604.2,741 604.1,741.9 603.8,742.7 603.2,743.6 602.4,744.3 601.4,745 600.2,745.7 598.9,746.2 597.4,746.7 595.8,747 594.2,747.3 592.5,747.4 590.8,747.4 589.1,747.3 587.4,747 585.9,746.7 584.5,746.2 583.2,745.7 582.1,745.1 581.1,744.4"/><polyline fill="none" stroke="#0a0a0a" stroke-width="1.2" points="597.8,381.5 597.7,382.4 597.4,383.2 596.8,384 596,384.8 595,385.5 593.9,386.1 592.5,386.7 591,387.1 589.5,387.5 587.8,387.7 586.1,387.8 584.4,387.8 582.7,387.7 581.1,387.5 579.5,387.1 578.1,386.7 576.8,386.1 575.7,385.5 574.8,384.8"/><polyline fill="none" stroke="#0a0a0a" stroke-width="1.2" points="625.8,734.9 625.7,735.7 625.3,736.6 624.8,737.4 624,738.2 623,738.9 621.8,739.5 620.5,740.1 619,740.5 617.4,740.9 615.8,741.1 614.1,741.2 612.3,741.2 610.6,741.1 609,740.9 607.5,740.5 606,740.1 604.8,739.5 603.6,738.9 602.7,738.2"/><polyline fill="none" stroke="#0a0a0a" stroke-width="1.2" points="619.4,375.3 619.3,376.2 619,377 618.4,377.8 617.6,378.6 616.6,379.3 615.4,380 614.1,380.5 612.6,381 611,381.3 609.4,381.5 607.7,381.7 606,381.7 604.3,381.6 602.6,381.3 601.1,381 599.7,380.5 598.4,380 597.3,379.3 596.3,378.6"/><polyline fill="none" stroke="#0a0a0a" stroke-width="1.2" points="647.4,728.7 647.2,729.6 646.9,730.4 646.3,731.2 645.5,732 644.6,732.7 643.4,733.3 642,733.9 640.6,734.3 639,734.7 637.3,734.9 635.6,735 633.9,735.1 632.2,734.9 630.6,734.7 629,734.4 627.6,733.9 626.3,733.4 625.2,732.7 624.3,732"/><polyline fill="none" stroke="#0a0a0a" stroke-width="1.2" points="641,369.1 640.9,370 640.5,370.8 640,371.7 639.2,372.4 638.2,373.1 637,373.8 635.7,374.3 634.2,374.8 632.6,375.1 630.9,375.4 629.2,375.5 627.5,375.5 625.8,375.4 624.2,375.1 622.7,374.8 621.2,374.3 619.9,373.8 618.8,373.2 617.9,372.5"/><polyline fill="none" stroke="#0a0a0a" stroke-width="1.2" points="668.9,722.5 668.8,723.4 668.5,724.2 667.9,725 667.1,725.8 666.1,726.5 664.9,727.2 663.6,727.7 662.1,728.2 660.5,728.5 658.9,728.8 657.2,728.9 655.5,728.9 653.8,728.8 652.2,728.5 650.6,728.2 649.2,727.7 647.9,727.2 646.8,726.5 645.9,725.8"/><polyline fill="none" stroke="#0a0a0a" stroke-width="1.2" points="662.5,363 662.4,363.8 662.1,364.7 661.5,365.5 660.7,366.3 659.7,367 658.6,367.6 657.2,368.2 655.8,368.6 654.2,369 652.5,369.2 650.8,369.3 649.1,369.3 647.4,369.2 645.8,369 644.2,368.6 642.8,368.2 641.5,367.6 640.4,367 639.5,366.3"/><polyline fill="none" stroke="#0a0a0a" stroke-width="1.2" points="690.5,716.4 690.4,717.2 690,718.1 689.5,718.9 688.7,719.6 687.7,720.3 686.5,721 685.2,721.5 683.7,722 682.1,722.3 680.5,722.6 678.8,722.7 677,722.7 675.4,722.6 673.7,722.4 672.2,722 670.7,721.6 669.5,721 668.3,720.4 667.4,719.7"/><polyline fill="none" stroke="#0a0a0a" stroke-width="1.2" points="684.1,356.8 684,357.7 683.7,358.5 683.1,359.3 682.3,360.1 681.3,360.8 680.1,361.4 678.8,362 677.3,362.4 675.7,362.8 674.1,363 672.4,363.1 670.7,363.1 669,363 667.3,362.8 665.8,362.5 664.4,362 663.1,361.4 662,360.8 661,360.1"/><polyline fill="none" stroke="#0a0a0a" stroke-width="1.2" points="712.1,710.2 712,711 711.6,711.9 711,712.7 710.3,713.5 709.3,714.2 708.1,714.8 706.7,715.4 705.3,715.8 703.7,716.2 702,716.4 700.3,716.5 698.6,716.5 696.9,716.4 695.3,716.2 693.7,715.8 692.3,715.4 691,714.8 689.9,714.2 689,713.5"/><polyline fill="none" stroke="#0a0a0a" stroke-width="1.2" points="705.7,350.6 705.6,351.5 705.2,352.3 704.7,353.1 703.9,353.9 702.9,354.6 701.7,355.3 700.4,355.8 698.9,356.3 697.3,356.6 695.7,356.9 693.9,357 692.2,357 690.5,356.9 688.9,356.6 687.4,356.3 685.9,355.8 684.7,355.3 683.5,354.6 682.6,353.9"/><polyline fill="none" stroke="#0a0a0a" stroke-width="1.2" points="559.6,750.5 559.1,751.8 558.5,753 557.6,754.1 556.6,755.3 555.4,756.4 554,757.4 552.5,758.4 550.8,759.3 549,760.2 547,761 545,761.7 542.8,762.3 540.5,762.9 538.2,763.3 535.8,763.6 533.4,763.9 530.9,764 528.4,764.1 526,764 523.5,763.9 521.1,763.7 518.7,763.3 516.4,762.9"/><polyline fill="none" stroke="#0a0a0a" stroke-width="1.2" points="553.2,391 552.7,392.2 552.1,393.4 551.3,394.6 550.2,395.7 549,396.8 547.7,397.9 546.1,398.9 544.4,399.8 542.6,400.6 540.7,401.4 538.6,402.1 536.4,402.8 534.1,403.3 531.8,403.7 529.4,404.1 527,404.3 524.5,404.5 522,404.5 519.6,404.5 517.1,404.3 514.7,404.1 512.3,403.8 510.1,403.3"/></svg><svg width="1054" height="890">
<!-- dropdown triangles -->
<g fill="#333">
<path d="M115.2,56.3h5.4l-2.7,3.4z M307.6,56.3h5.4l-2.7,3.4z M405.6,56.3h5.4l-2.7,3.4z M507.6,56.3h5.4l-2.7,3.4z M585.6,56.3h5.4l-2.7,3.4z M672.2,56.3h5.4l-2.7,3.4z M758.2,56.3h5.4l-2.7,3.4z"/>
</g>
<!-- separators -->
<g fill="#d6d6d6">
<rect x="232.5" y="13" width="1.2" height="51"/><rect x="329.3" y="13" width="1.2" height="51"/>
<rect x="426.9" y="13" width="1.2" height="51"/><rect x="526.3" y="13" width="1.2" height="51"/>
<rect x="605.2" y="13" width="1.2" height="51"/><rect x="702.3" y="13" width="1.2" height="51"/>
</g>
<!-- arrow fragment at left -->
<path d="M0,29.5h3.5" stroke="#222" stroke-width="1.2"/><path d="M2.8,26.8L6,29.5L2.8,32.2z" fill="#222"/>
<!-- fillet -->
<g stroke="#5a5a5a" stroke-width="1.1" stroke-linejoin="round">
<path d="M19.5,21.5L26.5,14.5L34,14.5L31,21.5z" fill="#f3f3f3"/>
<path d="M19.5,21.5L31,21.5Q43.5,23 43.5,35L43.5,45.5L19.5,45.5z" fill="#dadada"/>
<path d="M43.5,35L50.5,28.5L50.5,38.5L43.5,45.5z" fill="#b8b8b8"/>
<path d="M31,21.5L34,14.5Q50.5,15 50.5,28.5L43.5,35Q43.5,23 31,21.5z" fill="#5aa8e2" stroke="none"/>
<path d="M34,14.5Q50.5,15 50.5,28.5" fill="none"/>
</g>
<!-- shell -->
<g stroke="#5a5a5a" stroke-width="1.1" stroke-linejoin="round">
<path d="M62.5,21.5L69.5,14.5L94,14.5L87,21.5z" fill="#f3f3f3"/>
<path d="M87,21.5L94,14.5L94,38.5L87,45.5z" fill="#b8b8b8"/>
<path d="M62.5,21.5H87V45.5H62.5z" fill="#dcdcdc"/>
</g>
<rect x="65.5" y="25" width="18" height="17" fill="#eeeeee"/>
<path d="M66.2,26H73.5V34H82V41.5H66.2z" fill="#7cbdf0"/>
<path d="M66.2,26H73.5V34L66.2,41.5z" fill="#3a8fd2"/>
<!-- combine -->
<path d="M115.4,17.9L119,14.2H137L133.3,17.9z" fill="#8ec8f4"/>
<path d="M133.3,17.9L137,14.2V32L133.3,35.8z" fill="#3f92d4"/>
<path d="M115.4,17.9H133.3V35.8H115.4z" fill="#5ba9e6"/>
<path d="M104.9,27.8L108.5,24.2H115.4V27.8z" fill="#8ec8f4"/>
<path d="M123.4,35.8H127V42L123.4,45.6z" fill="#3f92d4"/>
<path d="M104.9,27.8H115.4V35.8H123.4V45.6H104.9z" fill="#5ba9e6"/>
<!-- split body -->
<g stroke-linejoin="round">
<path d="M150.4,19.9L155.5,14.2H178.3L172,19.9z" fill="#8ec8f4"/>
<path d="M172,19.9L178.3,14.2V23.3L172,29z" fill="#3f92d4"/>
<path d="M150.4,19.9H172V29H150.4z" fill="#5ba9e6"/>
<path d="M148.1,32.4H172.3L179.8,24.6" fill="none" stroke="#2f9ae6" stroke-width="1"/>
<g stroke="#5a5a5a" stroke-width="1.1">
<path d="M172.6,34.8L178.3,30.5V38.7L172.6,44.4z" fill="#b8b8b8"/>
<path d="M150.4,34.8H172.6V44.4H150.4z" fill="#dadada"/>
</g>
</g>
<!-- move -->
<g fill="#2e2e2e">
<path d="M207,14.5L202,21.5H212z M207,45.5L202,38.5H212z M191.3,30L198.3,25V35z M222.7,30L215.7,25V35z"/>
<rect x="205.8" y="20" width="2.4" height="20"/><rect x="197" y="28.8" width="20" height="2.4"/>
</g>
<!-- new component -->
<g stroke="#5a5a5a" stroke-width="1.1" stroke-linejoin="round">
<path d="M245,33.6H257.5V45.5H245z" fill="#dadada"/>
<path d="M257.5,33.6L261,30.2H272.3L268.8,33.6z" fill="#f0f0f0"/>
<path d="M268.8,33.6L272.3,30.2V42.1L268.8,45.5z" fill="#b8b8b8"/>
<path d="M257.5,33.6H268.8V45.5H257.5z" fill="#dadada"/>
</g>
<path d="M245,22.2L248,18.2H260.5L257.5,22.2z" fill="#8ec8f4"/>
<path d="M257.5,22.2L260.5,18.2V30.2L257.5,33.6z" fill="#3f92d4"/>
<path d="M245,22.2H257.5V33.6H245z" fill="#5ba9e6"/>
<path d="M268.3,13.5L269.6,18.2L273.4,15.2L271.6,19.7L276.4,19.7L272.4,22.2L276.4,24.7L271.6,24.7L273.4,29.2L269.6,26.2L268.3,30.9L267,26.2L263.2,29.2L265,24.7L260.2,24.7L264.2,22.2L260.2,19.7L265,19.7L263.2,15.2L267,18.2z" fill="#f5a20a"/>
<!-- joint -->
<g stroke="#5a5a5a" stroke-width="1.1" stroke-linejoin="round">
<path d="M290.6,23.5L297.5,16.5H301V36.5L290.6,42.7z" fill="#dcdcdc"/>
<path d="M297,17.2a2.2,1.4 0 0 1 4.4,0V27.5a2.2,1.4 0 0 1 -4.4,0z" fill="#cfcfcf"/>
<path d="M311.5,18.2L317.8,24.5V43.3L311.5,36.5z" fill="#dcdcdc"/>
<path d="M305.4,27a2.5,1.4 0 0 1 5,0V36.5a2.5,1.4 0 0 1 -5,0z" fill="#bdbdbd"/>
</g>
<path d="M299.6,29V34.3 M308.3,21.8V27" stroke="#2f96e0" stroke-width="1"/>
<!-- configure 1 -->
<path d="M342.5,21.5L348,14.5H364L369.5,24V41.5H342.5z" fill="#e8e8e8" stroke="#c4c4c4" stroke-width="1"/>
<g stroke="#a9a9a9" stroke-width="1.6"><path d="M360,37H374 M360,43H374"/></g>
<path d="M364.2,34V39.5" stroke="#7ec0f0" stroke-width="2"/><path d="M369.9,40.4V45.6" stroke="#a9a9a9" stroke-width="2"/>
<circle cx="365.9" cy="21.6" r="8" fill="#1193d8"/>
<path d="M364,20V27.5 M360.3,23.8H367.7" stroke="#fff" stroke-width="1.7"/>
<path d="M367.6,16.8V19.6 M366.2,18.2H369 M369.8,19.8V22.6" stroke="#fff" stroke-width="1"/>
<!-- configure 2 -->
<rect x="385.5" y="14.5" width="29" height="28" fill="#efefef" stroke="#b0b0b0" stroke-width="1"/>
<rect x="385.5" y="14.5" width="29" height="3.5" fill="#b4b4b4"/>
<g stroke="#b8b8b8" stroke-width="0.9" fill="none"><path d="M388.5,23.5H406 M388.5,28.5H406 M388.5,33.5H406 M388.5,38.5H403 M393.5,20.5V41 M398.5,20.5V41 M403.5,20.5V41"/></g>
<g stroke="#a9a9a9" stroke-width="1.6"><path d="M403,37H417 M403,43H417"/></g>
<path d="M407.3,34V39.5" stroke="#7ec0f0" stroke-width="2"/><path d="M413,40.4V45.6" stroke="#a9a9a9" stroke-width="2"/>
<circle cx="408.6" cy="21.6" r="8" fill="#1193d8"/>
<path d="M406.7,20V27.5 M403,23.8H410.4" stroke="#fff" stroke-width="1.7"/>
<path d="M410.3,16.8V19.6 M408.9,18.2H411.7 M412.5,19.8V22.6" stroke="#fff" stroke-width="1"/>
<!-- construct -->
<path d="M463.2,23.3L472,14.8H480.7L471.8,23.3z" fill="#f3f3f3" stroke="#5a5a5a" stroke-width="1.1" stroke-linejoin="round"/>
<path d="M463.2,23.3H471.8V44.4H463.2z" fill="#dadada" stroke="#5a5a5a" stroke-width="1.1" stroke-linejoin="round"/>
<path d="M472.1,23.3L480.7,14.8V36.4L472.1,44.4z" fill="#4cbf6a"/>
<path d="M484.1,23.3L492.6,14.8V36.4L484.1,44.4z" fill="#ea8c4e"/>
<!-- inspect -->
<g stroke="#666" stroke-width="1.2"><path d="M553.3,22V30.5 M580.5,22V30.5 M555,26.2H579"/></g>
<path d="M554,26.2L557.5,24V28.4z M579.8,26.2L576.3,24V28.4z" fill="#666"/>
<rect x="553" y="32" width="28" height="6" fill="#f5a000"/>
<g stroke="#a86a00" stroke-width="0.8"><path d="M556,32V34 M559.5,32V33.3 M563,32V34 M566.5,32V33.3 M570,32V34 M573.5,32V33.3 M577,32V34"/></g>
<!-- insert bolt -->
<path d="M621,15.5H643L644,17V22L643,22.8H621L620,22V17z" fill="#6fb7ea"/>
<path d="M630,15.5H640V22.8H630z" fill="#5aa5de"/>
<path d="M625,22.8H639V45.5H625z" fill="#79bbec"/>
<g stroke="#4a94d0" stroke-width="0.7"><path d="M625,25.5H639 M625,28H639 M625,30.5H639 M625,33H639 M625,35.5H639 M625,38H639 M625,40.5H639 M625,43H639"/></g>
<path d="M635.6,36.3H640.3V31.6H645.7V36.3H650.4V41.7H645.7V46.4H640.3V41.7H635.6z" fill="#fff"/>
<path d="M636.8,37.5H641.5V32.8H644.5V37.5H649.2V40.5H644.5V45.2H641.5V40.5H636.8z" fill="#22a845"/>
<!-- insert image -->
<rect x="662" y="15" width="29" height="29" fill="#4b9ad6"/>
<rect x="663" y="16" width="27" height="27" fill="#86c6f4"/>
<path d="M663,43V33.5Q668,26 672,28.5Q677,30 680.5,37Q684,32 687,33.5L690,36V43z" fill="#4a90cb"/>
<circle cx="682.9" cy="22.8" r="2.9" fill="#fbf3b8"/>
<!-- select -->
<rect x="722" y="11" width="38" height="38" fill="#0f96d8"/>
<path d="M725.5,14.5H752.5V35.5H725.5z" fill="none" stroke="#8ee27c" stroke-width="1.2" stroke-dasharray="3,2.5"/>
<path d="M746.2,28.3V43.5L749.5,40.4L752.6,46.6L755.2,45.3L752.3,39.2H757z" fill="#fff"/>
<!-- notification triangle -->
<path d="M411.5,80L420,94.8H403z" fill="#f7a21b" stroke="#f7a21b" stroke-width="1" stroke-linejoin="round"/>
<path d="M411.5,84.5V89.5" stroke="#fff" stroke-width="2"/><circle cx="411.5" cy="92" r="1.1" fill="#fff"/>
<rect x="609.5" y="76" width="1.2" height="24" fill="#c9c9c9"/>
<!-- bottom nav -->
<g fill="#222">
<path d="M436.2,861.1h5.7l-2.85,3.1z M547.5,861.1h5.5l-2.75,3.1z M577.4,861.1h5.6l-2.8,3.1z M608.4,861.1h5.6l-2.8,3.1z M638.9,861.1h5.6l-2.8,3.1z"/>
</g>
<g fill="none" stroke="#333" stroke-width="1.1">
<ellipse cx="422.5" cy="862.8" rx="3.4" ry="7.6"/>
<path d="M417.5,860.2Q415,862.5 417.5,865 M426,865.2Q431.5,866 431,862.5Q430.5,860.5 428,859.8"/>
</g>
<path d="M422.2,860.7V864.3 M420.4,862.5H424" stroke="#1a7fe0" stroke-width="1.3"/>
<path d="M423.6,857.5l1.6,1.4l-1.6,1.2 M426.6,859.4l1.6,1.3l-1.6,1.3" stroke="#333" stroke-width="1" fill="none"/>
<path d="M449.8,859.9L453.8,855.6L454.5,857.7L460.5,856.2L460.9,859.9z" fill="#9a9a9a"/>
<rect x="448.4" y="860.2" width="15.2" height="10" rx="1" fill="#fff" stroke="#333" stroke-width="1.1"/>
<rect x="451.2" y="863.2" width="9.6" height="4.3" fill="#aaa" stroke="#333" stroke-width="1"/>
<path d="M477.3,870.3L474.5,864.5Q474,863 475.8,863.4L478.5,865.5V858.5Q478.5,857 479.6,857.3Q480.4,857.6 480.5,858.6V856.3Q480.6,855 481.6,855.1Q482.6,855.2 482.6,856.3V856.8Q482.7,855.8 483.7,856Q484.6,856.2 484.6,857.3V859Q484.8,858 485.8,858.3Q486.6,858.6 486.6,859.6L486.8,865Q486.5,868 485.3,870.3z" fill="#fff" stroke="#222" stroke-width="1.1" stroke-linejoin="round"/>
<path d="M480.5,858.6V863 M482.6,856.8V862.5 M484.6,859V863" stroke="#222" stroke-width="0.8"/>
<circle cx="504.7" cy="862" r="4.6" fill="#dbe9ea" stroke="#333" stroke-width="1.2"/>
<path d="M508.3,865.6L512.2,869.3" stroke="#333" stroke-width="2.6" stroke-linecap="round"/>
<path d="M513.6,855.3V859.2 M511.4,857.3H515.8 M511.4,861.4H515.8" stroke="#333" stroke-width="1"/>
<path d="M525.8,855.5H542 V871H525.8z" fill="none" stroke="#444" stroke-width="0.9" stroke-dasharray="1.6,1.6"/>
<circle cx="532.5" cy="861.8" r="5.3" fill="#dbe9ea" stroke="#333" stroke-width="1.2"/>
<path d="M536.5,865.8L540.7,869.6" stroke="#333" stroke-width="2.6" stroke-linecap="round"/>
<rect x="559.3" y="855.6" width="15" height="11" rx="1.2" fill="#8db3dc" stroke="#333" stroke-width="1.1"/>
<rect x="561.3" y="857.6" width="11" height="7" fill="#a9c8ea" stroke="#3b5f96" stroke-width="0.8"/>
<path d="M564,867V869.3 M569.5,867V869.3 M562.5,869.8H571" stroke="#555" stroke-width="1"/>
<rect x="590.3" y="855.4" width="16" height="15.4" rx="0.8" fill="#6e6e6e"/>
<rect x="591.3" y="856.5" width="2" height="1.9" fill="#ffffff"/><rect x="594.3" y="856.5" width="2" height="1.9" fill="#ffffff"/><rect x="597.3" y="856.5" width="2" height="1.9" fill="#ffffff"/><rect x="600.3" y="856.5" width="2" height="1.9" fill="#ffffff"/><rect x="603.3" y="856.5" width="2" height="1.9" fill="#ffffff"/><rect x="591.3" y="859.4" width="2" height="1.9" fill="#ffffff"/><rect x="594.3" y="859.4" width="2" height="1.9" fill="#ffffff"/><rect x="597.3" y="859.4" width="2" height="1.9" fill="#ffffff"/><rect x="600.3" y="859.4" width="2" height="1.9" fill="#ffffff"/><rect x="603.3" y="859.4" width="2" height="1.9" fill="#ffffff"/><rect x="591.3" y="862.2" width="2" height="1.9" fill="#f0f0f0"/><rect x="594.3" y="862.2" width="2" height="1.9" fill="#f0f0f0"/><rect x="597.3" y="862.2" width="2" height="1.9" fill="#f0f0f0"/><rect x="600.3" y="862.2" width="2" height="1.9" fill="#f0f0f0"/><rect x="603.3" y="862.2" width="2" height="1.9" fill="#f0f0f0"/><rect x="591.3" y="865.0" width="2" height="1.9" fill="#dddddd"/><rect x="594.3" y="865.0" width="2" height="1.9" fill="#dddddd"/><rect x="597.3" y="865.0" width="2" height="1.9" fill="#dddddd"/><rect x="600.3" y="865.0" width="2" height="1.9" fill="#dddddd"/><rect x="603.3" y="865.0" width="2" height="1.9" fill="#dddddd"/><rect x="591.3" y="867.9" width="2" height="1.9" fill="#cfcfcf"/><rect x="594.3" y="867.9" width="2" height="1.9" fill="#cfcfcf"/><rect x="597.3" y="867.9" width="2" height="1.9" fill="#cfcfcf"/><rect x="600.3" y="867.9" width="2" height="1.9" fill="#cfcfcf"/><rect x="603.3" y="867.9" width="2" height="1.9" fill="#cfcfcf"/>
<g fill="#aac7ea" stroke="#2f4f8a" stroke-width="1">
<rect x="620.9" y="855.9" width="7.1" height="6.6" rx="0.6"/><rect x="629.4" y="855.9" width="7.1" height="6.6" rx="0.6"/>
<rect x="620.9" y="863.8" width="7.1" height="6.6" rx="0.6"/><rect x="629.4" y="863.8" width="7.1" height="6.6" rx="0.6"/>
</g>
<g fill="#dce8f6"><rect x="622.8" y="858.2" width="3.3" height="2"/><rect x="631.3" y="858.2" width="3.3" height="2"/><rect x="622.8" y="866.1" width="3.3" height="2"/><rect x="631.3" y="866.1" width="3.3" height="2"/></g>
</svg>
</body></html>
